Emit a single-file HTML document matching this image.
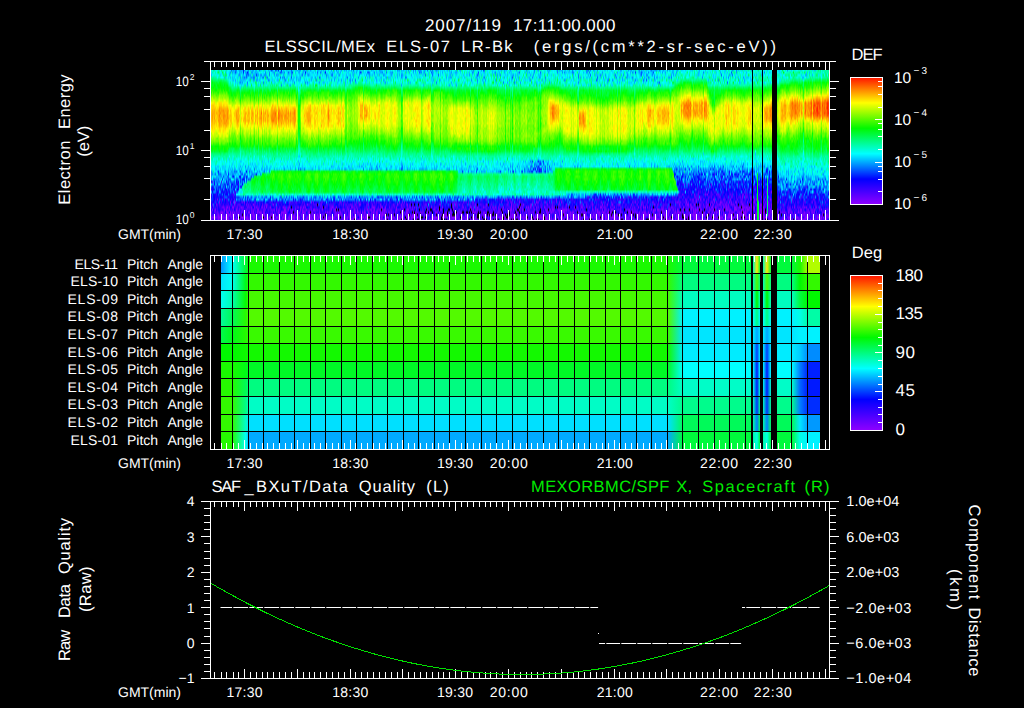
<!DOCTYPE html>
<html><head><meta charset="utf-8"><title>ELS plot</title>
<style>
html,body{margin:0;padding:0;background:#000}
#p{position:relative;width:1024px;height:708px;background:#000;overflow:hidden}
#s{position:absolute;left:211px;top:70px;width:618px;height:150px;display:flex;overflow:hidden}
#s i{display:block;width:1px;height:150px;flex:none}
svg{position:absolute;left:0;top:0}
text{font-family:"Liberation Sans",sans-serif;fill:#fff;stroke:none}
</style></head><body><div id="p">
<div id="s">
<i style="background:linear-gradient(#0fc,#0df,#0bf,#0f8,#0f5,#0f3,#0f2,#0f1,#2f0,#1f0,#5f0,#9f0,#bf0,#ff0,#fd0,#fd0,#fc0,#fb0,#fb0,#fb0,#fb0,#fc0,#fc0,#fe0,#ff0,#bf0,#cf0,#9f0,#7f0,#4f0,#0f0,#0f0,#0f2,#0f7,#0f9,#0fa,#0fd,#0fd,#0df,#0fe,#08f,#08f,#09f,#0af,#00f,#0df,#04f,#20f,#0cf,#20f,#10f,#03f,#20f,#00f,#40f,#10f,#60f,#40f,#60f,#70f)"></i>
<i style="background:linear-gradient(#0ff,#0fa,#0ff,#0f9,#0f4,#0f0,#0f2,#0f1,#2f0,#6f0,#7f0,#bf0,#cf0,#ef0,#fc0,#fc0,#fa0,#fa0,#f90,#f90,#fa0,#fb0,#fc0,#fc0,#fe0,#ef0,#bf0,#af0,#7f0,#6f0,#1f0,#0f0,#0f2,#0f7,#0fa,#0f9,#0fc,#0fe,#0ff,#0fd,#0bf,#08f,#0ff,#0ff,#50f,#09f,#10f,#10f,#00f,#06f,#04f,#03f,#10f,#60f,#10f,#80f,#20f,#40f,#70f,#40f)"></i>
<i style="background:linear-gradient(#0f8,#0fc,#0fd,#0f8,#0f6,#0f2,#0f2,#0f0,#2f0,#2f0,#6f0,#8f0,#df0,#fe0,#fc0,#fc0,#fb0,#fa0,#fb0,#fc0,#fc0,#fc0,#fd0,#fe0,#fe0,#ef0,#cf0,#9f0,#7f0,#3f0,#0f2,#1f0,#0f4,#0f7,#0f8,#0ff,#0fd,#0fe,#0ff,#0ff,#0f9,#0cf,#0cf,#06f,#08f,#09f,#03f,#10f,#07f,#00f,#00f,#10f,#00f,#07f,#50f,#10f,#10f,#40f,#80f,#30f)"></i>
<i style="background:linear-gradient(#0f8,#0fe,#0fc,#0f9,#0f6,#0f2,#0f0,#1f0,#1f0,#4f0,#7f0,#8f0,#cf0,#fd0,#fd0,#fc0,#fa0,#fa0,#fa0,#f90,#fb0,#fb0,#fd0,#fd0,#fe0,#cf0,#bf0,#af0,#8f0,#4f0,#1f0,#1f0,#0f2,#0f7,#0fa,#0fd,#0fc,#0fe,#0ff,#0fe,#0ef,#0af,#0fc,#06f,#01f,#10f,#0af,#03f,#09f,#10f,#00f,#00f,#30f,#20f,#02f,#50f,#60f,#40f,#50f,#80f)"></i>
<i style="background:linear-gradient(#0ef,#0fa,#0fd,#0f9,#0f6,#0f3,#0f1,#0f1,#0f0,#3f0,#6f0,#9f0,#bf0,#df0,#fe0,#fc0,#fc0,#fc0,#fc0,#fd0,#fb0,#fd0,#fe0,#fe0,#df0,#cf0,#bf0,#9f0,#7f0,#4f0,#0f0,#1f0,#0f3,#0f7,#0fa,#0fd,#0fc,#0fa,#0cf,#0bf,#0df,#06f,#0ef,#07f,#0af,#0af,#07f,#09f,#07f,#10f,#20f,#30f,#04f,#00f,#30f,#80f,#50f,#20f,#80f,#50f)"></i>
<i style="background:linear-gradient(#0fe,#0fe,#0fd,#0fa,#0f7,#0f2,#0f3,#0f2,#0f0,#4f0,#4f0,#8f0,#af0,#df0,#fe0,#fe0,#fc0,#fa0,#fd0,#fc0,#fc0,#fc0,#fd0,#ff0,#df0,#bf0,#cf0,#7f0,#7f0,#3f0,#0f0,#1f0,#0f3,#0f7,#0fa,#0fc,#0f9,#0fb,#0ef,#0bf,#0ef,#0df,#0af,#08f,#06f,#09f,#04f,#01f,#02f,#30f,#10f,#01f,#30f,#70f,#20f,#20f,#40f,#40f,#60f,#30f)"></i>
<i style="background:linear-gradient(#0fd,#0f8,#0ef,#0fe,#0f7,#0f3,#0f0,#0f2,#2f0,#2f0,#5f0,#7f0,#af0,#ff0,#ff0,#fd0,#fc0,#fb0,#fb0,#fc0,#fd0,#fe0,#fe0,#fe0,#ef0,#cf0,#bf0,#6f0,#7f0,#3f0,#0f0,#0f2,#0f3,#0f7,#0fa,#0fe,#0fc,#0ff,#0cf,#0ef,#09f,#0fd,#0af,#0af,#07f,#03f,#06f,#05f,#00f,#00f,#01f,#70f,#00f,#40f,#40f,#40f,#60f,#60f,#60f,#50f)"></i>
<i style="background:linear-gradient(#0fa,#0f4,#0fe,#0fa,#0f5,#0f4,#0f0,#0f0,#2f0,#1f0,#5f0,#9f0,#cf0,#fe0,#fe0,#fd0,#fa0,#fb0,#fa0,#fa0,#f90,#fc0,#fc0,#fe0,#df0,#ef0,#9f0,#8f0,#6f0,#2f0,#0f0,#0f0,#0f3,#0f7,#0fa,#0f8,#0fd,#0fe,#0cf,#0df,#02f,#05f,#0bf,#06f,#07f,#0bf,#03f,#02f,#20f,#05f,#20f,#10f,#04f,#20f,#10f,#10f,#40f,#80f,#80f,#80f)"></i>
<i style="background:linear-gradient(#0cf,#0f9,#0fa,#0fa,#0f6,#0f1,#0f1,#0f0,#2f0,#5f0,#9f0,#bf0,#ef0,#fd0,#fc0,#f90,#f80,#f90,#f70,#f90,#f90,#f90,#fa0,#fc0,#fd0,#ff0,#df0,#af0,#9f0,#7f0,#2f0,#1f0,#0f1,#0f7,#0fb,#0f9,#0fd,#0ff,#0fc,#0fe,#0cf,#07f,#0af,#0cf,#07f,#0df,#02f,#07f,#0bf,#02f,#02f,#05f,#80f,#50f,#30f,#10f,#20f,#50f,#80f,#50f)"></i>
<i style="background:linear-gradient(#0fd,#0fd,#0cf,#0fd,#0f5,#0f1,#0f0,#1f0,#3f0,#4f0,#8f0,#9f0,#cf0,#fd0,#fc0,#fa0,#fa0,#f80,#fb0,#f90,#fa0,#fa0,#fb0,#fd0,#fd0,#ef0,#ef0,#9f0,#8f0,#6f0,#2f0,#1f0,#0f3,#0f5,#0f9,#0fb,#0ff,#0ff,#0fe,#0bf,#0cf,#06f,#09f,#0bf,#0df,#05f,#01f,#03f,#08f,#02f,#00f,#40f,#01f,#40f,#30f,#30f,#60f,#70f,#80f,#80f)"></i>
<i style="background:linear-gradient(#0f6,#0df,#0ef,#0ff,#0f5,#0f2,#0f1,#0f0,#1f0,#4f0,#7f0,#9f0,#cf0,#fd0,#fc0,#fa0,#f90,#fa0,#fa0,#fb0,#f90,#fb0,#fb0,#fe0,#ff0,#ef0,#cf0,#9f0,#7f0,#3f0,#1f0,#0f1,#0f3,#0f7,#0fa,#0fc,#0ef,#0fe,#0ef,#0ff,#0ef,#0af,#08f,#0fe,#40f,#07f,#09f,#04f,#10f,#02f,#10f,#30f,#40f,#20f,#40f,#40f,#80f,#60f,#80f,#50f)"></i>
<i style="background:linear-gradient(#0fd,#0f4,#0fd,#0ff,#0f7,#0f3,#0f1,#0f1,#1f0,#3f0,#8f0,#8f0,#bf0,#ef0,#fe0,#fb0,#f90,#fa0,#fa0,#fb0,#fb0,#fb0,#fd0,#fe0,#fe0,#df0,#bf0,#af0,#7f0,#5f0,#0f1,#0f1,#0f3,#0f8,#0f9,#0ff,#0fd,#0fb,#0cf,#0cf,#0fe,#0cf,#0df,#01f,#0ef,#07f,#07f,#01f,#10f,#07f,#10f,#06f,#10f,#20f,#60f,#20f,#80f,#70f,#70f,#50f)"></i>
<i style="background:linear-gradient(#0fc,#0f9,#0f6,#0ef,#0f6,#0f3,#0f3,#0f0,#3f0,#5f0,#7f0,#af0,#cf0,#fe0,#fc0,#fb0,#f80,#f90,#f80,#f80,#fa0,#fa0,#fb0,#fd0,#fd0,#fe0,#df0,#bf0,#7f0,#6f0,#1f0,#2f0,#0f3,#0f6,#0f9,#0f9,#0ef,#0fd,#0cf,#0df,#0ff,#0cf,#04f,#0ff,#09f,#06f,#03f,#08f,#01f,#00f,#30f,#10f,#01f,#40f,#70f,#40f,#50f,#50f,#70f,#50f)"></i>
<i style="background:linear-gradient(#0fc,#0ff,#0f8,#0f7,#0f7,#0f3,#0f0,#0f1,#0f0,#5f0,#8f0,#9f0,#ef0,#fe0,#fd0,#fb0,#fa0,#f90,#f80,#f90,#f90,#f90,#fc0,#fd0,#fe0,#ef0,#df0,#af0,#8f0,#6f0,#1f0,#0f0,#0f1,#0f6,#0fa,#0fa,#0fc,#0fd,#0df,#0cf,#0bf,#0af,#0af,#0af,#09f,#03f,#06f,#04f,#10f,#05f,#05f,#50f,#20f,#10f,#50f,#80f,#60f,#50f,#60f,#50f)"></i>
<i style="background:linear-gradient(#0df,#0f7,#0f5,#0bf,#0f8,#0f3,#0f2,#1f0,#2f0,#3f0,#7f0,#8f0,#df0,#fe0,#fe0,#fb0,#fa0,#fb0,#f90,#fa0,#fa0,#f90,#fb0,#fc0,#fe0,#ef0,#cf0,#8f0,#8f0,#4f0,#1f0,#0f1,#0f1,#0f7,#0f9,#0fb,#0ff,#0ef,#0cf,#0df,#06f,#09f,#0bf,#09f,#0df,#04f,#01f,#10f,#03f,#10f,#06f,#00f,#00f,#20f,#30f,#40f,#00f,#50f,#80f,#70f)"></i>
<i style="background:linear-gradient(#0f9,#0cf,#0f6,#0fb,#0f8,#0f4,#0f1,#0f1,#1f0,#6f0,#7f0,#9f0,#bf0,#fe0,#fd0,#fb0,#fa0,#fa0,#fa0,#fa0,#f80,#fa0,#fa0,#fe0,#ff0,#ef0,#ef0,#9f0,#7f0,#4f0,#1f0,#1f0,#0f2,#0f8,#0f8,#0f9,#0fa,#0ef,#0fd,#0ef,#0df,#08f,#0bf,#07f,#10f,#08f,#0fe,#10f,#10f,#10f,#06f,#30f,#20f,#30f,#60f,#80f,#70f,#80f,#70f,#50f)"></i>
<i style="background:linear-gradient(#0fd,#0ff,#0fe,#0fe,#0fa,#0f6,#0f1,#0f0,#0f0,#3f0,#6f0,#9f0,#cf0,#ef0,#fd0,#fa0,#f90,#f80,#f80,#f80,#fa0,#fa0,#fc0,#fe0,#ff0,#cf0,#ef0,#9f0,#9f0,#2f0,#1f0,#2f0,#0f3,#0f7,#0f9,#0fd,#0ef,#0ff,#0ef,#0fe,#0df,#0ff,#06f,#0af,#07f,#01f,#05f,#06f,#20f,#00f,#03f,#30f,#30f,#30f,#80f,#30f,#80f,#50f,#80f,#80f)"></i>
<i style="background:linear-gradient(#0ff,#0ef,#0fe,#0cf,#0fc,#0f9,#0f6,#0f1,#1f0,#0f0,#4f0,#8f0,#af0,#cf0,#ef0,#fd0,#fa0,#fb0,#fb0,#fa0,#fb0,#fb0,#fd0,#ef0,#ef0,#cf0,#af0,#7f0,#7f0,#4f0,#2f0,#0f2,#0f6,#0f9,#0fa,#0df,#0ff,#0ff,#0fe,#0bf,#08f,#02f,#06f,#04f,#03f,#03f,#0af,#01f,#03f,#07f,#10f,#07f,#20f,#40f,#40f,#40f,#60f,#80f,#70f,#80f)"></i>
<i style="background:linear-gradient(#0fe,#0cf,#0af,#0fd,#0fe,#0fd,#0f9,#0f3,#0f3,#0f1,#2f0,#3f0,#7f0,#9f0,#ef0,#df0,#fe0,#fe0,#fc0,#fc0,#fe0,#fe0,#ff0,#ef0,#af0,#9f0,#6f0,#5f0,#4f0,#0f0,#1f0,#0f5,#0f7,#0f9,#0ff,#0f9,#0df,#0ef,#0bf,#0df,#0df,#0bf,#0ef,#04f,#09f,#07f,#03f,#04f,#10f,#02f,#20f,#03f,#01f,#10f,#70f,#70f,#01f,#80f,#40f,#50f)"></i>
<i style="background:linear-gradient(#0ff,#08f,#0fc,#0bf,#0ef,#0f9,#0f9,#0f4,#0f1,#1f0,#2f0,#4f0,#8f0,#af0,#ff0,#fe0,#fb0,#fc0,#fb0,#fc0,#fb0,#fd0,#fc0,#df0,#cf0,#cf0,#9f0,#5f0,#6f0,#2f0,#1f0,#0f4,#0f5,#0f9,#0fa,#0fd,#0fd,#0ff,#0ff,#0bf,#0cf,#0af,#0ef,#06f,#05f,#0bf,#09f,#08f,#07f,#02f,#10f,#10f,#80f,#50f,#10f,#30f,#80f,#80f,#60f,#30f)"></i>
<i style="background:linear-gradient(#04f,#0fa,#0ff,#0fd,#0fd,#0fe,#0fa,#0f7,#0f3,#0f0,#0f0,#4f0,#7f0,#af0,#df0,#fe0,#fe0,#fd0,#fc0,#fc0,#fc0,#fc0,#fe0,#df0,#bf0,#8f0,#6f0,#5f0,#5f0,#3f0,#0f1,#0f5,#0f5,#0f9,#0fa,#0fb,#0fe,#0fc,#0cf,#0df,#09f,#0bf,#0bf,#0fe,#06f,#02f,#10f,#05f,#04f,#20f,#01f,#40f,#10f,#04f,#20f,#40f,#40f,#50f,#70f,#50f)"></i>
<i style="background:linear-gradient(#0cf,#09f,#0df,#0bf,#0cf,#0fb,#0f8,#0f9,#0f5,#0f2,#0f1,#3f0,#4f0,#9f0,#af0,#ff0,#ff0,#ff0,#ff0,#ff0,#ff0,#df0,#cf0,#af0,#af0,#7f0,#6f0,#4f0,#2f0,#0f0,#0f1,#0f5,#0f8,#0fa,#0fc,#0ef,#0fe,#0cf,#0ef,#0af,#0af,#08f,#03f,#0ff,#08f,#00f,#07f,#05f,#02f,#30f,#10f,#10f,#00f,#30f,#80f,#30f,#70f,#80f,#50f,#60f)"></i>
<i style="background:linear-gradient(#08f,#0cf,#0ef,#0df,#0bf,#0fd,#0fa,#0f8,#0f5,#0f1,#2f0,#2f0,#5f0,#8f0,#cf0,#ef0,#ff0,#fe0,#ff0,#fe0,#fe0,#ef0,#ef0,#cf0,#bf0,#8f0,#5f0,#4f0,#4f0,#2f0,#0f0,#0f6,#0f6,#0f9,#0fd,#0fb,#0df,#0ef,#0fe,#0fd,#0bf,#09f,#00f,#0fc,#06f,#04f,#03f,#02f,#09f,#40f,#40f,#10f,#80f,#10f,#80f,#60f,#50f,#80f,#70f,#30f)"></i>
<i style="background:linear-gradient(#0bf,#0bf,#0df,#0cf,#0fd,#0ff,#0ff,#0f8,#0f4,#0f1,#1f0,#5f0,#6f0,#9f0,#cf0,#df0,#fe0,#fc0,#fc0,#fe0,#fd0,#fe0,#ef0,#cf0,#af0,#6f0,#6f0,#5f0,#3f0,#1f0,#0f0,#0f4,#0f5,#0f9,#0fa,#0f9,#0fe,#0fd,#0cf,#0af,#06f,#0bf,#07f,#08f,#04f,#04f,#03f,#01f,#40f,#05f,#01f,#60f,#08f,#80f,#30f,#00f,#70f,#60f,#50f,#80f)"></i>
<i style="background:linear-gradient(#08f,#05f,#0df,#0ff,#0af,#0cf,#0f9,#0f7,#0f4,#0f1,#1f0,#3f0,#af0,#9f0,#ff0,#ff0,#fc0,#fc0,#fc0,#fd0,#fd0,#fe0,#ef0,#ef0,#af0,#9f0,#6f0,#4f0,#3f0,#0f0,#1f0,#0f2,#0f5,#0f8,#0fb,#0fb,#0ef,#0fe,#0fe,#0bf,#08f,#0af,#0ff,#0bf,#0bf,#07f,#01f,#0df,#30f,#30f,#20f,#01f,#80f,#40f,#30f,#30f,#40f,#60f,#40f,#80f)"></i>
<i style="background:linear-gradient(#08f,#0af,#0ef,#0fd,#0ef,#0fd,#0fe,#0f8,#0f3,#2f0,#2f0,#6f0,#9f0,#cf0,#ff0,#fe0,#fb0,#f90,#f90,#f90,#fb0,#fc0,#fd0,#ff0,#df0,#bf0,#af0,#6f0,#5f0,#3f0,#0f0,#0f2,#0f5,#0f8,#0f8,#0fe,#0fb,#0fc,#0fb,#0ff,#06f,#0df,#0bf,#04f,#00f,#03f,#08f,#05f,#05f,#0ff,#04f,#0bf,#20f,#20f,#40f,#80f,#60f,#30f,#80f,#80f)"></i>
<i style="background:linear-gradient(#0ff,#0df,#0fd,#0cf,#0fa,#0cf,#0f8,#0f6,#0f1,#1f0,#4f0,#6f0,#9f0,#cf0,#fe0,#fd0,#fa0,#fb0,#fa0,#fa0,#f90,#fa0,#fc0,#fd0,#ef0,#ef0,#8f0,#9f0,#5f0,#4f0,#1f0,#0f3,#0f5,#0f8,#0fa,#0fd,#0ff,#0fe,#0ff,#0ef,#0bf,#0cf,#0df,#04f,#03f,#01f,#06f,#00f,#05f,#0ff,#03f,#05f,#10f,#40f,#60f,#50f,#50f,#80f,#20f,#80f)"></i>
<i style="background:linear-gradient(#0cf,#0ff,#0af,#0df,#0ef,#0fb,#0fc,#0f4,#0f2,#2f0,#3f0,#4f0,#8f0,#bf0,#ef0,#fb0,#fa0,#fa0,#fb0,#fa0,#f90,#fc0,#fc0,#ff0,#df0,#bf0,#8f0,#7f0,#5f0,#4f0,#2f0,#0f3,#0f6,#0f8,#0fb,#0ff,#0fe,#0ef,#0df,#0cf,#0ff,#0bf,#0cf,#09f,#00f,#30f,#10f,#20f,#0df,#0fe,#03f,#06f,#01f,#50f,#20f,#30f,#60f,#80f,#80f,#80f)"></i>
<i style="background:linear-gradient(#0af,#0af,#08f,#0fb,#0fb,#0af,#0fd,#0f9,#0f3,#0f1,#2f0,#4f0,#5f0,#9f0,#ef0,#fd0,#fd0,#fe0,#fb0,#fc0,#fd0,#fe0,#ef0,#df0,#cf0,#8f0,#7f0,#5f0,#5f0,#2f0,#1f0,#0f6,#0f6,#0f9,#0fa,#0fd,#0fc,#0df,#0df,#0af,#0af,#0ff,#00f,#0bf,#0cf,#0af,#09f,#0fc,#0fd,#0ff,#05f,#07f,#20f,#50f,#40f,#70f,#50f,#50f,#000,#80f)"></i>
<i style="background:linear-gradient(#09f,#0bf,#0bf,#09f,#0bf,#08f,#0fe,#0cf,#0f8,#0f5,#0f4,#0f2,#1f0,#4f0,#8f0,#af0,#bf0,#bf0,#cf0,#cf0,#bf0,#bf0,#8f0,#6f0,#6f0,#5f0,#1f0,#0f0,#0f3,#0f2,#0f5,#0f7,#0fb,#0fd,#0fe,#0fd,#0cf,#0fd,#0af,#0fe,#04f,#0af,#00f,#04f,#03f,#09f,#20f,#0fe,#0df,#0fb,#08f,#03f,#10f,#40f,#50f,#30f,#30f,#60f,#60f,#80f)"></i>
<i style="background:linear-gradient(#0bf,#0af,#0fe,#0fb,#0bf,#0cf,#0cf,#0f8,#0f4,#0f1,#2f0,#3f0,#7f0,#9f0,#cf0,#ef0,#ff0,#fd0,#fe0,#fc0,#fd0,#ff0,#ef0,#bf0,#bf0,#9f0,#6f0,#3f0,#1f0,#1f0,#0f0,#0f5,#0f8,#0f8,#0f9,#0fb,#0df,#0ff,#0ef,#0af,#0bf,#06f,#0cf,#07f,#08f,#09f,#10f,#0df,#0df,#0fc,#08f,#06f,#40f,#00f,#80f,#40f,#70f,#30f,#80f,#20f)"></i>
<i style="background:linear-gradient(#0af,#0df,#0cf,#0af,#0cf,#09f,#0fe,#0f9,#0f4,#0f0,#0f1,#2f0,#5f0,#9f0,#df0,#df0,#ff0,#ef0,#ef0,#fe0,#ff0,#ef0,#df0,#bf0,#8f0,#6f0,#5f0,#4f0,#2f0,#2f0,#0f2,#0f5,#0f7,#0f7,#0fb,#0fe,#0ff,#0ff,#0cf,#0fd,#0bf,#05f,#0fe,#01f,#05f,#00f,#0f9,#0f8,#0ef,#0fc,#0af,#03f,#60f,#01f,#60f,#60f,#30f,#000,#80f,#60f)"></i>
<i style="background:linear-gradient(#02f,#02f,#0bf,#0af,#0bf,#0fe,#0df,#0f6,#0f3,#0f1,#2f0,#3f0,#7f0,#9f0,#bf0,#ff0,#fd0,#fd0,#fe0,#fc0,#fb0,#ef0,#ff0,#cf0,#af0,#9f0,#6f0,#5f0,#4f0,#2f0,#0f1,#0f3,#0f8,#0f9,#0fc,#0fc,#0ff,#0cf,#0fe,#0fd,#0ef,#0df,#06f,#00f,#0bf,#0bf,#0fa,#0f9,#0f8,#0f7,#03f,#0bf,#30f,#10f,#60f,#40f,#40f,#80f,#80f,#40f)"></i>
<i style="background:linear-gradient(#08f,#0ef,#0ff,#06f,#0cf,#0df,#0f8,#0f7,#0f3,#0f0,#5f0,#4f0,#7f0,#bf0,#cf0,#fd0,#fc0,#fc0,#fb0,#fa0,#fb0,#fc0,#fe0,#ef0,#cf0,#cf0,#9f0,#5f0,#4f0,#3f0,#1f0,#0f4,#0f6,#0f9,#0fa,#0fc,#0fe,#0fe,#0fe,#0ff,#0ff,#06f,#04f,#02f,#03f,#0f8,#0f6,#0f6,#0f9,#0f8,#0df,#09f,#80f,#40f,#10f,#40f,#70f,#80f,#80f,#70f)"></i>
<i style="background:linear-gradient(#0bf,#09f,#0df,#0af,#0cf,#0ef,#0f7,#0f6,#0f3,#1f0,#2f0,#5f0,#8f0,#bf0,#df0,#fc0,#fd0,#fa0,#fa0,#fa0,#fa0,#fb0,#fe0,#ef0,#df0,#bf0,#af0,#8f0,#6f0,#2f0,#2f0,#0f3,#0f5,#0f6,#0fa,#0ff,#0fd,#0fe,#08f,#0cf,#0bf,#07f,#09f,#0ff,#0df,#0f6,#0f3,#0f8,#0f7,#0fb,#03f,#03f,#00f,#10f,#20f,#40f,#30f,#40f,#70f,#30f)"></i>
<i style="background:linear-gradient(#0ef,#09f,#05f,#06f,#0fe,#0fc,#0df,#0f8,#0f4,#1f0,#1f0,#5f0,#7f0,#af0,#cf0,#ef0,#fe0,#fb0,#fe0,#fd0,#fc0,#ff0,#ef0,#df0,#bf0,#9f0,#7f0,#6f0,#3f0,#2f0,#1f0,#0f3,#0f7,#0f8,#0fc,#0fe,#0fd,#0ef,#0fd,#0df,#00f,#0fd,#01f,#03f,#05f,#0f9,#0f6,#0f8,#0f7,#0fd,#0af,#0af,#20f,#70f,#20f,#60f,#60f,#20f,#80f,#80f)"></i>
<i style="background:linear-gradient(#0fe,#01f,#08f,#0bf,#0ff,#07f,#0af,#0f7,#0f3,#0f0,#3f0,#5f0,#8f0,#9f0,#df0,#fe0,#fd0,#fd0,#fb0,#fc0,#fb0,#fe0,#fc0,#df0,#cf0,#9f0,#7f0,#4f0,#4f0,#2f0,#0f2,#0f5,#0f6,#0f9,#0fa,#0fb,#0fe,#0ff,#0ef,#0af,#0af,#0af,#05f,#0af,#0f9,#0f4,#0f7,#0f8,#0f7,#0fe,#04f,#20f,#50f,#30f,#60f,#40f,#20f,#60f,#70f,#80f)"></i>
<i style="background:linear-gradient(#08f,#08f,#05f,#0fe,#0df,#0ff,#0fb,#0f7,#0f3,#0f0,#2f0,#6f0,#8f0,#bf0,#ef0,#fc0,#fb0,#fa0,#fb0,#fc0,#fa0,#fb0,#ff0,#ef0,#bf0,#af0,#9f0,#6f0,#5f0,#4f0,#2f0,#0f3,#0f6,#0f9,#0f9,#0f8,#0fb,#0fa,#0af,#0cf,#0fc,#0ff,#0ff,#04f,#0f7,#0f5,#0f8,#0f6,#0f9,#0fd,#04f,#09f,#00f,#60f,#50f,#30f,#80f,#30f,#50f,#80f)"></i>
<i style="background:linear-gradient(#0fb,#0ef,#0bf,#0df,#0bf,#0fd,#0fe,#0f8,#0f1,#0f0,#2f0,#5f0,#8f0,#af0,#ef0,#fe0,#fc0,#fb0,#fc0,#fb0,#fb0,#fe0,#ff0,#ef0,#cf0,#cf0,#8f0,#5f0,#2f0,#2f0,#1f0,#0f4,#0f4,#0f8,#0fc,#0fc,#0ff,#0fc,#0ef,#0cf,#06f,#0af,#0cf,#06f,#0f6,#0f7,#0f6,#0f8,#0f9,#0fd,#0cf,#02f,#30f,#30f,#50f,#40f,#80f,#40f,#60f,#50f)"></i>
<i style="background:linear-gradient(#0bf,#0fb,#0af,#0af,#0f5,#0fb,#0ef,#0f8,#0f3,#0f3,#0f0,#2f0,#4f0,#9f0,#cf0,#bf0,#ff0,#fe0,#fe0,#ff0,#fe0,#df0,#ef0,#bf0,#af0,#7f0,#5f0,#3f0,#1f0,#0f0,#0f1,#0f6,#0f7,#0fb,#0f8,#0fd,#0fc,#0cf,#0fe,#0af,#0bf,#0df,#09f,#05f,#0f5,#0f7,#0f7,#0f9,#0f8,#0fd,#09f,#05f,#00f,#40f,#40f,#30f,#10f,#80f,#000,#80f)"></i>
<i style="background:linear-gradient(#0df,#09f,#0ef,#09f,#0df,#0fd,#0f3,#0f7,#0f4,#2f0,#3f0,#5f0,#8f0,#bf0,#ef0,#fd0,#fb0,#fb0,#fb0,#f90,#fc0,#fc0,#fe0,#ff0,#cf0,#cf0,#8f0,#4f0,#4f0,#2f0,#2f0,#0f4,#0f5,#0f9,#0fa,#0fe,#0ff,#0ef,#0df,#0ef,#09f,#0af,#04f,#0f3,#0f3,#0f3,#0f4,#0f5,#0f7,#0fb,#04f,#07f,#30f,#10f,#70f,#60f,#60f,#50f,#60f,#80f)"></i>
<i style="background:linear-gradient(#0af,#09f,#0fa,#0af,#0fb,#0ef,#0fd,#0f7,#0f2,#1f0,#1f0,#4f0,#7f0,#cf0,#fe0,#fc0,#fb0,#f90,#fa0,#fb0,#fa0,#fc0,#ff0,#ff0,#df0,#cf0,#8f0,#7f0,#5f0,#4f0,#1f0,#0f3,#0f6,#0f7,#0f9,#0fa,#0fd,#0bf,#0ff,#0ff,#0bf,#07f,#0cf,#0f3,#0f1,#0f2,#0f4,#0f5,#0f6,#0fe,#09f,#0cf,#20f,#30f,#20f,#50f,#60f,#70f,#50f,#40f)"></i>
<i style="background:linear-gradient(#09f,#0df,#0af,#07f,#09f,#0fb,#0ef,#0f9,#0f4,#0f0,#2f0,#4f0,#6f0,#9f0,#cf0,#df0,#fd0,#fb0,#fb0,#fc0,#fc0,#fd0,#ef0,#cf0,#bf0,#af0,#6f0,#5f0,#3f0,#2f0,#0f1,#0f6,#0f7,#0f9,#0fb,#0ef,#0ef,#0ff,#0cf,#0ef,#0fd,#09f,#07f,#0f2,#0f1,#0f2,#0f4,#0f3,#0f6,#0fa,#0cf,#0af,#00f,#80f,#00f,#60f,#80f,#70f,#80f,#70f)"></i>
<i style="background:linear-gradient(#0fe,#0cf,#0bf,#07f,#0af,#0fc,#0ff,#0fc,#0f8,#0f3,#0f2,#0f0,#4f0,#7f0,#8f0,#df0,#ff0,#ef0,#ff0,#ef0,#ff0,#bf0,#cf0,#9f0,#7f0,#6f0,#4f0,#1f0,#0f0,#0f1,#0f5,#0f7,#0fa,#0f9,#0ff,#0fd,#0fe,#0df,#0ef,#06f,#0bf,#09f,#0f3,#0f2,#0f0,#0f2,#0f3,#0f5,#0f6,#0fa,#09f,#04f,#40f,#50f,#70f,#50f,#20f,#80f,#80f,#50f)"></i>
<i style="background:linear-gradient(#0bf,#0af,#0bf,#0fa,#0fb,#0f5,#0fa,#0f6,#0f2,#0f0,#3f0,#5f0,#8f0,#9f0,#ff0,#fe0,#fb0,#fc0,#fa0,#fb0,#fa0,#fc0,#ff0,#ff0,#cf0,#bf0,#8f0,#8f0,#5f0,#3f0,#2f0,#0f4,#0f6,#0fa,#0f9,#0fb,#0fe,#0df,#0bf,#0fb,#0ff,#07f,#0f2,#0f0,#0f2,#0f3,#0f5,#0f5,#0f6,#0f9,#07f,#02f,#50f,#30f,#40f,#40f,#50f,#30f,#40f,#50f)"></i>
<i style="background:linear-gradient(#0bf,#0bf,#02f,#0df,#09f,#0f6,#0f6,#0f7,#0f4,#1f0,#2f0,#3f0,#5f0,#bf0,#ef0,#fd0,#fd0,#fe0,#fb0,#fc0,#fd0,#fe0,#ff0,#df0,#af0,#8f0,#8f0,#6f0,#3f0,#3f0,#0f1,#0f3,#0f7,#0f8,#0fb,#0fc,#0fc,#0fd,#0cf,#0bf,#0ef,#01f,#0f2,#0f2,#0f4,#0f5,#0f3,#0f6,#0f7,#0fd,#07f,#0fb,#01f,#20f,#70f,#20f,#40f,#10f,#80f,#10f)"></i>
<i style="background:linear-gradient(#0fe,#0bf,#0af,#0af,#0af,#0fe,#0fa,#0f7,#0f2,#1f0,#3f0,#6f0,#8f0,#bf0,#fe0,#fc0,#fb0,#f90,#fa0,#fb0,#fb0,#fa0,#fd0,#fe0,#df0,#bf0,#9f0,#7f0,#6f0,#4f0,#0f0,#0f1,#0f6,#0f6,#0fa,#0fd,#0ef,#0fc,#0df,#0ff,#09f,#0cf,#0f5,#0f1,#0f2,#0f4,#0f5,#0f6,#0f7,#0f9,#0df,#0cf,#03f,#40f,#50f,#70f,#80f,#50f,#30f,#70f)"></i>
<i style="background:linear-gradient(#0fc,#0df,#09f,#0ff,#0df,#0fa,#0cf,#0f7,#0f6,#0f3,#0f4,#2f0,#3f0,#6f0,#af0,#df0,#fe0,#fe0,#ff0,#fd0,#fe0,#ff0,#df0,#9f0,#7f0,#7f0,#5f0,#2f0,#1f0,#0f2,#0f4,#0f7,#0f8,#0f8,#0fc,#0ff,#0ef,#0df,#0ef,#0df,#0df,#0df,#0f3,#0f2,#0f5,#0f5,#0f5,#0f3,#0f9,#0fc,#07f,#0ff,#10f,#01f,#40f,#80f,#60f,#30f,#50f,#40f)"></i>
<i style="background:linear-gradient(#06f,#0ff,#0ef,#0fb,#0bf,#0fd,#0fd,#0f6,#0f3,#0f1,#4f0,#5f0,#8f0,#bf0,#fe0,#fd0,#fb0,#fb0,#fb0,#fa0,#fb0,#fc0,#fd0,#ff0,#df0,#cf0,#bf0,#7f0,#5f0,#3f0,#2f0,#0f3,#0f5,#0f7,#0f9,#0f9,#0fd,#0ef,#0ff,#0ef,#09f,#0fe,#0f3,#0f4,#0f3,#0f5,#0f4,#0f6,#0f7,#0df,#0bf,#08f,#40f,#40f,#40f,#20f,#80f,#30f,#60f,#40f)"></i>
<i style="background:linear-gradient(#0bf,#0fc,#09f,#0bf,#0df,#0cf,#0f5,#0f7,#0f1,#1f0,#2f0,#6f0,#7f0,#bf0,#ff0,#fd0,#fc0,#fb0,#fa0,#f90,#fb0,#fb0,#fd0,#ef0,#ef0,#df0,#bf0,#6f0,#4f0,#3f0,#1f0,#0f2,#0f6,#0f7,#0f9,#0fa,#0fe,#0ff,#0fe,#0ff,#0df,#08f,#0f4,#0f1,#0f3,#0f3,#0f5,#0f4,#0f6,#0fc,#0cf,#08f,#20f,#20f,#00f,#40f,#80f,#60f,#60f,#80f)"></i>
<i style="background:linear-gradient(#0cf,#0fe,#08f,#0df,#0ff,#0fa,#0df,#0f7,#0f1,#2f0,#5f0,#6f0,#af0,#df0,#fe0,#fc0,#f90,#f60,#f90,#f80,#f90,#fa0,#fc0,#fd0,#ff0,#df0,#af0,#8f0,#7f0,#5f0,#2f0,#0f2,#0f4,#0f7,#0f9,#0fa,#0fa,#0fc,#0ef,#0af,#0ef,#0cf,#0f1,#0f0,#0f0,#1f0,#0f3,#0f3,#0f4,#0f9,#08f,#0af,#10f,#00f,#60f,#40f,#70f,#80f,#70f,#30f)"></i>
<i style="background:linear-gradient(#0fc,#0ef,#0ef,#08f,#0fe,#0fa,#0fd,#0f9,#0f7,#0f4,#0f1,#2f0,#5f0,#9f0,#bf0,#ef0,#ff0,#fe0,#fd0,#fd0,#fd0,#ef0,#ef0,#bf0,#9f0,#9f0,#5f0,#3f0,#2f0,#0f0,#0f3,#0f6,#0f8,#0f9,#0fe,#0fb,#0cf,#0df,#0bf,#0bf,#0cf,#0f1,#1f0,#1f0,#0f0,#0f1,#0f2,#0f3,#0f1,#0fc,#06f,#0bf,#30f,#60f,#70f,#30f,#30f,#50f,#60f,#70f)"></i>
<i style="background:linear-gradient(#0f9,#0df,#0cf,#07f,#0ff,#07f,#0f7,#0f7,#0f4,#1f0,#3f0,#5f0,#9f0,#bf0,#ff0,#fd0,#fb0,#fa0,#fa0,#f90,#fa0,#fc0,#fd0,#ff0,#df0,#cf0,#8f0,#6f0,#5f0,#4f0,#2f0,#0f3,#0f5,#0f8,#0fa,#0fc,#0fd,#0fb,#0fb,#0ef,#0af,#0f0,#1f0,#1f0,#1f0,#0f0,#0f2,#0f3,#0f6,#0f8,#0cf,#06f,#00f,#20f,#30f,#60f,#70f,#70f,#000,#80f)"></i>
<i style="background:linear-gradient(#0bf,#0ff,#08f,#0fc,#0ef,#0f9,#0fb,#0f8,#0f2,#0f2,#2f0,#1f0,#8f0,#9f0,#df0,#df0,#fe0,#fb0,#fb0,#fc0,#fc0,#ff0,#df0,#cf0,#9f0,#9f0,#7f0,#4f0,#3f0,#3f0,#2f0,#0f2,#0f8,#0f8,#0ff,#0fc,#0df,#0ef,#0df,#0af,#07f,#0f3,#0f0,#0f1,#0f2,#0f2,#0f2,#0f4,#0f5,#0fd,#09f,#02f,#01f,#40f,#70f,#60f,#70f,#80f,#80f,#50f)"></i>
<i style="background:linear-gradient(#0df,#08f,#09f,#0f4,#0fb,#0df,#0fc,#0f6,#0f4,#0f0,#4f0,#5f0,#6f0,#cf0,#df0,#fe0,#fb0,#f90,#fc0,#fa0,#fa0,#fd0,#fe0,#df0,#cf0,#af0,#8f0,#7f0,#5f0,#1f0,#1f0,#0f2,#0f5,#0f9,#0fa,#0fd,#0ff,#0fb,#0ff,#0cf,#0ef,#0f3,#0f2,#0f0,#0f1,#0f3,#0f5,#0f3,#0f5,#0f9,#06f,#0df,#06f,#50f,#20f,#60f,#10f,#40f,#40f,#70f)"></i>
<i style="background:linear-gradient(#0ef,#0fb,#0bf,#09f,#0fc,#0f8,#0ef,#0f7,#0f4,#0f3,#1f0,#3f0,#5f0,#af0,#df0,#cf0,#fc0,#fd0,#fc0,#fd0,#fd0,#ef0,#ef0,#bf0,#bf0,#8f0,#7f0,#4f0,#4f0,#3f0,#0f1,#0f4,#0f7,#0fb,#0fb,#0fe,#0fe,#0ef,#0bf,#0bf,#0bf,#0f7,#0f2,#0f3,#0f4,#0f4,#0f6,#0f7,#0f6,#0fa,#04f,#0df,#01f,#70f,#80f,#00f,#30f,#60f,#80f,#50f)"></i>
<i style="background:linear-gradient(#0fe,#0df,#0fe,#07f,#0df,#0fd,#0fb,#0f6,#0f2,#1f0,#2f0,#6f0,#7f0,#af0,#ef0,#fe0,#fb0,#fa0,#fa0,#fa0,#fa0,#fb0,#fd0,#fe0,#df0,#cf0,#af0,#7f0,#4f0,#5f0,#1f0,#0f2,#0f5,#0f8,#0f8,#0fc,#0fe,#0ff,#0cf,#0bf,#0ff,#0f4,#0f0,#0f3,#0f3,#0f5,#0f7,#0f5,#0f6,#0fc,#0bf,#09f,#00f,#50f,#30f,#30f,#20f,#80f,#80f,#70f)"></i>
<i style="background:linear-gradient(#0af,#0fd,#0fc,#0fc,#07f,#0fd,#0fa,#0f8,#0f2,#0f0,#3f0,#6f0,#9f0,#af0,#ef0,#fe0,#fd0,#fc0,#f90,#fc0,#fb0,#fd0,#fd0,#df0,#bf0,#cf0,#8f0,#5f0,#3f0,#3f0,#1f0,#0f4,#0f5,#0f8,#0fa,#0f9,#0cf,#0fe,#0ff,#0ef,#0fc,#0f4,#0f1,#0f0,#0f2,#0f4,#0f5,#0f5,#0f6,#0ef,#0df,#04f,#10f,#20f,#30f,#50f,#40f,#20f,#40f,#80f)"></i>
<i style="background:linear-gradient(#0ef,#08f,#07f,#0fe,#09f,#0f9,#0fb,#0f9,#0f5,#1f0,#0f1,#4f0,#7f0,#9f0,#cf0,#ff0,#ff0,#fd0,#fd0,#fd0,#fd0,#fe0,#df0,#cf0,#9f0,#8f0,#7f0,#4f0,#3f0,#2f0,#0f1,#0f6,#0f8,#0f9,#0fa,#0fe,#0fe,#0fe,#0ef,#0af,#08f,#0f3,#0f0,#0f2,#0f3,#0f4,#0f4,#0f4,#0f8,#0fa,#0cf,#02f,#30f,#10f,#40f,#30f,#20f,#30f,#80f,#30f)"></i>
<i style="background:linear-gradient(#09f,#0ff,#0fe,#0ef,#0fd,#0ef,#0f8,#0f7,#0f6,#0f0,#1f0,#4f0,#6f0,#af0,#df0,#ff0,#fd0,#fc0,#fb0,#fc0,#fd0,#fd0,#ef0,#cf0,#bf0,#af0,#8f0,#5f0,#5f0,#3f0,#0f0,#0f4,#0f4,#0f9,#0fb,#0fd,#0f9,#0fd,#0cf,#0cf,#0fb,#0f1,#2f0,#0f1,#0f2,#0f1,#0f1,#0f4,#0f4,#0fb,#02f,#03f,#40f,#20f,#80f,#40f,#40f,#60f,#80f,#80f)"></i>
<i style="background:linear-gradient(#02f,#0ef,#0df,#0fb,#0df,#0f5,#0fa,#0f6,#0f1,#2f0,#3f0,#6f0,#9f0,#df0,#ff0,#fb0,#fa0,#fa0,#f90,#f80,#f90,#fc0,#fd0,#fd0,#df0,#df0,#7f0,#7f0,#6f0,#4f0,#2f0,#0f3,#0f5,#0f7,#0fa,#0fb,#0fa,#0fe,#0df,#0fe,#0f0,#3f0,#2f0,#0f0,#0f0,#0f0,#0f1,#0f3,#0f3,#0ff,#0bf,#0fd,#30f,#03f,#20f,#60f,#40f,#80f,#000,#60f)"></i>
<i style="background:linear-gradient(#07f,#0cf,#0ff,#0df,#0cf,#0df,#0f6,#0f6,#0f2,#0f0,#4f0,#9f0,#af0,#df0,#fb0,#fb0,#fa0,#f90,#f80,#f80,#f70,#fa0,#fb0,#fd0,#ef0,#ef0,#af0,#8f0,#7f0,#5f0,#4f0,#0f1,#0f5,#0f9,#0f9,#0f8,#0fb,#0fb,#0ff,#0ef,#2f0,#1f0,#3f0,#3f0,#1f0,#0f0,#0f0,#0f1,#0f2,#0fb,#06f,#07f,#40f,#50f,#00f,#50f,#60f,#80f,#70f,#80f)"></i>
<i style="background:linear-gradient(#0df,#0af,#0fd,#0ff,#0df,#0ef,#0fa,#0f6,#0f2,#1f0,#2f0,#5f0,#af0,#cf0,#fd0,#fd0,#fa0,#f80,#f90,#f80,#f70,#fb0,#fe0,#fe0,#ff0,#cf0,#af0,#8f0,#5f0,#5f0,#2f0,#0f2,#0f3,#0f6,#0f8,#0fd,#0fc,#0fe,#0fd,#0fc,#0f0,#4f0,#4f0,#1f0,#0f1,#0f2,#0f0,#0f2,#0f4,#0fc,#0af,#06f,#00f,#80f,#10f,#60f,#20f,#50f,#70f,#50f)"></i>
<i style="background:linear-gradient(#0ff,#09f,#09f,#0fe,#0fa,#0cf,#0f7,#0f6,#0f0,#1f0,#5f0,#6f0,#bf0,#ff0,#fe0,#fb0,#f90,#f80,#f80,#f80,#f90,#fb0,#fd0,#fe0,#df0,#df0,#af0,#7f0,#5f0,#5f0,#1f0,#0f1,#0f6,#0f6,#0f9,#0f5,#0fc,#0fe,#0ef,#0af,#0f0,#2f0,#2f0,#2f0,#0f0,#0f1,#0f2,#0f3,#0f5,#0fe,#0fd,#07f,#30f,#20f,#30f,#70f,#50f,#60f,#50f,#80f)"></i>
<i style="background:linear-gradient(#04f,#0fb,#0fe,#0cf,#0ff,#0fb,#0fc,#0f6,#0f2,#3f0,#4f0,#6f0,#9f0,#ef0,#fd0,#fb0,#fa0,#f60,#f70,#f90,#f90,#fa0,#fc0,#fe0,#ef0,#cf0,#af0,#9f0,#7f0,#4f0,#1f0,#0f0,#0f4,#0f7,#0f8,#0fb,#0fe,#0ef,#0fc,#0fe,#0f2,#0f0,#0f0,#0f0,#0f1,#0f3,#0f3,#0f3,#0f4,#0ff,#0df,#07f,#20f,#40f,#02f,#10f,#30f,#80f,#40f,#70f)"></i>
<i style="background:linear-gradient(#05f,#0fd,#08f,#0ff,#0df,#0fe,#0f5,#0f7,#0f1,#2f0,#3f0,#7f0,#af0,#df0,#fe0,#fd0,#fa0,#fa0,#fa0,#f90,#f90,#f90,#fd0,#fe0,#ef0,#df0,#af0,#7f0,#7f0,#3f0,#3f0,#0f4,#0f6,#0f9,#0f9,#0fc,#0ff,#0fb,#0fe,#0cf,#0f2,#2f0,#0f0,#0f1,#0f2,#0f2,#0f4,#0f4,#0f5,#0fa,#0ef,#00f,#20f,#07f,#70f,#80f,#40f,#20f,#80f,#40f)"></i>
<i style="background:linear-gradient(#0bf,#0cf,#0af,#0cf,#0bf,#0fc,#0f8,#0f9,#0f7,#0f3,#0f1,#2f0,#5f0,#8f0,#cf0,#ef0,#fd0,#ff0,#fd0,#fc0,#fd0,#ff0,#cf0,#bf0,#bf0,#9f0,#5f0,#3f0,#1f0,#0f1,#0f4,#0f6,#0f7,#0fb,#0fa,#0fd,#0fe,#0ef,#0fd,#0cf,#0f0,#1f0,#1f0,#1f0,#0f2,#0f2,#0f3,#0f2,#0f6,#0f8,#0df,#0af,#40f,#10f,#30f,#30f,#50f,#30f,#80f,#40f)"></i>
<i style="background:linear-gradient(#00f,#0df,#0af,#0fe,#0bf,#0f9,#0fa,#0f5,#2f0,#3f0,#4f0,#8f0,#cf0,#df0,#fd0,#fa0,#f90,#f60,#f70,#f60,#f80,#fa0,#fb0,#ff0,#ef0,#cf0,#cf0,#9f0,#6f0,#6f0,#1f0,#0f1,#0f5,#0f6,#0f9,#0fc,#0fe,#0fd,#0ff,#0ef,#0f1,#2f0,#3f0,#1f0,#1f0,#0f1,#0f0,#0f2,#0f3,#0fa,#0ef,#0ef,#30f,#30f,#10f,#60f,#80f,#70f,#70f,#80f)"></i>
<i style="background:linear-gradient(#0ff,#0af,#0fb,#0ef,#0f5,#0fa,#0fe,#0f7,#0f2,#2f0,#3f0,#5f0,#cf0,#ef0,#ff0,#fc0,#f80,#f80,#f70,#f80,#fa0,#fb0,#fc0,#fd0,#ff0,#df0,#bf0,#8f0,#5f0,#4f0,#1f0,#0f1,#0f5,#0f7,#0f9,#0fc,#0ff,#0ff,#0ff,#0cf,#1f0,#3f0,#2f0,#1f0,#2f0,#0f0,#0f1,#0f1,#0f3,#0fe,#0af,#06f,#20f,#10f,#50f,#60f,#50f,#30f,#80f,#30f)"></i>
<i style="background:linear-gradient(#0fe,#05f,#0fb,#06f,#0ef,#0fa,#0fb,#0f7,#0f2,#1f0,#4f0,#5f0,#9f0,#df0,#ef0,#fe0,#fb0,#f90,#f90,#fa0,#fa0,#fc0,#fd0,#ff0,#ef0,#cf0,#9f0,#7f0,#6f0,#3f0,#1f0,#0f4,#0f3,#0fa,#0f9,#0fd,#0df,#0fe,#0df,#0ff,#1f0,#2f0,#2f0,#2f0,#1f0,#0f1,#0f1,#0f2,#0f3,#0fa,#05f,#0af,#30f,#10f,#30f,#30f,#10f,#50f,#40f,#80f)"></i>
<i style="background:linear-gradient(#01f,#06f,#0fe,#0ef,#0ff,#0f9,#08f,#0f6,#0f2,#2f0,#4f0,#7f0,#af0,#cf0,#ff0,#fb0,#fb0,#fa0,#f80,#f90,#fa0,#f90,#fc0,#fe0,#cf0,#cf0,#9f0,#7f0,#5f0,#4f0,#2f0,#0f4,#0f6,#0f7,#0fa,#0f7,#0fe,#0fb,#0ff,#0cf,#1f0,#2f0,#4f0,#3f0,#3f0,#2f0,#1f0,#0f0,#0f3,#0f7,#06f,#06f,#20f,#30f,#10f,#10f,#80f,#80f,#30f,#50f)"></i>
<i style="background:linear-gradient(#0ff,#0af,#0ff,#08f,#0df,#0fe,#0fd,#0f8,#0f3,#2f0,#4f0,#5f0,#6f0,#bf0,#ef0,#fd0,#fa0,#fa0,#f90,#f90,#fa0,#fc0,#fe0,#ef0,#cf0,#af0,#af0,#5f0,#5f0,#3f0,#0f0,#0f2,#0f5,#0f8,#0f9,#0fe,#0fd,#0fb,#0ff,#0ef,#1f0,#3f0,#3f0,#3f0,#1f0,#0f1,#0f0,#0f3,#0f2,#0ff,#0f8,#03f,#10f,#10f,#40f,#20f,#80f,#30f,#70f,#70f)"></i>
<i style="background:linear-gradient(#0bf,#0bf,#0af,#0af,#0fc,#0df,#0fb,#0f7,#0f2,#0f0,#2f0,#4f0,#8f0,#bf0,#cf0,#fd0,#fc0,#fa0,#fb0,#fd0,#fb0,#fb0,#fe0,#bf0,#cf0,#9f0,#9f0,#5f0,#5f0,#2f0,#0f0,#0f4,#0f4,#0f8,#0fb,#0fa,#0ef,#0fd,#0cf,#0cf,#0f1,#1f0,#1f0,#2f0,#0f0,#0f3,#0f2,#0f3,#0f2,#0fc,#0af,#07f,#04f,#10f,#80f,#30f,#80f,#80f,#80f,#30f)"></i>
<i style="background:linear-gradient(#0fd,#08f,#0fb,#07f,#0af,#0cf,#0fe,#0f7,#0f2,#0f0,#3f0,#6f0,#7f0,#cf0,#ff0,#fd0,#fb0,#fb0,#f90,#f90,#fb0,#fd0,#fd0,#ff0,#df0,#bf0,#9f0,#5f0,#6f0,#4f0,#2f0,#0f4,#0f5,#0f8,#0fa,#0fa,#0fb,#0ff,#0df,#08f,#0f1,#1f0,#0f0,#1f0,#0f0,#0f1,#0f4,#0f3,#0f4,#0f8,#08f,#0af,#03f,#30f,#60f,#80f,#80f,#60f,#80f,#80f)"></i>
<i style="background:linear-gradient(#0df,#0ff,#0fc,#0fe,#07f,#0fb,#0fb,#0f8,#0f3,#3f0,#3f0,#5f0,#8f0,#bf0,#fe0,#fc0,#fb0,#fa0,#f80,#f90,#fa0,#fc0,#fe0,#ff0,#df0,#bf0,#af0,#8f0,#5f0,#4f0,#2f0,#0f2,#0f5,#0f8,#0fb,#0fc,#0fe,#0fc,#0ff,#0df,#0f2,#0f0,#1f0,#0f0,#1f0,#0f1,#0f4,#0f3,#0f6,#0fa,#0ef,#02f,#0af,#00f,#60f,#80f,#80f,#80f,#50f,#80f)"></i>
<i style="background:linear-gradient(#0bf,#0ef,#0fe,#0cf,#0cf,#0ef,#0f8,#0f8,#0f2,#1f0,#3f0,#6f0,#af0,#df0,#fe0,#fb0,#f90,#f90,#f90,#f90,#fa0,#fb0,#fc0,#fe0,#ff0,#bf0,#9f0,#6f0,#4f0,#3f0,#1f0,#0f5,#0f7,#0f7,#0fa,#0fa,#0fd,#0fe,#0ef,#0df,#0f1,#2f0,#2f0,#0f0,#0f1,#0f2,#0f1,#0f2,#0f5,#0fc,#04f,#0bf,#30f,#10f,#04f,#40f,#60f,#70f,#50f,#80f)"></i>
<i style="background:linear-gradient(#0cf,#0cf,#0cf,#0cf,#0ff,#0cf,#0f5,#0f8,#0f3,#0f0,#3f0,#5f0,#7f0,#cf0,#ef0,#fc0,#fc0,#fa0,#fb0,#f90,#fc0,#fc0,#ff0,#ff0,#df0,#9f0,#8f0,#8f0,#4f0,#3f0,#2f0,#0f2,#0f6,#0f8,#0fa,#0fa,#0df,#0ef,#0bf,#0ef,#2f0,#1f0,#2f0,#3f0,#2f0,#0f1,#0f3,#0f2,#0f4,#0f9,#0bf,#08f,#00f,#00f,#40f,#50f,#40f,#20f,#30f,#60f)"></i>
<i style="background:linear-gradient(#0fe,#06f,#0cf,#0fc,#0f7,#0df,#0fb,#0f6,#0f2,#4f0,#2f0,#5f0,#bf0,#bf0,#fd0,#fd0,#fa0,#f80,#f90,#fa0,#f90,#fb0,#fc0,#ff0,#df0,#cf0,#af0,#7f0,#5f0,#4f0,#2f0,#0f4,#0f4,#0f9,#0f8,#0fa,#0ff,#0fe,#0ff,#0cf,#0f0,#3f0,#3f0,#2f0,#1f0,#1f0,#2f0,#0f1,#0f3,#0fc,#0cf,#06f,#02f,#10f,#60f,#80f,#10f,#30f,#70f,#60f)"></i>
<i style="background:linear-gradient(#0df,#0bf,#0cf,#0fe,#0df,#0ff,#0cf,#0f8,#0f4,#0f1,#0f0,#3f0,#6f0,#bf0,#df0,#fe0,#fe0,#fc0,#fb0,#fc0,#fc0,#fd0,#fe0,#ef0,#af0,#af0,#7f0,#5f0,#3f0,#0f0,#1f0,#0f3,#0f8,#0f9,#0fc,#0ef,#0fc,#0ef,#0ef,#0ef,#1f0,#4f0,#5f0,#2f0,#3f0,#1f0,#0f0,#0f1,#0f0,#0fa,#06f,#07f,#60f,#50f,#80f,#10f,#00f,#60f,#70f,#80f)"></i>
<i style="background:linear-gradient(#0cf,#0cf,#0fc,#0df,#0bf,#0fd,#0af,#0f5,#0f2,#2f0,#3f0,#7f0,#af0,#cf0,#fe0,#fd0,#fb0,#f80,#f90,#fa0,#f90,#fb0,#fd0,#fe0,#ff0,#bf0,#af0,#6f0,#5f0,#2f0,#2f0,#0f4,#0f6,#0f6,#0f9,#0f9,#0ff,#0ff,#0cf,#0af,#2f0,#2f0,#4f0,#2f0,#1f0,#1f0,#0f0,#0f1,#0f2,#0fb,#0cf,#0af,#50f,#20f,#01f,#60f,#40f,#50f,#30f,#50f)"></i>
<i style="background:linear-gradient(#06f,#07f,#09f,#05f,#0df,#0ff,#0fc,#0f7,#0f3,#0f1,#1f0,#4f0,#7f0,#9f0,#ef0,#fd0,#fc0,#fb0,#fb0,#fb0,#fb0,#fe0,#ff0,#ef0,#df0,#bf0,#8f0,#5f0,#4f0,#3f0,#1f0,#0f3,#0f5,#0f8,#0fa,#0fa,#0fd,#0ef,#0ff,#0df,#0f0,#2f0,#2f0,#1f0,#0f0,#1f0,#0f3,#0f1,#0f2,#0fd,#05f,#0af,#30f,#30f,#000,#40f,#80f,#50f,#50f,#80f)"></i>
<i style="background:linear-gradient(#0ef,#04f,#0df,#0fe,#0bf,#0cf,#0f8,#0f7,#0f0,#0f0,#3f0,#5f0,#9f0,#bf0,#ef0,#fc0,#fc0,#fa0,#fb0,#fa0,#fb0,#fc0,#fe0,#ff0,#cf0,#bf0,#8f0,#8f0,#4f0,#2f0,#2f0,#0f5,#0f4,#0f8,#0fb,#0fb,#0fb,#0ef,#0df,#0df,#0f2,#0f0,#2f0,#1f0,#0f2,#0f1,#0f1,#0f5,#0f2,#0ff,#0af,#0af,#40f,#20f,#30f,#80f,#40f,#70f,#70f,#60f)"></i>
<i style="background:linear-gradient(#0cf,#0fb,#0fb,#0cf,#0bf,#0fc,#0f7,#0f6,#0f2,#2f0,#3f0,#5f0,#8f0,#cf0,#ff0,#fb0,#fb0,#f90,#fa0,#f90,#fa0,#fb0,#fd0,#fe0,#ff0,#bf0,#af0,#6f0,#5f0,#4f0,#2f0,#0f2,#0f6,#0fa,#0fa,#0fd,#0fe,#0fc,#0df,#0ff,#0f1,#1f0,#1f0,#1f0,#1f0,#0f3,#0f2,#0f3,#0f4,#0fc,#06f,#00f,#30f,#20f,#20f,#30f,#000,#50f,#80f,#60f)"></i>
<i style="background:linear-gradient(#0fa,#0ff,#0fd,#0cf,#0ff,#08f,#0fa,#0f6,#0f0,#2f0,#5f0,#7f0,#af0,#df0,#fe0,#fb0,#f80,#f70,#f80,#f90,#f90,#f90,#fa0,#fd0,#ff0,#ef0,#9f0,#af0,#7f0,#5f0,#3f0,#0f3,#0f4,#0f8,#0f9,#0fb,#0fc,#0fa,#0fc,#0ef,#0f1,#2f0,#2f0,#1f0,#0f1,#0f0,#0f2,#0f3,#0f1,#0fa,#0ef,#08f,#20f,#30f,#02f,#30f,#40f,#80f,#80f,#80f)"></i>
<i style="background:linear-gradient(#0cf,#0bf,#0fb,#0fe,#0ff,#0ff,#0fe,#0f5,#0f2,#2f0,#3f0,#6f0,#7f0,#bf0,#ef0,#fc0,#fa0,#fa0,#fa0,#f90,#f90,#fc0,#fd0,#fe0,#ef0,#bf0,#9f0,#8f0,#6f0,#4f0,#1f0,#0f0,#0f5,#0f8,#0fa,#0ef,#0fe,#0ff,#0cf,#09f,#0f0,#1f0,#0f0,#2f0,#1f0,#0f1,#0f3,#0f2,#0f5,#0fd,#0df,#01f,#40f,#20f,#50f,#80f,#40f,#50f,#50f,#40f)"></i>
<i style="background:linear-gradient(#0bf,#0fd,#0df,#0af,#0af,#0fc,#0ef,#0fa,#0f6,#0f4,#0f0,#0f0,#5f0,#7f0,#9f0,#df0,#fe0,#fe0,#ef0,#fe0,#ef0,#ff0,#cf0,#cf0,#8f0,#7f0,#6f0,#2f0,#0f1,#0f1,#0f2,#0f5,#0f8,#0fa,#0fa,#0fb,#0ff,#0df,#0ff,#0fb,#0f1,#2f0,#1f0,#1f0,#1f0,#0f0,#0f1,#0f2,#0f4,#0fa,#0ff,#0af,#50f,#30f,#30f,#30f,#60f,#20f,#60f,#30f)"></i>
<i style="background:linear-gradient(#09f,#0fe,#0ef,#0cf,#0fc,#0fd,#0fc,#0f8,#0f4,#1f0,#3f0,#4f0,#6f0,#7f0,#9f0,#bf0,#9f0,#af0,#af0,#bf0,#8f0,#af0,#bf0,#af0,#8f0,#6f0,#7f0,#7f0,#4f0,#3f0,#0f1,#0f4,#0f6,#0f9,#0fa,#0ff,#0fb,#0df,#0ef,#0ff,#1f0,#3f0,#2f0,#1f0,#2f0,#0f0,#0f1,#0f1,#0f4,#0fa,#05f,#0af,#20f,#20f,#50f,#30f,#02f,#50f,#60f,#80f)"></i>
<i style="background:linear-gradient(#0cf,#0bf,#0ff,#0df,#0af,#0fe,#0ef,#0ef,#0ef,#0f9,#0f7,#0f5,#0f5,#0f4,#0f1,#0f1,#1f0,#0f1,#1f0,#1f0,#1f0,#0f1,#0f1,#0f1,#0f2,#0f3,#0f4,#0f5,#0f6,#0f6,#0fa,#0fa,#0fc,#0fe,#0df,#0fe,#0bf,#0fc,#0cf,#07f,#0f0,#0f0,#3f0,#0f1,#0f1,#0f1,#0f1,#0f4,#0f4,#0fb,#0af,#05f,#20f,#10f,#60f,#20f,#50f,#80f,#80f,#70f)"></i>
<i style="background:linear-gradient(#09f,#0af,#0cf,#0cf,#0bf,#0df,#0fe,#0f8,#0fb,#0f8,#0f6,#0f6,#0f3,#0f4,#0f0,#1f0,#1f0,#1f0,#1f0,#1f0,#1f0,#2f0,#2f0,#0f0,#2f0,#0f2,#0f2,#0f3,#0f4,#0f7,#0f8,#0fb,#0fc,#0fb,#0cf,#0ff,#0fe,#09f,#0cf,#0cf,#0f0,#2f0,#1f0,#2f0,#1f0,#0f1,#0f0,#0f2,#0f2,#0fd,#08f,#05f,#40f,#00f,#20f,#10f,#80f,#40f,#80f,#80f)"></i>
<i style="background:linear-gradient(#08f,#0ef,#0df,#09f,#0bf,#0fe,#0fd,#0fb,#0f6,#0f6,#0f1,#0f0,#0f0,#2f0,#4f0,#6f0,#7f0,#7f0,#8f0,#7f0,#6f0,#5f0,#5f0,#4f0,#4f0,#4f0,#2f0,#2f0,#0f1,#0f2,#0f3,#0f7,#0f9,#0fd,#0fd,#0fb,#0fb,#0ff,#0ff,#06f,#0f0,#2f0,#2f0,#2f0,#0f0,#0f2,#0f2,#0f0,#0f3,#0fc,#07f,#10f,#20f,#10f,#70f,#80f,#50f,#30f,#30f,#30f)"></i>
<i style="background:linear-gradient(#0fd,#0fd,#0af,#0fc,#0ff,#0ff,#0f4,#0f8,#0f2,#1f0,#0f0,#4f0,#6f0,#9f0,#cf0,#ef0,#df0,#ff0,#ff0,#ef0,#ff0,#df0,#df0,#df0,#bf0,#af0,#7f0,#4f0,#2f0,#3f0,#1f0,#0f6,#0f5,#0f9,#0f6,#0ff,#0fe,#0ff,#0ef,#0bf,#0f1,#0f1,#1f0,#0f0,#0f1,#0f2,#0f3,#0f4,#0f4,#0fc,#09f,#03f,#01f,#30f,#60f,#30f,#20f,#70f,#30f,#60f)"></i>
<i style="background:linear-gradient(#0fc,#0bf,#06f,#0fe,#0ff,#0df,#0fc,#0f8,#0f3,#0f1,#0f1,#1f0,#6f0,#9f0,#cf0,#cf0,#df0,#ef0,#ef0,#ef0,#ef0,#df0,#df0,#bf0,#bf0,#af0,#6f0,#4f0,#2f0,#1f0,#0f0,#0f5,#0f7,#0f8,#0f9,#0fe,#0ef,#0df,#0cf,#0bf,#0f3,#0f1,#0f0,#0f0,#0f2,#0f3,#0f4,#0f5,#0f7,#0f8,#07f,#02f,#50f,#30f,#30f,#70f,#80f,#60f,#80f,#30f)"></i>
<i style="background:linear-gradient(#09f,#0af,#0fd,#0fb,#0ff,#0fe,#0fb,#0f7,#0f5,#0f1,#0f1,#1f0,#6f0,#8f0,#bf0,#bf0,#ef0,#df0,#fe0,#df0,#ef0,#df0,#df0,#af0,#cf0,#7f0,#7f0,#5f0,#3f0,#0f0,#0f1,#0f3,#0f8,#0f9,#0fb,#0fd,#0ff,#0fe,#0ef,#0cf,#0f4,#0f1,#0f1,#0f2,#0f2,#0f3,#0f6,#0f5,#0f5,#0fd,#03f,#08f,#30f,#20f,#80f,#50f,#80f,#50f,#80f,#80f)"></i>
<i style="background:linear-gradient(#08f,#0ef,#0bf,#0df,#0bf,#0fb,#0f8,#0f8,#0f3,#1f0,#3f0,#4f0,#8f0,#bf0,#ef0,#fe0,#fd0,#fd0,#fb0,#fd0,#fd0,#fc0,#ef0,#df0,#bf0,#9f0,#8f0,#7f0,#3f0,#2f0,#0f0,#0f4,#0f7,#0f9,#0fb,#0ef,#0fe,#0fc,#0ef,#07f,#0f2,#0f0,#1f0,#0f0,#1f0,#0f1,#0f2,#0f4,#0f6,#0fa,#08f,#06f,#40f,#60f,#50f,#40f,#70f,#60f,#60f,#40f)"></i>
<i style="background:linear-gradient(#0fe,#01f,#0af,#0ef,#0fe,#08f,#0f8,#0f7,#0f4,#0f0,#2f0,#6f0,#9f0,#df0,#ef0,#fd0,#fd0,#fc0,#fd0,#fd0,#fb0,#fe0,#ff0,#ef0,#df0,#bf0,#7f0,#7f0,#4f0,#1f0,#0f1,#0f3,#0f6,#0f8,#0fb,#0fe,#0fc,#0ff,#0ef,#0cf,#0f1,#1f0,#2f0,#2f0,#1f0,#0f2,#0f2,#0f5,#0f6,#0fc,#0af,#09f,#00f,#20f,#70f,#50f,#60f,#50f,#30f,#70f)"></i>
<i style="background:linear-gradient(#09f,#0cf,#0fe,#0fd,#0cf,#0df,#0fe,#0f8,#0f3,#2f0,#2f0,#4f0,#9f0,#bf0,#ef0,#fe0,#fc0,#fb0,#fb0,#fc0,#fc0,#fd0,#fd0,#ef0,#cf0,#bf0,#7f0,#6f0,#5f0,#3f0,#2f0,#0f5,#0f4,#0f6,#0fb,#0fb,#0ef,#0fe,#0ff,#0ef,#0f0,#2f0,#4f0,#2f0,#1f0,#0f1,#0f2,#0f2,#0f3,#0fe,#07f,#07f,#01f,#30f,#00f,#80f,#01f,#40f,#60f,#70f)"></i>
<i style="background:linear-gradient(#0f7,#0bf,#0af,#0ff,#0ff,#08f,#0df,#0f6,#0f2,#2f0,#1f0,#5f0,#9f0,#bf0,#ff0,#fc0,#fd0,#fa0,#fa0,#fa0,#fb0,#fc0,#fd0,#ff0,#df0,#af0,#7f0,#6f0,#6f0,#2f0,#0f1,#0f5,#0f6,#0f8,#0fa,#0f7,#0df,#0fd,#0fd,#0ef,#2f0,#5f0,#3f0,#3f0,#1f0,#1f0,#0f0,#0f2,#0f1,#0fc,#09f,#07f,#10f,#80f,#00f,#40f,#30f,#30f,#80f,#80f)"></i>
<i style="background:linear-gradient(#0cf,#0df,#08f,#0ef,#0fc,#0df,#0ef,#0f7,#0f1,#3f0,#4f0,#7f0,#af0,#ef0,#fd0,#fc0,#fb0,#fa0,#fa0,#fa0,#f90,#fb0,#fd0,#ff0,#ef0,#df0,#bf0,#9f0,#4f0,#5f0,#4f0,#0f2,#0f5,#0f9,#0fa,#0fd,#0fa,#0ef,#0fe,#0df,#1f0,#4f0,#5f0,#3f0,#2f0,#2f0,#1f0,#0f0,#0f0,#0fa,#0ef,#0ef,#10f,#40f,#02f,#40f,#70f,#60f,#70f,#50f)"></i>
<i style="background:linear-gradient(#0fd,#0cf,#0bf,#0ef,#0f9,#0cf,#0f9,#0f6,#0f2,#3f0,#3f0,#7f0,#af0,#ff0,#fd0,#fb0,#fb0,#fa0,#fa0,#fa0,#fa0,#fc0,#fc0,#ff0,#ff0,#df0,#bf0,#7f0,#6f0,#5f0,#1f0,#0f2,#0f7,#0f7,#0f7,#0f9,#0fa,#0df,#0fd,#0df,#1f0,#3f0,#4f0,#3f0,#2f0,#1f0,#1f0,#0f0,#0f1,#0fb,#0bf,#08f,#20f,#40f,#20f,#50f,#80f,#70f,#80f,#20f)"></i>
<i style="background:linear-gradient(#08f,#0ef,#0df,#0df,#0df,#0ff,#0f8,#0f6,#0f1,#2f0,#3f0,#9f0,#bf0,#ff0,#fb0,#fb0,#fa0,#fc0,#fb0,#fa0,#fa0,#fb0,#fd0,#fd0,#ff0,#ef0,#bf0,#9f0,#5f0,#4f0,#3f0,#0f1,#0f5,#0f7,#0f8,#0fc,#0fc,#0fe,#0df,#0df,#0f0,#3f0,#2f0,#3f0,#0f0,#0f0,#0f1,#0f2,#0f4,#0fd,#0bf,#06f,#06f,#20f,#50f,#40f,#000,#80f,#70f,#70f)"></i>
<i style="background:linear-gradient(#0cf,#0df,#0ef,#0bf,#0af,#0ff,#0fa,#0f8,#0f2,#1f0,#4f0,#6f0,#8f0,#cf0,#ef0,#fe0,#fd0,#fe0,#fc0,#fd0,#fe0,#ef0,#fd0,#ff0,#df0,#af0,#8f0,#4f0,#6f0,#3f0,#2f0,#0f3,#0f5,#0f8,#0fa,#0fb,#0fd,#0ff,#0ef,#0cf,#0f1,#1f0,#0f0,#2f0,#1f0,#0f2,#0f3,#0f4,#0f6,#0fe,#06f,#05f,#80f,#30f,#50f,#60f,#50f,#50f,#70f,#70f)"></i>
<i style="background:linear-gradient(#0fe,#0cf,#0ef,#0bf,#0ef,#0fb,#0f9,#0f7,#0f3,#1f0,#2f0,#3f0,#7f0,#9f0,#ef0,#df0,#ef0,#fe0,#fd0,#fe0,#ff0,#ff0,#df0,#ef0,#cf0,#9f0,#9f0,#5f0,#3f0,#3f0,#1f0,#0f3,#0f5,#0f8,#0fa,#0fa,#0ff,#0ff,#0fd,#0af,#0f2,#1f0,#0f0,#0f0,#0f0,#0f4,#0f3,#0f4,#0f6,#0fc,#0ef,#09f,#20f,#20f,#20f,#20f,#70f,#70f,#40f,#80f)"></i>
<i style="background:linear-gradient(#0ef,#0cf,#0fd,#0ff,#0fb,#0f9,#0f6,#0f6,#0f2,#1f0,#4f0,#6f0,#9f0,#af0,#ff0,#fe0,#fd0,#fe0,#ff0,#fe0,#ff0,#ff0,#ff0,#ff0,#ef0,#bf0,#7f0,#8f0,#5f0,#3f0,#1f0,#0f3,#0f4,#0f6,#0f9,#0fc,#0fd,#0ff,#0df,#0df,#0f2,#2f0,#0f1,#0f1,#0f1,#0f2,#0f1,#0f5,#0f5,#0ff,#08f,#05f,#60f,#40f,#10f,#80f,#30f,#60f,#80f,#20f)"></i>
<i style="background:linear-gradient(#0bf,#0ff,#0df,#0df,#0ef,#0df,#0fe,#0f7,#0f1,#4f0,#4f0,#7f0,#9f0,#df0,#fd0,#fd0,#fc0,#fd0,#fd0,#fc0,#fc0,#fc0,#fd0,#fd0,#ef0,#cf0,#bf0,#6f0,#6f0,#6f0,#2f0,#0f3,#0f5,#0f6,#0f9,#0fb,#0fd,#0fd,#0ff,#0fe,#0f0,#2f0,#2f0,#2f0,#0f0,#0f0,#0f0,#0f2,#0f3,#0fa,#05f,#0bf,#00f,#40f,#30f,#80f,#40f,#50f,#80f,#60f)"></i>
<i style="background:linear-gradient(#0f8,#0bf,#0ff,#09f,#0f6,#0ff,#0f1,#0f5,#0f2,#3f0,#4f0,#6f0,#9f0,#df0,#ff0,#fc0,#fe0,#fc0,#fd0,#fe0,#fc0,#fc0,#fd0,#ef0,#df0,#cf0,#af0,#9f0,#4f0,#4f0,#2f0,#0f2,#0f3,#0f6,#0fa,#0fc,#0fd,#0ff,#0bf,#0cf,#0f0,#4f0,#4f0,#4f0,#2f0,#0f0,#1f0,#0f0,#0f2,#0fb,#04f,#06f,#20f,#40f,#20f,#50f,#50f,#80f,#80f,#80f)"></i>
<i style="background:linear-gradient(#0ff,#0fe,#0df,#0ef,#07f,#0fc,#0f1,#0f7,#0f3,#3f0,#2f0,#6f0,#7f0,#bf0,#ff0,#ef0,#fd0,#fb0,#ff0,#fd0,#fe0,#ff0,#fe0,#ff0,#df0,#bf0,#8f0,#6f0,#6f0,#2f0,#0f1,#0f3,#0f5,#0f7,#0f7,#0fc,#0fe,#0fc,#0fe,#0ff,#2f0,#4f0,#4f0,#3f0,#2f0,#1f0,#0f0,#0f2,#0f2,#0f8,#08f,#09f,#20f,#50f,#40f,#50f,#30f,#40f,#60f,#70f)"></i>
<i style="background:linear-gradient(#0cf,#06f,#0bf,#0fa,#0fa,#0ef,#0f8,#0f6,#0f4,#1f0,#4f0,#6f0,#9f0,#bf0,#ff0,#fc0,#fd0,#fd0,#fc0,#fd0,#fd0,#fd0,#fe0,#fe0,#fe0,#cf0,#9f0,#6f0,#6f0,#3f0,#0f0,#0f2,#0f4,#0f8,#0f9,#0fa,#0fd,#0fd,#0fe,#0fd,#1f0,#5f0,#5f0,#4f0,#3f0,#3f0,#0f0,#0f1,#0f1,#0fe,#0bf,#0af,#20f,#000,#10f,#60f,#30f,#80f,#50f,#80f)"></i>
<i style="background:linear-gradient(#0af,#0df,#0ef,#0fc,#0fc,#0df,#0fd,#0fa,#0f5,#0f0,#0f0,#2f0,#9f0,#9f0,#df0,#ef0,#fe0,#df0,#ef0,#ef0,#fe0,#ff0,#ef0,#af0,#af0,#9f0,#5f0,#3f0,#1f0,#1f0,#0f3,#0f6,#0f8,#0fa,#0f9,#0fb,#0ef,#0fe,#0cf,#0bf,#1f0,#2f0,#3f0,#1f0,#2f0,#0f0,#0f2,#0f1,#0f3,#0f8,#0cf,#08f,#02f,#70f,#10f,#30f,#30f,#50f,#80f,#80f)"></i>
<i style="background:linear-gradient(#0cf,#0ef,#0ef,#06f,#0fb,#09f,#0fa,#0f7,#0f2,#1f0,#4f0,#5f0,#7f0,#cf0,#fe0,#fe0,#fd0,#ff0,#fe0,#fe0,#fe0,#ff0,#ff0,#fe0,#af0,#af0,#8f0,#6f0,#3f0,#3f0,#1f0,#0f2,#0f4,#0f9,#0fa,#0fc,#0fe,#0fd,#0df,#0bf,#0f0,#2f0,#1f0,#1f0,#0f0,#0f1,#0f1,#0f3,#0f4,#0fb,#06f,#08f,#04f,#04f,#20f,#50f,#70f,#80f,#80f,#00f)"></i>
<i style="background:linear-gradient(#0fd,#07f,#0fa,#0af,#0bf,#0fc,#0df,#0f6,#0f4,#0f0,#3f0,#6f0,#9f0,#af0,#ff0,#ef0,#ef0,#ef0,#ef0,#fe0,#ff0,#df0,#df0,#ef0,#bf0,#9f0,#7f0,#6f0,#5f0,#0f0,#0f0,#0f3,#0f5,#0f7,#0f9,#0fd,#0ff,#0ff,#0fe,#0ef,#0f4,#1f0,#1f0,#0f2,#0f1,#0f2,#0f3,#0f5,#0f6,#0fc,#07f,#0af,#30f,#50f,#50f,#20f,#40f,#70f,#60f,#80f)"></i>
<i style="background:linear-gradient(#0af,#0bf,#0fe,#0fd,#0fa,#0fc,#0fa,#0f7,#0f0,#2f0,#4f0,#7f0,#af0,#ff0,#fd0,#fd0,#fb0,#fb0,#fd0,#fd0,#fc0,#fd0,#fa0,#fe0,#df0,#df0,#bf0,#8f0,#5f0,#5f0,#1f0,#0f2,#0f4,#0f8,#0fa,#0fc,#0fb,#0fa,#0df,#0ff,#0f0,#1f0,#1f0,#1f0,#0f0,#0f2,#0f3,#0f3,#0f3,#0fd,#0df,#04f,#50f,#60f,#40f,#40f,#20f,#40f,#30f,#80f)"></i>
<i style="background:linear-gradient(#0df,#0fc,#0bf,#0ef,#0fb,#0df,#0fe,#0f7,#0f1,#3f0,#4f0,#5f0,#8f0,#df0,#ff0,#fd0,#fd0,#fd0,#fd0,#fe0,#fc0,#fd0,#fe0,#ef0,#df0,#af0,#af0,#7f0,#5f0,#5f0,#2f0,#0f5,#0f5,#0f7,#0f8,#0fd,#0fb,#0fb,#0fe,#0fe,#0f1,#0f0,#1f0,#0f0,#0f2,#0f2,#0f2,#0f4,#0f5,#0f9,#07f,#05f,#50f,#00f,#60f,#80f,#30f,#70f,#80f,#40f)"></i>
<i style="background:linear-gradient(#0af,#0df,#0fe,#0ef,#0fa,#0bf,#0fb,#0f7,#0f0,#3f0,#4f0,#8f0,#9f0,#cf0,#fb0,#fc0,#fc0,#fc0,#fe0,#fc0,#fc0,#fd0,#fd0,#fd0,#ef0,#bf0,#cf0,#8f0,#7f0,#4f0,#2f0,#0f0,#0f6,#0f7,#0f9,#0fa,#0fd,#0cf,#0fd,#0df,#0f0,#3f0,#3f0,#2f0,#1f0,#2f0,#0f1,#0f2,#0f2,#0ff,#0fa,#0bf,#10f,#00f,#000,#20f,#40f,#50f,#000,#80f)"></i>
<i style="background:linear-gradient(#0fc,#0af,#0df,#0ef,#0ef,#0cf,#0fc,#0f8,#0f2,#2f0,#3f0,#6f0,#af0,#ef0,#fe0,#fd0,#fc0,#fc0,#fc0,#fd0,#fe0,#fd0,#fd0,#ff0,#df0,#bf0,#8f0,#7f0,#6f0,#3f0,#1f0,#0f3,#0f4,#0f6,#0fa,#0f9,#0f9,#0fd,#0ff,#0fe,#0f0,#2f0,#4f0,#0f0,#2f0,#1f0,#0f0,#0f2,#0f2,#0f9,#08f,#0ef,#40f,#00f,#30f,#20f,#20f,#60f,#70f,#70f)"></i>
<i style="background:linear-gradient(#0cf,#01f,#0fb,#0ef,#0ef,#0fc,#0f3,#0f6,#0f2,#2f0,#3f0,#3f0,#9f0,#cf0,#fd0,#ff0,#fd0,#fd0,#fe0,#fd0,#fe0,#fe0,#ff0,#df0,#cf0,#af0,#9f0,#8f0,#4f0,#4f0,#0f0,#0f3,#0f6,#0f8,#0fb,#0f9,#0fd,#0fd,#0fd,#0cf,#2f0,#2f0,#3f0,#4f0,#2f0,#0f0,#0f0,#0f0,#0f1,#0fc,#0df,#0af,#00f,#01f,#60f,#30f,#70f,#000,#20f,#80f)"></i>
<i style="background:linear-gradient(#0fe,#0ef,#07f,#0af,#0fb,#0ef,#0ff,#0f8,#0f2,#2f0,#3f0,#4f0,#8f0,#af0,#ef0,#ff0,#ff0,#ff0,#fd0,#fe0,#ef0,#fe0,#fe0,#df0,#bf0,#bf0,#7f0,#6f0,#4f0,#3f0,#1f0,#0f4,#0f6,#0f8,#0fa,#0fe,#0fd,#0ef,#0fe,#0df,#0f0,#3f0,#3f0,#2f0,#2f0,#1f0,#0f0,#0f1,#0f2,#0fc,#0fd,#02f,#0af,#50f,#30f,#20f,#40f,#10f,#40f,#80f)"></i>
<i style="background:linear-gradient(#0ff,#0df,#0bf,#0fc,#0fe,#0cf,#0fa,#0f5,#0f1,#3f0,#5f0,#4f0,#bf0,#cf0,#fe0,#fd0,#fc0,#fb0,#fb0,#fc0,#fc0,#fc0,#fd0,#ff0,#ff0,#af0,#9f0,#6f0,#5f0,#3f0,#1f0,#0f3,#0f4,#0f7,#0f9,#0fd,#0ff,#0fd,#0ef,#0ef,#1f0,#2f0,#4f0,#3f0,#1f0,#0f0,#0f1,#0f1,#0f2,#0fe,#07f,#03f,#02f,#50f,#30f,#30f,#80f,#20f,#30f,#60f)"></i>
<i style="background:linear-gradient(#0bf,#0fe,#0cf,#0bf,#0ef,#0fe,#0fc,#0f7,#1f0,#4f0,#5f0,#7f0,#af0,#fd0,#fb0,#fa0,#f80,#f70,#f70,#f70,#fa0,#fa0,#fb0,#fe0,#ff0,#df0,#9f0,#8f0,#6f0,#5f0,#2f0,#0f1,#0f4,#0f5,#0f9,#0fb,#0fc,#0fa,#0ff,#0ef,#1f0,#4f0,#4f0,#2f0,#0f0,#0f1,#0f1,#0f2,#0f2,#0fc,#0df,#06f,#03f,#02f,#00f,#20f,#50f,#40f,#80f,#80f)"></i>
<i style="background:linear-gradient(#0ff,#0fa,#0ef,#0df,#0cf,#0fb,#0f5,#0f7,#0f3,#2f0,#1f0,#8f0,#7f0,#cf0,#ef0,#fe0,#fb0,#fd0,#fb0,#fb0,#fb0,#fe0,#fe0,#ff0,#cf0,#bf0,#6f0,#6f0,#2f0,#1f0,#0f0,#0f3,#0f6,#0f8,#0f9,#0fb,#0ff,#0ff,#0ff,#0af,#0f2,#1f0,#1f0,#0f2,#0f2,#0f3,#0f4,#0f4,#0f4,#0fd,#0ff,#09f,#00f,#40f,#30f,#40f,#70f,#50f,#80f,#80f)"></i>
<i style="background:linear-gradient(#0fe,#0cf,#0df,#0fb,#0fe,#0f9,#0f7,#0f7,#0f3,#1f0,#3f0,#7f0,#8f0,#bf0,#ef0,#fe0,#fe0,#fd0,#fd0,#fd0,#fd0,#fe0,#fe0,#df0,#cf0,#9f0,#6f0,#7f0,#4f0,#4f0,#0f0,#0f3,#0f7,#0f8,#0fb,#0f9,#0fd,#0fe,#0fd,#0df,#0f3,#0f0,#0f0,#0f1,#0f1,#0f2,#0f4,#0f4,#0f5,#0f8,#07f,#07f,#30f,#40f,#50f,#60f,#70f,#40f,#80f,#80f)"></i>
<i style="background:linear-gradient(#08f,#0df,#07f,#0fc,#09f,#0f9,#0df,#0f8,#0f4,#0f0,#4f0,#6f0,#af0,#bf0,#fe0,#fd0,#fc0,#fd0,#fe0,#fe0,#fd0,#ef0,#fd0,#ef0,#bf0,#af0,#9f0,#6f0,#3f0,#3f0,#1f0,#0f3,#0f5,#0f8,#0fa,#0fc,#0ff,#0fd,#0af,#0ef,#0f2,#2f0,#0f0,#1f0,#0f0,#0f2,#0f3,#0f3,#0f4,#0f9,#0bf,#03f,#10f,#40f,#60f,#80f,#30f,#30f,#60f,#40f)"></i>
<i style="background:linear-gradient(#0ff,#0af,#06f,#0df,#0fd,#0fe,#0ff,#0f9,#0f3,#0f0,#2f0,#4f0,#8f0,#bf0,#ff0,#df0,#ff0,#df0,#ff0,#ef0,#ff0,#ff0,#fd0,#ef0,#cf0,#af0,#6f0,#5f0,#4f0,#0f0,#0f2,#0f4,#0f7,#0fa,#0fa,#0fe,#0fa,#0fa,#0cf,#0df,#0f0,#0f0,#1f0,#3f0,#0f0,#0f1,#0f1,#0f4,#0f3,#0ff,#09f,#0ff,#20f,#40f,#80f,#10f,#10f,#60f,#60f,#80f)"></i>
<i style="background:linear-gradient(#0f4,#0cf,#0ef,#0df,#0ff,#0fd,#0fb,#0f8,#0f2,#0f2,#1f0,#4f0,#9f0,#bf0,#ef0,#fe0,#fd0,#fd0,#fe0,#fe0,#fe0,#fe0,#cf0,#df0,#af0,#af0,#8f0,#5f0,#2f0,#1f0,#0f1,#0f5,#0f7,#0f8,#0fc,#0f9,#0fe,#0ef,#0cf,#0df,#0f0,#3f0,#2f0,#2f0,#2f0,#0f0,#0f3,#0f3,#0f2,#0ff,#04f,#02f,#30f,#40f,#60f,#50f,#40f,#00f,#80f,#60f)"></i>
<i style="background:linear-gradient(#0bf,#0cf,#0fc,#0bf,#09f,#0fd,#0fe,#0f8,#0f2,#0f0,#3f0,#4f0,#9f0,#bf0,#ef0,#ef0,#fd0,#fd0,#fe0,#fe0,#ff0,#ef0,#ff0,#df0,#af0,#9f0,#7f0,#5f0,#3f0,#1f0,#0f0,#0f4,#0f6,#0f7,#0fa,#0fa,#0df,#0df,#0df,#0fe,#0f0,#2f0,#2f0,#2f0,#0f0,#0f0,#0f0,#0f2,#0f3,#0f9,#03f,#01f,#20f,#02f,#20f,#70f,#50f,#60f,#70f,#60f)"></i>
<i style="background:linear-gradient(#0ff,#0ff,#0fc,#0bf,#0fe,#0fc,#0fa,#0f9,#0f1,#0f0,#2f0,#4f0,#7f0,#9f0,#cf0,#df0,#ff0,#fd0,#ff0,#ff0,#ff0,#ef0,#df0,#bf0,#af0,#7f0,#7f0,#3f0,#2f0,#0f0,#0f1,#0f5,#0f7,#0fa,#0fc,#0fc,#0fd,#0ef,#0fd,#0cf,#0f0,#3f0,#2f0,#2f0,#2f0,#0f0,#0f3,#0f1,#0f3,#0fa,#09f,#09f,#30f,#10f,#30f,#80f,#70f,#70f,#50f,#40f)"></i>
<i style="background:linear-gradient(#07f,#0ef,#0cf,#0df,#0fb,#0fc,#0fb,#0f7,#0f2,#0f0,#3f0,#6f0,#7f0,#af0,#ef0,#ef0,#fd0,#ff0,#fc0,#fd0,#ff0,#fe0,#fe0,#ef0,#bf0,#bf0,#6f0,#4f0,#3f0,#3f0,#0f0,#0f2,#0f6,#0f7,#0fa,#0fd,#0f7,#0df,#0fe,#0ef,#0f0,#2f0,#2f0,#4f0,#0f0,#0f1,#0f0,#0f3,#0f3,#0fc,#0fc,#08f,#01f,#00f,#80f,#000,#60f,#80f,#40f,#80f)"></i>
<i style="background:linear-gradient(#0ef,#0af,#0ff,#0fb,#0fe,#0cf,#0ef,#0f9,#0f3,#0f0,#2f0,#5f0,#8f0,#af0,#ff0,#fd0,#fe0,#fd0,#fd0,#fc0,#fe0,#fc0,#ff0,#df0,#bf0,#af0,#8f0,#6f0,#2f0,#3f0,#0f1,#0f3,#0f5,#0fa,#0fc,#0fe,#0fc,#0fe,#0ef,#0bf,#0f1,#1f0,#2f0,#0f0,#0f1,#0f2,#0f1,#0f5,#0f4,#0fe,#0cf,#09f,#20f,#00f,#10f,#50f,#40f,#70f,#60f,#30f)"></i>
<i style="background:linear-gradient(#0bf,#0bf,#0bf,#0df,#0af,#0ef,#0fc,#0f6,#0f2,#3f0,#5f0,#8f0,#bf0,#df0,#fe0,#fc0,#fb0,#fa0,#fc0,#fb0,#fb0,#fb0,#fd0,#ef0,#cf0,#bf0,#8f0,#7f0,#4f0,#3f0,#1f0,#0f3,#0f4,#0f7,#0f9,#0fc,#0fb,#0fc,#0bf,#0cf,#0f0,#2f0,#0f0,#1f0,#1f0,#0f1,#0f4,#0f3,#0f4,#0fe,#03f,#0ef,#00f,#30f,#10f,#000,#80f,#80f,#60f,#30f)"></i>
<i style="background:linear-gradient(#0fe,#0fc,#08f,#0fe,#0df,#0ff,#0f9,#0f5,#0f2,#1f0,#4f0,#6f0,#af0,#df0,#ef0,#fc0,#fe0,#fc0,#fd0,#fc0,#fb0,#fe0,#ff0,#ef0,#bf0,#af0,#8f0,#6f0,#4f0,#3f0,#0f0,#0f2,#0f6,#0f8,#0fb,#0ff,#0fc,#0ef,#0ef,#0af,#0f2,#0f0,#2f0,#0f0,#0f0,#0f2,#0f1,#0f3,#0f6,#0fd,#08f,#06f,#50f,#40f,#20f,#60f,#50f,#80f,#60f,#50f)"></i>
<i style="background:linear-gradient(#0df,#0af,#0fc,#0fe,#0fc,#0fb,#0fb,#0f6,#0f0,#2f0,#3f0,#5f0,#af0,#df0,#fd0,#fe0,#fd0,#fa0,#fd0,#fc0,#fd0,#fc0,#fd0,#fe0,#df0,#bf0,#9f0,#6f0,#7f0,#2f0,#0f1,#0f2,#0f6,#0f7,#0fb,#0fc,#0fb,#0fc,#0fe,#0fe,#0f0,#2f0,#1f0,#1f0,#0f1,#0f0,#0f1,#0f3,#0f6,#0fd,#06f,#09f,#60f,#20f,#00f,#40f,#80f,#50f,#000,#60f)"></i>
<i style="background:linear-gradient(#08f,#0ff,#0ff,#0ff,#09f,#0df,#0fc,#0f8,#0f6,#0f0,#1f0,#3f0,#6f0,#9f0,#bf0,#cf0,#df0,#df0,#ff0,#cf0,#cf0,#ef0,#df0,#bf0,#9f0,#7f0,#5f0,#2f0,#1f0,#0f1,#0f1,#0f5,#0f7,#0fb,#0fb,#0fd,#0ef,#0ef,#0ef,#0bf,#1f0,#3f0,#2f0,#2f0,#1f0,#0f0,#0f3,#0f3,#0f4,#0fb,#0bf,#03f,#40f,#40f,#10f,#20f,#40f,#80f,#50f,#40f)"></i>
<i style="background:linear-gradient(#0fc,#0fb,#0df,#0df,#0ef,#0ef,#0f9,#0f7,#0f2,#2f0,#4f0,#8f0,#af0,#ff0,#ff0,#fc0,#fd0,#fd0,#fc0,#fe0,#fd0,#ff0,#fe0,#ef0,#ef0,#af0,#8f0,#6f0,#6f0,#4f0,#2f0,#0f2,#0f3,#0f5,#0fa,#0fa,#0fd,#0bf,#0fa,#0bf,#1f0,#3f0,#3f0,#3f0,#2f0,#1f0,#1f0,#0f0,#0f2,#0fc,#0af,#0ef,#01f,#20f,#20f,#50f,#40f,#50f,#40f,#60f)"></i>
<i style="background:linear-gradient(#0df,#0fe,#0df,#0fc,#0fa,#0f9,#0fb,#0f6,#0f1,#4f0,#5f0,#8f0,#cf0,#ff0,#fd0,#fd0,#fc0,#fd0,#fd0,#fc0,#fe0,#fd0,#fb0,#ff0,#df0,#df0,#9f0,#6f0,#6f0,#4f0,#1f0,#0f1,#0f4,#0f7,#0f9,#0f9,#0ff,#0fa,#0ef,#0ff,#3f0,#4f0,#5f0,#4f0,#3f0,#2f0,#0f0,#0f2,#0f0,#0fe,#0df,#07f,#40f,#60f,#40f,#70f,#20f,#00f,#50f,#80f)"></i>
<i style="background:linear-gradient(#09f,#0ef,#0fd,#0ff,#0ef,#0f8,#0f6,#0f6,#0f2,#2f0,#4f0,#6f0,#6f0,#af0,#df0,#bf0,#ff0,#cf0,#df0,#ef0,#df0,#df0,#ef0,#cf0,#7f0,#9f0,#7f0,#5f0,#5f0,#3f0,#0f0,#0f1,#0f4,#0f7,#0fa,#0fd,#0fe,#0fc,#0ef,#0af,#1f0,#5f0,#4f0,#4f0,#1f0,#2f0,#1f0,#0f2,#0f3,#0f6,#06f,#0af,#40f,#02f,#10f,#60f,#60f,#70f,#80f,#80f)"></i>
<i style="background:linear-gradient(#0cf,#0fd,#0ef,#0df,#0bf,#0bf,#0cf,#0fb,#0f6,#0f3,#0f2,#0f1,#3f0,#3f0,#5f0,#6f0,#8f0,#7f0,#7f0,#7f0,#7f0,#8f0,#6f0,#5f0,#4f0,#4f0,#2f0,#0f0,#0f3,#0f3,#0f6,#0f8,#0f8,#0f8,#0fd,#0fe,#0ef,#0ff,#0ef,#09f,#1f0,#3f0,#3f0,#3f0,#2f0,#0f0,#0f0,#0f1,#0f3,#0fb,#0ff,#04f,#20f,#40f,#30f,#20f,#40f,#80f,#70f,#70f)"></i>
<i style="background:linear-gradient(#09f,#0df,#0bf,#0bf,#0fd,#0ef,#0fb,#0f9,#0f6,#0f1,#0f0,#1f0,#3f0,#4f0,#5f0,#6f0,#6f0,#7f0,#6f0,#6f0,#7f0,#6f0,#5f0,#4f0,#5f0,#4f0,#2f0,#2f0,#0f2,#0f1,#0f3,#0f6,#0f7,#0fb,#0fc,#0fd,#0fc,#0df,#0ff,#0bf,#0f2,#1f0,#2f0,#1f0,#0f0,#0f1,#0f3,#0f3,#0f3,#0fd,#08f,#07f,#10f,#50f,#30f,#40f,#50f,#40f,#50f,#60f)"></i>
<i style="background:linear-gradient(#0ff,#0df,#0ff,#06f,#0f9,#0f9,#0fd,#0f7,#0f0,#2f0,#4f0,#6f0,#8f0,#8f0,#cf0,#cf0,#bf0,#af0,#ef0,#cf0,#bf0,#bf0,#9f0,#af0,#9f0,#6f0,#7f0,#5f0,#4f0,#2f0,#0f0,#0f5,#0f4,#0f8,#0f9,#0f9,#0fd,#0ef,#0ff,#0df,#0f1,#2f0,#0f0,#0f0,#0f2,#0f1,#0f3,#0f4,#0f5,#0fa,#08f,#07f,#40f,#20f,#60f,#50f,#20f,#30f,#80f,#80f)"></i>
<i style="background:linear-gradient(#0cf,#0cf,#0df,#0fe,#0fe,#0ef,#0fa,#0f7,#0f2,#1f0,#2f0,#4f0,#4f0,#8f0,#8f0,#af0,#8f0,#8f0,#9f0,#8f0,#8f0,#9f0,#9f0,#7f0,#7f0,#5f0,#4f0,#4f0,#2f0,#0f1,#0f2,#0f4,#0f6,#0f8,#0f8,#0fe,#0fe,#0fd,#0af,#0ef,#0f3,#0f0,#0f1,#0f1,#0f3,#0f3,#0f3,#0f6,#0f5,#0fb,#09f,#05f,#00f,#40f,#40f,#70f,#60f,#60f,#50f,#10f)"></i>
<i style="background:linear-gradient(#0bf,#0fd,#0cf,#0fd,#0af,#0fa,#0f8,#0f7,#0f1,#0f0,#2f0,#4f0,#3f0,#7f0,#8f0,#7f0,#9f0,#af0,#af0,#7f0,#7f0,#9f0,#7f0,#7f0,#5f0,#6f0,#5f0,#4f0,#1f0,#0f1,#0f3,#0f5,#0f7,#0f9,#0fd,#0fb,#0fb,#0ff,#0cf,#0bf,#0f3,#0f0,#0f0,#0f1,#0f1,#0f2,#0f5,#0f3,#0f6,#0ff,#06f,#07f,#00f,#40f,#40f,#30f,#60f,#80f,#80f,#70f)"></i>
<i style="background:linear-gradient(#0ef,#0ef,#0af,#0bf,#08f,#0af,#0f9,#0f9,#0f1,#0f1,#1f0,#4f0,#4f0,#5f0,#6f0,#8f0,#6f0,#8f0,#8f0,#6f0,#7f0,#5f0,#6f0,#5f0,#5f0,#3f0,#3f0,#2f0,#0f0,#0f1,#0f4,#0f4,#0f8,#0fa,#0fa,#0fb,#0fe,#0ef,#0ef,#0bf,#0f3,#0f0,#1f0,#0f0,#0f1,#0f2,#0f2,#0f4,#0f4,#0fb,#08f,#07f,#10f,#60f,#00f,#80f,#80f,#70f,#60f,#10f)"></i>
<i style="background:linear-gradient(#07f,#0fc,#0fe,#0df,#0ef,#0ff,#0f8,#0f7,#0f3,#1f0,#2f0,#3f0,#4f0,#6f0,#5f0,#7f0,#7f0,#8f0,#7f0,#9f0,#8f0,#6f0,#5f0,#6f0,#3f0,#4f0,#4f0,#1f0,#1f0,#0f0,#0f4,#0f7,#0f7,#0fb,#0fc,#0fd,#0fa,#0df,#0cf,#0cf,#0f1,#1f0,#2f0,#0f0,#0f1,#0f1,#0f2,#0f3,#0f2,#0fc,#02f,#08f,#00f,#50f,#70f,#40f,#40f,#50f,#40f,#80f)"></i>
<i style="background:linear-gradient(#0fe,#0bf,#0cf,#0ff,#08f,#0fb,#0f9,#0f5,#0f2,#1f0,#3f0,#3f0,#7f0,#8f0,#9f0,#8f0,#af0,#9f0,#9f0,#8f0,#8f0,#8f0,#6f0,#7f0,#7f0,#6f0,#4f0,#3f0,#3f0,#0f1,#0f2,#0f5,#0f5,#0fa,#0fb,#0f9,#0ff,#0df,#0fb,#0bf,#1f0,#1f0,#0f0,#2f0,#0f0,#0f0,#0f1,#0f2,#0f2,#0fe,#0cf,#07f,#30f,#50f,#70f,#20f,#50f,#60f,#50f,#80f)"></i>
<i style="background:linear-gradient(#05f,#0cf,#0af,#0bf,#0fe,#0f7,#0f8,#0f4,#0f1,#0f0,#3f0,#5f0,#7f0,#8f0,#8f0,#af0,#af0,#bf0,#9f0,#af0,#af0,#9f0,#8f0,#8f0,#7f0,#6f0,#6f0,#4f0,#0f0,#1f0,#0f2,#0f4,#0f5,#0f9,#0fb,#0fe,#0df,#0ff,#0fe,#0cf,#2f0,#3f0,#2f0,#3f0,#1f0,#0f0,#0f0,#0f3,#0f3,#0fa,#07f,#08f,#10f,#02f,#50f,#40f,#50f,#00f,#70f,#80f)"></i>
<i style="background:linear-gradient(#0fc,#0bf,#0fa,#0fd,#0fb,#0fa,#0f9,#0f4,#0f1,#1f0,#3f0,#4f0,#5f0,#6f0,#8f0,#7f0,#8f0,#8f0,#8f0,#8f0,#8f0,#7f0,#8f0,#6f0,#6f0,#3f0,#4f0,#4f0,#0f0,#0f1,#0f2,#0f6,#0f7,#0f9,#0fa,#0fb,#0ef,#0ef,#0df,#0fe,#2f0,#2f0,#2f0,#1f0,#1f0,#0f2,#0f1,#0f4,#0f5,#0fd,#0af,#07f,#40f,#40f,#50f,#80f,#70f,#80f,#80f,#000)"></i>
<i style="background:linear-gradient(#0ef,#0ef,#0fc,#0fd,#06f,#0bf,#0f7,#0f2,#1f0,#4f0,#4f0,#5f0,#8f0,#9f0,#af0,#9f0,#bf0,#9f0,#af0,#af0,#9f0,#9f0,#8f0,#7f0,#5f0,#4f0,#5f0,#3f0,#2f0,#0f1,#0f2,#0f4,#0f7,#0f8,#0f9,#0fd,#0fe,#0ff,#0ef,#0df,#0f1,#1f0,#2f0,#1f0,#0f1,#0f2,#0f1,#0f4,#0f4,#0fb,#0af,#01f,#02f,#60f,#30f,#50f,#60f,#80f,#80f,#50f)"></i>
<i style="background:linear-gradient(#0cf,#0af,#0fe,#0fc,#0fe,#0cf,#0f7,#0f3,#1f0,#2f0,#5f0,#5f0,#6f0,#9f0,#9f0,#af0,#af0,#af0,#9f0,#af0,#9f0,#8f0,#7f0,#8f0,#7f0,#5f0,#4f0,#4f0,#0f0,#1f0,#0f3,#0f3,#0f5,#0f9,#0fa,#0fc,#0fb,#0fe,#0ef,#0df,#0f3,#0f0,#2f0,#0f1,#0f3,#0f3,#0f4,#0f4,#0f6,#0fa,#06f,#08f,#60f,#40f,#60f,#20f,#40f,#20f,#60f,#10f)"></i>
<i style="background:linear-gradient(#0af,#0fe,#0ef,#0fc,#0fc,#0ff,#0f7,#0f3,#1f0,#3f0,#5f0,#6f0,#8f0,#af0,#9f0,#af0,#af0,#af0,#af0,#9f0,#9f0,#8f0,#7f0,#6f0,#5f0,#6f0,#5f0,#3f0,#1f0,#0f1,#0f1,#0f2,#0f7,#0f9,#0f9,#0fb,#0fd,#0fc,#0cf,#0fe,#0f4,#0f0,#0f0,#0f1,#0f0,#0f1,#0f4,#0f5,#0f7,#0fd,#0ef,#05f,#03f,#20f,#40f,#80f,#80f,#50f,#30f,#80f)"></i>
<i style="background:linear-gradient(#0ff,#0ff,#0ff,#08f,#0ff,#0f8,#0f6,#1f0,#2f0,#3f0,#7f0,#bf0,#bf0,#ef0,#ef0,#cf0,#df0,#cf0,#cf0,#df0,#ff0,#ef0,#bf0,#af0,#9f0,#8f0,#5f0,#4f0,#1f0,#0f0,#0f2,#0f4,#0f5,#0f8,#0fa,#0f7,#0ff,#0fb,#0df,#0ef,#0f1,#1f0,#1f0,#0f0,#0f2,#0f2,#0f4,#0f4,#0f5,#0fd,#0cf,#07f,#50f,#30f,#30f,#20f,#60f,#50f,#00f,#80f)"></i>
<i style="background:linear-gradient(#0cf,#09f,#09f,#0fd,#0fc,#0f8,#0f6,#1f0,#0f1,#2f0,#6f0,#af0,#af0,#df0,#ef0,#ff0,#df0,#ef0,#df0,#df0,#df0,#cf0,#bf0,#af0,#7f0,#5f0,#4f0,#0f0,#0f1,#0f1,#0f3,#0f5,#0f7,#0f9,#0fa,#0ff,#0fe,#0cf,#0af,#0ff,#0f1,#1f0,#3f0,#2f0,#0f1,#0f2,#0f2,#0f4,#0f5,#0f8,#00f,#0df,#40f,#80f,#30f,#20f,#40f,#80f,#60f,#80f)"></i>
<i style="background:linear-gradient(#0df,#03f,#0ff,#0ef,#0fa,#0f8,#0f6,#1f0,#3f0,#5f0,#7f0,#df0,#ef0,#fd0,#fb0,#fb0,#fb0,#fb0,#f90,#fc0,#fd0,#ef0,#df0,#cf0,#8f0,#8f0,#6f0,#4f0,#2f0,#0f0,#0f1,#0f2,#0f4,#0f8,#0fb,#0f8,#0fe,#0fd,#0ef,#0df,#1f0,#5f0,#5f0,#2f0,#2f0,#0f0,#0f0,#0f0,#0f3,#0fc,#08f,#00f,#40f,#70f,#00f,#40f,#70f,#50f,#70f,#70f)"></i>
<i style="background:linear-gradient(#0fd,#07f,#0fe,#0fa,#0f9,#0f9,#0f6,#2f0,#3f0,#3f0,#9f0,#bf0,#ef0,#fe0,#fb0,#fb0,#fb0,#fb0,#fa0,#fb0,#fe0,#fe0,#ef0,#bf0,#bf0,#8f0,#6f0,#3f0,#1f0,#0f1,#0f2,#0f4,#0f5,#0f9,#0f9,#0fe,#0fe,#0fc,#0af,#0ff,#1f0,#4f0,#4f0,#1f0,#3f0,#1f0,#0f1,#0f2,#0f4,#0f9,#08f,#06f,#10f,#10f,#00f,#10f,#00f,#50f,#50f,#60f)"></i>
<i style="background:linear-gradient(#0cf,#0fb,#0ef,#0fa,#0f2,#0fb,#0f6,#1f0,#2f0,#6f0,#af0,#bf0,#ff0,#fc0,#fa0,#fb0,#fa0,#fb0,#fc0,#fa0,#fd0,#ef0,#df0,#df0,#9f0,#8f0,#5f0,#3f0,#2f0,#0f0,#0f1,#0f2,#0f5,#0f7,#0fa,#0ff,#0fa,#0ef,#0bf,#0ff,#0f0,#3f0,#2f0,#2f0,#3f0,#1f0,#0f0,#0f1,#0f0,#0f8,#06f,#0bf,#10f,#00f,#10f,#30f,#80f,#50f,#70f,#50f)"></i>
<i style="background:linear-gradient(#0bf,#0cf,#0ff,#0fd,#0fe,#0ff,#0f9,#0f6,#0f4,#0f2,#2f0,#5f0,#8f0,#bf0,#cf0,#df0,#ff0,#ff0,#ef0,#df0,#bf0,#9f0,#7f0,#8f0,#3f0,#1f0,#1f0,#0f4,#0f2,#0f6,#0f7,#0f8,#0f7,#0fa,#0fb,#0fd,#0ff,#0bf,#0df,#06f,#0f2,#3f0,#2f0,#2f0,#0f0,#1f0,#0f2,#0f2,#0f2,#0fb,#0af,#05f,#40f,#01f,#10f,#01f,#40f,#50f,#80f,#10f)"></i>
<i style="background:linear-gradient(#0ff,#0ef,#0cf,#0ff,#0ef,#0ff,#0f5,#0f2,#1f0,#4f0,#6f0,#af0,#cf0,#fe0,#fc0,#f90,#fa0,#fb0,#fa0,#fa0,#fd0,#ff0,#df0,#df0,#7f0,#5f0,#7f0,#2f0,#1f0,#0f0,#0f2,#0f3,#0f7,#0f8,#0fa,#0fc,#0fd,#0ef,#0ef,#0ff,#0f2,#2f0,#2f0,#1f0,#0f1,#0f1,#0f1,#0f6,#0f6,#0fb,#07f,#06f,#20f,#10f,#30f,#60f,#80f,#60f,#50f,#80f)"></i>
<i style="background:linear-gradient(#0fd,#0cf,#0ff,#0f5,#0df,#0f9,#0f7,#0f3,#2f0,#3f0,#7f0,#7f0,#cf0,#df0,#fc0,#fa0,#fa0,#fc0,#f90,#fc0,#fd0,#ff0,#ef0,#bf0,#af0,#6f0,#4f0,#2f0,#1f0,#0f0,#0f2,#0f2,#0f5,#0f9,#0fb,#0fa,#0fd,#0df,#0bf,#0fe,#0f3,#1f0,#2f0,#0f1,#0f1,#0f2,#0f4,#0f4,#0f7,#0fb,#09f,#02f,#20f,#00f,#30f,#40f,#60f,#50f,#80f,#50f)"></i>
<i style="background:linear-gradient(#0df,#0ff,#09f,#0ff,#0cf,#0df,#0f8,#0f1,#1f0,#2f0,#6f0,#af0,#df0,#ff0,#fc0,#fc0,#f90,#f90,#f80,#fc0,#fd0,#fe0,#df0,#cf0,#9f0,#7f0,#5f0,#4f0,#2f0,#2f0,#0f0,#0f4,#0f5,#0f8,#0f9,#0fc,#0fd,#0ef,#0fc,#0cf,#0f1,#0f0,#0f0,#0f0,#0f3,#0f3,#0f3,#0f4,#0f5,#0ef,#08f,#0fe,#20f,#50f,#50f,#40f,#10f,#80f,#80f,#80f)"></i>
<i style="background:linear-gradient(#0ef,#06f,#0ef,#0bf,#0fb,#0fc,#0f7,#0f3,#0f1,#2f0,#7f0,#7f0,#bf0,#ef0,#ff0,#fc0,#fb0,#fb0,#fc0,#ff0,#ef0,#ff0,#bf0,#af0,#8f0,#5f0,#3f0,#2f0,#0f0,#0f0,#0f2,#0f3,#0f6,#0f8,#0fc,#0fb,#0ef,#0bf,#0fe,#0cf,#0f3,#0f2,#0f0,#0f2,#0f0,#0f2,#0f3,#0f3,#0f6,#0fa,#08f,#04f,#40f,#50f,#40f,#80f,#03f,#50f,#80f,#80f)"></i>
<i style="background:linear-gradient(#0df,#05f,#0cf,#0fc,#0fd,#0fc,#0f8,#0f4,#0f0,#3f0,#4f0,#9f0,#cf0,#ef0,#ff0,#fe0,#ff0,#fd0,#fd0,#fd0,#fe0,#ef0,#df0,#bf0,#8f0,#7f0,#4f0,#3f0,#1f0,#0f2,#0f2,#0f4,#0f6,#0f9,#0fc,#0ef,#0f9,#0df,#0ff,#0ff,#0f1,#2f0,#0f0,#0f0,#0f0,#0f0,#0f4,#0f2,#0f4,#0fd,#0bf,#0bf,#05f,#70f,#04f,#50f,#80f,#80f,#000,#40f)"></i>
<i style="background:linear-gradient(#0fe,#07f,#09f,#0af,#0fc,#0f8,#0f8,#0f3,#1f0,#3f0,#4f0,#9f0,#cf0,#ff0,#fd0,#fc0,#fc0,#fd0,#fc0,#fc0,#fe0,#ff0,#bf0,#cf0,#9f0,#8f0,#5f0,#2f0,#2f0,#0f1,#0f1,#0f3,#0f6,#0f9,#0fb,#0fd,#0ff,#0ef,#0fc,#09f,#0f1,#3f0,#2f0,#4f0,#0f1,#0f1,#0f0,#0f5,#0f2,#0f9,#0bf,#0fc,#10f,#10f,#40f,#50f,#40f,#80f,#000,#70f)"></i>
<i style="background:linear-gradient(#0fc,#0df,#0cf,#0f9,#0fe,#0ef,#0fa,#0f4,#0f0,#0f0,#3f0,#5f0,#8f0,#cf0,#ef0,#ff0,#ef0,#fe0,#ff0,#df0,#ef0,#cf0,#af0,#9f0,#8f0,#5f0,#2f0,#2f0,#0f0,#0f2,#0f3,#0f4,#0f7,#0fb,#0fb,#0ff,#0ff,#0af,#0cf,#0cf,#0f2,#2f0,#2f0,#3f0,#0f0,#0f2,#0f0,#0f3,#0f3,#0f7,#0cf,#00f,#20f,#10f,#00f,#70f,#10f,#50f,#30f,#70f)"></i>
<i style="background:linear-gradient(#09f,#0ff,#0df,#0fc,#0f9,#0fc,#0fb,#0f6,#0f2,#0f0,#2f0,#6f0,#8f0,#af0,#cf0,#ef0,#df0,#df0,#cf0,#ef0,#bf0,#bf0,#af0,#8f0,#6f0,#4f0,#2f0,#2f0,#1f0,#0f0,#0f3,#0f5,#0f8,#0f9,#0f8,#0ef,#0ef,#0fe,#0bf,#08f,#0f2,#1f0,#2f0,#1f0,#0f0,#0f1,#0f1,#0f3,#0f3,#0fa,#07f,#0bf,#40f,#30f,#40f,#70f,#60f,#70f,#80f,#70f)"></i>
<i style="background:linear-gradient(#0cf,#0ef,#0bf,#0fb,#0fa,#0df,#0fb,#0f6,#0f1,#1f0,#4f0,#6f0,#8f0,#cf0,#df0,#ff0,#fe0,#ef0,#ff0,#ff0,#ff0,#cf0,#cf0,#9f0,#8f0,#7f0,#2f0,#2f0,#0f1,#0f1,#0f1,#0f4,#0f8,#0f8,#0fe,#0fd,#0fd,#0ef,#0df,#0bf,#0f2,#1f0,#2f0,#1f0,#0f0,#0f1,#0f2,#0f3,#0f6,#0ef,#05f,#05f,#20f,#60f,#70f,#30f,#50f,#30f,#70f,#70f)"></i>
<i style="background:linear-gradient(#0cf,#0cf,#0fd,#0fc,#0fb,#0fa,#0fb,#0f6,#0f2,#0f1,#3f0,#7f0,#9f0,#bf0,#df0,#ff0,#fe0,#ff0,#ff0,#ff0,#bf0,#ef0,#bf0,#9f0,#8f0,#4f0,#4f0,#1f0,#0f0,#0f1,#0f4,#0f6,#0f5,#0f7,#0fb,#0f8,#0fc,#0fe,#0ff,#0df,#0f2,#1f0,#1f0,#0f0,#0f0,#0f3,#0f3,#0f5,#0f5,#0fb,#09f,#0cf,#30f,#20f,#80f,#50f,#80f,#70f,#50f,#20f)"></i>
<i style="background:linear-gradient(#0ff,#08f,#0bf,#0fe,#0df,#0ff,#0f9,#0f6,#0f1,#1f0,#4f0,#7f0,#af0,#af0,#ff0,#ff0,#fe0,#fd0,#fd0,#fe0,#ef0,#ef0,#bf0,#8f0,#7f0,#6f0,#3f0,#2f0,#1f0,#0f1,#0f1,#0f6,#0f5,#0f9,#0fc,#0fd,#0fe,#0df,#0fe,#0ef,#0f2,#0f0,#0f1,#0f0,#0f2,#0f1,#0f4,#0f6,#0f6,#0fc,#0df,#03f,#50f,#30f,#70f,#80f,#60f,#60f,#40f,#30f)"></i>
<i style="background:linear-gradient(#0fb,#0fe,#0fd,#0af,#0ff,#0fe,#0f9,#0f5,#2f0,#0f0,#4f0,#7f0,#cf0,#df0,#ff0,#fe0,#ff0,#fd0,#fc0,#fc0,#fe0,#ff0,#cf0,#cf0,#9f0,#8f0,#5f0,#5f0,#0f0,#0f0,#0f2,#0f4,#0f6,#0f8,#0fa,#0fa,#0fb,#0fe,#0fd,#0af,#0f2,#2f0,#0f1,#0f3,#0f2,#0f2,#0f4,#0f5,#0f4,#0fc,#0df,#01f,#10f,#30f,#40f,#20f,#40f,#30f,#80f,#40f)"></i>
<i style="background:linear-gradient(#0cf,#0bf,#0fe,#0bf,#0af,#0cf,#0f3,#0f6,#0f5,#0f2,#3f0,#4f0,#7f0,#af0,#cf0,#ff0,#ef0,#ff0,#ff0,#ef0,#ef0,#cf0,#af0,#8f0,#7f0,#4f0,#2f0,#0f0,#0f0,#0f3,#0f6,#0f7,#0f8,#0fa,#0fc,#0fe,#0ff,#0ff,#08f,#0bf,#0f2,#0f1,#0f1,#0f0,#0f1,#0f3,#0f4,#0f3,#0f5,#0fe,#09f,#08f,#50f,#30f,#10f,#40f,#80f,#80f,#70f,#30f)"></i>
<i style="background:linear-gradient(#0ef,#0df,#0bf,#0fe,#0df,#0ef,#0f9,#0f6,#0f1,#2f0,#3f0,#6f0,#8f0,#cf0,#cf0,#ef0,#ff0,#ef0,#fe0,#ef0,#cf0,#df0,#bf0,#9f0,#7f0,#7f0,#4f0,#1f0,#0f0,#0f0,#0f2,#0f6,#0f8,#0fa,#0fa,#0fa,#0ff,#0bf,#0bf,#07f,#0f1,#1f0,#0f2,#0f0,#0f1,#0f1,#0f4,#0f3,#0f4,#0f7,#03f,#08f,#20f,#00f,#20f,#60f,#70f,#70f,#40f,#70f)"></i>
<i style="background:linear-gradient(#0fc,#0df,#0fa,#0ef,#0fd,#0ff,#0f8,#0f5,#0f0,#3f0,#5f0,#8f0,#af0,#ff0,#fe0,#ff0,#fe0,#fc0,#fd0,#fd0,#fe0,#fe0,#df0,#cf0,#bf0,#8f0,#6f0,#4f0,#2f0,#1f0,#0f1,#0f4,#0f4,#0fb,#0f9,#0fe,#0fe,#0ef,#0fe,#0df,#0f0,#3f0,#2f0,#2f0,#1f0,#0f0,#0f1,#0f2,#0f4,#0fc,#02f,#08f,#40f,#20f,#50f,#50f,#20f,#30f,#70f,#30f)"></i>
<i style="background:linear-gradient(#09f,#0cf,#0af,#0fd,#0cf,#0ff,#0f9,#0f4,#1f0,#3f0,#7f0,#9f0,#bf0,#ff0,#fc0,#fd0,#fc0,#fe0,#fd0,#fe0,#ff0,#fe0,#ff0,#cf0,#bf0,#af0,#6f0,#6f0,#4f0,#2f0,#1f0,#0f2,#0f6,#0f7,#0f9,#0f9,#0f5,#0df,#09f,#0fe,#2f0,#3f0,#2f0,#1f0,#2f0,#1f0,#0f0,#0f2,#0f3,#0fa,#06f,#09f,#40f,#20f,#10f,#60f,#30f,#10f,#80f,#50f)"></i>
<i style="background:linear-gradient(#0af,#0af,#0fe,#0cf,#0df,#0f9,#0f9,#0f7,#0f2,#1f0,#4f0,#6f0,#bf0,#cf0,#df0,#ef0,#df0,#df0,#df0,#df0,#cf0,#df0,#cf0,#bf0,#8f0,#8f0,#4f0,#4f0,#2f0,#0f1,#0f3,#0f3,#0f7,#0f9,#0fa,#0fc,#0ef,#0cf,#0ef,#0bf,#0f0,#3f0,#0f0,#1f0,#1f0,#0f0,#0f3,#0f3,#0f3,#0fd,#05f,#0ef,#20f,#70f,#50f,#70f,#80f,#70f,#40f,#80f)"></i>
<i style="background:linear-gradient(#0bf,#0af,#0ef,#0bf,#0f7,#0cf,#0fa,#0f5,#0f1,#0f0,#2f0,#4f0,#8f0,#af0,#cf0,#cf0,#cf0,#ef0,#af0,#cf0,#bf0,#bf0,#cf0,#9f0,#7f0,#6f0,#3f0,#2f0,#0f0,#0f1,#0f4,#0f6,#0f6,#0fa,#0fb,#0ff,#0ef,#0ff,#0ef,#0bf,#0f3,#1f0,#1f0,#0f0,#0f0,#0f2,#0f3,#0f4,#0f2,#0fb,#03f,#0ef,#20f,#30f,#70f,#000,#50f,#80f,#80f,#80f)"></i>
<i style="background:linear-gradient(#0df,#08f,#0fd,#0fe,#0ff,#0fd,#0fb,#0f4,#0f2,#1f0,#3f0,#5f0,#9f0,#cf0,#df0,#cf0,#cf0,#cf0,#df0,#df0,#df0,#bf0,#cf0,#af0,#8f0,#6f0,#3f0,#3f0,#1f0,#0f0,#0f2,#0f4,#0f7,#0f8,#0fa,#0ff,#0f8,#0ef,#0ff,#0ef,#0f2,#0f0,#0f0,#0f1,#0f3,#0f1,#0f2,#0f3,#0f6,#0fa,#05f,#04f,#00f,#00f,#80f,#60f,#80f,#80f,#60f,#50f)"></i>
<i style="background:linear-gradient(#0ef,#0ef,#08f,#0fd,#0af,#0fa,#0fb,#0f5,#0f0,#2f0,#5f0,#6f0,#bf0,#bf0,#cf0,#cf0,#ef0,#cf0,#ef0,#cf0,#df0,#df0,#bf0,#cf0,#af0,#7f0,#3f0,#3f0,#1f0,#0f0,#0f1,#0f4,#0f6,#0f7,#0f8,#0fa,#0fe,#0ef,#0ef,#0ff,#0f3,#1f0,#0f2,#0f0,#0f2,#0f4,#0f3,#0f4,#0f5,#0fb,#07f,#07f,#10f,#30f,#00f,#60f,#60f,#70f,#10f,#80f)"></i>
<i style="background:linear-gradient(#0bf,#0df,#0af,#0ff,#0bf,#0cf,#0fb,#0f7,#1f0,#1f0,#4f0,#5f0,#9f0,#df0,#df0,#cf0,#df0,#bf0,#df0,#df0,#df0,#df0,#cf0,#af0,#af0,#6f0,#5f0,#3f0,#0f0,#0f0,#0f5,#0f3,#0f7,#0f9,#0fc,#0fc,#0fd,#0df,#0ef,#0ff,#0f4,#0f0,#0f0,#0f2,#0f2,#0f2,#0f3,#0f6,#0f6,#0f8,#0bf,#0cf,#50f,#01f,#30f,#80f,#70f,#80f,#40f,#60f)"></i>
<i style="background:linear-gradient(#0f9,#0fc,#0cf,#0cf,#0fe,#09f,#0f8,#0f5,#0f0,#1f0,#5f0,#8f0,#bf0,#ef0,#fe0,#fe0,#ef0,#ef0,#fe0,#ff0,#ef0,#ff0,#df0,#df0,#af0,#9f0,#5f0,#5f0,#1f0,#2f0,#0f2,#0f4,#0f5,#0f7,#0f9,#0fe,#0ef,#0fd,#0df,#0ef,#0f2,#0f0,#2f0,#1f0,#1f0,#0f1,#0f2,#0f4,#0f5,#0fa,#05f,#05f,#10f,#20f,#80f,#70f,#50f,#40f,#60f,#50f)"></i>
<i style="background:linear-gradient(#0bf,#07f,#0ff,#09f,#0fa,#0fb,#0f9,#0f6,#0f0,#3f0,#7f0,#af0,#cf0,#ff0,#fe0,#fe0,#ff0,#ef0,#ef0,#ff0,#ff0,#ff0,#fe0,#bf0,#bf0,#8f0,#7f0,#5f0,#3f0,#2f0,#1f0,#0f3,#0f5,#0f7,#0f7,#0fe,#0df,#0fb,#0fb,#07f,#0f2,#2f0,#3f0,#2f0,#1f0,#1f0,#0f1,#0f1,#0f3,#0fb,#0af,#03f,#30f,#50f,#10f,#30f,#70f,#000,#60f,#80f)"></i>
<i style="background:linear-gradient(#0ef,#0fb,#0ff,#0f7,#0fd,#0cf,#0fa,#0f6,#3f0,#3f0,#5f0,#af0,#bf0,#fe0,#fe0,#ff0,#ff0,#fe0,#fe0,#fd0,#ff0,#fe0,#fe0,#ff0,#bf0,#af0,#8f0,#6f0,#5f0,#2f0,#1f0,#0f2,#0f4,#0f6,#0fa,#0fd,#0ef,#0fd,#0ef,#0cf,#1f0,#5f0,#4f0,#3f0,#2f0,#1f0,#0f0,#0f1,#0f3,#0f9,#06f,#04f,#01f,#10f,#10f,#40f,#10f,#10f,#80f,#000)"></i>
<i style="background:linear-gradient(#0fc,#0ef,#0ff,#0bf,#0fa,#0ff,#0f9,#0f4,#3f0,#4f0,#4f0,#9f0,#bf0,#ef0,#ef0,#ff0,#ef0,#fe0,#ff0,#ff0,#ff0,#ff0,#ef0,#df0,#cf0,#8f0,#6f0,#4f0,#2f0,#2f0,#0f1,#0f2,#0f4,#0f8,#0fb,#0fe,#0fe,#0fc,#0ef,#0ff,#1f0,#4f0,#4f0,#3f0,#3f0,#1f0,#3f0,#0f0,#0f2,#0ef,#04f,#0df,#00f,#20f,#10f,#40f,#70f,#000,#70f,#50f)"></i>
<i style="background:linear-gradient(#0fd,#0df,#0ef,#0cf,#0fc,#0fd,#0f9,#0f5,#1f0,#4f0,#5f0,#8f0,#ef0,#ef0,#ef0,#fe0,#df0,#ff0,#ef0,#cf0,#ef0,#ef0,#df0,#df0,#bf0,#af0,#7f0,#3f0,#4f0,#1f0,#0f0,#0f3,#0f5,#0f8,#0f9,#0fb,#0fe,#0df,#0ff,#0cf,#0f1,#2f0,#2f0,#3f0,#3f0,#1f0,#0f0,#0f3,#0f2,#0f8,#08f,#08f,#50f,#30f,#60f,#30f,#70f,#40f,#30f,#30f)"></i>
<i style="background:linear-gradient(#0df,#0af,#0cf,#0cf,#0cf,#0fc,#0fb,#0f6,#0f2,#2f0,#2f0,#8f0,#af0,#cf0,#ef0,#df0,#cf0,#df0,#cf0,#ef0,#cf0,#df0,#df0,#bf0,#9f0,#8f0,#5f0,#3f0,#1f0,#2f0,#0f3,#0f4,#0f6,#0f9,#0f8,#0f7,#0fd,#0ef,#0cf,#0cf,#0f0,#0f1,#2f0,#1f0,#2f0,#0f1,#0f1,#0f1,#0f3,#0fe,#08f,#01f,#30f,#01f,#20f,#50f,#40f,#60f,#60f,#60f)"></i>
<i style="background:linear-gradient(#0ff,#0af,#09f,#0fc,#0fa,#0fe,#0f8,#0f4,#0f1,#2f0,#4f0,#7f0,#8f0,#cf0,#cf0,#df0,#cf0,#df0,#cf0,#cf0,#df0,#cf0,#bf0,#bf0,#af0,#8f0,#5f0,#3f0,#2f0,#0f1,#0f1,#0f3,#0f5,#0f9,#0fc,#0fb,#0fd,#0fd,#0af,#0df,#0f2,#2f0,#1f0,#0f0,#0f1,#0f1,#0f2,#0f3,#0f4,#0fb,#04f,#03f,#10f,#20f,#40f,#50f,#70f,#50f,#000,#80f)"></i>
<i style="background:linear-gradient(#0fd,#08f,#0df,#0df,#0ff,#0ff,#0fa,#0f5,#2f0,#2f0,#6f0,#9f0,#bf0,#bf0,#ef0,#df0,#fe0,#df0,#ef0,#ef0,#ef0,#df0,#cf0,#af0,#cf0,#9f0,#8f0,#5f0,#4f0,#2f0,#0f1,#0f2,#0f5,#0f7,#0f9,#0fd,#0ff,#0ff,#0ef,#0fe,#0f2,#2f0,#1f0,#1f0,#0f1,#0f1,#0f2,#0f4,#0f5,#0fe,#0bf,#04f,#00f,#30f,#40f,#30f,#30f,#50f,#70f,#70f)"></i>
<i style="background:linear-gradient(#0ff,#0fc,#0fd,#0fc,#0f6,#0f8,#0f8,#0f5,#4f0,#3f0,#6f0,#9f0,#af0,#cf0,#ff0,#ef0,#ff0,#ff0,#ef0,#ff0,#fe0,#ff0,#df0,#bf0,#af0,#8f0,#8f0,#5f0,#4f0,#3f0,#0f0,#0f0,#0f6,#0f8,#0f8,#0fa,#0ff,#0fe,#0ff,#0fe,#0f3,#1f0,#2f0,#0f0,#1f0,#0f0,#0f3,#0f2,#0f3,#0fa,#08f,#09f,#10f,#60f,#30f,#20f,#50f,#50f,#80f,#40f)"></i>
<i style="background:linear-gradient(#0fc,#0ef,#0fa,#0fc,#0ff,#0fb,#0f7,#0f3,#3f0,#5f0,#7f0,#9f0,#cf0,#fe0,#ff0,#fd0,#fe0,#fd0,#fe0,#fe0,#fe0,#ff0,#df0,#cf0,#bf0,#af0,#af0,#5f0,#3f0,#3f0,#2f0,#0f0,#0f3,#0f8,#0f9,#0fb,#0ff,#0fa,#0fe,#0ef,#0f0,#3f0,#2f0,#4f0,#1f0,#0f0,#0f2,#0f1,#0f2,#0fb,#08f,#08f,#01f,#40f,#50f,#10f,#10f,#000,#60f,#60f)"></i>
<i style="background:linear-gradient(#0cf,#0fc,#0ef,#0cf,#0fd,#0f4,#0f9,#0f4,#2f0,#5f0,#6f0,#af0,#bf0,#ef0,#ef0,#fe0,#fe0,#fd0,#ff0,#fe0,#fe0,#ff0,#ef0,#cf0,#cf0,#9f0,#9f0,#6f0,#7f0,#4f0,#1f0,#0f2,#0f5,#0f5,#0f9,#0fb,#0fd,#0ff,#0cf,#0cf,#1f0,#2f0,#3f0,#2f0,#2f0,#0f0,#0f1,#0f1,#0f2,#0fd,#07f,#09f,#03f,#20f,#20f,#40f,#70f,#50f,#30f,#80f)"></i>
<i style="background:linear-gradient(#0ff,#0fd,#0fb,#0fe,#0ff,#0ef,#0f9,#0f5,#3f0,#5f0,#6f0,#6f0,#8f0,#df0,#df0,#ef0,#ef0,#df0,#ef0,#ef0,#cf0,#cf0,#cf0,#af0,#8f0,#8f0,#9f0,#5f0,#3f0,#2f0,#1f0,#0f1,#0f4,#0f8,#0fa,#0fa,#0fd,#0ff,#0df,#0bf,#1f0,#4f0,#3f0,#2f0,#2f0,#2f0,#0f0,#0f1,#0f2,#0fa,#00f,#05f,#20f,#01f,#70f,#80f,#40f,#20f,#30f,#40f)"></i>
<i style="background:linear-gradient(#08f,#0cf,#0af,#0bf,#0ff,#0fd,#0f9,#0f6,#0f0,#2f0,#3f0,#6f0,#8f0,#af0,#af0,#df0,#bf0,#cf0,#ef0,#bf0,#cf0,#bf0,#cf0,#9f0,#8f0,#8f0,#6f0,#4f0,#5f0,#2f0,#0f1,#0f3,#0f5,#0f9,#0fb,#0ef,#0fd,#0ff,#0df,#0ff,#1f0,#2f0,#3f0,#1f0,#3f0,#2f0,#0f0,#0f0,#0f2,#0fb,#06f,#00f,#05f,#80f,#01f,#40f,#40f,#20f,#60f,#80f)"></i>
<i style="background:linear-gradient(#0af,#0df,#0fd,#0ef,#0fc,#0fd,#0fa,#0f6,#0f1,#1f0,#4f0,#5f0,#7f0,#7f0,#8f0,#9f0,#9f0,#9f0,#af0,#bf0,#af0,#9f0,#9f0,#6f0,#8f0,#5f0,#4f0,#2f0,#3f0,#1f0,#0f2,#0f5,#0f7,#0f8,#0fa,#0fe,#0fd,#0df,#0ff,#0ff,#0f0,#1f0,#4f0,#2f0,#1f0,#0f0,#0f1,#0f2,#0f3,#0fd,#09f,#0ff,#01f,#40f,#00f,#50f,#10f,#80f,#60f,#70f)"></i>
<i style="background:linear-gradient(#09f,#0cf,#0af,#0fd,#0ff,#0fc,#0f8,#0f7,#0f2,#0f0,#3f0,#4f0,#5f0,#7f0,#9f0,#9f0,#af0,#9f0,#9f0,#9f0,#af0,#9f0,#9f0,#7f0,#5f0,#4f0,#4f0,#3f0,#3f0,#0f2,#0f4,#0f3,#0f6,#0f9,#0fb,#0f6,#0fb,#0fc,#0df,#0af,#0f2,#1f0,#0f0,#1f0,#0f1,#0f0,#0f3,#0f2,#0f3,#0fe,#0af,#09f,#80f,#20f,#10f,#40f,#20f,#30f,#80f,#70f)"></i>
<i style="background:linear-gradient(#0fc,#0fd,#0ff,#0ef,#0fa,#0fd,#0fa,#0f7,#0f1,#0f0,#3f0,#4f0,#5f0,#8f0,#af0,#af0,#bf0,#bf0,#9f0,#af0,#8f0,#8f0,#8f0,#7f0,#4f0,#5f0,#4f0,#2f0,#1f0,#0f2,#0f2,#0f4,#0f7,#0f9,#0f9,#0fe,#0fe,#0df,#0ff,#0bf,#0f0,#0f0,#0f1,#0f0,#0f2,#0f3,#0f3,#0f3,#0f5,#0fa,#04f,#10f,#01f,#30f,#20f,#70f,#000,#80f,#60f,#80f)"></i>
<i style="background:linear-gradient(#0af,#0cf,#08f,#09f,#0ff,#0ef,#09f,#0fa,#0f7,#0f6,#0f4,#0f1,#0f2,#1f0,#1f0,#3f0,#3f0,#4f0,#3f0,#5f0,#2f0,#4f0,#3f0,#0f0,#0f1,#0f1,#0f2,#0f3,#0f4,#0f7,#0fa,#0fb,#0fc,#0fd,#0fe,#0ff,#0cf,#0af,#0af,#04f,#0f1,#0f0,#1f0,#0f1,#0f2,#0f3,#0f3,#0f5,#0f6,#0fb,#0ff,#10f,#01f,#70f,#60f,#20f,#70f,#40f,#80f,#000)"></i>
<i style="background:linear-gradient(#0df,#0cf,#09f,#0bf,#0fa,#0f8,#0fd,#0f9,#0f6,#0f5,#0f4,#0f1,#0f1,#5f0,#4f0,#4f0,#4f0,#5f0,#7f0,#6f0,#4f0,#4f0,#3f0,#1f0,#1f0,#1f0,#0f1,#0f1,#0f4,#0f6,#0f7,#0f8,#0fa,#0fb,#0fa,#0fd,#0fd,#0bf,#07f,#06f,#0f3,#1f0,#0f1,#0f1,#0f3,#0f4,#0f5,#0f6,#0f7,#0fe,#09f,#05f,#70f,#30f,#50f,#60f,#80f,#40f,#70f,#60f)"></i>
<i style="background:linear-gradient(#0af,#0fe,#0cf,#0ef,#0fe,#0fe,#0fb,#0f5,#0f0,#3f0,#5f0,#7f0,#bf0,#ef0,#ef0,#df0,#df0,#ef0,#df0,#df0,#ef0,#bf0,#cf0,#bf0,#af0,#8f0,#7f0,#5f0,#3f0,#1f0,#0f1,#0f3,#0f7,#0f8,#0fa,#0fe,#0fe,#0fc,#0ef,#0df,#0f1,#0f0,#1f0,#1f0,#0f1,#0f2,#0f2,#0f3,#0f3,#0fa,#0df,#08f,#01f,#50f,#30f,#60f,#50f,#70f,#80f,#50f)"></i>
<i style="background:linear-gradient(#0df,#0df,#0fb,#0fe,#0f9,#0fc,#0fb,#0f5,#0f0,#0f0,#4f0,#6f0,#9f0,#bf0,#bf0,#cf0,#cf0,#df0,#cf0,#df0,#df0,#cf0,#bf0,#9f0,#8f0,#8f0,#5f0,#3f0,#1f0,#1f0,#0f3,#0f4,#0f6,#0f9,#0fa,#0fd,#0ff,#0ef,#0cf,#0cf,#0f4,#1f0,#2f0,#0f1,#0f2,#0f1,#0f2,#0f4,#0f5,#0fa,#07f,#06f,#70f,#30f,#40f,#000,#50f,#20f,#00f,#80f)"></i>
<i style="background:linear-gradient(#0df,#0f8,#0cf,#07f,#0f9,#0fc,#0fa,#0f6,#1f0,#4f0,#6f0,#7f0,#af0,#ff0,#ef0,#df0,#ff0,#ff0,#cf0,#ff0,#df0,#cf0,#cf0,#cf0,#bf0,#8f0,#7f0,#4f0,#3f0,#0f0,#0f3,#0f3,#0f5,#0f8,#0f9,#0f8,#0fd,#0fd,#0ff,#0fe,#0f1,#3f0,#3f0,#2f0,#0f0,#0f0,#0f1,#0f2,#0f3,#0fa,#06f,#08f,#00f,#10f,#10f,#00f,#30f,#70f,#000,#70f)"></i>
<i style="background:linear-gradient(#0bf,#0bf,#0fd,#08f,#0fe,#0ff,#0fa,#0f5,#2f0,#2f0,#3f0,#6f0,#bf0,#ef0,#ff0,#ef0,#ff0,#ff0,#df0,#ff0,#df0,#ff0,#cf0,#cf0,#af0,#9f0,#5f0,#5f0,#4f0,#1f0,#0f0,#0f2,#0f6,#0fa,#0fa,#0fc,#0fd,#0fd,#0df,#0df,#1f0,#3f0,#3f0,#2f0,#2f0,#1f0,#0f0,#0f1,#0f3,#0fa,#0ef,#07f,#40f,#60f,#20f,#70f,#80f,#60f,#80f,#000)"></i>
<i style="background:linear-gradient(#0fd,#0fc,#0ff,#0fd,#0f4,#0fa,#0f9,#0f4,#0f1,#2f0,#4f0,#7f0,#bf0,#bf0,#ef0,#ef0,#df0,#df0,#df0,#df0,#cf0,#cf0,#df0,#df0,#af0,#7f0,#6f0,#3f0,#2f0,#0f0,#0f0,#0f3,#0f6,#0f8,#0fa,#0fd,#0fc,#0ef,#0df,#09f,#0f1,#1f0,#3f0,#3f0,#1f0,#0f0,#0f2,#0f1,#0f3,#0fe,#07f,#0cf,#00f,#80f,#60f,#80f,#80f,#80f,#70f,#50f)"></i>
<i style="background:linear-gradient(#08f,#0fa,#0fe,#0ff,#0f7,#0bf,#0f9,#0f5,#0f0,#2f0,#6f0,#af0,#cf0,#fe0,#fd0,#ff0,#ff0,#ef0,#ef0,#ff0,#ff0,#ff0,#ff0,#ef0,#cf0,#9f0,#7f0,#6f0,#3f0,#2f0,#1f0,#0f4,#0f4,#0f6,#0f9,#0fe,#0ff,#0ff,#0fc,#0cf,#0f0,#3f0,#2f0,#1f0,#1f0,#0f1,#0f2,#0f2,#0f2,#0ff,#0df,#04f,#10f,#01f,#30f,#80f,#40f,#70f,#30f,#80f)"></i>
<i style="background:linear-gradient(#0fe,#0af,#0fe,#0ff,#0fc,#0f9,#0fb,#0f8,#0f0,#2f0,#2f0,#7f0,#9f0,#df0,#cf0,#cf0,#ef0,#ef0,#ef0,#ef0,#df0,#cf0,#cf0,#bf0,#8f0,#8f0,#7f0,#4f0,#3f0,#0f0,#0f2,#0f4,#0f5,#0f8,#0f9,#0f9,#0fe,#0fd,#0ff,#0bf,#0f0,#1f0,#2f0,#2f0,#0f1,#0f1,#0f2,#0f4,#0f5,#0fc,#06f,#0cf,#00f,#50f,#60f,#20f,#50f,#000,#80f,#60f)"></i>
<i style="background:linear-gradient(#0f6,#0fd,#0fd,#0fe,#0fe,#0bf,#0f9,#0f5,#0f0,#0f0,#4f0,#8f0,#bf0,#df0,#df0,#cf0,#df0,#df0,#ef0,#df0,#df0,#ef0,#df0,#bf0,#9f0,#8f0,#6f0,#4f0,#3f0,#1f0,#0f1,#0f3,#0f6,#0f8,#0fc,#0f9,#0ff,#0cf,#0bf,#0cf,#0f3,#0f1,#1f0,#0f0,#0f0,#0f4,#0f3,#0f2,#0f4,#0f9,#0df,#07f,#40f,#40f,#60f,#40f,#01f,#80f,#40f,#50f)"></i>
<i style="background:linear-gradient(#0bf,#0ff,#0af,#0ef,#0fe,#0fe,#0fa,#0f6,#0f0,#2f0,#4f0,#6f0,#8f0,#bf0,#df0,#cf0,#cf0,#df0,#cf0,#bf0,#ef0,#ef0,#cf0,#bf0,#af0,#6f0,#5f0,#2f0,#2f0,#0f0,#0f1,#0f4,#0f6,#0f8,#0fb,#0fc,#0fb,#0ef,#0fd,#0ef,#0f2,#0f1,#0f2,#0f0,#0f2,#0f3,#0f2,#0f4,#0f7,#0fb,#0df,#06f,#20f,#000,#20f,#50f,#20f,#30f,#80f,#70f)"></i>
<i style="background:linear-gradient(#0ef,#0fd,#0ff,#0df,#0ff,#0fd,#0fb,#0f5,#0f1,#1f0,#3f0,#6f0,#9f0,#df0,#cf0,#df0,#df0,#ef0,#ef0,#df0,#ff0,#cf0,#df0,#af0,#af0,#8f0,#5f0,#4f0,#3f0,#0f1,#0f1,#0f2,#0f4,#0f9,#0fb,#0fa,#0fd,#0bf,#0ff,#0bf,#0f2,#0f0,#0f1,#0f0,#0f1,#0f3,#0f1,#0f4,#0f5,#0fd,#04f,#09f,#40f,#30f,#60f,#60f,#000,#80f,#70f,#20f)"></i>
<i style="background:linear-gradient(#08f,#0af,#0fe,#0fe,#0fc,#0ff,#0fa,#0f5,#1f0,#3f0,#5f0,#8f0,#cf0,#df0,#ff0,#ef0,#fe0,#df0,#cf0,#ef0,#ef0,#ff0,#ef0,#df0,#bf0,#9f0,#7f0,#5f0,#2f0,#1f0,#0f1,#0f3,#0f6,#0f8,#0f9,#0fc,#0ef,#0ef,#0ef,#0ef,#0f1,#2f0,#2f0,#2f0,#1f0,#0f1,#0f2,#0f3,#0f4,#0ef,#0bf,#09f,#10f,#40f,#20f,#40f,#80f,#80f,#80f,#000)"></i>
<i style="background:linear-gradient(#0ef,#0ff,#0df,#0fc,#0cf,#0ff,#0fa,#0f5,#0f0,#3f0,#6f0,#9f0,#df0,#fe0,#ff0,#ff0,#fe0,#df0,#ef0,#fd0,#ff0,#ff0,#ff0,#cf0,#bf0,#af0,#7f0,#5f0,#2f0,#3f0,#0f1,#0f3,#0f6,#0f9,#0fa,#0fc,#0ff,#0fd,#0fe,#0af,#1f0,#4f0,#4f0,#3f0,#0f1,#0f0,#1f0,#0f1,#0f2,#0fb,#04f,#0fe,#20f,#000,#70f,#30f,#000,#000,#80f,#70f)"></i>
<i style="background:linear-gradient(#08f,#0bf,#0fd,#0fd,#0fd,#0f8,#0f9,#0f4,#2f0,#4f0,#5f0,#9f0,#cf0,#ef0,#ff0,#fd0,#fd0,#ef0,#ef0,#ff0,#fd0,#ef0,#df0,#bf0,#cf0,#af0,#7f0,#7f0,#3f0,#2f0,#1f0,#0f1,#0f6,#0f8,#0f8,#0fd,#0fa,#0fe,#0df,#0ff,#1f0,#5f0,#3f0,#5f0,#2f0,#1f0,#0f1,#0f0,#0f0,#0fd,#0ef,#04f,#10f,#01f,#30f,#00f,#70f,#70f,#40f,#50f)"></i>
<i style="background:linear-gradient(#0fd,#0ef,#0cf,#0fe,#0ff,#0f3,#0fa,#0f4,#4f0,#5f0,#6f0,#af0,#df0,#ff0,#fe0,#fe0,#ff0,#fe0,#fe0,#fe0,#fc0,#fe0,#fc0,#ef0,#ef0,#bf0,#9f0,#6f0,#4f0,#3f0,#1f0,#0f4,#0f4,#0f6,#0fa,#0f9,#0fa,#0fd,#0fd,#0cf,#1f0,#5f0,#5f0,#3f0,#3f0,#3f0,#0f0,#1f0,#0f1,#0fc,#02f,#08f,#30f,#03f,#60f,#70f,#50f,#80f,#80f,#70f)"></i>
<i style="background:linear-gradient(#0df,#0fa,#0fc,#0cf,#0f6,#0f8,#0f8,#0f4,#2f0,#5f0,#7f0,#bf0,#cf0,#fe0,#ff0,#fd0,#fd0,#fe0,#fd0,#fe0,#fe0,#ff0,#fe0,#cf0,#df0,#af0,#9f0,#6f0,#3f0,#3f0,#2f0,#0f1,#0f3,#0f9,#0fa,#0fc,#0fd,#0ff,#0ff,#0ff,#2f0,#2f0,#2f0,#2f0,#1f0,#0f0,#0f1,#0f0,#0f2,#0f8,#0bf,#05f,#50f,#03f,#03f,#02f,#50f,#000,#80f,#000)"></i>
<i style="background:linear-gradient(#08f,#0ef,#0df,#0fd,#0fa,#0fc,#0f8,#0f6,#1f0,#4f0,#5f0,#8f0,#cf0,#ef0,#fe0,#fe0,#ff0,#fe0,#fd0,#ff0,#fe0,#fe0,#ff0,#ef0,#df0,#af0,#9f0,#7f0,#4f0,#2f0,#0f0,#0f3,#0f3,#0f9,#0f8,#0fb,#0fc,#0ff,#0ef,#0ef,#0f1,#3f0,#2f0,#3f0,#0f0,#0f2,#0f1,#0f2,#0f4,#0fe,#0df,#0cf,#10f,#000,#40f,#10f,#40f,#30f,#20f,#000)"></i>
<i style="background:linear-gradient(#0af,#06f,#0ef,#0cf,#0f7,#0ff,#0fc,#0f6,#2f0,#3f0,#6f0,#8f0,#cf0,#fe0,#ef0,#ff0,#fe0,#ff0,#fe0,#fe0,#fe0,#fe0,#ef0,#ef0,#ef0,#9f0,#8f0,#4f0,#4f0,#1f0,#1f0,#0f2,#0f6,#0f9,#0fa,#0fa,#0fc,#0fd,#0ff,#0af,#0f0,#1f0,#1f0,#1f0,#0f1,#0f2,#0f3,#0f2,#0f3,#0fc,#04f,#0cf,#10f,#50f,#50f,#000,#20f,#70f,#70f,#80f)"></i>
<i style="background:linear-gradient(#08f,#09f,#0fc,#0df,#0f4,#0ef,#0fb,#0f6,#1f0,#1f0,#6f0,#8f0,#cf0,#df0,#fe0,#ef0,#ff0,#ff0,#ef0,#ef0,#ff0,#fe0,#cf0,#cf0,#af0,#9f0,#6f0,#5f0,#2f0,#2f0,#0f1,#0f4,#0f6,#0f9,#0fb,#0f9,#0fe,#0ff,#0ef,#0af,#0f3,#1f0,#0f0,#0f0,#0f1,#0f2,#0f4,#0f5,#0f4,#0fa,#0bf,#07f,#02f,#03f,#01f,#40f,#70f,#000,#80f,#70f)"></i>
<i style="background:linear-gradient(#0bf,#08f,#0fd,#0ef,#0fe,#0fb,#0fd,#0f8,#0f5,#0f2,#0f1,#1f0,#5f0,#8f0,#9f0,#af0,#9f0,#8f0,#9f0,#9f0,#af0,#8f0,#8f0,#5f0,#4f0,#4f0,#3f0,#1f0,#0f2,#0f5,#0f5,#0f7,#0fa,#0fa,#0fe,#0cf,#0fe,#0bf,#0ef,#0af,#0f1,#3f0,#1f0,#0f1,#0f2,#0f2,#0f3,#0f4,#0f4,#0fc,#08f,#06f,#01f,#30f,#20f,#02f,#60f,#50f,#000,#20f)"></i>
<i style="background:linear-gradient(#0fe,#0fd,#0cf,#0ff,#0f7,#0fa,#0fe,#0f8,#0f2,#0f0,#2f0,#5f0,#9f0,#9f0,#af0,#cf0,#af0,#bf0,#af0,#af0,#af0,#bf0,#af0,#9f0,#8f0,#6f0,#4f0,#3f0,#0f0,#0f2,#0f3,#0f6,#0f7,#0fb,#0f6,#0fc,#0ff,#0ef,#0cf,#09f,#0f2,#0f0,#1f0,#0f1,#0f0,#0f1,#0f0,#0f3,#0f5,#0fd,#01f,#07f,#10f,#10f,#50f,#50f,#60f,#50f,#000,#70f)"></i>
<i style="background:linear-gradient(#0cf,#0bf,#0cf,#0fb,#0fc,#0f8,#0bf,#0f6,#0f1,#1f0,#4f0,#5f0,#af0,#cf0,#df0,#ff0,#cf0,#ff0,#df0,#df0,#df0,#df0,#df0,#cf0,#bf0,#7f0,#7f0,#4f0,#1f0,#1f0,#0f2,#0f5,#0f5,#0f8,#0fc,#0fb,#0df,#0df,#0df,#0af,#0f0,#3f0,#2f0,#2f0,#1f0,#0f0,#1f0,#0f1,#0f4,#0f8,#0bf,#07f,#40f,#30f,#30f,#40f,#60f,#30f,#10f,#70f)"></i>
<i style="background:linear-gradient(#0af,#09f,#0fb,#0fb,#0fb,#0f9,#0fa,#0f5,#2f0,#2f0,#5f0,#7f0,#af0,#ef0,#ff0,#fe0,#ff0,#ff0,#ff0,#ff0,#ff0,#ef0,#ef0,#df0,#af0,#8f0,#7f0,#6f0,#4f0,#2f0,#0f1,#0f1,#0f6,#0f7,#0fb,#0fa,#0df,#0fd,#0ef,#0cf,#1f0,#4f0,#4f0,#2f0,#2f0,#0f0,#0f0,#0f0,#0f1,#0f7,#07f,#03f,#20f,#40f,#50f,#20f,#20f,#80f,#70f,#40f)"></i>
<i style="background:linear-gradient(#0bf,#0fb,#05f,#0fc,#0df,#0f8,#0fb,#0f6,#0f1,#3f0,#3f0,#8f0,#bf0,#df0,#ff0,#df0,#fe0,#ef0,#ff0,#ff0,#ef0,#ef0,#ef0,#bf0,#bf0,#9f0,#7f0,#6f0,#3f0,#2f0,#0f0,#0f3,#0f5,#0f7,#0f9,#0ef,#0ff,#0fd,#0fc,#0af,#1f0,#2f0,#3f0,#4f0,#1f0,#0f0,#0f1,#1f0,#0f3,#0fc,#0ef,#0af,#30f,#60f,#03f,#30f,#000,#20f,#000,#60f)"></i>
<i style="background:linear-gradient(#0ff,#0fe,#0fa,#0ff,#0fd,#0ff,#0f9,#0f7,#2f0,#4f0,#4f0,#7f0,#df0,#ff0,#fe0,#ff0,#ef0,#ff0,#fe0,#ef0,#fd0,#ff0,#df0,#cf0,#cf0,#8f0,#6f0,#5f0,#4f0,#1f0,#0f2,#0f0,#0f5,#0f6,#0fa,#0fa,#0fe,#0ff,#0bf,#0af,#0f0,#2f0,#2f0,#2f0,#0f0,#0f0,#0f2,#0f3,#0f3,#0fc,#07f,#0fc,#20f,#60f,#30f,#000,#30f,#50f,#30f,#60f)"></i>
<i style="background:linear-gradient(#05f,#0fe,#0fa,#0fe,#0f7,#0ff,#0f9,#0f7,#0f0,#3f0,#5f0,#bf0,#bf0,#ef0,#fe0,#fd0,#ff0,#fe0,#ff0,#fe0,#fc0,#fe0,#ef0,#ef0,#df0,#bf0,#6f0,#6f0,#5f0,#1f0,#1f0,#0f2,#0f5,#0f7,#0f8,#0fd,#0fc,#0fc,#0fe,#0cf,#0f1,#1f0,#1f0,#1f0,#2f0,#0f0,#0f2,#0f3,#0f2,#0ff,#07f,#07f,#30f,#00f,#60f,#60f,#80f,#70f,#60f,#20f)"></i>
<i style="background:linear-gradient(#0fd,#0cf,#0cf,#0fe,#0fb,#0ef,#0f8,#0f4,#2f0,#3f0,#6f0,#bf0,#ef0,#fd0,#fb0,#fc0,#fd0,#fd0,#fd0,#fe0,#fe0,#fc0,#fd0,#ff0,#cf0,#bf0,#8f0,#7f0,#4f0,#4f0,#1f0,#0f0,#0f4,#0f7,#0fa,#0f9,#0fd,#0fc,#0df,#0ff,#1f0,#1f0,#1f0,#0f0,#0f1,#0f0,#0f2,#0f3,#0f3,#0f9,#08f,#03f,#30f,#0af,#01f,#40f,#000,#50f,#02f,#50f)"></i>
<i style="background:linear-gradient(#0fd,#0f9,#0fa,#0f7,#0fe,#0fc,#0fa,#0f6,#1f0,#2f0,#7f0,#bf0,#cf0,#fe0,#fd0,#fd0,#ff0,#ff0,#fe0,#fc0,#ff0,#fe0,#fe0,#ff0,#fe0,#af0,#9f0,#8f0,#5f0,#4f0,#0f0,#0f2,#0f4,#0f7,#0f9,#0f8,#0fb,#0fe,#0ff,#0df,#0f1,#1f0,#1f0,#2f0,#0f0,#0f1,#0f1,#0f3,#0f5,#0f9,#0af,#08f,#70f,#30f,#40f,#20f,#70f,#60f,#50f,#80f)"></i>
<i style="background:linear-gradient(#06f,#0ff,#0fc,#0fc,#0fc,#0fc,#0f8,#0f4,#1f0,#4f0,#8f0,#9f0,#bf0,#cf0,#ef0,#ff0,#fd0,#ff0,#ff0,#fe0,#fe0,#ff0,#ff0,#cf0,#cf0,#9f0,#9f0,#7f0,#8f0,#3f0,#0f0,#0f0,#0f3,#0f6,#0f9,#0fb,#0fd,#0ff,#0ff,#0fe,#0f2,#4f0,#3f0,#3f0,#2f0,#0f2,#1f0,#0f3,#0f1,#0fa,#04f,#0cf,#06f,#20f,#00f,#000,#70f,#20f,#20f,#80f)"></i>
<i style="background:linear-gradient(#0fc,#06f,#0ff,#0cf,#0cf,#0fe,#0cf,#0f9,#0f6,#0f3,#0f1,#1f0,#2f0,#7f0,#6f0,#9f0,#9f0,#7f0,#6f0,#8f0,#7f0,#6f0,#5f0,#2f0,#4f0,#2f0,#1f0,#0f0,#0f1,#0f4,#0f5,#0f8,#0fa,#0fd,#0fe,#0fc,#0fd,#0cf,#0df,#0cf,#0f0,#3f0,#5f0,#3f0,#2f0,#1f0,#0f0,#0f1,#0f3,#0f8,#08f,#07f,#01f,#03f,#80f,#000,#10f,#50f,#60f,#60f)"></i>
<i style="background:linear-gradient(#07f,#09f,#06f,#0cf,#0df,#0bf,#0f7,#0fa,#0f5,#0f3,#2f0,#2f0,#3f0,#6f0,#7f0,#7f0,#9f0,#9f0,#6f0,#8f0,#9f0,#4f0,#6f0,#5f0,#5f0,#3f0,#3f0,#2f0,#0f1,#0f4,#0f5,#0f5,#0f8,#0fa,#0fe,#0ff,#0fc,#0ef,#0ff,#0bf,#2f0,#3f0,#3f0,#2f0,#3f0,#2f0,#0f0,#0f1,#0f1,#0f9,#08f,#0df,#50f,#20f,#30f,#00f,#000,#10f,#70f,#50f)"></i>
<i style="background:linear-gradient(#0df,#0bf,#0df,#0fa,#0af,#0fd,#0f8,#0f8,#0f2,#0f0,#1f0,#3f0,#4f0,#6f0,#9f0,#9f0,#8f0,#9f0,#8f0,#9f0,#af0,#8f0,#6f0,#8f0,#6f0,#5f0,#4f0,#3f0,#1f0,#0f2,#0f4,#0f6,#0f9,#0f9,#0f9,#0fb,#0ef,#0df,#0ff,#0df,#3f0,#4f0,#4f0,#4f0,#2f0,#3f0,#2f0,#0f0,#0f2,#0fb,#0bf,#06f,#30f,#02f,#20f,#60f,#10f,#10f,#80f,#50f)"></i>
<i style="background:linear-gradient(#0fb,#0ef,#0ff,#0df,#0f9,#0f9,#0fa,#0f7,#0f0,#5f0,#5f0,#5f0,#8f0,#af0,#af0,#bf0,#bf0,#cf0,#bf0,#bf0,#bf0,#bf0,#df0,#bf0,#bf0,#7f0,#8f0,#6f0,#5f0,#3f0,#0f0,#0f3,#0f6,#0f7,#0f9,#0f9,#0fe,#0fc,#0bf,#0af,#2f0,#4f0,#3f0,#3f0,#4f0,#2f0,#1f0,#1f0,#0f3,#0fa,#0cf,#0fc,#04f,#30f,#50f,#70f,#20f,#30f,#70f,#80f)"></i>
<i style="background:linear-gradient(#09f,#0fc,#0ef,#0fc,#0f9,#0fc,#0fb,#0f5,#0f0,#3f0,#4f0,#8f0,#9f0,#9f0,#bf0,#bf0,#bf0,#af0,#bf0,#bf0,#bf0,#af0,#8f0,#8f0,#9f0,#9f0,#8f0,#8f0,#5f0,#3f0,#1f0,#0f3,#0f4,#0f8,#0fb,#0fb,#0fa,#0ff,#0fe,#0bf,#1f0,#2f0,#4f0,#3f0,#2f0,#1f0,#0f0,#1f0,#0f3,#0f8,#03f,#0bf,#60f,#00f,#40f,#40f,#80f,#40f,#80f,#60f)"></i>
<i style="background:linear-gradient(#08f,#0cf,#0ef,#0fd,#0fd,#07f,#0f9,#0f6,#0f0,#4f0,#6f0,#7f0,#9f0,#9f0,#8f0,#bf0,#af0,#9f0,#af0,#bf0,#bf0,#9f0,#8f0,#9f0,#9f0,#8f0,#7f0,#5f0,#4f0,#2f0,#1f0,#0f3,#0f5,#0f6,#0f9,#0fb,#0f7,#0df,#0bf,#0af,#0f1,#2f0,#4f0,#1f0,#0f0,#0f1,#0f1,#0f1,#0f4,#0fd,#0af,#03f,#00f,#10f,#40f,#10f,#80f,#000,#80f,#40f)"></i>
<i style="background:linear-gradient(#0af,#0df,#0ef,#0fa,#0cf,#0fc,#0f9,#0f5,#1f0,#3f0,#5f0,#5f0,#8f0,#9f0,#af0,#9f0,#bf0,#bf0,#9f0,#9f0,#9f0,#af0,#9f0,#8f0,#8f0,#8f0,#8f0,#6f0,#4f0,#2f0,#1f0,#0f3,#0f4,#0f6,#0fb,#0fe,#0fe,#0ef,#0cf,#0fe,#0f0,#1f0,#2f0,#0f0,#0f1,#0f2,#0f2,#0f3,#0f4,#0fa,#03f,#07f,#10f,#20f,#30f,#40f,#70f,#30f,#60f,#80f)"></i>
<i style="background:linear-gradient(#0bf,#0f7,#05f,#0df,#0fe,#0fd,#0fb,#0f5,#1f0,#4f0,#6f0,#6f0,#8f0,#af0,#9f0,#cf0,#cf0,#af0,#bf0,#9f0,#bf0,#9f0,#bf0,#bf0,#9f0,#af0,#8f0,#7f0,#3f0,#3f0,#0f0,#0f2,#0f4,#0f6,#0f9,#0fc,#0fd,#0fd,#0ff,#0fe,#0f0,#3f0,#2f0,#0f0,#0f0,#0f2,#0f2,#0f3,#0f4,#0ff,#06f,#00f,#10f,#20f,#30f,#80f,#10f,#70f,#60f,#000)"></i>
<i style="background:linear-gradient(#0ef,#0ff,#0ff,#0fc,#0f5,#0f9,#0fc,#0f5,#1f0,#4f0,#4f0,#7f0,#9f0,#8f0,#af0,#bf0,#bf0,#cf0,#bf0,#bf0,#9f0,#af0,#8f0,#af0,#9f0,#9f0,#7f0,#7f0,#6f0,#3f0,#1f0,#0f3,#0f5,#0f8,#0fb,#0ef,#0ff,#0ff,#0fd,#0df,#1f0,#2f0,#0f0,#4f0,#0f0,#1f0,#0f0,#0f3,#0f1,#0fb,#0fa,#10f,#20f,#60f,#000,#000,#70f,#20f,#60f,#50f)"></i>
<i style="background:linear-gradient(#0cf,#0cf,#0cf,#0fe,#0bf,#0fe,#0ff,#0f8,#0f4,#0f1,#0f0,#1f0,#2f0,#6f0,#6f0,#6f0,#8f0,#6f0,#8f0,#7f0,#7f0,#6f0,#5f0,#4f0,#6f0,#3f0,#2f0,#1f0,#0f0,#0f2,#0f4,#0f5,#0f7,#0fa,#0f8,#0fc,#0fe,#0af,#0df,#0ef,#2f0,#4f0,#4f0,#3f0,#1f0,#2f0,#0f0,#0f1,#0f2,#0fc,#0ff,#0bf,#40f,#70f,#20f,#70f,#20f,#70f,#40f,#50f)"></i>
<i style="background:linear-gradient(#0df,#0ff,#0fe,#0fb,#0fe,#0fa,#0fb,#0f6,#0f0,#5f0,#6f0,#7f0,#9f0,#9f0,#af0,#cf0,#df0,#cf0,#cf0,#df0,#cf0,#bf0,#8f0,#af0,#bf0,#9f0,#9f0,#7f0,#6f0,#4f0,#1f0,#0f1,#0f5,#0f7,#0f8,#0fb,#0fb,#0cf,#0ff,#0cf,#2f0,#5f0,#4f0,#4f0,#1f0,#3f0,#1f0,#0f0,#0f2,#0fb,#05f,#0af,#07f,#03f,#02f,#70f,#30f,#50f,#000,#000)"></i>
<i style="background:linear-gradient(#0df,#0af,#0ef,#0f9,#0ff,#0fe,#0f8,#0f8,#0f1,#3f0,#4f0,#4f0,#9f0,#7f0,#bf0,#af0,#af0,#bf0,#af0,#cf0,#bf0,#af0,#af0,#af0,#9f0,#7f0,#8f0,#6f0,#6f0,#4f0,#0f0,#0f2,#0f6,#0f8,#0fa,#0ef,#0fb,#0fd,#0fe,#0df,#0f0,#2f0,#4f0,#3f0,#3f0,#0f0,#1f0,#0f0,#0f0,#0fb,#0af,#08f,#10f,#20f,#80f,#10f,#40f,#000,#80f,#000)"></i>
<i style="background:linear-gradient(#0df,#0fe,#0ef,#0ff,#0fb,#0fc,#0fb,#0f9,#0f2,#0f0,#3f0,#3f0,#3f0,#5f0,#6f0,#8f0,#7f0,#9f0,#9f0,#8f0,#7f0,#7f0,#8f0,#7f0,#6f0,#7f0,#6f0,#4f0,#3f0,#1f0,#0f2,#0f3,#0f7,#0f8,#0fc,#0fe,#0fb,#0fe,#0cf,#0ff,#0f0,#1f0,#2f0,#0f0,#1f0,#0f0,#0f2,#0f0,#0f3,#0ef,#0af,#0bf,#03f,#10f,#10f,#000,#000,#70f,#60f,#80f)"></i>
<i style="background:linear-gradient(#0bf,#0fc,#0fe,#0ff,#0cf,#0f9,#0fa,#0f6,#0f2,#1f0,#3f0,#4f0,#6f0,#6f0,#8f0,#af0,#af0,#af0,#af0,#9f0,#9f0,#af0,#8f0,#8f0,#7f0,#7f0,#6f0,#6f0,#3f0,#3f0,#0f0,#0f3,#0f5,#0f7,#0f8,#0fd,#0fe,#0fb,#0bf,#0fe,#0f0,#1f0,#2f0,#4f0,#1f0,#0f1,#0f1,#0f3,#0f3,#0fc,#0ef,#00f,#00f,#02f,#10f,#20f,#30f,#80f,#80f,#000)"></i>
<i style="background:linear-gradient(#0ff,#0cf,#0f9,#0fc,#0fd,#0ff,#0fe,#0f9,#0f4,#0f1,#1f0,#1f0,#6f0,#6f0,#9f0,#7f0,#9f0,#bf0,#af0,#8f0,#8f0,#8f0,#7f0,#6f0,#7f0,#6f0,#6f0,#5f0,#3f0,#2f0,#0f1,#0f3,#0f8,#0f8,#0f6,#0f9,#0fd,#0cf,#0fe,#0ef,#0f1,#1f0,#2f0,#0f0,#0f2,#0f2,#0f3,#0f4,#0f4,#0fe,#06f,#08f,#30f,#03f,#30f,#10f,#60f,#80f,#70f,#00f)"></i>
<i style="background:linear-gradient(#0df,#0fd,#0bf,#0af,#0df,#0fd,#0f9,#0f8,#0f4,#0f1,#0f0,#2f0,#6f0,#5f0,#8f0,#7f0,#9f0,#8f0,#8f0,#9f0,#7f0,#8f0,#7f0,#5f0,#6f0,#6f0,#6f0,#4f0,#3f0,#2f0,#0f1,#0f5,#0f6,#0f8,#0f9,#0fd,#0ef,#0fb,#0fe,#0bf,#0f3,#0f1,#0f2,#0f0,#0f3,#0f2,#0f4,#0f5,#0f6,#0f9,#0bf,#09f,#06f,#10f,#10f,#30f,#70f,#80f,#70f,#000)"></i>
<i style="background:linear-gradient(#0af,#0df,#0f9,#0fe,#0ff,#0fd,#0fe,#0f7,#0f3,#0f0,#2f0,#4f0,#6f0,#7f0,#6f0,#9f0,#9f0,#bf0,#9f0,#bf0,#8f0,#9f0,#9f0,#bf0,#7f0,#8f0,#6f0,#4f0,#3f0,#1f0,#1f0,#0f4,#0f7,#0f8,#0fa,#0fb,#0fe,#0fe,#0df,#0af,#0f3,#1f0,#0f0,#1f0,#0f2,#0f2,#0f5,#0f5,#0f6,#0fa,#05f,#07f,#40f,#02f,#10f,#20f,#000,#000,#80f,#40f)"></i>
<i style="background:linear-gradient(#0f9,#0fe,#0ef,#0cf,#0cf,#0fb,#0df,#0f7,#0f3,#1f0,#4f0,#4f0,#5f0,#7f0,#af0,#af0,#cf0,#cf0,#df0,#cf0,#bf0,#df0,#bf0,#af0,#af0,#8f0,#9f0,#7f0,#6f0,#3f0,#2f0,#0f2,#0f6,#0f9,#0fb,#0fb,#0fb,#0fd,#0ff,#0af,#0f2,#1f0,#1f0,#1f0,#0f0,#0f1,#0f2,#0f3,#0f4,#0fe,#0bf,#05f,#10f,#05f,#30f,#000,#50f,#80f,#10f,#50f)"></i>
<i style="background:linear-gradient(#09f,#0cf,#0cf,#0bf,#0fb,#0fd,#0af,#0f8,#0f4,#0f2,#4f0,#5f0,#7f0,#7f0,#af0,#df0,#cf0,#df0,#df0,#df0,#df0,#df0,#bf0,#af0,#af0,#9f0,#9f0,#7f0,#6f0,#3f0,#2f0,#0f3,#0f6,#0f9,#0fa,#0ff,#0fe,#0df,#0df,#09f,#0f1,#2f0,#2f0,#1f0,#1f0,#0f2,#0f2,#0f2,#0f3,#0ff,#04f,#06f,#20f,#30f,#00f,#000,#05f,#70f,#80f,#30f)"></i>
<i style="background:linear-gradient(#0fc,#0cf,#0af,#0af,#0ff,#0fb,#0f9,#0f8,#0f2,#1f0,#2f0,#5f0,#8f0,#8f0,#af0,#df0,#ef0,#ff0,#ef0,#ef0,#ef0,#ef0,#ff0,#df0,#cf0,#bf0,#8f0,#7f0,#7f0,#4f0,#4f0,#0f3,#0f2,#0f7,#0f9,#0fb,#0fe,#0fe,#0fe,#0ff,#0f0,#5f0,#4f0,#3f0,#2f0,#1f0,#2f0,#0f0,#0f3,#0fb,#06f,#04f,#30f,#50f,#01f,#70f,#80f,#50f,#60f,#70f)"></i>
<i style="background:linear-gradient(#0cf,#09f,#0fb,#0af,#0ff,#0af,#0fd,#0f6,#0f3,#0f1,#3f0,#5f0,#7f0,#9f0,#df0,#ef0,#ff0,#fe0,#df0,#ef0,#ff0,#ef0,#ef0,#fd0,#ef0,#df0,#cf0,#8f0,#6f0,#6f0,#3f0,#0f2,#0f6,#0f7,#0fc,#0f8,#0fc,#0fb,#0df,#0ef,#2f0,#5f0,#4f0,#5f0,#1f0,#1f0,#0f1,#1f0,#0f2,#0fb,#0ef,#05f,#01f,#000,#000,#30f,#70f,#70f,#70f,#60f)"></i>
<i style="background:linear-gradient(#0fe,#0fe,#0af,#0fb,#0f9,#0fe,#0cf,#0f7,#0f2,#0f0,#1f0,#3f0,#6f0,#9f0,#cf0,#ff0,#ff0,#ff0,#ef0,#fe0,#ff0,#ff0,#ff0,#fe0,#ef0,#ef0,#bf0,#8f0,#6f0,#4f0,#0f0,#1f0,#0f3,#0f7,#0fa,#0fa,#0ef,#0fd,#0fb,#0ff,#1f0,#3f0,#5f0,#3f0,#2f0,#1f0,#1f0,#0f2,#0f3,#0f9,#06f,#0cf,#40f,#50f,#20f,#000,#10f,#000,#80f,#50f)"></i>
<i style="background:linear-gradient(#0fe,#0df,#0fc,#0fc,#0fd,#0fa,#0ff,#0f9,#0f3,#0f1,#0f0,#1f0,#3f0,#6f0,#9f0,#bf0,#cf0,#df0,#df0,#df0,#ef0,#ef0,#cf0,#df0,#bf0,#bf0,#9f0,#5f0,#6f0,#3f0,#0f2,#1f0,#0f3,#0f8,#0ff,#0ff,#0fd,#0ff,#0bf,#0cf,#0f1,#1f0,#2f0,#2f0,#0f0,#0f1,#0f2,#0f4,#0f5,#0f4,#0cf,#09f,#40f,#60f,#80f,#60f,#000,#000,#80f,#70f)"></i>
<i style="background:linear-gradient(#0fd,#0df,#0fe,#0fe,#0f5,#0fb,#0fd,#0f8,#0f4,#0f3,#0f3,#2f0,#4f0,#7f0,#cf0,#ef0,#ef0,#cf0,#df0,#df0,#df0,#df0,#ef0,#df0,#ef0,#cf0,#7f0,#8f0,#6f0,#2f0,#0f0,#0f0,#0f3,#0f8,#0fc,#0fe,#0ff,#0fb,#0ef,#0fd,#0f1,#1f0,#0f0,#1f0,#0f1,#0f2,#0f2,#0f3,#0f4,#0fd,#05f,#05f,#50f,#05f,#30f,#50f,#20f,#000,#80f,#40f)"></i>
<i style="background:linear-gradient(#0fb,#0af,#0df,#0fb,#0fc,#0df,#0f9,#0f8,#0f5,#0f3,#0f1,#2f0,#4f0,#5f0,#af0,#cf0,#df0,#cf0,#cf0,#cf0,#cf0,#cf0,#df0,#df0,#bf0,#df0,#9f0,#8f0,#5f0,#1f0,#0f1,#0f1,#0f5,#0f8,#0fb,#0fb,#0fc,#0ef,#0ff,#0ff,#0f2,#1f0,#0f1,#0f0,#0f2,#0f3,#0f3,#0f4,#0f5,#0fa,#05f,#08f,#40f,#80f,#40f,#10f,#40f,#80f,#10f,#50f)"></i>
<i style="background:linear-gradient(#0af,#0af,#0cf,#0ff,#0fe,#0df,#0af,#0fa,#0f5,#0f2,#0f2,#0f0,#2f0,#6f0,#8f0,#bf0,#cf0,#df0,#df0,#cf0,#df0,#df0,#ef0,#ef0,#df0,#bf0,#bf0,#8f0,#5f0,#0f0,#0f1,#0f1,#0f4,#0f7,#0f9,#0f8,#0ef,#0fe,#0bf,#0af,#0f3,#0f1,#0f0,#0f1,#0f1,#0f3,#0f4,#0f5,#0f5,#0fc,#07f,#07f,#50f,#50f,#30f,#40f,#000,#30f,#70f,#80f)"></i>
<i style="background:linear-gradient(#0f5,#0cf,#0fd,#0ef,#0fd,#0fb,#0fd,#0f7,#0f2,#0f1,#2f0,#2f0,#6f0,#8f0,#af0,#df0,#df0,#cf0,#ff0,#df0,#ff0,#ef0,#fe0,#ef0,#ef0,#ff0,#cf0,#8f0,#7f0,#4f0,#1f0,#1f0,#0f2,#0f7,#0fa,#0fe,#0ef,#0fe,#0fd,#0ef,#0f4,#0f3,#0f1,#0f5,#0f4,#0f6,#0f7,#0f7,#0f9,#0fe,#07f,#00f,#20f,#40f,#50f,#01f,#70f,#80f,#60f,#30f)"></i>
<i style="background:linear-gradient(#0fe,#0fd,#0fe,#0cf,#0f3,#0fb,#0f8,#0f6,#0f2,#0f2,#1f0,#2f0,#6f0,#af0,#cf0,#ff0,#ff0,#ef0,#ff0,#ff0,#ff0,#fe0,#ff0,#ff0,#df0,#ef0,#df0,#af0,#9f0,#4f0,#0f0,#2f0,#0f2,#0f7,#0f9,#0fb,#0ff,#0fc,#0df,#0ff,#0df,#0f7,#0f6,#0f6,#0f8,#0f7,#0f8,#0f9,#0fa,#0fa,#03f,#0cf,#30f,#03f,#01f,#40f,#60f,#50f,#50f,#50f)"></i>
<i style="background:linear-gradient(#0bf,#0fe,#0fc,#0fb,#0f9,#0fb,#0f9,#0f6,#0f2,#0f0,#1f0,#2f0,#5f0,#8f0,#bf0,#ef0,#fe0,#ff0,#ef0,#ef0,#ff0,#fe0,#ff0,#ef0,#fe0,#df0,#ff0,#9f0,#7f0,#2f0,#0f0,#2f0,#0f2,#0f7,#0f9,#0f8,#0fe,#0fd,#0fe,#0cf,#0cf,#0f8,#0f7,#0f6,#0f7,#0f5,#0f9,#0f8,#0f8,#0fa,#09f,#0df,#10f,#60f,#01f,#60f,#60f,#30f,#50f,#80f)"></i>
<i style="background:linear-gradient(#09f,#0cf,#0ff,#0fb,#0fe,#0fd,#0f8,#0f7,#0f3,#0f2,#1f0,#3f0,#4f0,#8f0,#af0,#ef0,#df0,#ef0,#ff0,#df0,#df0,#df0,#df0,#ff0,#df0,#df0,#bf0,#9f0,#8f0,#3f0,#0f0,#2f0,#0f4,#0f7,#0fa,#0fb,#0fb,#0fd,#0ff,#0cf,#0cf,#0f7,#0f5,#0f3,#0f6,#0f7,#0f8,#0f8,#0fa,#0fd,#09f,#04f,#30f,#30f,#20f,#30f,#70f,#50f,#000,#30f)"></i>
<i style="background:linear-gradient(#0f7,#0fe,#0df,#0fa,#0fc,#0fd,#0f4,#0f8,#0f2,#0f2,#0f1,#3f0,#5f0,#6f0,#bf0,#ef0,#ef0,#ef0,#ef0,#ef0,#df0,#df0,#df0,#df0,#ef0,#cf0,#af0,#9f0,#6f0,#5f0,#0f1,#0f0,#0f5,#0f6,#0fb,#0fa,#0cf,#0cf,#0cf,#0af,#0cf,#0f7,#0f4,#0f4,#0f9,#0f6,#0f8,#0f9,#0fa,#0fe,#08f,#08f,#20f,#20f,#30f,#50f,#50f,#80f,#01f,#40f)"></i>
<i style="background:linear-gradient(#0fa,#0f9,#0fd,#0df,#0ff,#0f9,#0ff,#0f9,#0f4,#0f1,#1f0,#2f0,#4f0,#7f0,#9f0,#cf0,#df0,#df0,#ef0,#ff0,#df0,#ef0,#ff0,#bf0,#df0,#cf0,#7f0,#8f0,#8f0,#3f0,#0f1,#0f3,#0f2,#0f8,#0fa,#0fe,#0fc,#0ff,#0cf,#0cf,#03f,#0f6,#0f6,#0f6,#0f8,#0f9,#0fb,#0fb,#0fc,#0f9,#0cf,#05f,#10f,#60f,#60f,#30f,#000,#80f,#60f,#80f)"></i>
<i style="background:linear-gradient(#0ff,#0ff,#0bf,#0ff,#0fb,#0ef,#0fd,#0f7,#0f3,#0f1,#2f0,#4f0,#5f0,#9f0,#bf0,#df0,#ff0,#fe0,#df0,#ff0,#ff0,#fe0,#ff0,#fe0,#ef0,#ef0,#bf0,#bf0,#8f0,#4f0,#1f0,#1f0,#0f4,#0f7,#0f9,#0fd,#0f9,#0fd,#0ef,#0df,#0bf,#0f9,#0f6,#0f5,#0f8,#0f9,#0f9,#0fb,#0ef,#0f9,#03f,#07f,#60f,#20f,#70f,#20f,#000,#00f,#60f,#40f)"></i>
<i style="background:linear-gradient(#0fd,#0f8,#0fc,#0bf,#0ff,#0cf,#0f7,#0f7,#0f3,#0f1,#1f0,#2f0,#3f0,#9f0,#af0,#df0,#ff0,#ef0,#ff0,#ef0,#fe0,#fe0,#ff0,#ff0,#ef0,#bf0,#af0,#9f0,#7f0,#4f0,#0f0,#1f0,#0f2,#0f7,#0fb,#0ef,#0ef,#0fe,#0ff,#0bf,#0fc,#0f9,#0f7,#0f7,#0f8,#0fa,#0fa,#0fe,#0fe,#0fc,#0bf,#0fb,#30f,#20f,#01f,#50f,#20f,#20f,#50f,#40f)"></i>
<i style="background:linear-gradient(#0fb,#0fe,#0ff,#0fa,#0ef,#0fa,#0f6,#0f7,#0f5,#0f3,#0f1,#1f0,#3f0,#6f0,#af0,#cf0,#cf0,#cf0,#ef0,#bf0,#bf0,#df0,#cf0,#cf0,#df0,#bf0,#bf0,#8f0,#5f0,#2f0,#0f2,#0f0,#0f4,#0f7,#0fd,#0fa,#0ef,#09f,#0ef,#0df,#0cf,#0f9,#0f6,#0f7,#0f9,#0f8,#0fa,#0f9,#0fd,#0f7,#0bf,#07f,#30f,#10f,#50f,#40f,#30f,#80f,#50f,#80f)"></i>
<i style="background:linear-gradient(#0fe,#0fa,#0cf,#0fb,#0fb,#0ff,#0f9,#0f6,#0f2,#2f0,#3f0,#5f0,#6f0,#bf0,#df0,#ff0,#fd0,#ff0,#fe0,#fd0,#fe0,#fe0,#fe0,#fe0,#fe0,#fe0,#df0,#df0,#9f0,#5f0,#1f0,#2f0,#0f1,#0f6,#0f9,#0f9,#0fd,#0ef,#0fe,#0bf,#0ff,#0f8,#0f7,#0f7,#0f8,#0f7,#0f9,#0fa,#0fb,#0fb,#0df,#09f,#40f,#20f,#20f,#40f,#000,#60f,#60f,#70f)"></i>
<i style="background:linear-gradient(#0ef,#0df,#0cf,#0fc,#0f7,#0fa,#0fc,#0f6,#0f2,#1f0,#2f0,#3f0,#7f0,#bf0,#cf0,#ff0,#fe0,#fe0,#fe0,#ef0,#ef0,#ff0,#ff0,#fd0,#fe0,#ef0,#cf0,#bf0,#9f0,#6f0,#0f0,#3f0,#0f2,#0f5,#0f8,#0f6,#0fa,#0fd,#0fb,#0fd,#0df,#0f7,#0f5,#0f6,#0f6,#0f8,#0f9,#0f9,#0f9,#0fc,#06f,#03f,#00f,#05f,#01f,#00f,#000,#30f,#40f,#80f)"></i>
<i style="background:linear-gradient(#0ff,#0fb,#0ef,#0fe,#0fa,#0ff,#0ff,#0f6,#0f2,#0f0,#1f0,#4f0,#5f0,#af0,#bf0,#df0,#ef0,#df0,#fe0,#ef0,#ef0,#ef0,#fe0,#ff0,#ef0,#ef0,#cf0,#af0,#6f0,#3f0,#0f0,#1f0,#0f2,#0f8,#0fa,#0fe,#0fc,#0fc,#0ef,#0bf,#07f,#0f8,#0f4,#0f5,#0f5,#0f7,#0f7,#0f9,#0fb,#0f9,#0bf,#02f,#50f,#60f,#00f,#30f,#30f,#80f,#50f,#50f)"></i>
<i style="background:linear-gradient(#0fc,#0bf,#09f,#0fe,#0fa,#0ef,#0f8,#0f8,#0f2,#0f0,#0f0,#4f0,#5f0,#8f0,#af0,#cf0,#ef0,#ef0,#fe0,#ff0,#ff0,#ff0,#ff0,#df0,#cf0,#bf0,#af0,#9f0,#af0,#3f0,#2f0,#3f0,#0f2,#0f5,#0f9,#0f8,#0fc,#0fd,#09f,#0df,#0ef,#0f6,#0f3,#0f4,#0f6,#0f7,#0f7,#0f8,#0f7,#0df,#0bf,#07f,#02f,#04f,#30f,#70f,#000,#01f,#40f,#000)"></i>
<i style="background:linear-gradient(#0ef,#0ff,#0fa,#0ef,#0fe,#0f8,#0fb,#0f9,#0f8,#0f4,#0f4,#0f0,#0f0,#2f0,#5f0,#7f0,#af0,#9f0,#9f0,#cf0,#af0,#af0,#8f0,#8f0,#7f0,#8f0,#5f0,#4f0,#3f0,#0f1,#0f5,#0f3,#0f6,#0f9,#0fb,#0fd,#0fe,#0df,#0cf,#0cf,#0df,#0f6,#0f4,#0f5,#0f3,#0f4,#0f8,#0f8,#0f8,#0f9,#07f,#09f,#04f,#50f,#80f,#000,#40f,#20f,#50f,#70f)"></i>
<i style="background:linear-gradient(#0af,#0ef,#0fb,#0f9,#08f,#0fd,#0ff,#0f6,#0f1,#0f0,#1f0,#4f0,#5f0,#7f0,#9f0,#bf0,#ef0,#ef0,#ef0,#df0,#cf0,#df0,#cf0,#cf0,#bf0,#df0,#bf0,#9f0,#af0,#6f0,#0f0,#0f0,#0f2,#0f5,#0fa,#0fa,#0fc,#0fc,#0cf,#0fc,#09f,#0f6,#0f5,#0f4,#0f7,#0fa,#0f8,#0fa,#0fb,#0fc,#09f,#0ff,#30f,#20f,#70f,#60f,#000,#40f,#000,#40f)"></i>
<i style="background:linear-gradient(#0fc,#08f,#0cf,#0ef,#0fd,#0cf,#0fd,#0f8,#0f0,#0f1,#2f0,#3f0,#5f0,#8f0,#8f0,#bf0,#bf0,#cf0,#df0,#df0,#cf0,#cf0,#bf0,#cf0,#bf0,#af0,#af0,#9f0,#7f0,#6f0,#1f0,#2f0,#0f0,#0f8,#0fa,#0fe,#0fd,#0fc,#0ff,#0ff,#0bf,#0fa,#0f5,#0f7,#0f8,#0f8,#0f9,#0f9,#0f9,#0fa,#03f,#07f,#60f,#40f,#30f,#40f,#60f,#30f,#80f,#60f)"></i>
<i style="background:linear-gradient(#08f,#0af,#0ff,#0fa,#0fe,#0fd,#0fe,#0f6,#0f1,#0f0,#2f0,#3f0,#6f0,#6f0,#9f0,#bf0,#bf0,#bf0,#bf0,#bf0,#df0,#cf0,#af0,#8f0,#af0,#9f0,#9f0,#8f0,#6f0,#3f0,#1f0,#2f0,#0f2,#0f6,#0f8,#0fa,#0fd,#0fe,#0bf,#0fe,#0bf,#0f9,#0f8,#0f8,#0f9,#0fa,#0fb,#0fa,#0ff,#0fc,#08f,#03f,#60f,#40f,#50f,#80f,#80f,#000,#10f,#000)"></i>
<i style="background:linear-gradient(#0cf,#0fb,#0f9,#0fd,#0fb,#0fe,#0f9,#0f6,#0f4,#0f2,#0f0,#2f0,#3f0,#5f0,#7f0,#5f0,#9f0,#bf0,#af0,#8f0,#af0,#bf0,#af0,#af0,#9f0,#9f0,#9f0,#8f0,#5f0,#4f0,#0f1,#0f2,#0f2,#0f8,#0f9,#0fa,#0ef,#0ff,#0ef,#0bf,#0cf,#0fa,#0f7,#0fa,#0fa,#0fa,#0fb,#0fc,#0fa,#0fc,#0ff,#0ff,#02f,#40f,#06f,#10f,#80f,#50f,#40f,#80f)"></i>
<i style="background:linear-gradient(#0fb,#0fe,#0fe,#0cf,#0f7,#0fe,#0fc,#0f8,#0f3,#0f2,#1f0,#0f1,#2f0,#4f0,#6f0,#6f0,#7f0,#6f0,#af0,#9f0,#8f0,#9f0,#8f0,#8f0,#7f0,#9f0,#6f0,#6f0,#5f0,#1f0,#0f0,#0f1,#0f3,#0f7,#0fb,#0f9,#0fc,#0ff,#0cf,#0fe,#0ff,#0fa,#0f6,#0f8,#0f9,#0f9,#0fe,#0fd,#0df,#0fa,#0cf,#20f,#30f,#80f,#60f,#50f,#80f,#10f,#80f,#80f)"></i>
<i style="background:linear-gradient(#0ff,#0fb,#0bf,#0af,#0fb,#0fd,#0f7,#0f8,#0f3,#0f2,#0f3,#0f0,#3f0,#4f0,#5f0,#6f0,#9f0,#7f0,#af0,#af0,#8f0,#9f0,#8f0,#7f0,#7f0,#5f0,#7f0,#5f0,#5f0,#2f0,#0f3,#1f0,#0f2,#0f6,#0fb,#0fb,#0fb,#0fd,#0cf,#09f,#04f,#0f8,#0f7,#0f8,#0f8,#0fa,#0f9,#0fb,#0fd,#0fb,#06f,#01f,#20f,#10f,#40f,#60f,#50f,#80f,#60f,#60f)"></i>
<i style="background:linear-gradient(#0df,#0df,#05f,#0bf,#08f,#0af,#0f9,#0fd,#0f7,#0f6,#0f5,#0f4,#0f1,#0f2,#0f1,#2f0,#4f0,#2f0,#2f0,#4f0,#3f0,#5f0,#3f0,#2f0,#2f0,#2f0,#2f0,#3f0,#1f0,#0f2,#0f5,#0f5,#0f7,#0fa,#0fc,#0fd,#0df,#0af,#0df,#04f,#0fe,#0f8,#0f5,#0f5,#0f9,#0f8,#0f7,#0f9,#0f8,#0fb,#06f,#10f,#10f,#000,#70f,#70f,#50f,#000,#000,#80f)"></i>
<i style="background:linear-gradient(#0ff,#04f,#09f,#0fe,#0fd,#0fe,#0fa,#0f7,#0f1,#0f0,#0f0,#2f0,#5f0,#7f0,#8f0,#8f0,#af0,#bf0,#bf0,#af0,#af0,#9f0,#8f0,#9f0,#7f0,#9f0,#af0,#7f0,#9f0,#3f0,#0f0,#0f1,#0f1,#0f8,#0fa,#0fc,#0fe,#0ff,#0ff,#0ef,#0ef,#0f8,#0f4,#0f4,#0f5,#0f8,#0f7,#0f8,#0fb,#0fe,#06f,#06f,#03f,#40f,#50f,#40f,#000,#000,#000,#20f)"></i>
<i style="background:linear-gradient(#0fc,#0fe,#0fa,#0bf,#0fe,#0fb,#0f7,#0f6,#0f2,#0f4,#1f0,#1f0,#4f0,#5f0,#7f0,#8f0,#9f0,#af0,#9f0,#af0,#af0,#cf0,#9f0,#9f0,#8f0,#9f0,#9f0,#7f0,#6f0,#4f0,#0f1,#0f2,#0f2,#0f7,#0fa,#0f8,#0fd,#0fb,#0ff,#0ff,#0bf,#0f6,#0f6,#0f6,#0f7,#0f7,#0f8,#0f9,#0fb,#0fb,#0af,#10f,#01f,#03f,#20f,#60f,#40f,#000,#60f,#80f)"></i>
<i style="background:linear-gradient(#0ef,#0df,#0fd,#0fc,#0fa,#0fa,#0f7,#0f7,#0f5,#0f0,#2f0,#2f0,#6f0,#6f0,#8f0,#af0,#af0,#af0,#af0,#bf0,#af0,#af0,#9f0,#9f0,#bf0,#af0,#7f0,#8f0,#5f0,#3f0,#0f0,#1f0,#0f3,#0f8,#0f9,#0f7,#0df,#0fd,#0ff,#0bf,#0fd,#0f8,#0f5,#0f6,#0f7,#0f6,#0f9,#0fc,#0f8,#0fe,#09f,#04f,#20f,#50f,#10f,#50f,#000,#50f,#20f,#50f)"></i>
<i style="background:linear-gradient(#08f,#0ef,#0bf,#0f9,#0fd,#0fc,#0f9,#0f5,#0f1,#0f0,#3f0,#4f0,#6f0,#8f0,#cf0,#bf0,#bf0,#cf0,#df0,#cf0,#cf0,#bf0,#df0,#bf0,#bf0,#bf0,#bf0,#af0,#8f0,#7f0,#2f0,#2f0,#0f1,#0f6,#0f9,#0f9,#0fe,#0fb,#0bf,#0fe,#09f,#0f8,#0f6,#0f5,#0f7,#0f9,#0fb,#0fa,#0fc,#0f9,#0bf,#50f,#20f,#40f,#30f,#50f,#50f,#50f,#70f,#50f)"></i>
<i style="background:linear-gradient(#0fe,#0ef,#0fb,#0fb,#0af,#0ff,#0fc,#0f5,#0f2,#0f0,#3f0,#3f0,#5f0,#7f0,#9f0,#af0,#df0,#df0,#bf0,#cf0,#df0,#df0,#cf0,#bf0,#af0,#bf0,#bf0,#bf0,#7f0,#7f0,#2f0,#3f0,#1f0,#0f6,#0fa,#0fe,#0ef,#0fa,#0ff,#0fd,#0bf,#0fa,#0f7,#0f7,#0f7,#0fa,#0fc,#0fe,#0fc,#0fa,#04f,#03f,#20f,#30f,#30f,#40f,#30f,#40f,#000,#50f)"></i>
<i style="background:linear-gradient(#03f,#0cf,#0ef,#0af,#0df,#0af,#0f9,#0fa,#0f4,#0f0,#1f0,#3f0,#4f0,#5f0,#8f0,#8f0,#9f0,#af0,#af0,#af0,#9f0,#bf0,#9f0,#af0,#8f0,#7f0,#8f0,#7f0,#6f0,#4f0,#0f0,#2f0,#0f3,#0f7,#0fa,#0fd,#0bf,#0fc,#0fe,#0cf,#0bf,#0fa,#0f7,#0f7,#0f9,#0f9,#0f6,#0fe,#0fa,#0ff,#0bf,#20f,#01f,#30f,#70f,#20f,#70f,#70f,#40f,#000)"></i>
<i style="background:linear-gradient(#07f,#0bf,#0df,#07f,#0fe,#0f7,#0f4,#0f6,#0f4,#0f1,#3f0,#3f0,#6f0,#6f0,#7f0,#9f0,#af0,#bf0,#af0,#bf0,#af0,#af0,#cf0,#9f0,#af0,#9f0,#8f0,#8f0,#7f0,#3f0,#3f0,#0f0,#0f0,#0f7,#0fb,#0fd,#0ff,#0ff,#0fd,#0cf,#0af,#0f8,#0f5,#0f7,#0f6,#0f8,#0f9,#0f9,#0fe,#0fd,#0af,#10f,#01f,#10f,#50f,#10f,#80f,#70f,#60f,#000)"></i>
<i style="background:linear-gradient(#0f9,#0fb,#0df,#0fb,#09f,#0df,#0f9,#0f6,#0f4,#0f2,#0f0,#2f0,#4f0,#5f0,#6f0,#9f0,#af0,#bf0,#bf0,#af0,#bf0,#bf0,#cf0,#9f0,#9f0,#8f0,#af0,#7f0,#6f0,#3f0,#0f1,#0f0,#0f3,#0f5,#0fa,#0f7,#0fc,#0df,#0cf,#0ef,#0bf,#0f8,#0f5,#0f8,#0f8,#0f8,#0f9,#0f9,#0ef,#0fd,#05f,#40f,#10f,#30f,#50f,#30f,#40f,#50f,#50f,#80f)"></i>
<i style="background:linear-gradient(#0fb,#0fe,#0ef,#0f9,#0fe,#0ff,#0fd,#0f7,#0f3,#0f3,#2f0,#3f0,#5f0,#6f0,#6f0,#9f0,#9f0,#af0,#9f0,#af0,#af0,#bf0,#9f0,#8f0,#9f0,#af0,#8f0,#7f0,#6f0,#3f0,#0f0,#0f0,#0f2,#0f7,#0fa,#0fc,#0ff,#0ff,#0bf,#0df,#0f9,#0f7,#0f5,#0f5,#0f7,#0f8,#0f7,#0f8,#0f9,#0fc,#04f,#60f,#20f,#80f,#40f,#60f,#60f,#40f,#40f,#000)"></i>
<i style="background:linear-gradient(#0df,#0df,#0f8,#0ff,#0fe,#0fc,#0fa,#0f8,#0f1,#0f1,#1f0,#3f0,#5f0,#6f0,#8f0,#af0,#cf0,#df0,#ef0,#cf0,#cf0,#ef0,#af0,#bf0,#af0,#af0,#af0,#af0,#8f0,#5f0,#1f0,#2f0,#1f0,#0f7,#0f9,#0f9,#0fd,#0ff,#0fd,#0cf,#0df,#0f7,#0f4,#0f4,#0f6,#0f8,#0f8,#0f9,#0fa,#0f9,#08f,#04f,#02f,#40f,#20f,#30f,#000,#000,#10f,#80f)"></i>
<i style="background:linear-gradient(#0ff,#0ef,#0df,#0fb,#0f8,#0fa,#0f8,#0f6,#0f0,#1f0,#1f0,#4f0,#6f0,#9f0,#9f0,#9f0,#cf0,#bf0,#cf0,#cf0,#cf0,#df0,#cf0,#cf0,#af0,#af0,#af0,#9f0,#8f0,#6f0,#2f0,#1f0,#0f0,#0f4,#0f9,#0f9,#0cf,#0df,#0ff,#0fd,#0df,#0f6,#0f4,#0f7,#0f5,#0f6,#0f7,#0f9,#0f9,#0f9,#0bf,#04f,#07f,#000,#40f,#10f,#000,#80f,#70f,#30f)"></i>
<i style="background:linear-gradient(#0fe,#0fa,#0ff,#0fe,#0fc,#0fc,#0fa,#0f4,#0f0,#1f0,#4f0,#6f0,#8f0,#9f0,#cf0,#bf0,#df0,#df0,#ef0,#ff0,#ef0,#ef0,#ef0,#ef0,#cf0,#cf0,#df0,#cf0,#bf0,#6f0,#3f0,#3f0,#0f0,#0f6,#0f8,#0fa,#0fc,#0fc,#0fe,#0df,#0ef,#0f7,#0f5,#0f4,#0f7,#0f6,#0f7,#0f8,#0f8,#0fa,#0fc,#10f,#01f,#10f,#01f,#40f,#30f,#000,#10f,#20f)"></i>
<i style="background:linear-gradient(#0fa,#0fd,#0f9,#0ff,#0fe,#0ff,#0fb,#0f5,#0f0,#0f0,#3f0,#6f0,#4f0,#9f0,#af0,#bf0,#cf0,#ef0,#cf0,#df0,#cf0,#df0,#bf0,#cf0,#cf0,#bf0,#bf0,#bf0,#8f0,#7f0,#2f0,#1f0,#0f2,#0f5,#0f9,#0fb,#0fc,#0ff,#0ff,#0ff,#0cf,#0f8,#0f6,#0f6,#0f7,#0fa,#0f7,#0f9,#0fc,#0fa,#0af,#10f,#10f,#30f,#60f,#40f,#70f,#60f,#000,#50f)"></i>
<i style="background:linear-gradient(#0df,#0fd,#0f8,#0f9,#0fc,#0fc,#0f9,#0f5,#0f1,#2f0,#4f0,#5f0,#9f0,#8f0,#af0,#cf0,#cf0,#ff0,#fe0,#ff0,#ef0,#ef0,#df0,#df0,#cf0,#cf0,#cf0,#bf0,#af0,#9f0,#4f0,#3f0,#1f0,#0f5,#0f9,#0fa,#0ef,#0fb,#0fc,#0ff,#0df,#0f7,#0f7,#0f6,#0f7,#0f8,#0fa,#0fb,#0f9,#0fb,#0cf,#01f,#30f,#50f,#10f,#50f,#50f,#80f,#70f,#80f)"></i>
<i style="background:linear-gradient(#0cf,#0bf,#0cf,#0ff,#0fd,#0f4,#0fc,#0f7,#0f2,#0f1,#1f0,#3f0,#6f0,#6f0,#af0,#bf0,#cf0,#bf0,#df0,#ef0,#cf0,#df0,#bf0,#bf0,#bf0,#af0,#bf0,#af0,#6f0,#7f0,#1f0,#2f0,#0f1,#0f6,#0f9,#0f7,#0fa,#0fd,#0ef,#0ef,#0bf,#0fa,#0f7,#0f7,#0f8,#0f9,#0fa,#0fa,#0fc,#0fa,#09f,#00f,#20f,#30f,#60f,#30f,#40f,#000,#30f,#60f)"></i>
<i style="background:linear-gradient(#0df,#0ef,#0f6,#0fa,#0f9,#0f2,#0fc,#0f5,#1f0,#0f0,#3f0,#4f0,#7f0,#8f0,#9f0,#bf0,#df0,#ef0,#ef0,#ff0,#df0,#ff0,#ef0,#ef0,#cf0,#cf0,#bf0,#9f0,#9f0,#7f0,#2f0,#3f0,#1f0,#0f5,#0f9,#0fa,#0fd,#0fc,#0df,#0ef,#0cf,#0f6,#0f5,#0f7,#0f7,#0f8,#0f9,#0f8,#0fa,#0ff,#0fd,#10f,#30f,#03f,#60f,#60f,#000,#000,#50f,#000)"></i>
<i style="background:linear-gradient(#0fe,#0bf,#0fa,#0f7,#0ef,#0fd,#0ef,#0f5,#0f1,#0f1,#2f0,#4f0,#6f0,#8f0,#af0,#bf0,#cf0,#df0,#ef0,#cf0,#cf0,#cf0,#cf0,#bf0,#af0,#9f0,#af0,#9f0,#8f0,#4f0,#1f0,#1f0,#0f2,#0f7,#0fa,#0fe,#0ff,#0ff,#0fe,#0bf,#0ef,#0f7,#0f5,#0f7,#0f6,#0f7,#0f6,#0f9,#0fc,#0fd,#08f,#01f,#10f,#20f,#40f,#60f,#40f,#60f,#70f,#80f)"></i>
<i style="background:linear-gradient(#0fe,#08f,#0af,#0fe,#09f,#0fa,#0fa,#0f6,#0f2,#0f0,#4f0,#2f0,#5f0,#8f0,#9f0,#bf0,#bf0,#df0,#bf0,#cf0,#df0,#bf0,#af0,#bf0,#bf0,#8f0,#bf0,#8f0,#8f0,#5f0,#1f0,#2f0,#0f2,#0f7,#0f8,#0fb,#0fd,#0ef,#0fe,#0df,#0ef,#0f7,#0f4,#0f4,#0f5,#0f8,#0f9,#0f9,#0fb,#0fc,#0cf,#05f,#20f,#03f,#70f,#30f,#40f,#000,#30f,#000)"></i>
<i style="background:linear-gradient(#0ef,#0fb,#0f7,#0f7,#0f2,#0bf,#0fd,#0f5,#0f1,#0f1,#2f0,#3f0,#7f0,#8f0,#8f0,#af0,#af0,#bf0,#bf0,#bf0,#af0,#cf0,#bf0,#bf0,#9f0,#bf0,#8f0,#8f0,#7f0,#3f0,#2f0,#0f0,#0f1,#0f6,#0f9,#0f9,#0ff,#0df,#0ef,#0cf,#0af,#0f8,#0f4,#0f5,#0f6,#0f6,#0f6,#0f9,#0f9,#0fe,#0af,#20f,#02f,#30f,#40f,#50f,#30f,#80f,#70f,#00f)"></i>
<i style="background:linear-gradient(#0fd,#0df,#09f,#0bf,#0fb,#0fd,#0f6,#0f8,#0f5,#0f4,#0f1,#0f0,#2f0,#3f0,#6f0,#8f0,#8f0,#af0,#9f0,#9f0,#af0,#8f0,#7f0,#7f0,#6f0,#7f0,#7f0,#4f0,#4f0,#1f0,#0f3,#0f2,#0f4,#0f8,#0fb,#0fa,#0cf,#0df,#0fe,#0df,#0cf,#0f7,#0f4,#0f4,#0f6,#0f5,#0f8,#0f8,#0f8,#0ff,#07f,#40f,#02f,#10f,#01f,#10f,#60f,#70f,#60f,#40f)"></i>
<i style="background:linear-gradient(#0bf,#0df,#0fc,#0fb,#0fd,#0fa,#0fd,#0f6,#0f2,#0f2,#0f0,#1f0,#5f0,#5f0,#8f0,#8f0,#9f0,#af0,#af0,#9f0,#af0,#bf0,#af0,#8f0,#8f0,#9f0,#af0,#8f0,#6f0,#6f0,#0f0,#1f0,#0f5,#0f6,#0fa,#0ff,#0fc,#0ef,#0ef,#0ef,#09f,#0f8,#0f5,#0f7,#0f8,#0f9,#0fb,#0fd,#0f8,#0fe,#02f,#10f,#10f,#10f,#60f,#60f,#70f,#40f,#60f,#000)"></i>
<i style="background:linear-gradient(#0ef,#0bf,#0bf,#0fe,#0f4,#0fe,#0df,#0f8,#0f5,#0f3,#0f0,#3f0,#2f0,#5f0,#7f0,#7f0,#8f0,#af0,#9f0,#bf0,#9f0,#9f0,#bf0,#7f0,#9f0,#8f0,#7f0,#8f0,#7f0,#4f0,#0f3,#0f0,#0f2,#0f7,#0f9,#0fa,#0fe,#0fd,#0fe,#0df,#09f,#0fa,#0f8,#0f8,#0f7,#0fb,#0fd,#0fd,#0ef,#0fe,#06f,#30f,#20f,#60f,#40f,#60f,#60f,#30f,#80f,#01f)"></i>
<i style="background:linear-gradient(#0cf,#0fd,#08f,#0f5,#0cf,#0f6,#0fe,#0f8,#0f4,#0f2,#1f0,#1f0,#5f0,#5f0,#5f0,#8f0,#8f0,#af0,#af0,#af0,#af0,#9f0,#bf0,#9f0,#8f0,#7f0,#8f0,#7f0,#5f0,#4f0,#0f0,#0f3,#0f2,#0f7,#0fb,#0f9,#0ef,#0af,#0ef,#0fe,#03f,#0fc,#0f7,#0fa,#0f8,#0fb,#0fa,#0fe,#0ff,#0ef,#0af,#20f,#10f,#03f,#30f,#40f,#40f,#60f,#80f,#80f)"></i>
<i style="background:linear-gradient(#0af,#0f8,#0fc,#0ff,#0df,#0fa,#0ef,#0f8,#0f4,#0f4,#0f1,#0f0,#3f0,#5f0,#4f0,#7f0,#7f0,#8f0,#8f0,#8f0,#9f0,#8f0,#9f0,#6f0,#8f0,#7f0,#6f0,#6f0,#5f0,#1f0,#0f2,#0f1,#0f4,#0f8,#0fb,#0fc,#0fe,#0ff,#0df,#0ef,#0cf,#0f7,#0f9,#0f9,#0fa,#0f6,#0fe,#0fe,#0fd,#0fd,#04f,#03f,#70f,#03f,#40f,#000,#80f,#30f,#80f,#80f)"></i>
<i style="background:linear-gradient(#0fb,#0fe,#0fe,#0df,#0ff,#0fb,#0f7,#0f7,#0f4,#0f3,#0f1,#0f0,#3f0,#5f0,#6f0,#8f0,#9f0,#8f0,#9f0,#af0,#9f0,#9f0,#8f0,#8f0,#6f0,#9f0,#7f0,#5f0,#5f0,#2f0,#0f1,#0f2,#0f3,#0f8,#0fb,#0fd,#0ef,#0fd,#0bf,#0ff,#0ef,#0f8,#0f5,#0f9,#0f9,#0f8,#0fb,#0fc,#0fd,#0f8,#07f,#70f,#10f,#04f,#40f,#60f,#000,#40f,#000,#80f)"></i>
<i style="background:linear-gradient(#0df,#0fc,#0ef,#0f9,#0fc,#07f,#0ff,#0f7,#0f5,#0f3,#0f2,#1f0,#2f0,#5f0,#5f0,#7f0,#8f0,#af0,#8f0,#8f0,#9f0,#af0,#9f0,#7f0,#8f0,#6f0,#7f0,#7f0,#4f0,#2f0,#0f1,#0f1,#0f4,#0f8,#0fa,#0fc,#0fc,#0af,#0ff,#0ef,#0df,#0f8,#0f6,#0f7,#0f9,#0fb,#0fb,#0ef,#0fd,#0fb,#0bf,#00f,#00f,#10f,#80f,#50f,#40f,#50f,#000,#000)"></i>
<i style="background:linear-gradient(#0af,#0af,#0fe,#0af,#0ff,#0ef,#0f6,#0f8,#0f3,#0f2,#0f0,#3f0,#2f0,#4f0,#5f0,#6f0,#7f0,#8f0,#af0,#9f0,#8f0,#7f0,#8f0,#8f0,#7f0,#9f0,#6f0,#7f0,#6f0,#3f0,#0f0,#0f1,#0f4,#0f7,#0fb,#0fd,#0f9,#0df,#0cf,#0bf,#0fb,#0f7,#0f5,#0f6,#0f7,#0f6,#0f9,#0f9,#0f9,#0fb,#09f,#05f,#01f,#30f,#00f,#40f,#00f,#80f,#70f,#80f)"></i>
<i style="background:linear-gradient(#0cf,#0df,#0cf,#0ff,#0fd,#0fd,#0fc,#0ef,#0f8,#0f7,#0f4,#0f4,#0f2,#0f0,#1f0,#1f0,#2f0,#3f0,#3f0,#3f0,#2f0,#5f0,#2f0,#2f0,#2f0,#2f0,#0f0,#0f0,#0f0,#0f3,#0f5,#0f6,#0f7,#0fb,#0fc,#0fe,#0df,#0df,#0fd,#0af,#0ff,#0f8,#0f6,#0f7,#0f8,#0f9,#0fa,#0fa,#0fd,#0fa,#08f,#30f,#10f,#20f,#30f,#40f,#40f,#000,#80f,#60f)"></i>
<i style="background:linear-gradient(#0af,#0ff,#0ef,#0df,#0ff,#0ff,#0f4,#0f7,#0f4,#0f1,#0f1,#2f0,#0f0,#3f0,#6f0,#7f0,#9f0,#af0,#8f0,#8f0,#8f0,#9f0,#af0,#9f0,#7f0,#8f0,#8f0,#7f0,#5f0,#3f0,#0f0,#0f1,#0f4,#0f8,#0fb,#0fd,#0fa,#0df,#0ff,#0cf,#0fb,#0f7,#0f7,#0f8,#0f5,#0f7,#0f8,#0f9,#0ff,#0fc,#09f,#60f,#10f,#40f,#30f,#10f,#20f,#30f,#000,#80f)"></i>
<i style="background:linear-gradient(#0fe,#0fa,#0bf,#0f9,#0f9,#0af,#0fc,#0f6,#0f3,#0f2,#0f1,#1f0,#4f0,#4f0,#7f0,#5f0,#8f0,#af0,#8f0,#af0,#9f0,#af0,#8f0,#8f0,#7f0,#7f0,#5f0,#7f0,#6f0,#2f0,#0f0,#0f0,#0f3,#0f8,#0f9,#0f2,#0fe,#0ff,#0cf,#0ef,#0fb,#0fa,#0f6,#0f6,#0fa,#0fb,#0fb,#0fc,#0fb,#0fd,#05f,#50f,#40f,#60f,#30f,#80f,#50f,#000,#000,#40f)"></i>
<i style="background:linear-gradient(#0fd,#0ef,#0fd,#0ff,#0fd,#0ef,#0f9,#0f8,#0f5,#0f3,#0f2,#2f0,#1f0,#3f0,#5f0,#7f0,#7f0,#7f0,#7f0,#9f0,#6f0,#8f0,#7f0,#5f0,#5f0,#7f0,#6f0,#4f0,#3f0,#0f0,#0f2,#0f0,#0f4,#0f8,#0f9,#0ff,#0fb,#0ef,#0fe,#07f,#0af,#0f9,#0f9,#0f9,#0fa,#0f9,#0fc,#0df,#0fa,#0fa,#07f,#00f,#50f,#40f,#40f,#30f,#20f,#60f,#000,#000)"></i>
<i style="background:linear-gradient(#0fc,#0bf,#0ff,#0fb,#0af,#0f7,#0bf,#0f7,#0f2,#0f2,#0f0,#3f0,#3f0,#5f0,#8f0,#7f0,#af0,#8f0,#9f0,#bf0,#8f0,#af0,#9f0,#9f0,#8f0,#8f0,#8f0,#7f0,#6f0,#4f0,#1f0,#0f0,#0f2,#0f7,#0fa,#0fe,#0fc,#0fd,#0ff,#0df,#0fe,#0fc,#0f8,#0f8,#0fb,#0f9,#0fb,#0f7,#0ff,#0fc,#06f,#40f,#01f,#02f,#40f,#30f,#000,#000,#80f,#60f)"></i>
<i style="background:linear-gradient(#09f,#0df,#0df,#0ef,#0ff,#0fc,#0ff,#0fa,#0f7,#0f6,#0f5,#0f4,#0f1,#1f0,#2f0,#3f0,#5f0,#5f0,#5f0,#6f0,#5f0,#4f0,#4f0,#3f0,#2f0,#2f0,#3f0,#2f0,#0f0,#0f2,#0f4,#0f4,#0f7,#0fa,#0fd,#0fe,#0fe,#0bf,#09f,#0df,#07f,#0fa,#0f8,#0f9,#0f9,#0fb,#0fa,#0ff,#0fc,#0fd,#09f,#50f,#50f,#00f,#40f,#80f,#70f,#70f,#80f,#60f)"></i>
<i style="background:linear-gradient(#0df,#0cf,#0cf,#0bf,#0bf,#0fb,#0ff,#0f8,#0f6,#0f2,#0f2,#0f0,#3f0,#4f0,#4f0,#5f0,#5f0,#6f0,#8f0,#7f0,#6f0,#6f0,#6f0,#6f0,#7f0,#5f0,#6f0,#6f0,#3f0,#1f0,#0f0,#0f3,#0f3,#0fa,#0fa,#0fc,#0ff,#0fe,#0df,#0fe,#0ff,#0f9,#0fa,#0f9,#0fa,#0fe,#0ef,#0fb,#0fc,#0fd,#0cf,#10f,#60f,#80f,#80f,#80f,#50f,#60f,#60f,#000)"></i>
<i style="background:linear-gradient(#0fb,#0fd,#0bf,#05f,#0df,#0ef,#0fa,#0fc,#0f9,#0f9,#0f8,#0f5,#0f3,#0f3,#0f0,#1f0,#0f2,#1f0,#1f0,#2f0,#0f0,#2f0,#2f0,#0f0,#2f0,#0f0,#0f0,#0f1,#0f0,#0f3,#0f8,#0f7,#0fa,#0fa,#0f9,#0cf,#0ef,#0bf,#09f,#09f,#06f,#0fb,#0f8,#0f8,#0fc,#0f9,#0fd,#0ff,#0fa,#0fa,#10f,#06f,#50f,#30f,#20f,#30f,#50f,#80f,#60f,#80f)"></i>
<i style="background:linear-gradient(#0df,#0fd,#09f,#0f8,#0fe,#0f7,#0fc,#0f7,#0f4,#0f1,#0f1,#1f0,#3f0,#5f0,#6f0,#5f0,#8f0,#7f0,#6f0,#8f0,#9f0,#8f0,#7f0,#5f0,#9f0,#7f0,#7f0,#6f0,#5f0,#3f0,#0f1,#0f1,#0f3,#0f6,#0fc,#0ef,#0ff,#0df,#0ef,#0ff,#02f,#0f7,#0f6,#0f6,#0f8,#0fa,#0f9,#0fd,#0fa,#0fc,#04f,#40f,#10f,#50f,#50f,#80f,#40f,#70f,#80f,#000)"></i>
<i style="background:linear-gradient(#0fa,#0fe,#0ef,#0fd,#0f5,#07f,#0f8,#0f6,#0f2,#0f2,#2f0,#3f0,#3f0,#5f0,#6f0,#9f0,#8f0,#8f0,#af0,#af0,#bf0,#cf0,#9f0,#af0,#8f0,#9f0,#af0,#8f0,#7f0,#4f0,#0f0,#0f0,#0f1,#0f7,#0fb,#0fb,#0fd,#0ff,#0fd,#0fe,#0fd,#0f6,#0f5,#0f5,#0f5,#0f8,#0f7,#0f9,#0fa,#0f9,#09f,#02f,#06f,#40f,#50f,#10f,#30f,#40f,#40f,#60f)"></i>
<i style="background:linear-gradient(#0fb,#0ef,#0bf,#0bf,#0ff,#0cf,#0ff,#0f9,#0f4,#0f3,#0f1,#0f0,#1f0,#3f0,#4f0,#5f0,#4f0,#6f0,#7f0,#6f0,#7f0,#4f0,#7f0,#5f0,#5f0,#5f0,#6f0,#5f0,#3f0,#2f0,#0f2,#0f3,#0f5,#0f8,#0fd,#0ff,#0ff,#0fd,#0fe,#09f,#08f,#0fb,#0f8,#0f7,#0f7,#0f8,#0f8,#0f9,#0fc,#0f7,#0fc,#30f,#20f,#50f,#50f,#60f,#000,#80f,#50f,#80f)"></i>
<i style="background:linear-gradient(#09f,#0fd,#0fb,#0ef,#0af,#0f6,#0df,#0f6,#0f3,#0f4,#0f3,#0f0,#3f0,#4f0,#6f0,#7f0,#6f0,#7f0,#8f0,#8f0,#5f0,#7f0,#6f0,#8f0,#5f0,#5f0,#5f0,#5f0,#5f0,#1f0,#0f2,#0f1,#0f5,#0f9,#0f9,#0fb,#0fe,#0fe,#0df,#0ff,#0cf,#0fa,#0f8,#0f9,#0f9,#0f9,#0fd,#0fc,#0ef,#0fd,#03f,#00f,#20f,#40f,#10f,#40f,#80f,#000,#70f,#000)"></i>
<i style="background:linear-gradient(#0fb,#0cf,#0bf,#0fb,#0fe,#0fa,#0fc,#0f9,#0f5,#0f2,#0f0,#2f0,#1f0,#5f0,#5f0,#6f0,#6f0,#5f0,#7f0,#8f0,#6f0,#5f0,#6f0,#6f0,#6f0,#7f0,#7f0,#5f0,#5f0,#3f0,#1f0,#0f1,#0f3,#0f7,#0fb,#0fd,#0ff,#0ef,#09f,#0ef,#0ef,#0fc,#0f7,#0fa,#0fa,#0fa,#0fa,#0fa,#0ff,#0fb,#07f,#60f,#20f,#04f,#40f,#000,#70f,#80f,#50f,#000)"></i>
<i style="background:linear-gradient(#0fd,#0bf,#0df,#0af,#0cf,#0fc,#0f6,#0f8,#0f5,#0f2,#0f0,#1f0,#1f0,#3f0,#5f0,#5f0,#7f0,#9f0,#6f0,#7f0,#7f0,#af0,#7f0,#6f0,#7f0,#7f0,#9f0,#5f0,#5f0,#3f0,#0f1,#0f1,#0f3,#0f7,#0fb,#0fa,#0fc,#0bf,#0fd,#0cf,#0ef,#0fe,#0f9,#0fa,#0fa,#0ef,#0f9,#0fc,#0ff,#0fc,#0af,#02f,#20f,#40f,#80f,#000,#20f,#60f,#60f,#60f)"></i>
<i style="background:linear-gradient(#0fd,#06f,#0ef,#0f7,#0f8,#0ff,#0fc,#0f9,#0f5,#0f5,#0f1,#0f0,#0f0,#1f0,#3f0,#3f0,#4f0,#5f0,#5f0,#6f0,#6f0,#5f0,#6f0,#4f0,#5f0,#4f0,#4f0,#4f0,#3f0,#2f0,#0f2,#0f3,#0f5,#0f9,#0fe,#0fd,#0ef,#0ef,#0bf,#0cf,#0bf,#0ff,#0fa,#0f9,#0fb,#0fb,#0fb,#0ef,#0df,#0fa,#0af,#40f,#80f,#30f,#000,#80f,#000,#10f,#80f,#50f)"></i>
<i style="background:linear-gradient(#0fa,#0fc,#0fd,#0ef,#0fc,#09f,#0f6,#0f7,#0f3,#0f4,#0f2,#0f0,#1f0,#5f0,#4f0,#3f0,#5f0,#7f0,#6f0,#7f0,#7f0,#5f0,#6f0,#7f0,#6f0,#4f0,#6f0,#5f0,#3f0,#1f0,#0f3,#0f0,#0f3,#0f9,#0fb,#0fc,#0df,#0ef,#0ff,#0fd,#0fe,#0fc,#0f8,#0f9,#0fb,#0fb,#0fb,#0fd,#0ff,#0fc,#02f,#30f,#40f,#000,#80f,#60f,#70f,#80f,#80f,#000)"></i>
<i style="background:linear-gradient(#0fe,#0fe,#0fd,#0ef,#0f8,#0ff,#0fc,#0f6,#0f2,#0f1,#0f1,#2f0,#3f0,#4f0,#6f0,#6f0,#8f0,#9f0,#8f0,#9f0,#9f0,#9f0,#9f0,#7f0,#5f0,#8f0,#6f0,#7f0,#7f0,#2f0,#0f3,#0f2,#0f3,#0f8,#0fa,#0fa,#0fd,#0ff,#0df,#0ef,#06f,#0f9,#0f8,#0f7,#0f8,#0f8,#0fa,#0fa,#0fd,#0fc,#06f,#20f,#20f,#50f,#40f,#30f,#00f,#60f,#70f,#01f)"></i>
<i style="background:linear-gradient(#0ff,#0fd,#0ff,#0f9,#0ff,#0fd,#0fc,#0f8,#0f3,#0f0,#1f0,#4f0,#5f0,#5f0,#7f0,#8f0,#7f0,#8f0,#af0,#8f0,#8f0,#af0,#7f0,#7f0,#7f0,#8f0,#7f0,#8f0,#6f0,#4f0,#1f0,#0f0,#0f2,#0f8,#0fb,#0f9,#0ff,#0df,#0df,#0cf,#03f,#0f7,#0f5,#0f4,#0f5,#0f9,#0f7,#0fa,#0fb,#0f7,#09f,#02f,#30f,#40f,#60f,#80f,#60f,#30f,#60f,#50f)"></i>
<i style="background:linear-gradient(#0fd,#0ff,#0f6,#0fd,#0df,#0ef,#0fc,#0f7,#0f3,#0f1,#2f0,#3f0,#5f0,#6f0,#8f0,#7f0,#af0,#8f0,#af0,#9f0,#af0,#8f0,#8f0,#8f0,#af0,#7f0,#9f0,#8f0,#7f0,#3f0,#2f0,#0f0,#0f2,#0f7,#0f9,#0fc,#0bf,#0ef,#0cf,#0fd,#0ef,#0f8,#0f4,#0f6,#0f7,#0f9,#0f9,#0f9,#0f9,#0ff,#08f,#20f,#10f,#80f,#30f,#40f,#20f,#70f,#70f,#70f)"></i>
<i style="background:linear-gradient(#0df,#0f9,#0ff,#0cf,#0fc,#0f8,#0fc,#0f8,#0f3,#0f2,#0f1,#3f0,#3f0,#6f0,#6f0,#6f0,#6f0,#7f0,#6f0,#8f0,#af0,#7f0,#8f0,#7f0,#6f0,#8f0,#8f0,#6f0,#3f0,#3f0,#0f1,#0f1,#0f3,#0f6,#0f9,#0fb,#0fc,#0ff,#0df,#06f,#07f,#0f9,#0f5,#0f8,#0f8,#0f9,#0f8,#0fb,#0f8,#0fa,#07f,#50f,#01f,#30f,#01f,#000,#40f,#50f,#60f,#70f)"></i>
<i style="background:linear-gradient(#0fd,#0bf,#0fd,#0fa,#0cf,#0f9,#0fd,#0f8,#0f1,#0f1,#1f0,#3f0,#5f0,#7f0,#9f0,#8f0,#8f0,#8f0,#bf0,#af0,#9f0,#9f0,#8f0,#7f0,#8f0,#8f0,#9f0,#7f0,#7f0,#3f0,#0f1,#1f0,#0f2,#0f5,#0fa,#0fc,#0bf,#0df,#0df,#0bf,#0af,#0fa,#0f6,#0f7,#0f8,#0f9,#0f7,#0fc,#0fb,#0ff,#0bf,#03f,#20f,#20f,#20f,#60f,#50f,#30f,#80f,#40f)"></i>
<i style="background:linear-gradient(#08f,#0fa,#0f4,#0fc,#0ef,#0fd,#0fb,#0f7,#0f2,#0f1,#2f0,#6f0,#5f0,#8f0,#9f0,#7f0,#af0,#af0,#9f0,#af0,#bf0,#bf0,#8f0,#8f0,#8f0,#af0,#af0,#8f0,#8f0,#6f0,#1f0,#0f1,#0f2,#0f7,#0fb,#0f9,#0fe,#0df,#0af,#0bf,#0cf,#0fa,#0f5,#0f5,#0f8,#0f9,#0fb,#0fa,#0f9,#0fa,#03f,#03f,#20f,#10f,#80f,#02f,#60f,#30f,#70f,#80f)"></i>
<i style="background:linear-gradient(#0f9,#0bf,#0cf,#0fa,#0df,#0fa,#0ff,#0f7,#0f3,#0f3,#0f1,#1f0,#3f0,#6f0,#5f0,#6f0,#6f0,#7f0,#6f0,#6f0,#7f0,#6f0,#5f0,#4f0,#6f0,#6f0,#7f0,#5f0,#5f0,#3f0,#0f0,#0f1,#0f2,#0f7,#0f8,#0fd,#0fd,#0df,#0af,#0af,#08f,#0fa,#0f7,#0fa,#0fa,#0fe,#0fc,#0f9,#0fe,#0fa,#08f,#20f,#02f,#20f,#40f,#60f,#30f,#30f,#000,#70f)"></i>
<i style="background:linear-gradient(#0cf,#0df,#0fc,#0cf,#0fe,#0fd,#0ff,#0f7,#0f5,#0f2,#0f0,#1f0,#2f0,#5f0,#7f0,#7f0,#4f0,#7f0,#9f0,#8f0,#4f0,#7f0,#6f0,#7f0,#6f0,#7f0,#8f0,#6f0,#6f0,#2f0,#0f1,#0f1,#0f3,#0fa,#0fa,#0fe,#0df,#0cf,#0fd,#07f,#08f,#0fa,#0f9,#0f9,#0fa,#0fe,#0fb,#0fc,#0ff,#0fe,#0fe,#30f,#10f,#20f,#80f,#60f,#60f,#50f,#50f,#80f)"></i>
<i style="background:linear-gradient(#0fe,#0af,#0fd,#0bf,#0bf,#0fc,#0f5,#0f8,#0f3,#0f2,#0f1,#1f0,#4f0,#5f0,#6f0,#7f0,#6f0,#7f0,#8f0,#5f0,#6f0,#8f0,#6f0,#8f0,#6f0,#7f0,#8f0,#5f0,#5f0,#3f0,#1f0,#0f0,#0f3,#0f6,#0fa,#0f9,#0df,#0bf,#0fe,#0cf,#05f,#0f9,#0f8,#0f9,#0fa,#0f9,#0fd,#0fa,#0fe,#0fe,#08f,#20f,#10f,#20f,#30f,#60f,#60f,#70f,#30f,#30f)"></i>
<i style="background:linear-gradient(#0ff,#0ff,#0af,#0fc,#08f,#0ff,#0f8,#0f8,#0f4,#0f1,#1f0,#0f0,#3f0,#6f0,#5f0,#6f0,#7f0,#6f0,#7f0,#5f0,#6f0,#7f0,#6f0,#6f0,#6f0,#5f0,#7f0,#6f0,#6f0,#2f0,#0f2,#0f2,#0f4,#0f7,#0fa,#0df,#08f,#0df,#08f,#06f,#07f,#0f8,#0f7,#0f7,#0f8,#0f8,#0fa,#0fb,#0fe,#0f8,#0bf,#40f,#10f,#60f,#80f,#30f,#50f,#30f,#50f,#80f)"></i>
<i style="background:linear-gradient(#0ff,#0df,#0df,#0ef,#0f8,#0f4,#0fc,#0f7,#0f4,#0f1,#0f1,#2f0,#5f0,#6f0,#5f0,#7f0,#5f0,#5f0,#6f0,#8f0,#7f0,#7f0,#6f0,#7f0,#5f0,#7f0,#5f0,#7f0,#6f0,#2f0,#1f0,#0f2,#0f5,#0f8,#0fb,#0f9,#0af,#09f,#06f,#0bf,#03f,#0f8,#0f5,#0f6,#0f6,#0f7,#0fa,#0f9,#0fb,#0f9,#07f,#20f,#10f,#80f,#50f,#30f,#50f,#70f,#30f,#80f)"></i>
<i style="background:linear-gradient(#0ff,#0fe,#0fc,#08f,#0ff,#0cf,#0fd,#0f6,#0f3,#0f0,#1f0,#2f0,#3f0,#7f0,#6f0,#5f0,#5f0,#8f0,#8f0,#6f0,#9f0,#8f0,#6f0,#7f0,#7f0,#5f0,#7f0,#8f0,#7f0,#4f0,#0f2,#1f0,#0f2,#0f8,#0fc,#0fc,#04f,#0cf,#09f,#0bf,#02f,#0f8,#0f6,#0f5,#0f6,#0f8,#0f8,#0fb,#0fb,#0f9,#09f,#30f,#50f,#06f,#20f,#30f,#50f,#10f,#000,#80f)"></i>
<i style="background:linear-gradient(#0ef,#0cf,#09f,#0df,#0ff,#0fe,#0cf,#0f8,#0f4,#0f2,#0f1,#2f0,#4f0,#3f0,#4f0,#3f0,#5f0,#6f0,#6f0,#7f0,#5f0,#7f0,#4f0,#5f0,#5f0,#5f0,#6f0,#4f0,#4f0,#3f0,#1f0,#0f5,#0f7,#0fb,#0fc,#0fd,#0f9,#0fd,#0fd,#00f,#0bf,#0f9,#0f8,#0f6,#0f8,#0f8,#0f9,#0fb,#0f9,#0f8,#0bf,#40f,#30f,#30f,#60f,#40f,#70f,#80f,#60f,#000)"></i>
<i style="background:linear-gradient(#08f,#09f,#0ff,#0fc,#0fb,#0f9,#0f9,#0f8,#0f0,#0f0,#1f0,#5f0,#4f0,#6f0,#5f0,#6f0,#5f0,#8f0,#7f0,#8f0,#7f0,#7f0,#8f0,#5f0,#7f0,#9f0,#7f0,#8f0,#6f0,#5f0,#0f0,#0f6,#0f5,#0f7,#0f9,#0fa,#0ef,#07f,#07f,#06f,#0df,#0f9,#0f6,#0f6,#0f9,#0f8,#0fa,#0ff,#0fc,#0fc,#0af,#04f,#05f,#40f,#30f,#70f,#20f,#20f,#80f,#80f)"></i>
<i style="background:linear-gradient(#0df,#0fd,#0fb,#0ef,#0fb,#0f8,#0fd,#0f8,#0f1,#3f0,#2f0,#6f0,#7f0,#9f0,#8f0,#8f0,#9f0,#9f0,#af0,#9f0,#8f0,#af0,#af0,#8f0,#9f0,#9f0,#8f0,#9f0,#8f0,#5f0,#4f0,#0f3,#0f4,#0f6,#0f9,#0fe,#0bf,#08f,#0bf,#00f,#0bf,#0fa,#0f9,#0f6,#0f9,#0f8,#0fc,#0fc,#0fd,#0fb,#0fe,#01f,#01f,#80f,#00f,#20f,#000,#80f,#70f,#80f)"></i>
<i style="background:linear-gradient(#0fb,#0fa,#0ff,#0f9,#0ef,#0bf,#0f3,#0f7,#0f2,#0f0,#0f0,#4f0,#5f0,#7f0,#6f0,#7f0,#9f0,#9f0,#7f0,#9f0,#8f0,#7f0,#7f0,#7f0,#6f0,#9f0,#8f0,#6f0,#6f0,#4f0,#3f0,#0f3,#0f4,#0f9,#0fa,#0fa,#0df,#0af,#05f,#0ff,#02f,#0fb,#0f8,#0f9,#0f9,#0fc,#0fe,#0fc,#0fc,#0fc,#05f,#40f,#80f,#10f,#70f,#60f,#20f,#50f,#70f,#000)"></i>
<i style="background:linear-gradient(#0af,#0fd,#0fe,#0df,#0ef,#0df,#0cf,#0f8,#0f4,#0f1,#2f0,#2f0,#3f0,#6f0,#6f0,#5f0,#6f0,#5f0,#7f0,#7f0,#5f0,#5f0,#6f0,#4f0,#5f0,#7f0,#6f0,#3f0,#5f0,#1f0,#0f0,#0f5,#0f6,#0f8,#0ff,#0fa,#08f,#0bf,#07f,#20f,#07f,#0fb,#0f8,#0f9,#0fc,#0fa,#0fa,#0fb,#0ff,#0ef,#0df,#10f,#60f,#40f,#40f,#40f,#70f,#80f,#80f,#70f)"></i>
<i style="background:linear-gradient(#09f,#0df,#0bf,#0ef,#0f9,#0ff,#0fc,#0fb,#0f8,#0f4,#0f1,#0f0,#2f0,#4f0,#2f0,#1f0,#2f0,#3f0,#3f0,#3f0,#3f0,#2f0,#2f0,#1f0,#2f0,#4f0,#4f0,#2f0,#0f1,#0f3,#0f4,#0f8,#0fa,#0fe,#0fc,#0cf,#03f,#0df,#02f,#06f,#05f,#0f9,#0f7,#0f7,#0f8,#0fb,#0f8,#0fb,#0fb,#0fc,#04f,#20f,#60f,#30f,#60f,#20f,#80f,#80f,#80f,#000)"></i>
<i style="background:linear-gradient(#0f8,#0ff,#0cf,#09f,#0f9,#0df,#0f7,#0f9,#0f6,#0f0,#2f0,#4f0,#3f0,#5f0,#3f0,#6f0,#6f0,#5f0,#5f0,#6f0,#6f0,#6f0,#5f0,#5f0,#5f0,#7f0,#4f0,#4f0,#1f0,#0f0,#0f1,#0f6,#0f7,#0f8,#0fd,#0ef,#08f,#05f,#08f,#10f,#01f,#0f9,#0f8,#0f9,#0f9,#0fb,#0f9,#0fa,#0fe,#0fb,#0fd,#80f,#01f,#10f,#10f,#20f,#000,#50f,#70f,#80f)"></i>
<i style="background:linear-gradient(#0fd,#06f,#0bf,#0bf,#0fd,#0cf,#0ef,#0fd,#0f7,#0f3,#0f2,#0f1,#2f0,#1f0,#2f0,#1f0,#3f0,#3f0,#3f0,#1f0,#1f0,#0f0,#0f0,#1f0,#3f0,#2f0,#2f0,#0f0,#0f1,#0f3,#0f6,#0f8,#0f9,#0fb,#0fe,#0ff,#06f,#02f,#0ef,#40f,#03f,#0f8,#0f4,#0f7,#0f8,#0f8,#0f9,#0fa,#0fa,#0fc,#09f,#40f,#20f,#40f,#30f,#000,#000,#70f,#80f,#30f)"></i>
<i style="background:linear-gradient(#0fa,#0df,#0df,#0ff,#0f8,#0fe,#0f4,#0f7,#0f2,#0f0,#3f0,#4f0,#7f0,#6f0,#5f0,#4f0,#8f0,#9f0,#7f0,#5f0,#8f0,#4f0,#5f0,#6f0,#5f0,#6f0,#5f0,#4f0,#4f0,#1f0,#0f1,#0f4,#0f7,#0fa,#0f9,#0fc,#0cf,#08f,#0bf,#03f,#03f,#0f8,#0f6,#0f7,#0f6,#0f7,#0f8,#0fa,#0f9,#0fb,#01f,#02f,#40f,#40f,#60f,#50f,#40f,#50f,#80f,#50f)"></i>
<i style="background:linear-gradient(#0ff,#0fb,#0fc,#0fc,#0af,#0fd,#0f6,#0f5,#1f0,#3f0,#5f0,#7f0,#8f0,#9f0,#6f0,#8f0,#8f0,#9f0,#af0,#8f0,#8f0,#8f0,#7f0,#8f0,#9f0,#9f0,#8f0,#6f0,#4f0,#3f0,#0f0,#0f1,#0f4,#0f7,#0f9,#0fc,#09f,#0ff,#09f,#0fd,#0cf,#0f7,#0f6,#0f5,#0f7,#0f8,#0f8,#0fb,#0fc,#0f9,#0bf,#20f,#01f,#40f,#30f,#20f,#30f,#40f,#80f,#80f)"></i>
<i style="background:linear-gradient(#0fe,#0fd,#0fe,#0fd,#0fc,#0f8,#0f9,#0f6,#0f0,#4f0,#6f0,#7f0,#7f0,#6f0,#8f0,#8f0,#af0,#9f0,#8f0,#af0,#af0,#9f0,#6f0,#9f0,#af0,#9f0,#6f0,#7f0,#5f0,#3f0,#1f0,#0f2,#0f5,#0f8,#0fa,#0fc,#04f,#06f,#0cf,#08f,#0af,#0f9,#0f5,#0f6,#0f8,#0f9,#0f9,#0fb,#0fc,#0f8,#06f,#10f,#02f,#02f,#01f,#40f,#60f,#000,#30f,#60f)"></i>
<i style="background:linear-gradient(#0fc,#0cf,#0f6,#0f9,#0fd,#0cf,#0f9,#0f2,#3f0,#4f0,#8f0,#8f0,#9f0,#8f0,#af0,#8f0,#9f0,#af0,#9f0,#af0,#9f0,#bf0,#8f0,#af0,#bf0,#8f0,#7f0,#8f0,#5f0,#3f0,#0f0,#0f1,#0f5,#0f9,#0fb,#0fa,#0fe,#0bf,#0af,#0bf,#06f,#0fa,#0f7,#0f8,#0f9,#0f9,#0fa,#0fa,#0fc,#0fd,#08f,#30f,#60f,#30f,#80f,#00f,#40f,#70f,#000,#000)"></i>
<i style="background:linear-gradient(#0fd,#0fc,#0fc,#08f,#0af,#0f8,#0f8,#0f3,#1f0,#4f0,#5f0,#7f0,#7f0,#8f0,#8f0,#9f0,#af0,#9f0,#8f0,#af0,#8f0,#6f0,#8f0,#9f0,#af0,#7f0,#8f0,#4f0,#4f0,#2f0,#0f2,#0f2,#0f5,#0f7,#0fa,#0fa,#0cf,#0ff,#06f,#06f,#02f,#0f9,#0f9,#0f8,#0f9,#0f9,#0fc,#0fb,#0fe,#0fa,#0df,#00f,#70f,#20f,#50f,#70f,#20f,#40f,#80f,#70f)"></i>
<i style="background:linear-gradient(#0ff,#0ff,#0fd,#0fd,#0fb,#0fd,#0f7,#0f3,#3f0,#5f0,#5f0,#9f0,#9f0,#9f0,#9f0,#af0,#af0,#bf0,#9f0,#af0,#9f0,#8f0,#9f0,#af0,#9f0,#7f0,#5f0,#5f0,#4f0,#2f0,#1f0,#0f2,#0f4,#0f8,#0fa,#0fa,#0cf,#0ef,#0fc,#0ef,#0df,#0fa,#0f7,#0f7,#0fa,#0fb,#0f8,#0fb,#0f7,#0fa,#05f,#00f,#04f,#40f,#30f,#70f,#80f,#20f,#80f,#80f)"></i>
<i style="background:linear-gradient(#09f,#0fc,#0f6,#0fe,#0fa,#0fa,#0f7,#0f2,#2f0,#4f0,#7f0,#6f0,#9f0,#9f0,#bf0,#af0,#bf0,#cf0,#cf0,#bf0,#cf0,#cf0,#af0,#af0,#7f0,#7f0,#6f0,#5f0,#3f0,#3f0,#0f1,#0f3,#0f4,#0f9,#0f9,#0fa,#0df,#07f,#0af,#07f,#09f,#0f8,#0f8,#0f6,#0f8,#0fa,#0fb,#0fb,#0f9,#0f9,#0af,#02f,#30f,#70f,#40f,#60f,#70f,#80f,#80f,#80f)"></i>
<i style="background:linear-gradient(#0cf,#0af,#0fe,#0df,#0fb,#0fc,#0f5,#0f0,#3f0,#5f0,#6f0,#8f0,#cf0,#ef0,#ef0,#ef0,#ff0,#ff0,#ff0,#ff0,#ef0,#ef0,#cf0,#bf0,#af0,#8f0,#6f0,#5f0,#5f0,#2f0,#1f0,#0f2,#0f6,#0f7,#0f9,#0f9,#0af,#0bf,#0fd,#0df,#08f,#0f6,#0f5,#0f7,#0f5,#0fa,#0f9,#0fa,#0fa,#0fa,#07f,#03f,#00f,#20f,#40f,#000,#70f,#50f,#50f,#60f)"></i>
<i style="background:linear-gradient(#09f,#0df,#0df,#0fe,#0bf,#0f3,#0f6,#0f2,#2f0,#4f0,#7f0,#bf0,#ff0,#ef0,#fe0,#fd0,#fe0,#fe0,#ff0,#fe0,#ef0,#ff0,#ef0,#df0,#af0,#7f0,#5f0,#1f0,#3f0,#0f0,#0f0,#0f3,#0f5,#0f7,#0f9,#0fc,#0ff,#0fe,#06f,#08f,#0ef,#0f7,#0f3,#0f5,#0f7,#0f8,#0f8,#0f9,#0fc,#0fd,#0af,#40f,#70f,#20f,#60f,#40f,#40f,#000,#80f,#01f)"></i>
<i style="background:linear-gradient(#0f9,#0fe,#0fd,#0ef,#0fd,#0cf,#0f8,#0f2,#2f0,#7f0,#8f0,#bf0,#ff0,#fc0,#fc0,#fb0,#fb0,#fa0,#fb0,#fc0,#fd0,#fd0,#ff0,#ef0,#bf0,#9f0,#7f0,#5f0,#3f0,#1f0,#1f0,#0f3,#0f4,#0f8,#0fa,#0f8,#0ff,#0df,#0ef,#08f,#0cf,#0f7,#0f7,#0f5,#0f6,#0f8,#0f9,#0f9,#0fd,#0fc,#0fe,#30f,#20f,#30f,#20f,#80f,#60f,#40f,#30f,#70f)"></i>
<i style="background:linear-gradient(#0df,#0fe,#0cf,#0fc,#0fc,#0f7,#0f6,#0f2,#2f0,#4f0,#8f0,#af0,#ff0,#fd0,#fc0,#f90,#fb0,#fa0,#fc0,#fc0,#fd0,#fd0,#df0,#cf0,#af0,#9f0,#6f0,#6f0,#2f0,#0f0,#0f2,#0f2,#0f5,#0f7,#0fb,#0fc,#0df,#0fc,#0cf,#0af,#0bf,#0f9,#0f5,#0f6,#0f8,#0f6,#0fa,#0f9,#0fc,#0fb,#0bf,#04f,#05f,#30f,#50f,#40f,#80f,#40f,#70f,#80f)"></i>
<i style="background:linear-gradient(#0ef,#0fd,#0fc,#0ff,#0fd,#0fd,#0f5,#0f2,#3f0,#6f0,#9f0,#bf0,#ef0,#fd0,#f90,#f70,#f80,#f60,#f70,#f90,#fb0,#fd0,#ef0,#df0,#bf0,#7f0,#7f0,#6f0,#4f0,#2f0,#1f0,#0f2,#0f4,#0f6,#0f9,#0fd,#0cf,#0cf,#0df,#0fb,#0af,#0f9,#0f5,#0f5,#0f8,#0f8,#0f8,#0fa,#0fc,#0f7,#08f,#30f,#50f,#60f,#70f,#80f,#60f,#20f,#10f,#40f)"></i>
<i style="background:linear-gradient(#0fe,#0ff,#0f9,#0fc,#0fb,#0fc,#0f7,#0f1,#3f0,#4f0,#8f0,#af0,#fe0,#fe0,#f90,#f70,#f80,#f80,#f70,#f80,#fc0,#ff0,#fe0,#df0,#bf0,#8f0,#6f0,#6f0,#1f0,#1f0,#0f0,#0f2,#0f4,#0f7,#0fb,#0fb,#0fa,#0ef,#0ef,#0df,#0f5,#0f4,#0f5,#0f6,#0f6,#0f6,#0f6,#0f9,#0fd,#0fc,#0cf,#10f,#40f,#30f,#50f,#80f,#60f,#10f,#40f,#70f)"></i>
<i style="background:linear-gradient(#0ef,#0ef,#0fc,#0df,#0fb,#0f6,#0f6,#0f2,#1f0,#3f0,#6f0,#af0,#df0,#fd0,#fb0,#f90,#f90,#f90,#fa0,#fa0,#fc0,#ff0,#ef0,#cf0,#af0,#6f0,#5f0,#4f0,#2f0,#2f0,#1f0,#0f5,#0f8,#0f8,#0fb,#0fb,#0fd,#09f,#0ef,#0df,#0f6,#0f4,#0f3,#0f3,#0f4,#0f4,#0f6,#0f7,#0fe,#0fc,#09f,#20f,#40f,#30f,#60f,#60f,#30f,#70f,#70f,#80f)"></i>
<i style="background:linear-gradient(#0fe,#0fe,#0df,#0f9,#0f8,#0fd,#0f8,#0f3,#0f0,#2f0,#5f0,#8f0,#bf0,#ef0,#fc0,#fa0,#fb0,#f90,#fc0,#fc0,#fe0,#ef0,#df0,#af0,#8f0,#7f0,#4f0,#3f0,#1f0,#0f1,#0f2,#0f3,#0f5,#0f9,#0fa,#0fd,#0ff,#0fe,#0fd,#0f2,#0f1,#0f2,#0f1,#0f2,#0f0,#0f2,#0f4,#0f3,#0f9,#0fb,#06f,#20f,#10f,#01f,#000,#20f,#60f,#30f,#70f,#80f)"></i>
<i style="background:linear-gradient(#0cf,#0fc,#0ff,#0fc,#0fc,#0f8,#0f7,#0f2,#2f0,#4f0,#6f0,#9f0,#cf0,#ff0,#fb0,#fc0,#fa0,#fb0,#fa0,#fc0,#fd0,#fe0,#df0,#df0,#af0,#7f0,#5f0,#2f0,#1f0,#0f0,#0f1,#0f4,#0f5,#0f7,#0f9,#0fb,#0ff,#0df,#0ef,#0f1,#0f0,#2f0,#0f0,#0f0,#0f1,#0f2,#0f1,#0f4,#0fa,#0fb,#07f,#80f,#70f,#01f,#30f,#20f,#50f,#40f,#30f,#20f)"></i>
<i style="background:linear-gradient(#08f,#08f,#0fd,#0f8,#0f3,#0f7,#0fa,#0f3,#2f0,#2f0,#7f0,#8f0,#cf0,#ef0,#fd0,#fc0,#fb0,#fb0,#fc0,#fc0,#ff0,#ff0,#cf0,#9f0,#9f0,#7f0,#3f0,#1f0,#1f0,#0f0,#0f3,#0f5,#0f6,#0f8,#0fb,#0ff,#0fd,#0cf,#0ef,#0f2,#2f0,#1f0,#2f0,#2f0,#0f0,#0f0,#0f1,#0f4,#0fb,#0fb,#06f,#10f,#03f,#01f,#000,#50f,#30f,#50f,#60f,#000)"></i>
<i style="background:linear-gradient(#0f9,#0df,#0fa,#0ff,#0fc,#0fe,#0f9,#0f1,#1f0,#3f0,#5f0,#9f0,#df0,#ff0,#fc0,#fb0,#fb0,#fa0,#fb0,#fc0,#fc0,#ff0,#ef0,#bf0,#9f0,#5f0,#4f0,#3f0,#3f0,#0f0,#0f1,#0f2,#0f5,#0f8,#0fb,#0fd,#0ef,#0ef,#0ef,#2f0,#2f0,#3f0,#2f0,#2f0,#1f0,#0f1,#0f2,#0f1,#0fb,#0fd,#06f,#10f,#01f,#60f,#50f,#70f,#40f,#20f,#80f,#70f)"></i>
<i style="background:linear-gradient(#0af,#0df,#0df,#0df,#0fd,#0f5,#0f9,#0f4,#0f1,#0f0,#4f0,#7f0,#8f0,#bf0,#ff0,#ff0,#fd0,#fe0,#ff0,#fe0,#df0,#cf0,#af0,#9f0,#6f0,#3f0,#1f0,#0f1,#0f0,#0f1,#0f2,#0f5,#0f6,#0f9,#0ff,#0fc,#0fd,#0ff,#0df,#1f0,#1f0,#0f0,#2f0,#1f0,#1f0,#0f2,#0f0,#0f3,#0f8,#0fb,#01f,#20f,#70f,#60f,#20f,#70f,#70f,#80f,#30f,#50f)"></i>
<i style="background:linear-gradient(#0bf,#0ef,#0df,#0ff,#0fb,#0f8,#0f9,#0f5,#0f1,#0f0,#4f0,#7f0,#9f0,#cf0,#df0,#ef0,#cf0,#df0,#cf0,#df0,#cf0,#bf0,#af0,#6f0,#7f0,#3f0,#2f0,#1f0,#0f1,#0f2,#0f4,#0f5,#0f7,#0fa,#0df,#0fb,#0df,#0cf,#0bf,#0f1,#1f0,#1f0,#0f0,#0f0,#0f0,#0f1,#0f3,#0f4,#0fe,#0f9,#0bf,#40f,#01f,#04f,#20f,#70f,#10f,#10f,#80f,#30f)"></i>
<i style="background:linear-gradient(#0af,#0fd,#0fc,#0df,#0fe,#0fe,#0fb,#0f7,#0f0,#0f0,#3f0,#7f0,#af0,#df0,#ef0,#ef0,#ef0,#df0,#cf0,#bf0,#ef0,#cf0,#cf0,#af0,#7f0,#6f0,#5f0,#2f0,#1f0,#0f0,#0f3,#0f4,#0f7,#0f9,#0fb,#0fb,#0fb,#0fd,#0bf,#0f1,#0f0,#1f0,#2f0,#0f0,#0f2,#0f2,#0f4,#0f6,#0fb,#0ef,#0af,#40f,#80f,#20f,#30f,#50f,#50f,#50f,#80f,#80f)"></i>
<i style="background:linear-gradient(#0bf,#08f,#0ff,#0bf,#0ef,#0fd,#0f8,#0f8,#0f1,#0f0,#2f0,#4f0,#af0,#af0,#af0,#cf0,#cf0,#af0,#cf0,#af0,#bf0,#cf0,#bf0,#af0,#8f0,#7f0,#5f0,#3f0,#2f0,#0f0,#0f2,#0f4,#0f7,#0fa,#0fd,#0fd,#09f,#0ff,#0df,#0f4,#0f0,#0f1,#0f1,#0f2,#0f1,#0f3,#0f3,#0f4,#0fb,#0f9,#0af,#04f,#40f,#30f,#60f,#80f,#60f,#80f,#80f,#80f)"></i>
<i style="background:linear-gradient(#0ef,#0fe,#0fe,#0fe,#0f9,#0ff,#0f9,#0f7,#0f2,#0f1,#4f0,#7f0,#9f0,#bf0,#ff0,#df0,#df0,#ef0,#ef0,#df0,#fe0,#df0,#ef0,#df0,#df0,#bf0,#7f0,#6f0,#6f0,#4f0,#0f0,#0f2,#0f6,#0f7,#0fb,#0fb,#0fd,#0fb,#0fd,#0f2,#0f1,#0f0,#0f0,#0f1,#0f1,#0f3,#0f6,#0f5,#0fb,#0ff,#07f,#20f,#03f,#30f,#30f,#80f,#70f,#000,#20f,#80f)"></i>
<i style="background:linear-gradient(#0fd,#08f,#0fd,#0ff,#08f,#0fc,#0fe,#0f7,#0f2,#1f0,#4f0,#4f0,#7f0,#cf0,#df0,#ef0,#df0,#df0,#ff0,#df0,#ff0,#df0,#df0,#ff0,#df0,#bf0,#7f0,#7f0,#4f0,#3f0,#2f0,#0f3,#0f4,#0f7,#0fa,#0f8,#0fc,#0fd,#0ef,#0f4,#0f0,#0f0,#1f0,#0f1,#0f2,#0f1,#0f3,#0f4,#0fb,#0fd,#09f,#20f,#10f,#00f,#30f,#80f,#80f,#80f,#70f,#50f)"></i>
<i style="background:linear-gradient(#0bf,#0cf,#0df,#0ef,#0af,#0f9,#0cf,#0f6,#0f1,#1f0,#4f0,#5f0,#6f0,#cf0,#fe0,#ff0,#fe0,#fe0,#ff0,#ef0,#fe0,#ef0,#ef0,#ef0,#ef0,#cf0,#9f0,#9f0,#6f0,#3f0,#3f0,#0f3,#0f6,#0f7,#0fb,#0ff,#0fe,#0df,#0ef,#0f0,#2f0,#1f0,#1f0,#2f0,#0f0,#0f1,#0f2,#0f3,#0f9,#0fb,#07f,#06f,#00f,#30f,#50f,#70f,#50f,#80f,#50f,#000)"></i>
<i style="background:linear-gradient(#0ff,#0cf,#0ff,#0ef,#0f6,#0f9,#0f9,#0f7,#0f2,#0f1,#1f0,#4f0,#6f0,#9f0,#cf0,#ff0,#fd0,#ef0,#ff0,#fe0,#ff0,#ff0,#df0,#ef0,#ff0,#cf0,#af0,#8f0,#6f0,#3f0,#1f0,#1f0,#0f3,#0f7,#0fa,#0fe,#0fd,#0ff,#0fe,#0f1,#1f0,#3f0,#3f0,#3f0,#0f0,#0f0,#0f1,#0f2,#0fe,#0cf,#0cf,#10f,#10f,#70f,#50f,#80f,#50f,#70f,#50f,#60f)"></i>
<i style="background:linear-gradient(#0cf,#0ef,#0fb,#0cf,#0fa,#0fc,#0fd,#0f6,#0f3,#1f0,#2f0,#3f0,#7f0,#af0,#df0,#ff0,#fe0,#ef0,#ff0,#ff0,#ff0,#ff0,#df0,#fd0,#ff0,#cf0,#df0,#8f0,#7f0,#3f0,#1f0,#2f0,#0f3,#0f7,#0fb,#0fc,#0fd,#0fd,#0ef,#1f0,#4f0,#1f0,#3f0,#3f0,#2f0,#1f0,#0f1,#0f3,#0fd,#0bf,#06f,#05f,#05f,#40f,#00f,#50f,#30f,#40f,#80f,#60f)"></i>
<i style="background:linear-gradient(#0fb,#0cf,#0ff,#0fe,#0fb,#0ff,#0f8,#0f6,#0f4,#0f1,#2f0,#4f0,#6f0,#af0,#cf0,#ef0,#ff0,#fe0,#ef0,#ef0,#fe0,#ff0,#ef0,#ff0,#ff0,#ef0,#bf0,#8f0,#5f0,#4f0,#1f0,#1f0,#0f4,#0f6,#0f9,#0fe,#0fc,#0ef,#0fe,#1f0,#4f0,#1f0,#3f0,#2f0,#3f0,#1f0,#0f0,#0f0,#0fb,#09f,#04f,#05f,#20f,#07f,#60f,#70f,#50f,#50f,#80f,#80f)"></i>
<i style="background:linear-gradient(#09f,#0cf,#0ef,#0bf,#0fc,#0ff,#0f7,#0f8,#0f3,#0f1,#1f0,#4f0,#5f0,#9f0,#cf0,#df0,#ef0,#ff0,#ff0,#fe0,#ef0,#fe0,#ef0,#ff0,#ff0,#df0,#9f0,#9f0,#4f0,#3f0,#1f0,#3f0,#0f3,#0f8,#0fa,#0fa,#0fb,#0fd,#0ff,#0f1,#3f0,#3f0,#2f0,#2f0,#1f0,#0f0,#0f0,#0f2,#0fc,#0af,#0ef,#00f,#07f,#40f,#000,#40f,#50f,#70f,#20f,#80f)"></i>
<i style="background:linear-gradient(#0ef,#0df,#0fe,#0f8,#0fd,#0df,#0fd,#0f7,#0f2,#0f4,#0f0,#3f0,#4f0,#7f0,#9f0,#ef0,#df0,#cf0,#df0,#df0,#ef0,#ef0,#ff0,#cf0,#df0,#cf0,#af0,#7f0,#4f0,#2f0,#0f1,#0f1,#0f4,#0f9,#0fb,#0fb,#0ff,#0fe,#0ef,#0f0,#0f0,#3f0,#0f0,#1f0,#0f0,#0f1,#0f1,#0f3,#0fd,#0df,#09f,#30f,#04f,#10f,#20f,#10f,#80f,#80f,#80f,#80f)"></i>
<i style="background:linear-gradient(#0fe,#0cf,#0ff,#0ff,#0cf,#0ff,#0fd,#0f8,#0f4,#0f3,#0f3,#0f0,#3f0,#5f0,#8f0,#af0,#af0,#cf0,#bf0,#df0,#bf0,#bf0,#bf0,#bf0,#bf0,#9f0,#8f0,#5f0,#3f0,#0f0,#0f1,#0f1,#0f4,#0f9,#0fb,#0ff,#0fd,#0ff,#0ef,#0f2,#0f0,#0f0,#0f1,#0f2,#0f3,#0f4,#0f4,#0f4,#0fc,#04f,#02f,#30f,#20f,#10f,#30f,#10f,#50f,#60f,#40f,#80f)"></i>
<i style="background:linear-gradient(#08f,#07f,#0f6,#0fb,#0ff,#0fb,#0f8,#0f8,#0f2,#0f2,#0f0,#1f0,#4f0,#7f0,#af0,#df0,#df0,#df0,#ff0,#df0,#ef0,#ef0,#df0,#ef0,#ef0,#cf0,#cf0,#7f0,#5f0,#3f0,#0f1,#0f0,#0f2,#0f8,#0fc,#0f9,#0fe,#0fd,#0df,#0f2,#0f1,#0f0,#0f0,#0f1,#0f2,#0f3,#0f3,#0f4,#0fa,#05f,#06f,#40f,#20f,#30f,#10f,#30f,#70f,#80f,#80f,#60f)"></i>
<i style="background:linear-gradient(#0ef,#08f,#0bf,#0af,#0cf,#0ef,#0fd,#0f7,#0f4,#0f2,#0f2,#0f1,#5f0,#4f0,#8f0,#bf0,#df0,#af0,#df0,#cf0,#cf0,#cf0,#cf0,#bf0,#cf0,#af0,#af0,#7f0,#5f0,#2f0,#0f1,#0f0,#0f5,#0f9,#0fb,#0fc,#0fc,#0cf,#0ff,#0f3,#0f0,#0f2,#0f0,#0f1,#0f1,#0f5,#0f5,#0f4,#0fa,#0bf,#05f,#20f,#20f,#00f,#20f,#30f,#80f,#00f,#80f,#50f)"></i>
<i style="background:linear-gradient(#0ff,#0df,#0ff,#0fd,#0f9,#0ff,#0bf,#0f7,#0f3,#0f0,#0f0,#2f0,#5f0,#9f0,#bf0,#ef0,#ef0,#ff0,#df0,#ff0,#ff0,#df0,#ef0,#ef0,#ef0,#ff0,#cf0,#9f0,#5f0,#4f0,#2f0,#0f0,#0f4,#0f7,#0fa,#0fb,#0fa,#0ff,#0af,#0f2,#1f0,#1f0,#1f0,#2f0,#0f1,#0f0,#0f3,#0f3,#0fd,#09f,#0ef,#10f,#50f,#00f,#80f,#30f,#40f,#70f,#70f,#50f)"></i>
<i style="background:linear-gradient(#0bf,#0fe,#0f8,#0ff,#0fb,#0df,#0f9,#0f8,#0f4,#0f2,#1f0,#2f0,#3f0,#6f0,#af0,#cf0,#ef0,#ff0,#ef0,#ff0,#df0,#df0,#df0,#ff0,#ef0,#df0,#bf0,#8f0,#6f0,#2f0,#0f1,#0f0,#0f3,#0f8,#0fb,#0f9,#0cf,#0fe,#0bf,#0f1,#2f0,#1f0,#3f0,#2f0,#0f1,#0f1,#0f1,#0f3,#0fc,#0df,#0df,#20f,#10f,#10f,#000,#70f,#10f,#50f,#80f,#40f)"></i>
<i style="background:linear-gradient(#0df,#0fc,#0ff,#0fb,#0fc,#0fb,#0fa,#0f6,#0f2,#0f2,#2f0,#3f0,#5f0,#9f0,#df0,#df0,#fe0,#ef0,#ff0,#ff0,#ff0,#ff0,#fe0,#ef0,#ef0,#df0,#cf0,#9f0,#7f0,#4f0,#1f0,#0f0,#0f3,#0f7,#0f9,#0fd,#0fb,#0ef,#0fe,#1f0,#5f0,#2f0,#4f0,#0f0,#2f0,#0f0,#0f1,#0f0,#0fc,#09f,#0bf,#00f,#01f,#04f,#40f,#30f,#50f,#60f,#60f,#80f)"></i>
<i style="background:linear-gradient(#0fe,#0f7,#0ef,#0fd,#0fe,#0ef,#0ef,#0f5,#0f8,#0f7,#0f6,#0f3,#0f2,#2f0,#6f0,#8f0,#9f0,#af0,#af0,#cf0,#af0,#bf0,#af0,#af0,#8f0,#7f0,#5f0,#3f0,#0f1,#0f4,#0f5,#0f6,#0f8,#0fc,#0ff,#0ef,#0ff,#0df,#09f,#0f0,#3f0,#2f0,#4f0,#1f0,#1f0,#1f0,#1f0,#0f0,#0fb,#0cf,#09f,#20f,#20f,#20f,#60f,#40f,#000,#40f,#60f,#70f)"></i>
<i style="background:linear-gradient(#0df,#0df,#07f,#07f,#0df,#08f,#0fd,#0ef,#0fa,#0f7,#0f7,#0f6,#0f5,#0f0,#5f0,#6f0,#9f0,#cf0,#df0,#bf0,#cf0,#cf0,#cf0,#9f0,#7f0,#4f0,#4f0,#2f0,#1f0,#0f3,#0f6,#0f7,#0f9,#0fd,#0fb,#0f9,#0ef,#0cf,#0df,#2f0,#4f0,#2f0,#3f0,#2f0,#1f0,#1f0,#0f1,#0f2,#0fa,#0af,#05f,#01f,#10f,#10f,#30f,#50f,#80f,#20f,#80f,#50f)"></i>
<i style="background:linear-gradient(#0cf,#0bf,#0fb,#0fa,#0cf,#0f9,#0fd,#0f7,#0f3,#0f0,#0f0,#2f0,#4f0,#7f0,#af0,#ef0,#fd0,#fb0,#f90,#f70,#fa0,#f90,#fb0,#fe0,#fe0,#ef0,#df0,#9f0,#7f0,#3f0,#0f0,#0f1,#0f3,#0f7,#0fa,#0ff,#0fe,#0fe,#0ff,#0f1,#2f0,#0f0,#3f0,#1f0,#0f1,#1f0,#0f3,#0f2,#0fc,#0af,#06f,#02f,#40f,#30f,#10f,#01f,#60f,#60f,#80f,#80f)"></i>
<i style="background:linear-gradient(#0df,#0ff,#0fc,#0af,#0f7,#0f9,#0fd,#0f6,#0f2,#0f2,#0f1,#2f0,#4f0,#6f0,#af0,#cf0,#fe0,#fa0,#f90,#f90,#f90,#f90,#fc0,#fd0,#fe0,#cf0,#df0,#af0,#5f0,#3f0,#1f0,#1f0,#0f2,#0f6,#0fa,#0fb,#0fb,#0ef,#0af,#0f2,#1f0,#0f0,#1f0,#1f0,#0f1,#1f0,#0f3,#0f4,#0ef,#0fd,#0cf,#50f,#08f,#50f,#40f,#60f,#30f,#60f,#80f,#80f)"></i>
<i style="background:linear-gradient(#0ff,#0fe,#0fc,#0fa,#0fb,#0fd,#0f8,#0f7,#0f2,#0f3,#1f0,#0f0,#4f0,#6f0,#af0,#cf0,#fe0,#fc0,#fb0,#fa0,#fb0,#fa0,#fb0,#fd0,#df0,#df0,#bf0,#8f0,#7f0,#5f0,#1f0,#0f1,#0f3,#0f6,#0fa,#0fc,#0df,#0fc,#0df,#0f3,#1f0,#0f1,#0f1,#0f0,#0f2,#0f1,#0f3,#0f5,#0fd,#0bf,#0af,#10f,#50f,#50f,#80f,#10f,#80f,#000,#40f,#20f)"></i>
<i style="background:linear-gradient(#0fb,#0ff,#0ef,#0ff,#0fe,#0fe,#0ef,#0f6,#0f2,#0f2,#2f0,#2f0,#3f0,#8f0,#bf0,#cf0,#fd0,#fa0,#f90,#f90,#f90,#fa0,#fc0,#fe0,#fe0,#cf0,#cf0,#af0,#7f0,#5f0,#0f0,#0f0,#0f2,#0f6,#0f9,#0fd,#0fb,#0cf,#0fc,#0f1,#1f0,#0f0,#1f0,#1f0,#0f0,#0f1,#0f2,#0f4,#0fd,#0af,#09f,#10f,#03f,#50f,#70f,#50f,#50f,#000,#50f,#80f)"></i>
<i style="background:linear-gradient(#0fd,#0bf,#0fd,#0bf,#0fb,#0fd,#0df,#0f5,#0f0,#0f1,#1f0,#2f0,#5f0,#9f0,#af0,#fe0,#fc0,#fa0,#f70,#f80,#f70,#f80,#fb0,#fb0,#fc0,#ff0,#df0,#cf0,#9f0,#6f0,#1f0,#0f1,#0f0,#0f5,#0f9,#0fd,#0fa,#0fe,#0fe,#1f0,#1f0,#2f0,#2f0,#2f0,#0f0,#0f2,#0f0,#0f1,#0fd,#0af,#09f,#20f,#10f,#05f,#30f,#50f,#60f,#80f,#30f,#000)"></i>
<i style="background:linear-gradient(#0fd,#0ef,#0ff,#0fc,#0f9,#0ef,#0fc,#0f8,#0f2,#0f3,#2f0,#3f0,#5f0,#6f0,#bf0,#cf0,#ff0,#fc0,#fc0,#fa0,#f90,#fa0,#f90,#fd0,#fe0,#ff0,#bf0,#9f0,#8f0,#5f0,#2f0,#1f0,#0f1,#0f7,#0fb,#0fc,#0fd,#0ff,#0fe,#1f0,#2f0,#3f0,#2f0,#4f0,#1f0,#2f0,#0f0,#0f2,#0fd,#0fd,#0df,#30f,#40f,#00f,#50f,#30f,#80f,#50f,#80f,#60f)"></i>
<i style="background:linear-gradient(#0fa,#0ef,#0fc,#0fe,#0f9,#0f9,#0ef,#0f6,#0f3,#0f0,#2f0,#3f0,#5f0,#8f0,#bf0,#ef0,#fd0,#fc0,#fc0,#fb0,#fb0,#fc0,#fb0,#fd0,#ff0,#ff0,#df0,#bf0,#9f0,#5f0,#3f0,#2f0,#0f1,#0f5,#0f9,#0f8,#0fb,#0fc,#0ef,#2f0,#4f0,#5f0,#3f0,#4f0,#3f0,#2f0,#0f0,#0f0,#0fb,#07f,#02f,#10f,#40f,#10f,#10f,#00f,#60f,#80f,#80f,#40f)"></i>
<i style="background:linear-gradient(#08f,#09f,#0ff,#0cf,#0fb,#0f8,#0f8,#0f8,#0f2,#0f1,#0f1,#3f0,#4f0,#5f0,#af0,#df0,#ff0,#fe0,#ff0,#ff0,#ff0,#ff0,#fd0,#fe0,#ff0,#df0,#cf0,#af0,#9f0,#6f0,#1f0,#1f0,#0f1,#0f5,#0fa,#0fe,#0fc,#0ff,#0fe,#1f0,#3f0,#4f0,#3f0,#4f0,#1f0,#2f0,#0f1,#0f2,#0fa,#0cf,#05f,#10f,#40f,#60f,#60f,#000,#50f,#50f,#80f,#50f)"></i>
<i style="background:linear-gradient(#08f,#09f,#0fd,#0cf,#0fb,#0f9,#0fe,#0f8,#0f4,#0f1,#0f0,#1f0,#2f0,#6f0,#9f0,#bf0,#df0,#df0,#ef0,#ff0,#cf0,#df0,#df0,#ef0,#df0,#ef0,#bf0,#8f0,#6f0,#4f0,#0f0,#0f1,#0f3,#0f5,#0f9,#0fc,#0fe,#0fc,#0df,#0f1,#3f0,#1f0,#3f0,#4f0,#1f0,#0f0,#0f2,#0f1,#0fe,#0cf,#40f,#10f,#30f,#30f,#50f,#00f,#30f,#00f,#70f,#50f)"></i>
<i style="background:linear-gradient(#05f,#0fc,#0af,#0fd,#0ff,#0fc,#0cf,#0f8,#0f4,#0f3,#0f0,#1f0,#3f0,#6f0,#8f0,#af0,#cf0,#df0,#cf0,#df0,#cf0,#cf0,#df0,#ef0,#ef0,#df0,#bf0,#9f0,#7f0,#4f0,#0f1,#0f1,#0f2,#0f7,#0fb,#0fd,#0ef,#0fd,#0ef,#0f2,#1f0,#3f0,#2f0,#2f0,#0f3,#0f1,#0f3,#0f1,#0fc,#0cf,#40f,#30f,#01f,#30f,#20f,#40f,#60f,#20f,#30f,#80f)"></i>
<i style="background:linear-gradient(#0fc,#07f,#0ff,#0bf,#0f8,#0fb,#0fb,#0f5,#0f1,#0f0,#2f0,#4f0,#7f0,#7f0,#bf0,#ef0,#fd0,#fe0,#fd0,#fe0,#fe0,#fc0,#fe0,#fe0,#fd0,#fe0,#fe0,#df0,#af0,#8f0,#1f0,#2f0,#0f0,#0f5,#0f8,#0f7,#0fe,#0fa,#0fb,#0f1,#3f0,#2f0,#1f0,#2f0,#0f0,#1f0,#0f1,#0f1,#0fe,#0fa,#10f,#07f,#10f,#10f,#60f,#20f,#50f,#20f,#60f,#000)"></i>
<i style="background:linear-gradient(#06f,#0ff,#05f,#0df,#0f9,#0fa,#0bf,#0f7,#0f2,#0f1,#0f0,#4f0,#5f0,#9f0,#bf0,#ef0,#fe0,#ff0,#fe0,#ff0,#ff0,#fe0,#fe0,#fe0,#fe0,#ff0,#ff0,#df0,#9f0,#6f0,#1f0,#0f0,#0f1,#0f5,#0f8,#0f9,#0f9,#0fb,#0fc,#0f2,#2f0,#1f0,#1f0,#1f0,#0f1,#0f1,#0f2,#0f4,#0fb,#09f,#05f,#03f,#20f,#30f,#40f,#20f,#20f,#60f,#80f,#70f)"></i>
<i style="background:linear-gradient(#0ef,#0ef,#0ff,#0f7,#0f9,#0f6,#0f5,#0f6,#0f2,#0f2,#0f0,#1f0,#2f0,#6f0,#cf0,#ff0,#ff0,#ff0,#ff0,#fe0,#fe0,#fe0,#ff0,#fd0,#fe0,#ff0,#df0,#cf0,#af0,#7f0,#4f0,#2f0,#0f1,#0f5,#0fa,#0fb,#0fa,#0fe,#0fd,#0f0,#2f0,#2f0,#1f0,#0f0,#0f1,#0f0,#0f2,#0f5,#0fa,#09f,#08f,#10f,#40f,#40f,#01f,#01f,#50f,#60f,#70f,#000)"></i>
<i style="background:linear-gradient(#0fd,#0fa,#0fc,#0df,#0cf,#0ef,#0fb,#0f8,#0f3,#0f0,#0f2,#2f0,#5f0,#8f0,#9f0,#ef0,#ff0,#fe0,#ff0,#ff0,#fe0,#ef0,#ef0,#ff0,#fe0,#ff0,#cf0,#bf0,#af0,#7f0,#4f0,#0f0,#1f0,#0f5,#0fa,#0fc,#0fb,#0fc,#0ef,#0f1,#1f0,#1f0,#2f0,#2f0,#2f0,#0f0,#0f2,#0f2,#0fa,#0bf,#40f,#06f,#60f,#70f,#60f,#70f,#40f,#40f,#80f,#20f)"></i>
<i style="background:linear-gradient(#09f,#0fe,#0ef,#0fd,#0fb,#0fd,#0f9,#0f5,#0f3,#0f3,#0f0,#1f0,#4f0,#5f0,#af0,#ef0,#ef0,#ff0,#df0,#ef0,#ff0,#ef0,#fe0,#ef0,#ef0,#ef0,#cf0,#cf0,#8f0,#5f0,#0f0,#0f2,#0f1,#0f6,#0f9,#0f9,#0fc,#0fd,#0df,#1f0,#2f0,#3f0,#3f0,#2f0,#1f0,#0f2,#0f0,#0f3,#0fb,#06f,#20f,#03f,#00f,#40f,#10f,#50f,#50f,#80f,#40f,#40f)"></i>
<i style="background:linear-gradient(#0bf,#0bf,#0f7,#0fd,#0fb,#0ef,#0f9,#0f7,#0f4,#0f2,#0f1,#1f0,#3f0,#6f0,#9f0,#bf0,#cf0,#cf0,#df0,#ff0,#df0,#ef0,#df0,#ef0,#ef0,#ef0,#cf0,#bf0,#8f0,#7f0,#1f0,#0f1,#0f0,#0f7,#0f9,#0f9,#0fb,#0fe,#0df,#1f0,#3f0,#2f0,#4f0,#4f0,#0f0,#1f0,#1f0,#0f1,#0fb,#02f,#00f,#10f,#04f,#10f,#02f,#20f,#50f,#60f,#60f,#40f)"></i>
<i style="background:linear-gradient(#0df,#0fb,#0bf,#0fb,#0fb,#0df,#0fa,#0f7,#0f2,#1f0,#0f1,#2f0,#3f0,#4f0,#9f0,#cf0,#ff0,#ef0,#df0,#ff0,#ef0,#ff0,#ff0,#ff0,#ef0,#df0,#df0,#bf0,#8f0,#7f0,#2f0,#0f2,#1f0,#0f7,#0fa,#0f9,#0fb,#0fa,#0ef,#0f0,#3f0,#4f0,#5f0,#4f0,#1f0,#2f0,#0f0,#0f0,#0fe,#01f,#04f,#60f,#10f,#01f,#70f,#70f,#50f,#50f,#80f,#30f)"></i>
<i style="background:linear-gradient(#0fe,#0bf,#0cf,#0fd,#05f,#0fd,#0df,#0fa,#0f5,#0f4,#0f5,#0f2,#0f0,#2f0,#5f0,#9f0,#af0,#bf0,#bf0,#bf0,#bf0,#cf0,#af0,#bf0,#bf0,#af0,#bf0,#7f0,#5f0,#2f0,#0f2,#0f4,#0f3,#0f9,#0f9,#0fe,#0df,#0df,#0ff,#1f0,#3f0,#4f0,#3f0,#1f0,#4f0,#0f0,#0f1,#0f1,#0fc,#04f,#10f,#30f,#03f,#40f,#30f,#50f,#40f,#80f,#50f,#80f)"></i>
<i style="background:linear-gradient(#08f,#0f8,#0bf,#06f,#09f,#0f9,#0f8,#0f7,#0f3,#0f1,#1f0,#1f0,#4f0,#5f0,#9f0,#cf0,#ff0,#ef0,#fe0,#ef0,#ff0,#ff0,#ff0,#ff0,#cf0,#ef0,#cf0,#cf0,#9f0,#7f0,#1f0,#0f0,#0f2,#0f6,#0f9,#0fd,#0ef,#0fd,#0fd,#0f1,#2f0,#2f0,#2f0,#2f0,#1f0,#0f0,#0f3,#0f2,#0ef,#0df,#01f,#30f,#20f,#20f,#10f,#80f,#80f,#30f,#50f,#80f)"></i>
<i style="background:linear-gradient(#0ff,#0fa,#0df,#0df,#0fd,#0df,#0fc,#0f6,#0f2,#0f1,#0f2,#0f0,#3f0,#6f0,#9f0,#cf0,#cf0,#ff0,#ef0,#ef0,#df0,#ff0,#df0,#ef0,#ff0,#ef0,#bf0,#af0,#9f0,#6f0,#1f0,#0f2,#0f0,#0f5,#0f9,#0fd,#0fb,#0ef,#0fe,#0f1,#0f1,#0f0,#1f0,#0f0,#0f0,#0f1,#0f2,#0f4,#0f8,#05f,#07f,#30f,#20f,#40f,#30f,#40f,#70f,#70f,#40f,#80f)"></i>
<i style="background:linear-gradient(#0fe,#0df,#0cf,#0fb,#0cf,#0fa,#0ff,#0f7,#0f3,#0f3,#0f1,#0f0,#2f0,#3f0,#8f0,#af0,#cf0,#cf0,#cf0,#df0,#df0,#df0,#cf0,#cf0,#cf0,#cf0,#af0,#8f0,#8f0,#3f0,#0f1,#0f4,#0f1,#0f8,#0fb,#0fc,#0fc,#0cf,#0ef,#0f3,#1f0,#0f0,#1f0,#0f0,#0f1,#0f2,#0f2,#0f4,#0fd,#09f,#30f,#30f,#01f,#20f,#20f,#20f,#80f,#80f,#70f,#60f)"></i>
<i style="background:linear-gradient(#0df,#0fe,#08f,#0bf,#0fe,#0fc,#0af,#0fa,#0f4,#0f4,#0f3,#0f1,#0f0,#2f0,#5f0,#8f0,#af0,#af0,#9f0,#9f0,#af0,#cf0,#af0,#af0,#bf0,#9f0,#9f0,#6f0,#6f0,#4f0,#0f1,#0f2,#0f1,#0f6,#0fd,#0ff,#0ef,#0fe,#0fe,#0f4,#0f1,#0f0,#0f1,#0f2,#0f4,#0f4,#0f5,#0f5,#0f8,#01f,#10f,#10f,#30f,#30f,#80f,#40f,#40f,#80f,#000,#70f)"></i>
<i style="background:linear-gradient(#0ef,#0ef,#0bf,#0f8,#0ff,#0fc,#0f7,#0f8,#0f2,#0f1,#0f0,#0f1,#3f0,#4f0,#9f0,#9f0,#df0,#cf0,#bf0,#cf0,#ef0,#df0,#cf0,#bf0,#bf0,#cf0,#cf0,#af0,#9f0,#6f0,#0f1,#0f2,#0f0,#0f9,#0fb,#0fa,#0fe,#0fe,#0fb,#0f0,#1f0,#1f0,#0f0,#1f0,#0f1,#0f1,#0f4,#0f4,#0fc,#0bf,#02f,#10f,#70f,#30f,#80f,#20f,#50f,#10f,#70f,#80f)"></i>
<i style="background:linear-gradient(#0fd,#09f,#0f9,#0ff,#0fc,#0f9,#0fd,#0f9,#0f6,#0f4,#0f4,#0f1,#0f0,#1f0,#3f0,#8f0,#9f0,#af0,#af0,#bf0,#af0,#bf0,#af0,#bf0,#af0,#af0,#8f0,#6f0,#5f0,#4f0,#0f2,#0f4,#0f4,#0f9,#0df,#0f8,#0fc,#0fe,#0af,#0f1,#1f0,#0f0,#2f0,#0f1,#0f0,#0f1,#0f4,#0f3,#0fc,#09f,#05f,#00f,#30f,#80f,#40f,#80f,#60f,#30f,#60f,#60f)"></i>
<i style="background:linear-gradient(#0ef,#0fd,#0df,#0af,#0df,#0ef,#0fe,#0f7,#0f4,#0f4,#0f2,#0f1,#0f0,#3f0,#7f0,#8f0,#cf0,#bf0,#cf0,#bf0,#9f0,#bf0,#bf0,#cf0,#af0,#bf0,#bf0,#7f0,#5f0,#4f0,#0f1,#0f2,#0f2,#0f8,#0fb,#0fd,#0f9,#0ff,#0fe,#1f0,#3f0,#2f0,#2f0,#3f0,#1f0,#0f1,#0f1,#0f1,#0fb,#04f,#20f,#00f,#04f,#10f,#50f,#00f,#80f,#80f,#80f,#80f)"></i>
<i style="background:linear-gradient(#0cf,#0ef,#0fd,#0fe,#0bf,#0f8,#0af,#0f9,#0f5,#0f3,#0f2,#0f3,#0f0,#3f0,#5f0,#9f0,#af0,#cf0,#af0,#bf0,#bf0,#af0,#9f0,#af0,#af0,#8f0,#9f0,#6f0,#4f0,#3f0,#0f3,#0f3,#0f4,#0f8,#0fb,#0ef,#0fb,#0ef,#0df,#0f0,#1f0,#2f0,#1f0,#2f0,#0f0,#0f1,#0f1,#0f1,#0fc,#0af,#10f,#00f,#40f,#50f,#60f,#60f,#70f,#40f,#30f,#20f)"></i>
<i style="background:linear-gradient(#0cf,#0fd,#09f,#0f8,#0fc,#0ff,#0f8,#0f7,#0f3,#0f3,#0f2,#0f0,#2f0,#3f0,#6f0,#bf0,#df0,#ef0,#cf0,#bf0,#df0,#df0,#cf0,#cf0,#cf0,#cf0,#cf0,#af0,#7f0,#5f0,#0f1,#0f3,#0f0,#0f6,#0fc,#0fb,#0ff,#0ff,#0ff,#0f0,#2f0,#2f0,#3f0,#1f0,#1f0,#0f0,#0f2,#0f3,#0f8,#04f,#08f,#00f,#50f,#20f,#50f,#60f,#50f,#80f,#80f,#80f)"></i>
<i style="background:linear-gradient(#0fe,#0fd,#0ef,#0cf,#0ef,#0fc,#0fc,#0f7,#0f4,#0f1,#0f3,#0f0,#2f0,#5f0,#7f0,#af0,#cf0,#df0,#cf0,#cf0,#bf0,#bf0,#cf0,#df0,#bf0,#cf0,#bf0,#bf0,#7f0,#4f0,#0f0,#0f2,#0f0,#0f7,#0fa,#0fd,#0fc,#0df,#0ef,#0f2,#0f0,#2f0,#2f0,#2f0,#1f0,#0f2,#0f3,#0f2,#0fa,#0ef,#00f,#40f,#00f,#30f,#30f,#50f,#30f,#70f,#80f,#60f)"></i>
<i style="background:linear-gradient(#0bf,#0fc,#0ff,#0fe,#0af,#0af,#0f9,#0f6,#0f3,#0f4,#0f4,#0f1,#0f0,#1f0,#5f0,#7f0,#af0,#bf0,#bf0,#af0,#bf0,#cf0,#bf0,#9f0,#cf0,#bf0,#af0,#7f0,#8f0,#3f0,#0f1,#0f3,#0f3,#0f6,#0fc,#0fd,#0fe,#0fe,#0ef,#0f4,#1f0,#0f0,#1f0,#0f1,#0f3,#0f2,#0f2,#0f7,#0fc,#0df,#20f,#00f,#20f,#80f,#20f,#20f,#70f,#40f,#40f,#80f)"></i>
<i style="background:linear-gradient(#0ff,#0fd,#0df,#0bf,#07f,#0fa,#0fc,#0f8,#0f3,#0f4,#0f3,#0f1,#2f0,#5f0,#6f0,#9f0,#af0,#bf0,#cf0,#bf0,#cf0,#bf0,#bf0,#cf0,#bf0,#bf0,#af0,#8f0,#5f0,#4f0,#0f1,#0f4,#0f2,#0f9,#0fe,#0fc,#0fc,#0ef,#0cf,#0f2,#0f1,#0f0,#0f0,#0f0,#0f3,#0f5,#0f5,#0f7,#0fb,#07f,#10f,#08f,#40f,#10f,#00f,#80f,#80f,#80f,#50f,#60f)"></i>
<i style="background:linear-gradient(#0ef,#0df,#0df,#0df,#0f2,#0fd,#0ff,#0f8,#0f3,#0f2,#0f0,#1f0,#2f0,#6f0,#8f0,#df0,#df0,#ef0,#ef0,#df0,#ef0,#ef0,#cf0,#ef0,#df0,#cf0,#bf0,#bf0,#6f0,#6f0,#1f0,#0f1,#0f2,#0f5,#0fc,#0f9,#0fb,#0fc,#0ef,#0f3,#1f0,#0f0,#0f0,#0f1,#0f3,#0f1,#0f3,#0f5,#0fc,#0ff,#02f,#00f,#00f,#10f,#00f,#10f,#000,#40f,#30f,#30f)"></i>
<i style="background:linear-gradient(#0fc,#0ef,#0ef,#0ff,#0ef,#0ff,#0f9,#0f8,#0f3,#0f1,#1f0,#1f0,#4f0,#4f0,#af0,#bf0,#df0,#bf0,#df0,#ef0,#df0,#bf0,#df0,#df0,#ef0,#cf0,#9f0,#8f0,#7f0,#6f0,#0f0,#0f1,#0f3,#0f7,#0fb,#0fa,#0fd,#0fc,#0ef,#0f2,#1f0,#0f0,#1f0,#1f0,#0f1,#0f2,#0f2,#0f4,#0fe,#09f,#05f,#30f,#02f,#02f,#60f,#30f,#80f,#80f,#70f,#60f)"></i>
<i style="background:linear-gradient(#0af,#0ff,#0ff,#0fd,#0ff,#0df,#0df,#0f6,#0f3,#0f1,#0f0,#2f0,#5f0,#5f0,#9f0,#cf0,#ef0,#ef0,#ef0,#ff0,#ef0,#ef0,#ef0,#ef0,#cf0,#df0,#df0,#bf0,#7f0,#5f0,#1f0,#0f1,#1f0,#0f8,#0f9,#0fe,#0fc,#0ff,#0fd,#1f0,#2f0,#3f0,#3f0,#1f0,#2f0,#0f1,#0f0,#0f1,#0fe,#0bf,#02f,#01f,#60f,#50f,#30f,#70f,#60f,#000,#60f,#60f)"></i>
<i style="background:linear-gradient(#0df,#0df,#0fd,#0fe,#08f,#0fd,#0cf,#0f8,#0f4,#0f3,#0f1,#0f2,#3f0,#4f0,#7f0,#8f0,#bf0,#cf0,#bf0,#cf0,#cf0,#bf0,#cf0,#ef0,#bf0,#bf0,#9f0,#8f0,#6f0,#4f0,#0f1,#0f2,#0f3,#0f9,#0f9,#0fe,#0ef,#0cf,#0df,#1f0,#2f0,#2f0,#3f0,#3f0,#2f0,#1f0,#0f1,#0f2,#0fd,#0af,#0cf,#10f,#30f,#80f,#30f,#70f,#000,#60f,#80f,#20f)"></i>
<i style="background:linear-gradient(#0ff,#0df,#0fb,#0fe,#0cf,#0f8,#0fb,#0f8,#0f1,#0f1,#1f0,#1f0,#4f0,#7f0,#af0,#cf0,#ef0,#ff0,#ff0,#ff0,#ff0,#ff0,#fe0,#fe0,#fe0,#ef0,#cf0,#bf0,#8f0,#6f0,#1f0,#0f0,#1f0,#0f6,#0fa,#0f7,#0fc,#0f9,#0ff,#0f0,#4f0,#4f0,#5f0,#4f0,#1f0,#1f0,#0f0,#0f2,#0fb,#09f,#01f,#40f,#30f,#30f,#40f,#60f,#10f,#40f,#80f,#70f)"></i>
<i style="background:linear-gradient(#0ff,#0f9,#0af,#0f6,#0fe,#0fb,#0f8,#0f7,#0f3,#0f1,#1f0,#2f0,#5f0,#8f0,#bf0,#df0,#ff0,#ef0,#fe0,#ef0,#fe0,#ef0,#fe0,#fe0,#ef0,#ef0,#ef0,#bf0,#8f0,#4f0,#1f0,#0f1,#1f0,#0f7,#0f9,#0fd,#0ef,#0fd,#0ef,#0f0,#4f0,#2f0,#3f0,#4f0,#1f0,#1f0,#0f0,#0f0,#0fb,#04f,#07f,#02f,#40f,#10f,#80f,#10f,#70f,#60f,#60f,#80f)"></i>
<i style="background:linear-gradient(#0fc,#0fe,#07f,#0bf,#0fd,#0fe,#0f7,#0f7,#0f4,#0f2,#0f1,#2f0,#2f0,#8f0,#af0,#df0,#ff0,#df0,#ff0,#fe0,#ff0,#ef0,#ff0,#ff0,#ff0,#ef0,#ef0,#9f0,#9f0,#5f0,#1f0,#0f0,#0f2,#0f7,#0f8,#0fd,#0fe,#0fb,#0df,#0f1,#3f0,#2f0,#3f0,#2f0,#0f1,#0f0,#0f0,#0f3,#0fc,#09f,#30f,#20f,#30f,#01f,#01f,#30f,#000,#60f,#80f,#80f)"></i>
<i style="background:linear-gradient(#0ff,#0f9,#0ef,#08f,#0fb,#0ef,#0fb,#0f7,#0f1,#0f0,#1f0,#3f0,#6f0,#8f0,#cf0,#ef0,#fe0,#ef0,#ef0,#ff0,#ff0,#ef0,#fe0,#ff0,#fe0,#ef0,#ef0,#cf0,#af0,#6f0,#1f0,#0f1,#0f0,#0f7,#0fc,#0fd,#0f9,#0df,#0ff,#0f1,#2f0,#1f0,#1f0,#1f0,#0f0,#0f2,#0f0,#0f3,#0fa,#0af,#20f,#01f,#02f,#30f,#40f,#30f,#10f,#80f,#60f,#80f)"></i>
<i style="background:linear-gradient(#0fe,#0af,#0df,#0fe,#0cf,#0bf,#0fe,#0f9,#0f6,#0f6,#0f5,#0f1,#0f1,#2f0,#5f0,#8f0,#af0,#cf0,#cf0,#af0,#bf0,#cf0,#bf0,#af0,#af0,#9f0,#8f0,#7f0,#4f0,#2f0,#0f3,#0f4,#0f6,#0f9,#0f9,#0ff,#0fe,#0bf,#0df,#0f1,#0f0,#0f0,#1f0,#0f1,#0f1,#0f1,#0f3,#0f4,#0fb,#04f,#03f,#50f,#10f,#40f,#10f,#40f,#30f,#80f,#50f,#40f)"></i>
<i style="background:linear-gradient(#0f9,#0ef,#0fc,#0fe,#0fc,#0fe,#0fa,#0f6,#0f2,#0f0,#1f0,#3f0,#4f0,#8f0,#bf0,#ff0,#fd0,#fe0,#fc0,#fe0,#ff0,#ff0,#ff0,#fe0,#ff0,#ef0,#ef0,#bf0,#af0,#5f0,#2f0,#0f0,#0f0,#0f6,#0fb,#0fb,#0ff,#0fb,#0af,#0f1,#4f0,#2f0,#2f0,#0f0,#0f1,#0f1,#0f1,#0f3,#0fb,#0af,#01f,#20f,#05f,#60f,#30f,#50f,#10f,#000,#50f,#80f)"></i>
<i style="background:linear-gradient(#0fd,#0df,#0fb,#0af,#0f9,#0bf,#0fb,#0f5,#0f2,#0f0,#2f0,#3f0,#5f0,#8f0,#bf0,#cf0,#fe0,#fd0,#ff0,#ff0,#ef0,#ff0,#fe0,#fe0,#fe0,#ef0,#df0,#bf0,#9f0,#6f0,#1f0,#0f0,#0f0,#0f5,#0f9,#0f8,#0ef,#0fd,#0ff,#0f2,#4f0,#2f0,#4f0,#2f0,#2f0,#1f0,#0f2,#0f2,#0f9,#0cf,#20f,#40f,#08f,#80f,#10f,#40f,#40f,#80f,#80f,#30f)"></i>
<i style="background:linear-gradient(#09f,#0cf,#0bf,#0f9,#0df,#0ef,#0ff,#0fb,#0f7,#0f4,#0f2,#0f0,#0f0,#4f0,#7f0,#9f0,#cf0,#bf0,#bf0,#cf0,#cf0,#af0,#cf0,#bf0,#cf0,#bf0,#9f0,#6f0,#5f0,#1f0,#0f2,#0f4,#0f4,#0f8,#0fb,#0ef,#0fa,#0ef,#0ef,#1f0,#4f0,#3f0,#5f0,#1f0,#1f0,#3f0,#1f0,#0f1,#0fa,#06f,#0df,#50f,#08f,#40f,#50f,#70f,#70f,#40f,#70f,#70f)"></i>
<i style="background:linear-gradient(#09f,#0df,#0f7,#0df,#0fe,#0f9,#0f9,#0f6,#0f2,#0f1,#1f0,#2f0,#5f0,#8f0,#bf0,#ff0,#fe0,#ff0,#fe0,#ff0,#fd0,#ff0,#fe0,#df0,#fe0,#df0,#ef0,#cf0,#5f0,#6f0,#1f0,#0f1,#0f1,#0f7,#0fa,#0f8,#0fc,#0fe,#0ef,#1f0,#4f0,#4f0,#4f0,#4f0,#3f0,#1f0,#0f1,#0f1,#0fa,#03f,#10f,#30f,#01f,#10f,#40f,#30f,#50f,#000,#50f,#000)"></i>
<i style="background:linear-gradient(#0fe,#0ef,#0fe,#0af,#09f,#0fd,#0fd,#0f7,#0f4,#0f0,#1f0,#2f0,#4f0,#6f0,#af0,#ef0,#ff0,#df0,#fe0,#ff0,#ef0,#fe0,#df0,#ff0,#ef0,#df0,#bf0,#af0,#7f0,#7f0,#1f0,#0f0,#0f1,#0f7,#0f9,#0fb,#0fd,#0fc,#0ef,#2f0,#2f0,#3f0,#2f0,#4f0,#4f0,#3f0,#0f0,#0f0,#0fd,#0df,#20f,#20f,#02f,#40f,#03f,#10f,#60f,#20f,#60f,#000)"></i>
<i style="background:linear-gradient(#0df,#0df,#08f,#0fd,#0df,#0fd,#0fb,#0f7,#0f2,#0f0,#3f0,#5f0,#5f0,#8f0,#af0,#fe0,#fe0,#fe0,#ef0,#fe0,#fe0,#fe0,#fe0,#fd0,#fd0,#ef0,#cf0,#cf0,#8f0,#6f0,#2f0,#1f0,#1f0,#0f7,#0f9,#0f8,#0fa,#0ff,#0ef,#1f0,#3f0,#4f0,#5f0,#4f0,#1f0,#2f0,#0f0,#0f1,#0fa,#07f,#0bf,#20f,#70f,#10f,#20f,#00f,#00f,#20f,#40f,#70f)"></i>
<i style="background:linear-gradient(#0ff,#0f9,#0fb,#0fc,#0bf,#0ff,#0f6,#0f5,#0f2,#0f1,#2f0,#4f0,#6f0,#bf0,#af0,#ef0,#fe0,#ef0,#fd0,#ff0,#ef0,#ff0,#fe0,#fe0,#ff0,#ff0,#cf0,#bf0,#8f0,#6f0,#2f0,#2f0,#0f2,#0f7,#0f9,#0fc,#0fe,#0fb,#0fc,#1f0,#3f0,#3f0,#3f0,#2f0,#2f0,#0f0,#0f2,#0f2,#0fa,#07f,#05f,#50f,#30f,#10f,#30f,#000,#50f,#70f,#20f,#40f)"></i>
<i style="background:linear-gradient(#0df,#0fd,#0fe,#0f6,#0fb,#0fa,#0fa,#0f7,#0f2,#0f0,#1f0,#4f0,#6f0,#8f0,#bf0,#df0,#ff0,#ff0,#fd0,#fe0,#fe0,#ff0,#fe0,#fe0,#ff0,#df0,#ef0,#bf0,#8f0,#6f0,#2f0,#1f0,#0f2,#0f5,#0fa,#0fd,#0ff,#0df,#0ff,#0f1,#3f0,#0f0,#2f0,#1f0,#0f0,#0f1,#0f1,#0f5,#0fe,#08f,#03f,#30f,#10f,#40f,#40f,#40f,#20f,#70f,#50f,#000)"></i>
<i style="background:linear-gradient(#0fb,#0bf,#0fe,#09f,#0ff,#0fb,#0fd,#0f8,#0f1,#0f1,#1f0,#3f0,#4f0,#9f0,#9f0,#cf0,#fe0,#fe0,#ff0,#ff0,#ff0,#ef0,#fe0,#ff0,#ef0,#df0,#bf0,#bf0,#7f0,#5f0,#1f0,#0f0,#0f1,#0f5,#0fc,#0fb,#0fd,#0ff,#0ef,#0f1,#0f0,#1f0,#1f0,#0f0,#0f0,#0f1,#0f1,#0f1,#0f9,#0af,#03f,#00f,#00f,#40f,#10f,#70f,#10f,#70f,#80f,#70f)"></i>
<i style="background:linear-gradient(#0fd,#0bf,#08f,#0af,#0f9,#0f8,#0f9,#0f6,#0f3,#0f2,#0f1,#2f0,#3f0,#6f0,#8f0,#bf0,#cf0,#ef0,#cf0,#df0,#df0,#cf0,#ef0,#bf0,#df0,#bf0,#af0,#9f0,#5f0,#3f0,#0f1,#0f0,#0f4,#0f8,#0fa,#0fd,#0df,#0ef,#0df,#0f3,#0f1,#0f0,#1f0,#0f0,#0f2,#0f4,#0f3,#0f4,#0fc,#09f,#04f,#20f,#02f,#10f,#40f,#50f,#000,#10f,#60f,#80f)"></i>
<i style="background:linear-gradient(#08f,#0fe,#0cf,#0df,#0fe,#0df,#0fd,#0f8,#0f4,#0f2,#0f1,#3f0,#2f0,#5f0,#9f0,#bf0,#9f0,#bf0,#af0,#bf0,#cf0,#bf0,#bf0,#cf0,#cf0,#af0,#af0,#7f0,#6f0,#2f0,#0f3,#0f1,#0f3,#0f8,#0fb,#0fd,#0ff,#0cf,#0ef,#0f1,#1f0,#0f0,#1f0,#2f0,#0f0,#0f0,#0f3,#0f3,#0fd,#09f,#50f,#04f,#04f,#20f,#30f,#70f,#70f,#50f,#70f,#60f)"></i>
<i style="background:linear-gradient(#0df,#0ff,#0ef,#0cf,#0fc,#0cf,#0fa,#0f7,#0f5,#0f3,#0f1,#1f0,#3f0,#5f0,#8f0,#af0,#cf0,#cf0,#bf0,#cf0,#bf0,#cf0,#df0,#af0,#bf0,#9f0,#7f0,#6f0,#3f0,#1f0,#0f1,#0f1,#0f4,#0fa,#0fe,#0fd,#0fc,#0df,#07f,#0f2,#1f0,#2f0,#0f0,#3f0,#0f1,#0f0,#0f1,#0f2,#0fa,#0fe,#30f,#00f,#02f,#20f,#10f,#80f,#80f,#80f,#50f,#70f)"></i>
<i style="background:linear-gradient(#0bf,#0af,#0df,#0ef,#0fd,#0df,#0ef,#0f7,#0f5,#0f3,#0f1,#0f0,#1f0,#4f0,#6f0,#9f0,#af0,#bf0,#af0,#af0,#bf0,#df0,#af0,#bf0,#8f0,#af0,#af0,#5f0,#3f0,#0f0,#0f2,#0f4,#0f4,#0fa,#0fb,#0fc,#0ef,#0df,#0fb,#0f0,#1f0,#1f0,#2f0,#1f0,#0f0,#0f0,#0f1,#0f3,#0f9,#05f,#20f,#20f,#10f,#20f,#60f,#30f,#80f,#80f,#10f,#10f)"></i>
<i style="background:linear-gradient(#08f,#0fd,#0fd,#0cf,#0fe,#0cf,#0ff,#0f9,#0f4,#0f2,#0f0,#3f0,#4f0,#8f0,#8f0,#df0,#df0,#ef0,#ef0,#df0,#df0,#df0,#ef0,#df0,#df0,#ef0,#9f0,#9f0,#6f0,#3f0,#0f2,#1f0,#0f2,#0f8,#0fb,#0df,#0fc,#0fe,#0fd,#0f0,#3f0,#4f0,#4f0,#1f0,#2f0,#2f0,#0f0,#0f2,#0fc,#0df,#04f,#20f,#00f,#70f,#20f,#40f,#000,#80f,#30f,#50f)"></i>
<i style="background:linear-gradient(#0ff,#08f,#0fc,#08f,#0bf,#0fe,#0df,#0f7,#0f6,#0f2,#0f0,#3f0,#5f0,#6f0,#9f0,#cf0,#df0,#bf0,#cf0,#ef0,#cf0,#cf0,#df0,#cf0,#cf0,#af0,#af0,#7f0,#6f0,#1f0,#0f2,#0f1,#0f5,#0f8,#0f9,#0fd,#0fe,#0fe,#0df,#1f0,#2f0,#2f0,#1f0,#2f0,#1f0,#0f0,#0f2,#0f3,#0f8,#09f,#07f,#20f,#60f,#02f,#50f,#70f,#80f,#60f,#80f,#30f)"></i>
<i style="background:linear-gradient(#0cf,#0bf,#0fb,#0cf,#0f9,#0ef,#0f8,#0f8,#0f4,#0f0,#0f0,#2f0,#3f0,#5f0,#9f0,#cf0,#af0,#df0,#bf0,#cf0,#df0,#df0,#df0,#bf0,#af0,#bf0,#7f0,#8f0,#5f0,#3f0,#0f2,#0f1,#0f5,#0f9,#0f8,#0fa,#0fd,#0fe,#0ef,#0f3,#0f0,#1f0,#1f0,#0f0,#1f0,#0f2,#0f1,#0f4,#0fc,#02f,#10f,#30f,#40f,#40f,#30f,#40f,#70f,#000,#50f,#80f)"></i>
<i style="background:linear-gradient(#0cf,#0fd,#0fe,#0ff,#0cf,#0af,#0fa,#0fa,#0f8,#0f7,#0f6,#0f5,#0f2,#1f0,#4f0,#7f0,#5f0,#6f0,#8f0,#7f0,#7f0,#6f0,#6f0,#5f0,#5f0,#4f0,#2f0,#1f0,#0f3,#0f3,#0f4,#0f9,#0fb,#0ff,#0fc,#0ef,#0bf,#0ef,#0bf,#0f4,#0f0,#0f2,#0f0,#0f2,#0f1,#0f3,#0f4,#0f4,#0fa,#03f,#20f,#02f,#40f,#10f,#60f,#50f,#50f,#30f,#30f,#80f)"></i>
<i style="background:linear-gradient(#0f9,#03f,#0df,#0fd,#07f,#0ff,#0f8,#0f8,#0f6,#0f4,#0f2,#1f0,#3f0,#6f0,#9f0,#af0,#bf0,#cf0,#ef0,#bf0,#bf0,#cf0,#cf0,#cf0,#bf0,#9f0,#7f0,#4f0,#3f0,#1f0,#0f1,#0f6,#0f6,#0fa,#0fa,#0fe,#0fe,#0cf,#0ef,#0f3,#0f1,#0f0,#0f0,#0f0,#0f2,#0f1,#0f3,#0f5,#0f8,#0cf,#10f,#30f,#70f,#01f,#30f,#50f,#60f,#000,#000,#60f)"></i>
<i style="background:linear-gradient(#0fc,#0df,#0fa,#0cf,#0df,#0fa,#0fa,#0f7,#0f3,#0f1,#1f0,#2f0,#4f0,#8f0,#cf0,#ef0,#df0,#ff0,#df0,#ff0,#df0,#ef0,#ff0,#df0,#ef0,#bf0,#af0,#7f0,#5f0,#5f0,#2f0,#0f3,#0f6,#0f7,#0fa,#0fb,#0df,#0fe,#0df,#0f3,#0f1,#1f0,#2f0,#0f0,#0f1,#0f4,#0f3,#0f1,#0fa,#06f,#01f,#02f,#20f,#40f,#20f,#30f,#60f,#60f,#30f,#50f)"></i>
<i style="background:linear-gradient(#0fd,#0fd,#0ff,#0fd,#0bf,#0fb,#0fb,#0f7,#0f3,#0f1,#2f0,#5f0,#7f0,#af0,#df0,#ef0,#fe0,#fe0,#fe0,#fe0,#ff0,#ff0,#ef0,#ef0,#df0,#cf0,#bf0,#7f0,#7f0,#4f0,#1f0,#0f2,#0f6,#0f7,#0f8,#0fc,#0fd,#0fd,#0fc,#0f0,#1f0,#2f0,#1f0,#2f0,#0f0,#0f1,#0f1,#0f2,#0f9,#07f,#05f,#40f,#30f,#60f,#20f,#50f,#50f,#70f,#70f,#70f)"></i>
<i style="background:linear-gradient(#0bf,#0cf,#0fe,#0ff,#0fb,#0df,#0fd,#0f8,#0f4,#0f0,#0f0,#1f0,#5f0,#8f0,#bf0,#cf0,#df0,#df0,#bf0,#df0,#ef0,#cf0,#df0,#cf0,#8f0,#9f0,#7f0,#5f0,#1f0,#1f0,#0f2,#0f5,#0f8,#0f9,#0fb,#0fd,#0ef,#0df,#0df,#0f0,#0f0,#0f0,#2f0,#1f0,#1f0,#0f2,#0f2,#0f2,#0df,#0cf,#07f,#10f,#40f,#00f,#80f,#10f,#30f,#80f,#80f,#40f)"></i>
<i style="background:linear-gradient(#08f,#0af,#0df,#0df,#0fb,#0fe,#0f9,#0f7,#0f2,#0f1,#2f0,#4f0,#6f0,#af0,#df0,#df0,#ff0,#ff0,#fe0,#ff0,#fe0,#ff0,#ef0,#df0,#cf0,#bf0,#7f0,#5f0,#5f0,#3f0,#1f0,#0f4,#0f6,#0f7,#0fd,#0fb,#0fe,#0ff,#0fe,#1f0,#4f0,#2f0,#3f0,#4f0,#0f1,#2f0,#0f0,#0f0,#0fe,#0cf,#40f,#20f,#01f,#20f,#20f,#10f,#80f,#80f,#50f,#80f)"></i>
<i style="background:linear-gradient(#0fc,#0af,#09f,#0df,#0f9,#0fc,#0fc,#0f6,#0f2,#0f1,#3f0,#4f0,#8f0,#af0,#fe0,#ef0,#fd0,#fd0,#fe0,#fe0,#fd0,#fe0,#fe0,#ff0,#df0,#af0,#9f0,#7f0,#4f0,#3f0,#2f0,#0f4,#0f5,#0f8,#0fb,#0fa,#0fd,#0ff,#0fe,#1f0,#4f0,#4f0,#6f0,#4f0,#0f0,#0f1,#1f0,#0f2,#0fd,#0af,#04f,#04f,#03f,#03f,#60f,#50f,#40f,#40f,#30f,#80f)"></i>
<i style="background:linear-gradient(#0bf,#05f,#05f,#0ef,#0f7,#0fb,#0ef,#0fa,#0f4,#0f0,#2f0,#4f0,#5f0,#bf0,#df0,#ef0,#df0,#ef0,#ff0,#fe0,#ff0,#ff0,#df0,#cf0,#af0,#9f0,#7f0,#5f0,#1f0,#1f0,#0f1,#0f4,#0f6,#0f8,#0fa,#0fb,#0ef,#0fe,#0df,#0f0,#2f0,#1f0,#2f0,#2f0,#1f0,#0f2,#0f2,#0f3,#0fb,#05f,#02f,#02f,#50f,#70f,#40f,#50f,#40f,#50f,#80f,#80f)"></i>
<i style="background:linear-gradient(#0df,#09f,#0ff,#0f5,#0df,#0ff,#0f7,#0f6,#0f2,#1f0,#3f0,#4f0,#8f0,#ef0,#ff0,#ef0,#fd0,#fd0,#fd0,#fd0,#fc0,#fd0,#fe0,#ff0,#cf0,#cf0,#8f0,#6f0,#6f0,#3f0,#1f0,#0f3,#0f5,#0f7,#0f9,#0fd,#0df,#0ff,#0ef,#1f0,#3f0,#1f0,#2f0,#1f0,#1f0,#1f0,#0f0,#0f1,#0fd,#0af,#05f,#10f,#60f,#40f,#10f,#00f,#60f,#40f,#50f,#80f)"></i>
<i style="background:linear-gradient(#0bf,#0df,#0bf,#0ef,#07f,#0bf,#0f9,#0f9,#0f4,#0f1,#0f1,#3f0,#6f0,#9f0,#cf0,#ef0,#ff0,#ef0,#ff0,#ff0,#fe0,#bf0,#cf0,#bf0,#7f0,#9f0,#7f0,#2f0,#3f0,#1f0,#0f2,#0f4,#0f8,#0f9,#0fb,#0ef,#0fe,#0cf,#0cf,#0f3,#0f1,#0f0,#1f0,#0f2,#0f1,#0f2,#0f2,#0f6,#0fb,#08f,#10f,#01f,#30f,#50f,#80f,#40f,#60f,#80f,#50f,#80f)"></i>
<i style="background:linear-gradient(#0df,#0bf,#0df,#0af,#0bf,#0fd,#0fa,#0f6,#0f6,#0f1,#1f0,#4f0,#6f0,#9f0,#cf0,#ef0,#ff0,#ef0,#df0,#ef0,#ff0,#ef0,#af0,#af0,#af0,#7f0,#4f0,#4f0,#2f0,#0f0,#0f0,#0f4,#0f6,#0f9,#0f9,#0fa,#0fc,#0cf,#0df,#0f1,#0f1,#0f1,#0f0,#0f1,#0f3,#0f3,#0f4,#0f5,#0fa,#07f,#08f,#20f,#30f,#00f,#50f,#40f,#80f,#80f,#80f,#70f)"></i>
<i style="background:linear-gradient(#0f9,#0df,#0fd,#0df,#0fe,#0cf,#0fc,#0f8,#0f1,#0f1,#2f0,#5f0,#6f0,#bf0,#cf0,#ef0,#ff0,#ff0,#ff0,#ef0,#ff0,#ef0,#ef0,#af0,#9f0,#7f0,#8f0,#3f0,#1f0,#0f0,#0f2,#0f5,#0f5,#0f9,#0f9,#0fe,#0fe,#0df,#0df,#0f3,#1f0,#0f0,#0f1,#0f0,#0f0,#0f3,#0f3,#0f5,#0fc,#08f,#30f,#40f,#20f,#20f,#80f,#50f,#70f,#80f,#50f,#20f)"></i>
<i style="background:linear-gradient(#0bf,#0cf,#08f,#0cf,#04f,#0ff,#0fe,#0f6,#0f3,#0f0,#2f0,#3f0,#7f0,#cf0,#df0,#ef0,#fd0,#ff0,#fe0,#ff0,#ff0,#cf0,#ef0,#cf0,#8f0,#af0,#6f0,#2f0,#3f0,#1f0,#0f2,#0f4,#0f6,#0fa,#0ef,#0ff,#0ef,#0fe,#0df,#0f1,#0f0,#0f0,#0f0,#0f0,#0f1,#1f0,#0f1,#0f3,#0fe,#0af,#00f,#00f,#20f,#40f,#00f,#10f,#30f,#80f,#30f,#000)"></i>
<i style="background:linear-gradient(#0cf,#0ff,#08f,#0fb,#0df,#0fe,#0fb,#0f7,#0f2,#0f0,#5f0,#7f0,#af0,#cf0,#fe0,#fd0,#fc0,#fb0,#fc0,#fc0,#fc0,#fd0,#ff0,#ef0,#bf0,#af0,#8f0,#5f0,#4f0,#2f0,#2f0,#0f4,#0f6,#0f9,#0fa,#0fe,#0fc,#0fe,#0ff,#1f0,#1f0,#2f0,#2f0,#3f0,#1f0,#0f1,#0f1,#0f3,#0f8,#09f,#04f,#60f,#50f,#30f,#70f,#20f,#30f,#60f,#20f,#000)"></i>
<i style="background:linear-gradient(#0ef,#08f,#0fe,#07f,#0fb,#0f9,#0fa,#0f5,#0f0,#3f0,#5f0,#7f0,#af0,#df0,#fc0,#fb0,#fa0,#fb0,#fa0,#fa0,#fa0,#fc0,#fb0,#ff0,#ef0,#cf0,#af0,#7f0,#5f0,#3f0,#2f0,#0f2,#0f4,#0f7,#0fa,#0fe,#0fb,#0fe,#0fd,#2f0,#5f0,#4f0,#6f0,#4f0,#3f0,#3f0,#3f0,#1f0,#0f9,#08f,#05f,#10f,#03f,#00f,#20f,#30f,#80f,#60f,#70f,#000)"></i>
<i style="background:linear-gradient(#0ef,#0df,#0fe,#0bf,#0df,#0ff,#0ff,#0f6,#0f1,#3f0,#5f0,#7f0,#af0,#cf0,#fd0,#fd0,#fa0,#fa0,#f90,#fc0,#fb0,#fd0,#fc0,#fe0,#cf0,#cf0,#af0,#6f0,#4f0,#3f0,#0f0,#0f3,#0f7,#0f7,#0fb,#0fc,#0fb,#0fb,#0ef,#1f0,#3f0,#5f0,#5f0,#4f0,#3f0,#3f0,#0f0,#0f0,#0fc,#0bf,#04f,#03f,#10f,#30f,#50f,#40f,#30f,#80f,#80f,#80f)"></i>
<i style="background:linear-gradient(#09f,#0df,#0ef,#0fc,#0ff,#0fc,#0fd,#0f6,#0f2,#4f0,#4f0,#7f0,#cf0,#df0,#fd0,#fc0,#f80,#fa0,#f90,#fc0,#fd0,#fd0,#fc0,#ff0,#ff0,#bf0,#8f0,#6f0,#5f0,#3f0,#1f0,#0f2,#0f4,#0f7,#0fb,#0fe,#0fe,#0fe,#0fe,#2f0,#3f0,#4f0,#4f0,#3f0,#1f0,#1f0,#1f0,#0f1,#0fc,#0fe,#40f,#03f,#30f,#04f,#01f,#30f,#50f,#60f,#80f,#20f)"></i>
<i style="background:linear-gradient(#06f,#0cf,#0cf,#0fe,#0bf,#0ff,#0ef,#0f7,#0f3,#0f0,#1f0,#4f0,#8f0,#af0,#ef0,#ef0,#fc0,#fc0,#fe0,#fc0,#fe0,#ff0,#cf0,#cf0,#af0,#7f0,#7f0,#4f0,#3f0,#1f0,#0f1,#0f4,#0f5,#0f9,#0f9,#0fc,#0fd,#0af,#0af,#0f2,#2f0,#0f0,#1f0,#0f0,#0f0,#0f2,#0f3,#0f3,#0fb,#0cf,#20f,#00f,#02f,#30f,#50f,#80f,#00f,#40f,#80f,#60f)"></i>
<i style="background:linear-gradient(#0bf,#0af,#08f,#0ef,#0f8,#0ef,#0f8,#0fa,#0f2,#1f0,#3f0,#5f0,#8f0,#bf0,#ef0,#ff0,#fc0,#fc0,#fd0,#fd0,#fe0,#fe0,#fe0,#df0,#bf0,#9f0,#7f0,#5f0,#4f0,#2f0,#0f0,#0f4,#0f6,#0f9,#0fa,#0fa,#0ef,#0ef,#0ff,#0f2,#2f0,#0f1,#0f1,#0f0,#0f2,#0f1,#0f3,#0f4,#0fc,#06f,#40f,#00f,#60f,#04f,#10f,#20f,#50f,#000,#40f,#50f)"></i>
<i style="background:linear-gradient(#0cf,#05f,#0ef,#0fd,#0f7,#0fa,#0df,#0f8,#0f2,#1f0,#2f0,#5f0,#9f0,#cf0,#fe0,#fd0,#fb0,#fd0,#fc0,#fb0,#fc0,#fd0,#fe0,#df0,#df0,#af0,#7f0,#6f0,#3f0,#1f0,#0f1,#0f4,#0f6,#0f8,#0fa,#0fb,#0fd,#0ff,#0fd,#0f2,#0f0,#1f0,#1f0,#0f0,#0f1,#0f2,#0f3,#0f3,#0fb,#0bf,#03f,#01f,#60f,#40f,#000,#80f,#80f,#50f,#80f,#80f)"></i>
<i style="background:linear-gradient(#09f,#0ff,#0af,#08f,#0af,#0ef,#0df,#0fa,#0f6,#0f0,#0f1,#3f0,#5f0,#7f0,#cf0,#df0,#ff0,#ef0,#ef0,#ff0,#cf0,#df0,#df0,#9f0,#9f0,#7f0,#5f0,#3f0,#1f0,#1f0,#0f3,#0f5,#0f7,#0f9,#0fd,#0ff,#0fc,#0bf,#09f,#0f3,#0f1,#0f1,#2f0,#0f1,#0f1,#0f3,#0f3,#0f5,#0fa,#0cf,#01f,#10f,#20f,#80f,#10f,#70f,#50f,#60f,#80f,#80f)"></i>
<i style="background:linear-gradient(#08f,#0ff,#0ef,#0ff,#0bf,#0fd,#0ef,#0f9,#0f4,#1f0,#0f0,#4f0,#5f0,#9f0,#bf0,#df0,#df0,#ef0,#fe0,#ff0,#df0,#df0,#bf0,#9f0,#9f0,#7f0,#4f0,#3f0,#0f0,#1f0,#0f3,#0f6,#0f8,#0fa,#0fa,#0ff,#0fe,#0df,#0df,#0f2,#1f0,#0f0,#0f1,#0f2,#0f0,#0f2,#0f3,#0f4,#0fa,#0af,#00f,#30f,#20f,#40f,#10f,#80f,#30f,#80f,#30f,#000)"></i>
<i style="background:linear-gradient(#09f,#0f8,#0fd,#0af,#0ff,#0fd,#0fc,#0f8,#0f4,#0f0,#2f0,#3f0,#6f0,#bf0,#df0,#ff0,#fe0,#fd0,#ff0,#df0,#ff0,#ff0,#df0,#bf0,#af0,#8f0,#6f0,#5f0,#2f0,#0f0,#0f2,#0f4,#0f6,#0f9,#0fe,#0fe,#0fc,#0ff,#0df,#1f0,#3f0,#1f0,#2f0,#3f0,#1f0,#1f0,#0f1,#0f1,#0fd,#0ef,#10f,#00f,#30f,#10f,#40f,#10f,#20f,#50f,#80f,#80f)"></i>
<i style="background:linear-gradient(#0bf,#0fe,#0cf,#0af,#0fc,#0af,#0ff,#0f6,#0f3,#1f0,#4f0,#6f0,#8f0,#af0,#ff0,#fe0,#fc0,#fc0,#fb0,#fd0,#fc0,#fc0,#ef0,#ef0,#bf0,#bf0,#7f0,#6f0,#3f0,#3f0,#0f1,#0f4,#0f6,#0f8,#0fa,#0fc,#0ff,#0fb,#09f,#1f0,#3f0,#3f0,#3f0,#2f0,#0f0,#1f0,#0f0,#0f1,#0fb,#09f,#40f,#20f,#00f,#60f,#50f,#80f,#40f,#60f,#40f,#80f)"></i>
<i style="background:linear-gradient(#0df,#0fa,#0fe,#0fd,#0fd,#0af,#0f5,#0f6,#0f2,#2f0,#4f0,#5f0,#bf0,#df0,#ef0,#fd0,#fc0,#fa0,#fa0,#fc0,#fb0,#fd0,#ff0,#ff0,#df0,#bf0,#9f0,#6f0,#5f0,#2f0,#0f0,#0f3,#0f4,#0f7,#0fc,#0fe,#0fc,#0fe,#0fa,#1f0,#5f0,#5f0,#4f0,#3f0,#4f0,#2f0,#1f0,#0f1,#0fa,#0fd,#03f,#07f,#60f,#50f,#02f,#80f,#50f,#50f,#40f,#80f)"></i>
<i style="background:linear-gradient(#07f,#0fe,#0ff,#0cf,#0fc,#05f,#0f9,#0f6,#0f0,#3f0,#4f0,#7f0,#8f0,#cf0,#fe0,#fc0,#fc0,#fd0,#fb0,#fb0,#fc0,#fd0,#ff0,#df0,#af0,#9f0,#9f0,#6f0,#3f0,#2f0,#0f0,#0f2,#0f8,#0f9,#0fa,#0fb,#0fc,#0ef,#0df,#1f0,#4f0,#4f0,#1f0,#3f0,#2f0,#0f0,#1f0,#0f0,#0fa,#0fe,#08f,#40f,#10f,#20f,#02f,#60f,#60f,#80f,#50f,#60f)"></i>
<i style="background:linear-gradient(#0bf,#0cf,#0fd,#0df,#0fb,#0fc,#0af,#0f8,#0f3,#0f0,#3f0,#5f0,#9f0,#cf0,#ef0,#fc0,#fc0,#fd0,#fb0,#fc0,#fc0,#fe0,#ff0,#ff0,#cf0,#bf0,#9f0,#6f0,#5f0,#4f0,#1f0,#0f3,#0f5,#0f7,#0fa,#0fd,#0fb,#0df,#0fb,#0f0,#3f0,#1f0,#2f0,#0f0,#1f0,#0f0,#0f1,#0f2,#0fc,#0cf,#40f,#40f,#20f,#04f,#10f,#50f,#30f,#20f,#60f,#30f)"></i>
<i style="background:linear-gradient(#0ef,#0ff,#0fa,#0fd,#0fa,#0fd,#0fb,#0f7,#0f2,#2f0,#2f0,#5f0,#8f0,#cf0,#fd0,#fe0,#fc0,#fc0,#fd0,#fd0,#fd0,#fd0,#fe0,#fe0,#bf0,#9f0,#8f0,#5f0,#4f0,#3f0,#1f0,#0f4,#0f5,#0f8,#0fa,#0fc,#0ff,#0fb,#0ef,#0f2,#2f0,#0f0,#1f0,#0f0,#0f2,#0f2,#0f2,#0f3,#0ff,#08f,#10f,#10f,#50f,#03f,#60f,#60f,#000,#40f,#30f,#50f)"></i>
<i style="background:linear-gradient(#0df,#09f,#0fd,#0bf,#0f7,#0ff,#0fa,#0f7,#0f3,#1f0,#3f0,#7f0,#af0,#df0,#fe0,#fe0,#fa0,#fa0,#fb0,#fa0,#fc0,#fc0,#fe0,#ef0,#df0,#df0,#8f0,#6f0,#4f0,#3f0,#0f0,#0f2,#0f4,#0f8,#0fa,#0fc,#0ef,#0fe,#0fc,#0f2,#3f0,#1f0,#2f0,#1f0,#0f0,#0f2,#0f3,#0f2,#0fc,#0ff,#00f,#00f,#10f,#30f,#50f,#80f,#80f,#30f,#60f,#50f)"></i>
<i style="background:linear-gradient(#08f,#0ff,#0fd,#0fd,#0fd,#0ff,#0ef,#0f8,#0f3,#1f0,#2f0,#7f0,#9f0,#ef0,#fe0,#fc0,#fb0,#fa0,#fb0,#fa0,#fb0,#fb0,#fe0,#fe0,#df0,#9f0,#8f0,#6f0,#4f0,#5f0,#0f2,#0f1,#0f4,#0f9,#0fa,#0f8,#0fc,#0fd,#0ef,#0f1,#3f0,#2f0,#0f0,#1f0,#1f0,#0f0,#0f3,#0f3,#0fa,#0bf,#20f,#09f,#30f,#50f,#60f,#60f,#60f,#60f,#000,#80f)"></i>
<i style="background:linear-gradient(#0cf,#0df,#0fd,#0f7,#0ef,#0fe,#0fb,#0f8,#0f2,#2f0,#4f0,#6f0,#af0,#df0,#fd0,#fb0,#fa0,#fb0,#f90,#fb0,#fc0,#fc0,#ef0,#df0,#df0,#bf0,#7f0,#5f0,#6f0,#4f0,#1f0,#0f2,#0f5,#0f8,#0f9,#0fa,#0fe,#0df,#0fe,#1f0,#2f0,#2f0,#2f0,#2f0,#0f0,#1f0,#1f0,#0f4,#0fc,#08f,#07f,#00f,#00f,#40f,#20f,#30f,#80f,#80f,#80f,#80f)"></i>
<i style="background:linear-gradient(#0df,#0af,#0cf,#0ef,#0fe,#0ef,#0fb,#0f7,#0f1,#2f0,#2f0,#6f0,#af0,#cf0,#ef0,#fd0,#fb0,#fa0,#fb0,#fc0,#fb0,#fe0,#fe0,#ef0,#af0,#9f0,#9f0,#7f0,#3f0,#0f0,#0f1,#0f2,#0f6,#0f7,#0fa,#0f6,#0fb,#0fc,#0ff,#3f0,#5f0,#4f0,#3f0,#1f0,#3f0,#0f0,#0f0,#0f1,#0fa,#0fe,#06f,#20f,#40f,#40f,#30f,#60f,#40f,#70f,#60f,#000)"></i>
<i style="background:linear-gradient(#0fe,#0fc,#0ef,#0fc,#0f5,#0fd,#0fe,#0f8,#0f1,#3f0,#2f0,#7f0,#9f0,#df0,#fd0,#fc0,#fc0,#fb0,#fc0,#fb0,#fa0,#fd0,#ff0,#ef0,#df0,#bf0,#7f0,#6f0,#4f0,#3f0,#0f1,#0f1,#0f5,#0f9,#0f9,#0fd,#0ef,#0fc,#0cf,#1f0,#4f0,#5f0,#4f0,#3f0,#2f0,#1f0,#0f0,#0f0,#0fd,#0df,#20f,#50f,#20f,#40f,#20f,#60f,#10f,#30f,#30f,#80f)"></i>
<i style="background:linear-gradient(#07f,#0fc,#0ff,#0fc,#0fb,#0fd,#0fc,#0f7,#0f1,#3f0,#3f0,#6f0,#af0,#df0,#ff0,#fd0,#fb0,#fb0,#fb0,#fc0,#fd0,#fd0,#fd0,#cf0,#ef0,#bf0,#9f0,#5f0,#3f0,#5f0,#0f1,#0f3,#0f6,#0f8,#0fa,#0fa,#0ff,#0fc,#0cf,#2f0,#2f0,#3f0,#4f0,#2f0,#4f0,#2f0,#1f0,#0f0,#0fc,#03f,#20f,#10f,#00f,#40f,#04f,#10f,#40f,#50f,#70f,#80f)"></i>
<i style="background:linear-gradient(#0fe,#0ff,#0fb,#0af,#0fb,#0df,#0fa,#0f7,#0f0,#1f0,#5f0,#6f0,#af0,#ff0,#fd0,#fc0,#fc0,#f90,#fa0,#fb0,#fb0,#fb0,#fe0,#ef0,#ef0,#bf0,#9f0,#6f0,#4f0,#3f0,#0f1,#0f2,#0f5,#0f9,#0fa,#0ef,#0fd,#0ff,#0bf,#2f0,#4f0,#3f0,#4f0,#3f0,#3f0,#1f0,#0f0,#0f2,#0f9,#08f,#01f,#03f,#30f,#05f,#50f,#70f,#80f,#80f,#40f,#80f)"></i>
<i style="background:linear-gradient(#0af,#0fe,#0fc,#09f,#0fa,#0f9,#0fe,#0f9,#0f3,#0f0,#2f0,#5f0,#7f0,#bf0,#ff0,#ff0,#fe0,#fd0,#ff0,#fd0,#ff0,#ff0,#ef0,#cf0,#af0,#7f0,#6f0,#3f0,#1f0,#3f0,#0f1,#0f3,#0f8,#0f9,#0fd,#0fc,#0fc,#0fd,#0af,#0f0,#1f0,#1f0,#1f0,#2f0,#1f0,#0f0,#0f3,#0f4,#0fd,#0fc,#00f,#20f,#50f,#20f,#50f,#80f,#60f,#30f,#80f,#80f)"></i>
<i style="background:linear-gradient(#0cf,#0fc,#0f9,#0df,#0fb,#0fc,#0fe,#0f8,#0f7,#0f3,#0f2,#2f0,#4f0,#7f0,#bf0,#cf0,#df0,#df0,#ef0,#ef0,#cf0,#cf0,#af0,#af0,#8f0,#4f0,#2f0,#0f0,#0f0,#0f2,#0f4,#0f7,#0f9,#0fa,#0fb,#0fd,#0ef,#0df,#0df,#0f1,#1f0,#0f1,#0f1,#2f0,#0f0,#0f4,#0f3,#0f4,#0fa,#0bf,#02f,#01f,#30f,#000,#30f,#70f,#20f,#60f,#80f,#80f)"></i>
<i style="background:linear-gradient(#0fe,#0df,#0af,#07f,#0f5,#0ff,#0ef,#0f7,#0f3,#2f0,#4f0,#8f0,#bf0,#ef0,#df0,#fe0,#fe0,#fd0,#fd0,#fe0,#fd0,#fe0,#ff0,#ef0,#bf0,#9f0,#7f0,#4f0,#5f0,#3f0,#1f0,#0f2,#0f5,#0f8,#0fc,#0fe,#0fd,#0fe,#0cf,#0f1,#1f0,#0f0,#0f0,#2f0,#0f0,#0f1,#0f2,#0f4,#0fd,#08f,#10f,#00f,#30f,#30f,#70f,#20f,#50f,#20f,#000,#60f)"></i>
<i style="background:linear-gradient(#0bf,#0af,#0ff,#0fe,#0ef,#0f4,#0fa,#0f7,#0f0,#5f0,#6f0,#af0,#bf0,#fe0,#fd0,#fc0,#fc0,#fd0,#fc0,#fc0,#fc0,#fd0,#fd0,#fd0,#ff0,#cf0,#af0,#7f0,#6f0,#7f0,#2f0,#0f2,#0f4,#0f8,#0fa,#0fe,#0fe,#0cf,#0fe,#0af,#2f0,#1f0,#3f0,#2f0,#1f0,#0f0,#0f0,#0f2,#0ff,#0ff,#50f,#20f,#40f,#10f,#60f,#50f,#30f,#60f,#80f,#50f)"></i>
<i style="background:linear-gradient(#0bf,#0bf,#09f,#0fd,#0fc,#0f3,#0fa,#0f5,#2f0,#4f0,#8f0,#6f0,#9f0,#df0,#ef0,#ff0,#ef0,#fe0,#ff0,#fe0,#ff0,#ef0,#ef0,#af0,#bf0,#af0,#8f0,#6f0,#6f0,#4f0,#2f0,#0f1,#0f5,#0fa,#0fb,#0fd,#0fb,#0fd,#0af,#0ff,#08f,#2f0,#4f0,#3f0,#0f0,#2f0,#0f2,#0f0,#0fa,#07f,#40f,#20f,#30f,#30f,#40f,#70f,#40f,#80f,#40f,#80f)"></i>
<i style="background:linear-gradient(#0ef,#0fc,#0ef,#0fc,#0f9,#0f7,#0f7,#0f3,#3f0,#5f0,#6f0,#af0,#bf0,#df0,#bf0,#cf0,#ef0,#df0,#df0,#df0,#ef0,#cf0,#cf0,#bf0,#af0,#af0,#7f0,#7f0,#7f0,#4f0,#2f0,#0f3,#0f6,#0f7,#0fc,#0fe,#0ff,#0af,#0ef,#07f,#05f,#01f,#02f,#4f0,#3f0,#2f0,#0f1,#0f1,#0fb,#0df,#20f,#30f,#01f,#20f,#40f,#30f,#60f,#60f,#40f,#30f)"></i>
<i style="background:linear-gradient(#0fd,#0fe,#0af,#0fc,#0f9,#0f7,#0f4,#0f2,#3f0,#3f0,#5f0,#9f0,#af0,#bf0,#cf0,#ef0,#df0,#bf0,#cf0,#af0,#cf0,#cf0,#af0,#af0,#9f0,#af0,#9f0,#6f0,#3f0,#4f0,#1f0,#0f2,#0f6,#0f9,#0fb,#0f9,#0fd,#0ef,#09f,#08f,#0af,#01f,#0af,#06f,#3f0,#3f0,#0f1,#1f0,#0fe,#06f,#02f,#40f,#60f,#05f,#40f,#60f,#80f,#40f,#50f,#80f)"></i>
<i style="background:linear-gradient(#0cf,#09f,#0fa,#0f8,#0fd,#0fa,#0f4,#2f0,#2f0,#3f0,#4f0,#8f0,#9f0,#af0,#df0,#cf0,#cf0,#df0,#af0,#bf0,#af0,#bf0,#af0,#bf0,#7f0,#6f0,#6f0,#5f0,#4f0,#3f0,#0f2,#0f4,#0f6,#0f9,#0fb,#0fd,#0ff,#0df,#0bf,#03f,#07f,#0af,#03f,#0af,#09f,#07f,#1f0,#0f0,#0f9,#06f,#40f,#20f,#50f,#30f,#20f,#10f,#40f,#80f,#80f,#50f)"></i>
<i style="background:linear-gradient(#09f,#0fa,#0fb,#0fe,#0cf,#0f8,#0f3,#1f0,#3f0,#6f0,#6f0,#af0,#af0,#bf0,#df0,#df0,#cf0,#df0,#df0,#cf0,#df0,#af0,#bf0,#af0,#9f0,#7f0,#7f0,#3f0,#3f0,#3f0,#0f1,#0f3,#0f4,#0f7,#0f9,#0ff,#0ff,#0fb,#0cf,#07f,#0af,#0bf,#00f,#05f,#10f,#00f,#05f,#0f2,#0ff,#08f,#00f,#10f,#70f,#30f,#30f,#80f,#80f,#50f,#70f,#80f)"></i>
<i style="background:linear-gradient(#0cf,#0fe,#0df,#0f7,#0fb,#0f8,#0f0,#3f0,#3f0,#5f0,#7f0,#bf0,#bf0,#df0,#cf0,#cf0,#bf0,#cf0,#bf0,#df0,#cf0,#bf0,#af0,#8f0,#8f0,#6f0,#7f0,#4f0,#2f0,#1f0,#0f3,#0f3,#0f6,#0f8,#0f8,#0fc,#0df,#0fd,#0bf,#0cf,#08f,#0bf,#05f,#07f,#10f,#00f,#04f,#30f,#0fc,#50f,#20f,#50f,#60f,#30f,#30f,#60f,#80f,#60f,#50f,#70f)"></i>
<i style="background:linear-gradient(#0ff,#0f9,#0fd,#0fb,#0fb,#0f6,#0f1,#0f0,#2f0,#6f0,#9f0,#bf0,#df0,#bf0,#bf0,#af0,#df0,#cf0,#bf0,#bf0,#cf0,#df0,#bf0,#9f0,#9f0,#5f0,#3f0,#1f0,#0f0,#0f1,#0f3,#0f6,#0f9,#0f9,#0fe,#0fd,#0cf,#0df,#09f,#07f,#04f,#09f,#06f,#01f,#01f,#04f,#20f,#01f,#04f,#30f,#50f,#03f,#50f,#80f,#50f,#00f,#70f,#80f,#40f,#60f)"></i>
<i style="background:linear-gradient(#0fc,#0fa,#0fb,#0fa,#0f8,#0f3,#1f0,#1f0,#6f0,#8f0,#af0,#cf0,#ff0,#ef0,#fd0,#fe0,#fe0,#fe0,#ff0,#ef0,#ef0,#cf0,#af0,#8f0,#6f0,#4f0,#3f0,#1f0,#0f0,#0f4,#0f5,#0f5,#0f8,#0f9,#0ef,#0fd,#0fe,#0af,#0fe,#08f,#0af,#06f,#0af,#07f,#01f,#10f,#10f,#20f,#30f,#20f,#40f,#10f,#60f,#40f,#60f,#000,#80f,#50f,#50f,#80f)"></i>
<i style="background:linear-gradient(#0cf,#0ff,#0f7,#0fd,#0f6,#0f3,#0f0,#6f0,#7f0,#9f0,#cf0,#ff0,#fd0,#fc0,#f90,#fa0,#f80,#fa0,#fa0,#fc0,#fe0,#df0,#af0,#af0,#8f0,#5f0,#3f0,#2f0,#0f0,#0f1,#0f2,#0f4,#0f8,#0fb,#0fa,#0fc,#0fd,#0ff,#0bf,#07f,#0cf,#0ff,#02f,#00f,#30f,#10f,#03f,#30f,#01f,#20f,#40f,#10f,#30f,#20f,#30f,#30f,#40f,#40f,#70f,#50f)"></i>
<i style="background:linear-gradient(#0df,#0fe,#0fa,#0f9,#0f8,#0f6,#0f1,#1f0,#5f0,#8f0,#af0,#df0,#ff0,#fb0,#fc0,#fe0,#fb0,#fc0,#ff0,#ef0,#df0,#cf0,#9f0,#7f0,#8f0,#5f0,#2f0,#1f0,#0f1,#0f2,#0f3,#0f5,#0f9,#0fb,#0fb,#0ef,#0af,#0cf,#0fd,#09f,#07f,#03f,#00f,#08f,#04f,#20f,#01f,#10f,#01f,#60f,#00f,#40f,#20f,#50f,#00f,#70f,#70f,#000,#000,#40f)"></i>
<i style="background:linear-gradient(#0ef,#0ef,#0fc,#0ff,#0f8,#0f1,#1f0,#2f0,#6f0,#8f0,#cf0,#ff0,#fd0,#f90,#fa0,#f90,#f80,#f90,#fb0,#fc0,#fd0,#ff0,#cf0,#bf0,#8f0,#6f0,#5f0,#2f0,#1f0,#0f0,#0f2,#0f5,#0f5,#0fa,#0fa,#0fd,#0fd,#0df,#08f,#0af,#0af,#04f,#05f,#0cf,#0cf,#50f,#01f,#40f,#01f,#40f,#03f,#30f,#30f,#10f,#80f,#60f,#70f,#70f,#000,#60f)"></i>
<i style="background:linear-gradient(#0ff,#0ef,#0fd,#0f9,#0f8,#0f0,#1f0,#3f0,#7f0,#bf0,#df0,#fe0,#fc0,#fa0,#f70,#f70,#f90,#f90,#f90,#fc0,#fe0,#ff0,#df0,#cf0,#af0,#5f0,#5f0,#4f0,#1f0,#0f1,#0f0,#0f4,#0f6,#0f9,#0fe,#0fc,#0ff,#0df,#0ff,#08f,#0f9,#07f,#07f,#08f,#05f,#07f,#07f,#20f,#40f,#10f,#40f,#10f,#40f,#00f,#50f,#000,#02f,#80f,#80f,#30f)"></i>
<i style="background:linear-gradient(#0cf,#0fe,#0fa,#0f7,#0f7,#0f1,#3f0,#3f0,#8f0,#af0,#ef0,#ff0,#fd0,#fa0,#f70,#f90,#f80,#f80,#f90,#fb0,#fe0,#fe0,#ef0,#cf0,#8f0,#8f0,#4f0,#5f0,#2f0,#0f0,#0f3,#0f3,#0f5,#0f9,#0f9,#0fc,#0fe,#0fd,#0df,#03f,#0af,#07f,#02f,#04f,#04f,#30f,#03f,#30f,#0ef,#10f,#10f,#60f,#40f,#60f,#20f,#40f,#20f,#80f,#80f,#50f)"></i>
<i style="background:linear-gradient(#0ef,#0fb,#0fb,#0fe,#0f6,#0f3,#3f0,#5f0,#7f0,#9f0,#df0,#fd0,#fc0,#f70,#f70,#f80,#f90,#f70,#f90,#fb0,#fd0,#ef0,#ff0,#cf0,#af0,#7f0,#5f0,#4f0,#1f0,#0f2,#0f4,#0f4,#0f5,#0fa,#0fb,#0fe,#0fa,#0ef,#0ff,#0bf,#0bf,#07f,#09f,#0cf,#08f,#06f,#05f,#20f,#00f,#20f,#10f,#50f,#80f,#50f,#50f,#60f,#50f,#50f,#70f,#000)"></i>
<i style="background:linear-gradient(#0fd,#0f7,#0fe,#0ff,#0f7,#0f1,#3f0,#5f0,#9f0,#9f0,#ff0,#fe0,#fa0,#f90,#f70,#f60,#f90,#f80,#f70,#fa0,#fd0,#fd0,#ef0,#cf0,#9f0,#8f0,#4f0,#4f0,#3f0,#1f0,#0f1,#0f5,#0f6,#0f8,#0fd,#0fb,#0ff,#0df,#09f,#0df,#08f,#08f,#0af,#02f,#09f,#06f,#04f,#00f,#01f,#00f,#30f,#30f,#30f,#80f,#40f,#70f,#50f,#60f,#80f,#80f)"></i>
<i style="background:linear-gradient(#0fe,#0ff,#0ef,#0fe,#0f6,#0f2,#3f0,#4f0,#8f0,#bf0,#ff0,#fd0,#f90,#f80,#f70,#f70,#f70,#f80,#f80,#f90,#fb0,#fe0,#ef0,#cf0,#af0,#8f0,#5f0,#4f0,#4f0,#2f0,#0f0,#0f2,#0f5,#0f9,#0fb,#0fc,#0fd,#0fd,#0af,#0af,#0ef,#0cf,#03f,#0bf,#0af,#50f,#10f,#01f,#30f,#20f,#40f,#00f,#50f,#80f,#60f,#30f,#50f,#40f,#000,#000)"></i>
<i style="background:linear-gradient(#0fe,#0fa,#0f8,#0fb,#0f8,#0f2,#2f0,#6f0,#8f0,#cf0,#ff0,#fe0,#fb0,#f90,#f70,#fa0,#f80,#f80,#f90,#fb0,#fd0,#fe0,#ef0,#cf0,#8f0,#af0,#6f0,#4f0,#2f0,#0f0,#0f2,#0f2,#0f5,#0f8,#0f9,#0fd,#0ef,#0fe,#0ff,#03f,#0bf,#04f,#0fb,#07f,#08f,#04f,#02f,#30f,#00f,#10f,#20f,#30f,#00f,#20f,#30f,#000,#60f,#80f,#80f,#60f)"></i>
<i style="background:linear-gradient(#0cf,#0fc,#0ff,#0fa,#0f7,#0f1,#3f0,#4f0,#7f0,#cf0,#ff0,#fc0,#fc0,#f60,#f80,#f60,#f80,#f70,#f80,#fb0,#fc0,#fd0,#ef0,#cf0,#bf0,#8f0,#6f0,#3f0,#1f0,#0f0,#0f1,#0f3,#0f6,#0f9,#0ff,#0fe,#0fe,#0fd,#0df,#0fc,#0df,#04f,#0af,#09f,#00f,#20f,#10f,#10f,#40f,#00f,#01f,#60f,#10f,#80f,#50f,#50f,#20f,#60f,#80f,#80f)"></i>
<i style="background:linear-gradient(#0cf,#0fe,#0fe,#0f9,#0f9,#0f2,#0f0,#1f0,#6f0,#8f0,#af0,#ef0,#ef0,#fd0,#fa0,#fd0,#fb0,#fc0,#fc0,#fe0,#ef0,#bf0,#af0,#9f0,#7f0,#4f0,#2f0,#0f0,#0f1,#0f3,#0f3,#0f5,#0f8,#0f9,#0f7,#0ef,#0ff,#0ff,#07f,#0ef,#06f,#08f,#06f,#03f,#20f,#09f,#10f,#00f,#10f,#50f,#01f,#30f,#30f,#50f,#80f,#70f,#50f,#70f,#50f,#80f)"></i>
<i style="background:linear-gradient(#0bf,#0fb,#0fb,#0f7,#0fa,#0f7,#0f3,#0f0,#2f0,#6f0,#9f0,#df0,#ef0,#ff0,#fe0,#fe0,#fc0,#fd0,#fe0,#fe0,#bf0,#bf0,#8f0,#7f0,#2f0,#1f0,#0f0,#0f2,#0f4,#0f4,#0f5,#0f8,#0f9,#0f7,#0fb,#0df,#0ff,#0fd,#0cf,#09f,#0bf,#06f,#0bf,#00f,#10f,#30f,#10f,#01f,#06f,#20f,#01f,#60f,#50f,#10f,#70f,#30f,#30f,#70f,#40f,#30f)"></i>
<i style="background:linear-gradient(#0fb,#0fe,#0fd,#0f6,#0f8,#0f3,#3f0,#4f0,#7f0,#af0,#bf0,#ff0,#fd0,#fa0,#fa0,#f80,#f90,#fa0,#fa0,#fb0,#fe0,#ef0,#ef0,#af0,#7f0,#5f0,#5f0,#2f0,#2f0,#0f2,#0f4,#0f5,#0f6,#0f9,#0f7,#0cf,#0fe,#0cf,#0fd,#0af,#07f,#02f,#02f,#07f,#03f,#00f,#20f,#00f,#06f,#01f,#01f,#60f,#50f,#40f,#50f,#80f,#70f,#80f,#70f,#70f)"></i>
<i style="background:linear-gradient(#0fa,#0f8,#0f9,#0fb,#0f9,#0f5,#0f0,#1f0,#4f0,#8f0,#9f0,#df0,#fe0,#fb0,#fb0,#fc0,#f90,#f90,#fb0,#fe0,#ff0,#cf0,#bf0,#af0,#7f0,#6f0,#3f0,#1f0,#1f0,#0f1,#0f3,#0f6,#0f7,#0fb,#0fa,#0fe,#0fc,#0df,#0ef,#09f,#07f,#09f,#03f,#00f,#04f,#10f,#00f,#20f,#00f,#70f,#50f,#10f,#30f,#80f,#40f,#50f,#70f,#70f,#80f,#80f)"></i>
<i style="background:linear-gradient(#0fe,#0fe,#0df,#0fd,#0f8,#0f3,#1f0,#2f0,#5f0,#af0,#cf0,#fe0,#fd0,#fa0,#f90,#fb0,#fa0,#f80,#f90,#fd0,#fe0,#ff0,#bf0,#af0,#7f0,#8f0,#5f0,#4f0,#2f0,#0f0,#0f1,#0f4,#0f8,#0fa,#0fd,#0df,#0fe,#0fe,#0cf,#0af,#08f,#07f,#03f,#03f,#01f,#05f,#10f,#07f,#20f,#30f,#60f,#40f,#50f,#30f,#50f,#80f,#80f,#80f,#80f,#80f)"></i>
<i style="background:linear-gradient(#0f9,#0ef,#0fa,#0df,#0f7,#0f4,#1f0,#3f0,#6f0,#9f0,#cf0,#ef0,#fe0,#fb0,#f90,#fa0,#f90,#fa0,#fc0,#fd0,#ef0,#ef0,#df0,#af0,#8f0,#6f0,#3f0,#4f0,#0f0,#0f2,#0f3,#0f4,#0f6,#0f9,#0fa,#0fe,#0ef,#0ff,#0bf,#09f,#08f,#04f,#04f,#04f,#04f,#00f,#10f,#50f,#01f,#03f,#40f,#70f,#80f,#000,#10f,#70f,#50f,#50f,#000,#80f)"></i>
<i style="background:linear-gradient(#0ef,#0fa,#0cf,#0f9,#0f8,#0f3,#2f0,#3f0,#5f0,#9f0,#df0,#ff0,#fe0,#fc0,#f90,#fa0,#fa0,#f90,#fb0,#fe0,#fd0,#fe0,#cf0,#9f0,#8f0,#6f0,#5f0,#3f0,#0f0,#0f0,#0f0,#0f4,#0f6,#0fa,#0fe,#0fd,#0ff,#0ef,#0fd,#0df,#0af,#08f,#00f,#06f,#20f,#06f,#04f,#10f,#10f,#40f,#40f,#40f,#02f,#20f,#80f,#80f,#60f,#50f,#50f,#80f)"></i>
<i style="background:linear-gradient(#0ef,#0bf,#0bf,#0fa,#0f7,#0f3,#0f0,#3f0,#6f0,#bf0,#bf0,#ef0,#fe0,#fd0,#fc0,#fd0,#fb0,#fc0,#fa0,#ff0,#ef0,#cf0,#cf0,#9f0,#6f0,#6f0,#2f0,#0f0,#0f1,#0f0,#0f2,#0f6,#0f8,#0f9,#0f7,#0fa,#0df,#0ff,#06f,#08f,#02f,#07f,#00f,#00f,#20f,#10f,#30f,#20f,#50f,#60f,#50f,#80f,#00f,#000,#30f,#60f,#20f,#70f,#70f,#80f)"></i>
<i style="background:linear-gradient(#0af,#0cf,#0df,#0fd,#0f8,#0f3,#0f0,#3f0,#5f0,#9f0,#cf0,#ef0,#fd0,#fa0,#fa0,#f90,#f90,#fb0,#fb0,#fc0,#ff0,#cf0,#bf0,#9f0,#7f0,#5f0,#4f0,#2f0,#0f0,#0f1,#0f3,#0f4,#0f7,#0fa,#0fc,#0fe,#0ff,#0ff,#0df,#0bf,#0af,#01f,#03f,#10f,#0af,#05f,#01f,#20f,#30f,#10f,#08f,#10f,#50f,#80f,#80f,#000,#80f,#50f,#70f,#80f)"></i>
<i style="background:linear-gradient(#0fe,#0fe,#0fc,#0fd,#0f8,#0f3,#2f0,#1f0,#6f0,#8f0,#af0,#ff0,#fd0,#fd0,#fa0,#fb0,#fa0,#fa0,#fd0,#fc0,#ff0,#df0,#9f0,#bf0,#8f0,#5f0,#3f0,#2f0,#1f0,#0f0,#0f2,#0f5,#0f5,#0fa,#0fb,#0ff,#0bf,#0bf,#0df,#05f,#0af,#05f,#06f,#02f,#40f,#00f,#01f,#20f,#40f,#10f,#50f,#80f,#30f,#60f,#60f,#60f,#60f,#50f,#30f,#80f)"></i>
<i style="background:linear-gradient(#0ef,#0fd,#0ff,#0fc,#0f6,#0f2,#3f0,#3f0,#6f0,#af0,#cf0,#ff0,#fb0,#f90,#f80,#f90,#f90,#f80,#fa0,#fb0,#ff0,#df0,#cf0,#af0,#9f0,#7f0,#5f0,#2f0,#1f0,#0f1,#0f2,#0f2,#0f5,#0fa,#0ff,#0ff,#0df,#0ff,#0fe,#0af,#05f,#10f,#05f,#03f,#01f,#01f,#08f,#00f,#01f,#10f,#40f,#40f,#40f,#40f,#30f,#70f,#50f,#60f,#60f,#80f)"></i>
<i style="background:linear-gradient(#0ff,#0fe,#0cf,#08f,#0f9,#0f2,#3f0,#3f0,#6f0,#8f0,#cf0,#ff0,#fd0,#f80,#fb0,#f90,#f90,#fb0,#fa0,#fb0,#df0,#ff0,#bf0,#af0,#7f0,#6f0,#4f0,#3f0,#0f0,#0f1,#0f2,#0f5,#0f9,#0f8,#0fa,#0ff,#0cf,#0df,#0df,#0bf,#0cf,#01f,#09f,#06f,#00f,#02f,#01f,#20f,#30f,#10f,#30f,#10f,#40f,#20f,#30f,#20f,#000,#70f,#80f,#80f)"></i>
<i style="background:linear-gradient(#0ff,#08f,#0fa,#0fe,#0f7,#0f6,#0f4,#0f0,#2f0,#4f0,#7f0,#bf0,#ef0,#fd0,#fe0,#fd0,#fd0,#fd0,#fd0,#cf0,#bf0,#9f0,#8f0,#4f0,#4f0,#2f0,#0f2,#0f2,#0f3,#0f4,#0f7,#0f9,#0f9,#0cf,#0fc,#0fc,#0ef,#0cf,#0df,#06f,#06f,#0ef,#07f,#04f,#10f,#03f,#01f,#01f,#10f,#03f,#20f,#60f,#20f,#60f,#40f,#30f,#50f,#80f,#40f,#30f)"></i>
<i style="background:linear-gradient(#0ff,#0df,#0ff,#0fa,#0f7,#0f3,#3f0,#4f0,#8f0,#df0,#ff0,#fc0,#fb0,#f80,#f80,#f60,#f60,#f80,#f80,#fa0,#fd0,#ef0,#ef0,#df0,#9f0,#6f0,#5f0,#3f0,#4f0,#1f0,#0f1,#0f2,#0f4,#0f9,#0fd,#0ff,#0cf,#0fc,#0ff,#0bf,#07f,#00f,#0bf,#00f,#06f,#08f,#00f,#40f,#01f,#40f,#01f,#50f,#01f,#20f,#60f,#000,#80f,#80f,#50f,#80f)"></i>
<i style="background:linear-gradient(#0bf,#0fb,#0fd,#0fc,#0f6,#0f4,#1f0,#4f0,#6f0,#af0,#ef0,#fd0,#fb0,#f80,#f80,#f90,#f80,#f90,#f90,#fc0,#fd0,#ef0,#cf0,#af0,#9f0,#5f0,#5f0,#2f0,#1f0,#0f0,#0f3,#0f5,#0f6,#0f9,#0fd,#0fc,#0fe,#0df,#0df,#08f,#08f,#04f,#04f,#20f,#04f,#06f,#04f,#10f,#40f,#70f,#30f,#00f,#30f,#30f,#30f,#40f,#40f,#20f,#40f,#80f)"></i>
<i style="background:linear-gradient(#0ff,#0fb,#0fb,#0ef,#0f8,#0f2,#2f0,#3f0,#7f0,#9f0,#df0,#fd0,#fc0,#f80,#f80,#f90,#f90,#f80,#f90,#fa0,#fd0,#ef0,#ef0,#cf0,#8f0,#7f0,#6f0,#4f0,#1f0,#0f1,#0f3,#0f4,#0f6,#0f8,#0ff,#0fb,#0df,#0fe,#0ff,#0af,#06f,#0ef,#08f,#0df,#08f,#05f,#30f,#09f,#10f,#40f,#00f,#40f,#70f,#50f,#80f,#40f,#00f,#80f,#000,#60f)"></i>
<i style="background:linear-gradient(#0ff,#0cf,#0ff,#0fc,#0ef,#0f8,#0f6,#1f0,#3f0,#4f0,#8f0,#bf0,#ef0,#ff0,#fd0,#fc0,#fb0,#fd0,#fb0,#fe0,#fe0,#df0,#cf0,#af0,#af0,#7f0,#6f0,#3f0,#3f0,#0f1,#0f2,#0f4,#0f7,#0f9,#0fd,#0fa,#0ff,#0ef,#0fe,#0bf,#0af,#0fe,#0cf,#05f,#01f,#02f,#04f,#10f,#00f,#80f,#01f,#30f,#20f,#70f,#50f,#50f,#30f,#80f,#40f,#80f)"></i>
<i style="background:linear-gradient(#0fe,#0fd,#0fc,#0fb,#0bf,#0f7,#0fa,#0f5,#2f0,#3f0,#8f0,#8f0,#bf0,#fe0,#fb0,#fd0,#fd0,#fb0,#fe0,#fc0,#fe0,#fe0,#ff0,#ef0,#cf0,#cf0,#8f0,#6f0,#5f0,#2f0,#0f1,#0f2,#0f6,#0fa,#0fd,#0fa,#0fc,#0ef,#0cf,#09f,#07f,#08f,#04f,#07f,#06f,#20f,#30f,#06f,#70f,#10f,#50f,#60f,#40f,#60f,#40f,#30f,#80f,#000,#40f,#40f)"></i>
<i style="background:linear-gradient(#0fc,#0fd,#0fb,#0f6,#0fc,#0f9,#0f9,#0f5,#0f3,#0f1,#2f0,#4f0,#8f0,#9f0,#cf0,#ff0,#ef0,#df0,#ef0,#ff0,#ff0,#df0,#ef0,#cf0,#bf0,#cf0,#bf0,#6f0,#4f0,#5f0,#0f0,#0f2,#0f7,#0f9,#0fc,#0fb,#0df,#0df,#0af,#0bf,#06f,#04f,#08f,#06f,#30f,#08f,#07f,#10f,#10f,#10f,#40f,#10f,#00f,#000,#60f,#70f,#70f,#40f,#40f,#60f)"></i>
<i style="background:linear-gradient(#0ef,#0fa,#0fe,#0f9,#0fa,#0f6,#0fa,#0f6,#0f2,#0f0,#0f0,#2f0,#4f0,#4f0,#9f0,#bf0,#ef0,#ef0,#ef0,#ff0,#ef0,#ef0,#ff0,#ef0,#ef0,#bf0,#9f0,#7f0,#5f0,#4f0,#3f0,#0f4,#0f5,#0f9,#0fc,#0fe,#0fb,#0bf,#0df,#03f,#0ef,#05f,#09f,#07f,#06f,#00f,#05f,#00f,#20f,#30f,#30f,#10f,#40f,#80f,#20f,#70f,#20f,#50f,#50f,#80f)"></i>
<i style="background:linear-gradient(#0ef,#0ef,#0f9,#0fa,#0df,#0fa,#0fc,#0f6,#0f2,#0f3,#1f0,#0f1,#3f0,#4f0,#5f0,#af0,#df0,#ef0,#ff0,#fe0,#ff0,#ef0,#ff0,#ff0,#fe0,#ef0,#cf0,#af0,#9f0,#6f0,#3f0,#1f0,#0f0,#0f6,#0f9,#0fb,#0fe,#0ef,#0af,#09f,#0bf,#0af,#0bf,#01f,#09f,#60f,#40f,#00f,#50f,#40f,#50f,#30f,#60f,#00f,#70f,#50f,#40f,#80f,#80f,#30f)"></i>
<i style="background:linear-gradient(#0f8,#0f9,#0ef,#0fd,#0f5,#0ff,#0f9,#0f4,#0f3,#0f1,#0f0,#0f2,#0f1,#0f1,#1f0,#5f0,#7f0,#9f0,#ef0,#ff0,#cf0,#ff0,#df0,#ff0,#df0,#df0,#bf0,#cf0,#9f0,#7f0,#1f0,#0f1,#2f0,#0f6,#0f9,#0fd,#0ff,#0df,#09f,#07f,#09f,#02f,#05f,#05f,#06f,#07f,#00f,#10f,#10f,#40f,#10f,#20f,#60f,#50f,#80f,#50f,#80f,#20f,#000,#80f)"></i>
<i style="background:linear-gradient(#0fb,#0ff,#0cf,#0cf,#0fc,#0f9,#0fa,#0f5,#0f2,#0f3,#0f2,#0f2,#0f0,#1f0,#3f0,#5f0,#8f0,#af0,#cf0,#ef0,#df0,#ff0,#ef0,#ef0,#ef0,#af0,#bf0,#cf0,#8f0,#4f0,#1f0,#0f2,#0f0,#0f6,#0fc,#0fc,#0fb,#0ef,#0ff,#03f,#09f,#00f,#04f,#09f,#01f,#00f,#03f,#50f,#01f,#20f,#01f,#80f,#20f,#70f,#30f,#80f,#20f,#80f,#70f,#60f)"></i>
<i style="background:linear-gradient(#0df,#0fa,#0fe,#0ef,#0cf,#0df,#0fd,#0f9,#0f5,#0f6,#0f5,#0f4,#0f4,#0f3,#1f0,#4f0,#5f0,#af0,#bf0,#8f0,#af0,#af0,#8f0,#af0,#bf0,#bf0,#7f0,#5f0,#4f0,#0f0,#0f4,#0f4,#0f5,#0fa,#0ef,#0ef,#0fe,#0bf,#05f,#08f,#05f,#30f,#02f,#01f,#05f,#09f,#00f,#10f,#40f,#10f,#50f,#70f,#80f,#01f,#30f,#000,#80f,#60f,#80f,#10f)"></i>
<i style="background:linear-gradient(#0cf,#0fa,#0df,#0cf,#0f4,#0ff,#0fa,#0f4,#0f3,#0f1,#1f0,#0f0,#2f0,#5f0,#6f0,#9f0,#bf0,#fd0,#ff0,#ff0,#ef0,#ef0,#df0,#ef0,#ff0,#ef0,#bf0,#af0,#7f0,#4f0,#1f0,#2f0,#0f3,#0f7,#0f9,#0f9,#0fe,#0ef,#0cf,#09f,#08f,#05f,#0ef,#10f,#00f,#01f,#01f,#04f,#40f,#10f,#20f,#05f,#10f,#30f,#80f,#50f,#50f,#40f,#70f,#70f)"></i>
<i style="background:linear-gradient(#0ef,#0cf,#0fc,#0fd,#0fe,#0fb,#0fa,#0f5,#0f2,#0f2,#1f0,#0f0,#4f0,#5f0,#7f0,#cf0,#df0,#ef0,#df0,#fe0,#df0,#ef0,#ef0,#ef0,#ef0,#cf0,#cf0,#9f0,#7f0,#3f0,#0f2,#1f0,#0f3,#0f6,#0f8,#0ff,#0ff,#0cf,#0ff,#0af,#06f,#00f,#0af,#0af,#10f,#01f,#00f,#08f,#20f,#60f,#00f,#01f,#70f,#40f,#60f,#50f,#80f,#70f,#60f,#60f)"></i>
<i style="background:linear-gradient(#0fd,#0ff,#0fe,#0f9,#0f7,#0fd,#0f9,#0f4,#0f2,#0f2,#1f0,#2f0,#3f0,#6f0,#9f0,#ef0,#ef0,#ff0,#ef0,#fe0,#ef0,#ff0,#df0,#fe0,#df0,#cf0,#af0,#8f0,#7f0,#5f0,#1f0,#0f3,#0f6,#0fa,#0fb,#0fd,#0ff,#0ef,#0bf,#0fe,#09f,#0df,#07f,#0bf,#03f,#07f,#04f,#01f,#05f,#50f,#30f,#20f,#30f,#60f,#40f,#10f,#60f,#10f,#80f,#50f)"></i>
<i style="background:linear-gradient(#0fc,#0fd,#0ef,#0f9,#07f,#0f9,#0fa,#0f7,#0f3,#0f2,#0f0,#2f0,#5f0,#6f0,#9f0,#df0,#ff0,#fe0,#ef0,#cf0,#ef0,#df0,#ef0,#fe0,#cf0,#df0,#af0,#7f0,#5f0,#3f0,#1f0,#0f3,#0f6,#0fa,#0fa,#0ff,#0fe,#0ef,#0af,#09f,#03f,#04f,#05f,#08f,#06f,#02f,#00f,#02f,#03f,#60f,#40f,#40f,#20f,#50f,#40f,#70f,#50f,#50f,#000,#50f)"></i>
<i style="background:linear-gradient(#0f6,#0fb,#0fc,#0fa,#0f4,#0fe,#0fc,#0f6,#0f3,#0f3,#1f0,#2f0,#4f0,#7f0,#cf0,#cf0,#ef0,#df0,#cf0,#df0,#ef0,#df0,#df0,#ef0,#bf0,#bf0,#8f0,#6f0,#2f0,#4f0,#2f0,#0f5,#0f6,#0fa,#0fe,#0fe,#0fe,#0fd,#0ff,#06f,#06f,#0af,#0af,#02f,#0bf,#30f,#20f,#00f,#00f,#40f,#60f,#10f,#30f,#70f,#20f,#80f,#30f,#60f,#60f,#000)"></i>
<i style="background:linear-gradient(#0df,#0af,#0fc,#0fe,#0fc,#0f6,#0fe,#0f7,#0f4,#0f2,#0f0,#3f0,#7f0,#9f0,#cf0,#df0,#df0,#df0,#df0,#ef0,#df0,#ef0,#df0,#bf0,#cf0,#bf0,#7f0,#4f0,#3f0,#1f0,#0f1,#0f6,#0f8,#0f8,#0f9,#0fc,#0ef,#0ef,#09f,#04f,#0cf,#05f,#04f,#09f,#00f,#04f,#02f,#07f,#20f,#03f,#50f,#40f,#80f,#70f,#40f,#70f,#10f,#40f,#80f,#80f)"></i>
<i style="background:linear-gradient(#0fe,#0ef,#05f,#0f9,#0fc,#0ef,#0f8,#0f6,#0f1,#1f0,#2f0,#6f0,#9f0,#bf0,#ff0,#ef0,#ff0,#ff0,#ff0,#fe0,#ff0,#ef0,#ff0,#ef0,#bf0,#af0,#8f0,#4f0,#4f0,#3f0,#0f0,#0f2,#0f6,#0f9,#0f9,#0ff,#0fd,#0ff,#0cf,#09f,#03f,#05f,#20f,#20f,#02f,#30f,#04f,#10f,#05f,#20f,#10f,#30f,#70f,#40f,#60f,#40f,#70f,#50f,#80f,#60f)"></i>
<i style="background:linear-gradient(#0df,#0fc,#0ff,#0ff,#0fc,#0fa,#0f9,#0f7,#0f2,#0f1,#4f0,#5f0,#9f0,#bf0,#ef0,#df0,#fe0,#ff0,#df0,#ef0,#ef0,#ef0,#df0,#cf0,#9f0,#6f0,#5f0,#5f0,#2f0,#2f0,#0f2,#0f4,#0f8,#0f9,#0fe,#0fe,#0ff,#0cf,#0af,#07f,#01f,#06f,#10f,#07f,#03f,#30f,#20f,#03f,#30f,#30f,#10f,#20f,#50f,#50f,#01f,#60f,#20f,#20f,#80f,#50f)"></i>
<i style="background:linear-gradient(#0ef,#0fd,#0fe,#09f,#0cf,#0ff,#0f8,#0f5,#0f1,#0f1,#1f0,#4f0,#7f0,#bf0,#af0,#df0,#df0,#df0,#bf0,#df0,#df0,#cf0,#cf0,#9f0,#9f0,#6f0,#4f0,#3f0,#0f0,#0f2,#0f3,#0f5,#0f8,#0f9,#0fd,#0fe,#0fe,#0fd,#05f,#09f,#06f,#00f,#0ef,#06f,#20f,#05f,#10f,#10f,#40f,#01f,#02f,#60f,#30f,#60f,#70f,#50f,#70f,#80f,#30f,#80f)"></i>
<i style="background:linear-gradient(#0df,#0cf,#0fc,#0fd,#0f9,#0f7,#0fb,#0f6,#0f2,#1f0,#4f0,#5f0,#bf0,#df0,#ef0,#ff0,#ff0,#fe0,#ff0,#ef0,#cf0,#ef0,#ef0,#df0,#af0,#af0,#7f0,#4f0,#2f0,#2f0,#0f2,#0f3,#0f6,#0f8,#0fe,#0df,#0ff,#0df,#0fc,#0cf,#07f,#20f,#06f,#04f,#10f,#30f,#04f,#00f,#01f,#00f,#40f,#60f,#50f,#40f,#70f,#000,#30f,#80f,#40f,#70f)"></i>
<i style="background:linear-gradient(#0bf,#0df,#0ef,#0fd,#0fa,#0fe,#0f9,#0f5,#1f0,#3f0,#5f0,#8f0,#bf0,#ff0,#fd0,#fe0,#fd0,#fd0,#fc0,#fd0,#ff0,#fe0,#ef0,#ef0,#df0,#af0,#8f0,#6f0,#5f0,#1f0,#0f0,#0f3,#0f5,#0f9,#0fb,#0cf,#0fc,#0cf,#0cf,#08f,#07f,#08f,#06f,#20f,#0bf,#01f,#30f,#00f,#00f,#30f,#10f,#40f,#30f,#70f,#50f,#40f,#30f,#60f,#80f,#50f)"></i>
<i style="background:linear-gradient(#0fa,#0fc,#0df,#0bf,#0fa,#0f9,#0f8,#0f5,#2f0,#5f0,#6f0,#9f0,#cf0,#fd0,#fd0,#fd0,#fe0,#fd0,#fb0,#fa0,#fc0,#fb0,#fd0,#fe0,#df0,#bf0,#9f0,#7f0,#5f0,#4f0,#0f2,#0f2,#0f5,#0f9,#0fa,#0fc,#0fa,#0fd,#0ef,#0fe,#0df,#09f,#0bf,#02f,#0af,#06f,#05f,#08f,#20f,#30f,#30f,#00f,#60f,#60f,#80f,#80f,#30f,#40f,#50f,#40f)"></i>
<i style="background:linear-gradient(#0ff,#0cf,#0fe,#0ff,#0ff,#05f,#0fa,#0f5,#0f2,#2f0,#2f0,#7f0,#bf0,#cf0,#fe0,#ff0,#ff0,#ff0,#fd0,#fe0,#fe0,#ff0,#ef0,#cf0,#cf0,#8f0,#9f0,#4f0,#3f0,#1f0,#0f3,#0f6,#0f7,#0fa,#0fa,#0fe,#0fd,#0fd,#0cf,#09f,#09f,#0cf,#01f,#0af,#09f,#20f,#00f,#10f,#00f,#10f,#30f,#30f,#40f,#40f,#60f,#80f,#40f,#30f,#70f,#70f)"></i>
<i style="background:linear-gradient(#0f9,#0fd,#0fa,#08f,#0ef,#0fe,#0f8,#0f3,#0f0,#3f0,#5f0,#8f0,#cf0,#fe0,#fc0,#fb0,#fb0,#fc0,#fc0,#fd0,#fe0,#fd0,#fe0,#fe0,#cf0,#cf0,#7f0,#5f0,#6f0,#4f0,#1f0,#0f2,#0f5,#0f9,#0fb,#0fd,#0fd,#0ef,#0ef,#0cf,#08f,#08f,#06f,#05f,#01f,#10f,#20f,#50f,#10f,#10f,#05f,#40f,#02f,#70f,#70f,#60f,#30f,#80f,#80f,#70f)"></i>
<i style="background:linear-gradient(#0df,#0fb,#09f,#0ff,#0fb,#0f6,#0f8,#0f5,#0f0,#3f0,#5f0,#6f0,#af0,#df0,#fe0,#fe0,#fd0,#fd0,#fd0,#ff0,#ff0,#ff0,#df0,#df0,#ef0,#af0,#7f0,#7f0,#3f0,#3f0,#0f2,#0f5,#0f6,#0f9,#0fb,#0fd,#0fe,#0fc,#0cf,#0cf,#10f,#03f,#06f,#01f,#05f,#04f,#07f,#20f,#30f,#40f,#40f,#40f,#80f,#20f,#50f,#70f,#80f,#80f,#80f,#30f)"></i>
<i style="background:linear-gradient(#0fe,#0fe,#0bf,#0f8,#0f9,#0fb,#0f8,#0f6,#0f1,#3f0,#4f0,#9f0,#af0,#df0,#ff0,#fe0,#fe0,#fe0,#ff0,#fd0,#fd0,#ff0,#ef0,#ef0,#df0,#bf0,#8f0,#5f0,#4f0,#2f0,#1f0,#0f4,#0f7,#0f9,#0fb,#0fd,#0fe,#0bf,#0cf,#0df,#0cf,#0fe,#01f,#01f,#08f,#00f,#06f,#00f,#20f,#50f,#02f,#80f,#40f,#40f,#20f,#80f,#50f,#80f,#70f,#70f)"></i>
<i style="background:linear-gradient(#0fd,#05f,#0df,#0ef,#0fd,#0fd,#0f9,#0f6,#0f1,#0f1,#3f0,#6f0,#7f0,#bf0,#bf0,#df0,#bf0,#df0,#cf0,#df0,#cf0,#cf0,#bf0,#bf0,#af0,#5f0,#4f0,#4f0,#1f0,#0f0,#0f1,#0f3,#0f7,#0fb,#0fe,#0fe,#0bf,#0df,#0af,#0fe,#05f,#10f,#04f,#03f,#10f,#03f,#20f,#00f,#01f,#30f,#60f,#20f,#70f,#70f,#00f,#40f,#70f,#80f,#000,#80f)"></i>
<i style="background:linear-gradient(#08f,#0fa,#06f,#0f8,#0fd,#0f9,#0f9,#0f5,#0f0,#2f0,#4f0,#5f0,#bf0,#df0,#df0,#fe0,#ef0,#fe0,#ff0,#ff0,#ff0,#ff0,#ff0,#cf0,#bf0,#8f0,#7f0,#5f0,#2f0,#2f0,#0f1,#0f5,#0f9,#0fb,#0fc,#0fe,#0fe,#0ef,#0af,#09f,#0bf,#02f,#01f,#08f,#05f,#04f,#03f,#01f,#30f,#50f,#50f,#00f,#20f,#60f,#40f,#20f,#70f,#50f,#80f,#80f)"></i>
<i style="background:linear-gradient(#0bf,#0f9,#0ff,#0fb,#0fe,#0f2,#0fa,#0f5,#1f0,#4f0,#7f0,#af0,#ef0,#fe0,#fe0,#fc0,#fc0,#fc0,#fc0,#fd0,#fc0,#fc0,#fe0,#fe0,#df0,#bf0,#9f0,#6f0,#6f0,#4f0,#0f0,#0f2,#0f6,#0f9,#0fc,#0fb,#0df,#0fd,#07f,#0ff,#0cf,#0cf,#07f,#0af,#01f,#00f,#04f,#20f,#10f,#03f,#20f,#20f,#40f,#60f,#20f,#10f,#60f,#000,#50f,#50f)"></i>
<i style="background:linear-gradient(#0fc,#0f8,#0fa,#0ff,#0f9,#0ef,#0f9,#0f2,#1f0,#3f0,#5f0,#8f0,#bf0,#ff0,#fd0,#fd0,#fd0,#fd0,#fd0,#fc0,#fc0,#fc0,#ff0,#fe0,#cf0,#bf0,#9f0,#7f0,#4f0,#4f0,#1f0,#0f3,#0f5,#0fa,#0fa,#0fb,#0fd,#0cf,#0ff,#08f,#0df,#02f,#07f,#0bf,#07f,#02f,#20f,#07f,#10f,#01f,#30f,#30f,#01f,#50f,#80f,#80f,#60f,#50f,#80f,#000)"></i>
<i style="background:linear-gradient(#0fe,#0fb,#0df,#0bf,#0f7,#0fc,#0f8,#0f4,#1f0,#2f0,#6f0,#9f0,#df0,#ff0,#fe0,#ff0,#fc0,#fd0,#fd0,#fd0,#fe0,#fd0,#fe0,#ff0,#cf0,#af0,#8f0,#7f0,#4f0,#3f0,#1f0,#0f4,#0f5,#0f9,#0fb,#0fc,#0fb,#0ff,#0ef,#0ef,#09f,#10f,#04f,#09f,#04f,#00f,#02f,#01f,#01f,#00f,#00f,#10f,#80f,#00f,#80f,#80f,#20f,#70f,#40f,#40f)"></i>
<i style="background:linear-gradient(#08f,#09f,#0fe,#0fb,#0fe,#0fe,#0f8,#0f7,#0f1,#0f0,#3f0,#6f0,#af0,#cf0,#ef0,#ff0,#ef0,#df0,#ff0,#ff0,#ef0,#cf0,#ff0,#cf0,#8f0,#9f0,#6f0,#5f0,#4f0,#2f0,#0f1,#0f4,#0f8,#0fa,#0ef,#0fc,#0fe,#0fe,#08f,#0ef,#07f,#02f,#04f,#08f,#01f,#05f,#01f,#00f,#40f,#50f,#50f,#30f,#70f,#60f,#60f,#80f,#20f,#70f,#60f,#000)"></i>
<i style="background:linear-gradient(#0df,#0f9,#0df,#0fa,#0ff,#0f9,#0f9,#0f5,#1f0,#3f0,#5f0,#8f0,#bf0,#ff0,#ff0,#fd0,#fd0,#fc0,#fe0,#fd0,#fe0,#fd0,#fd0,#ff0,#df0,#af0,#9f0,#7f0,#5f0,#2f0,#1f0,#0f2,#0f6,#0f9,#0fc,#0fd,#0df,#0ef,#0ef,#0cf,#09f,#05f,#10f,#0df,#01f,#08f,#07f,#00f,#00f,#20f,#10f,#60f,#10f,#20f,#50f,#40f,#70f,#60f,#70f,#70f)"></i>
<i style="background:linear-gradient(#0bf,#0fd,#0fc,#0bf,#0f3,#0ff,#0f9,#0f4,#0f0,#2f0,#3f0,#7f0,#af0,#ef0,#ff0,#ff0,#fe0,#fd0,#fe0,#ff0,#fe0,#ef0,#ef0,#df0,#bf0,#7f0,#6f0,#5f0,#3f0,#2f0,#0f0,#0f5,#0f8,#0f9,#0fb,#0ef,#0cf,#0fe,#0cf,#08f,#0df,#10f,#05f,#07f,#40f,#30f,#30f,#00f,#01f,#01f,#40f,#20f,#50f,#000,#50f,#60f,#60f,#40f,#60f,#80f)"></i>
<i style="background:linear-gradient(#0df,#0fb,#0fc,#0ff,#0bf,#0bf,#0fa,#0f4,#0f1,#1f0,#4f0,#6f0,#bf0,#ef0,#ff0,#ff0,#ff0,#ff0,#ff0,#ef0,#ff0,#ef0,#ef0,#cf0,#bf0,#af0,#7f0,#5f0,#4f0,#2f0,#0f0,#0f4,#0f5,#0f9,#0fc,#0fd,#0ef,#0df,#0ef,#07f,#07f,#07f,#0bf,#0af,#00f,#02f,#05f,#20f,#00f,#03f,#40f,#20f,#20f,#30f,#80f,#40f,#80f,#80f,#70f,#40f)"></i>
<i style="background:linear-gradient(#0fa,#0ff,#0f9,#0f9,#0fc,#0cf,#0fb,#0f5,#0f0,#1f0,#3f0,#3f0,#8f0,#cf0,#df0,#df0,#ef0,#fe0,#ff0,#df0,#ff0,#df0,#df0,#cf0,#bf0,#8f0,#5f0,#5f0,#3f0,#0f0,#0f1,#0f5,#0f8,#0f9,#0fe,#0fc,#0ff,#0fe,#0af,#0fe,#02f,#0af,#03f,#0af,#10f,#02f,#30f,#03f,#01f,#30f,#60f,#40f,#50f,#30f,#70f,#20f,#60f,#70f,#60f,#80f)"></i>
<i style="background:linear-gradient(#0cf,#0ef,#0fe,#0ef,#0fe,#0fa,#0fa,#0f5,#0f0,#0f0,#3f0,#6f0,#8f0,#af0,#df0,#ef0,#df0,#ff0,#ef0,#df0,#ef0,#ef0,#df0,#bf0,#9f0,#7f0,#7f0,#4f0,#4f0,#1f0,#0f3,#0f5,#0f8,#0fb,#0ff,#0fd,#0df,#0bf,#0cf,#0cf,#0af,#0af,#06f,#05f,#04f,#05f,#00f,#10f,#09f,#10f,#20f,#50f,#70f,#50f,#000,#80f,#80f,#80f,#000,#40f)"></i>
<i style="background:linear-gradient(#0f8,#0ef,#0fb,#0fc,#0f8,#0fc,#0fa,#0f6,#0f1,#1f0,#2f0,#5f0,#7f0,#af0,#cf0,#df0,#df0,#df0,#ef0,#df0,#bf0,#df0,#cf0,#af0,#af0,#8f0,#7f0,#2f0,#1f0,#0f0,#0f2,#0f5,#0f8,#0fb,#0fe,#0fc,#0ff,#0ef,#05f,#07f,#03f,#04f,#0bf,#10f,#01f,#06f,#04f,#00f,#20f,#60f,#80f,#50f,#50f,#80f,#60f,#80f,#000,#50f,#80f,#60f)"></i>
<i style="background:linear-gradient(#0df,#0f9,#0fd,#09f,#0fe,#0fa,#0fb,#0f4,#0f2,#0f0,#1f0,#6f0,#af0,#cf0,#ef0,#cf0,#df0,#df0,#df0,#ef0,#df0,#cf0,#ef0,#af0,#8f0,#8f0,#5f0,#4f0,#2f0,#0f2,#0f3,#0f4,#0f7,#0fa,#0fd,#0fd,#0ff,#07f,#09f,#0af,#02f,#0ef,#03f,#07f,#40f,#20f,#00f,#40f,#00f,#60f,#30f,#10f,#40f,#60f,#70f,#80f,#80f,#70f,#50f,#80f)"></i>
<i style="background:linear-gradient(#0cf,#0fe,#0ef,#0df,#0af,#0bf,#0fb,#0f6,#0f1,#0f1,#1f0,#3f0,#9f0,#cf0,#df0,#df0,#ef0,#df0,#ef0,#cf0,#cf0,#df0,#bf0,#af0,#9f0,#7f0,#4f0,#3f0,#3f0,#0f1,#0f3,#0f5,#0f9,#0fa,#0fc,#0fc,#0df,#0df,#0df,#09f,#04f,#06f,#10f,#08f,#05f,#02f,#07f,#10f,#60f,#10f,#06f,#30f,#40f,#40f,#70f,#30f,#80f,#80f,#000,#50f)"></i>
<i style="background:linear-gradient(#0fa,#0ef,#0f9,#0fb,#0df,#0ef,#0fa,#0f5,#0f2,#1f0,#3f0,#6f0,#8f0,#df0,#ff0,#ef0,#ef0,#ff0,#ff0,#fe0,#ff0,#cf0,#ef0,#cf0,#9f0,#9f0,#5f0,#5f0,#3f0,#2f0,#0f1,#0f4,#0f6,#0fb,#0fd,#0fe,#0fb,#0df,#0df,#0af,#08f,#03f,#04f,#0ff,#00f,#02f,#10f,#05f,#04f,#50f,#50f,#50f,#30f,#40f,#60f,#70f,#80f,#80f,#80f,#80f)"></i>
<i style="background:linear-gradient(#0fc,#0bf,#0ef,#0cf,#0fc,#0ff,#0fa,#0f5,#0f1,#2f0,#4f0,#6f0,#9f0,#ef0,#fe0,#ff0,#ef0,#fe0,#fe0,#ff0,#fe0,#df0,#ef0,#cf0,#bf0,#9f0,#6f0,#4f0,#3f0,#2f0,#0f0,#0f4,#0f6,#0fa,#0ff,#0fd,#0ff,#0ff,#0ff,#0bf,#07f,#02f,#0df,#10f,#02f,#02f,#10f,#30f,#40f,#40f,#60f,#20f,#01f,#30f,#80f,#50f,#60f,#50f,#80f,#40f)"></i>
<i style="background:linear-gradient(#0fa,#0fd,#0fd,#0cf,#0fd,#0f9,#0f9,#0f5,#0f1,#1f0,#4f0,#6f0,#bf0,#df0,#ff0,#fe0,#ff0,#fe0,#ff0,#ff0,#fe0,#fe0,#ff0,#ff0,#bf0,#af0,#7f0,#4f0,#5f0,#3f0,#0f0,#0f3,#0f7,#0f8,#0fc,#0fb,#0ff,#0af,#0df,#07f,#05f,#04f,#08f,#0cf,#04f,#05f,#03f,#04f,#03f,#40f,#50f,#10f,#80f,#40f,#70f,#80f,#50f,#10f,#60f,#40f)"></i>
<i style="background:linear-gradient(#0f7,#0fe,#0f4,#0cf,#0ff,#0fa,#0fa,#0f3,#0f0,#2f0,#4f0,#af0,#bf0,#ef0,#fe0,#fd0,#fd0,#fe0,#fd0,#fc0,#fd0,#fc0,#fe0,#ff0,#df0,#bf0,#9f0,#6f0,#5f0,#3f0,#2f0,#0f2,#0f5,#0fa,#0fa,#0fc,#0ff,#0ff,#0ff,#0fe,#0ff,#05f,#01f,#09f,#10f,#09f,#06f,#10f,#00f,#10f,#20f,#50f,#01f,#40f,#50f,#80f,#20f,#70f,#80f,#40f)"></i>
<i style="background:linear-gradient(#0fb,#0fe,#0fa,#0fe,#0ff,#0fd,#0f8,#0f3,#1f0,#2f0,#4f0,#8f0,#cf0,#ff0,#df0,#fd0,#fd0,#fd0,#fd0,#fc0,#fd0,#ff0,#fd0,#ef0,#cf0,#bf0,#9f0,#7f0,#5f0,#3f0,#0f0,#0f4,#0f7,#0fb,#0fc,#0ef,#0fd,#0ff,#0ff,#0bf,#0af,#00f,#0af,#06f,#02f,#00f,#10f,#10f,#05f,#40f,#02f,#00f,#40f,#000,#80f,#60f,#20f,#80f,#80f,#80f)"></i>
<i style="background:linear-gradient(#0fa,#0fa,#0ef,#0cf,#0cf,#0ef,#0f9,#0f6,#0f0,#4f0,#4f0,#8f0,#cf0,#fe0,#fd0,#ff0,#fc0,#fb0,#fb0,#fb0,#fc0,#fc0,#ff0,#ff0,#df0,#cf0,#9f0,#8f0,#7f0,#2f0,#2f0,#0f4,#0f7,#0fa,#0f8,#0fb,#0fe,#0fb,#0ff,#0bf,#05f,#01f,#05f,#03f,#10f,#02f,#40f,#0af,#07f,#30f,#70f,#70f,#50f,#30f,#40f,#50f,#60f,#50f,#20f,#70f)"></i>
<i style="background:linear-gradient(#08f,#0fc,#0fd,#0fe,#0bf,#0fc,#0f9,#0f6,#0f2,#0f0,#1f0,#5f0,#9f0,#cf0,#cf0,#cf0,#ef0,#df0,#df0,#df0,#ef0,#cf0,#df0,#df0,#af0,#8f0,#5f0,#5f0,#5f0,#0f0,#0f3,#0f5,#0f8,#0fa,#0f9,#0fd,#0fe,#0df,#0ff,#05f,#02f,#06f,#06f,#04f,#08f,#01f,#00f,#30f,#50f,#00f,#40f,#50f,#10f,#80f,#80f,#50f,#50f,#80f,#70f,#70f)"></i>
<i style="background:#000"></i>
<i style="background:linear-gradient(#0fd,#0fd,#0fe,#0f7,#0ff,#0f9,#0f8,#0f3,#0f0,#2f0,#4f0,#7f0,#8f0,#af0,#bf0,#cf0,#cf0,#bf0,#df0,#cf0,#cf0,#af0,#af0,#af0,#af0,#af0,#7f0,#5f0,#5f0,#3f0,#0f1,#0f2,#0f6,#0f9,#0fb,#0fe,#0ef,#0fe,#0ef,#08f,#06f,#09f,#03f,#03f,#20f,#07f,#30f,#00f,#01f,#30f,#07f,#10f,#60f,#40f,#70f,#60f,#30f,#40f,#60f,#80f)"></i>
<i style="background:linear-gradient(#0fe,#0fd,#0bf,#0fe,#0fd,#0f5,#0f8,#0f4,#0f1,#4f0,#4f0,#6f0,#7f0,#9f0,#af0,#ef0,#ef0,#df0,#cf0,#df0,#df0,#cf0,#af0,#bf0,#af0,#8f0,#8f0,#6f0,#5f0,#2f0,#2f0,#0f3,#0f6,#0fa,#0fc,#0fc,#0ff,#0fe,#0cf,#0af,#04f,#06f,#00f,#05f,#0cf,#06f,#30f,#05f,#10f,#20f,#50f,#80f,#80f,#30f,#80f,#80f,#50f,#000,#80f,#80f)"></i>
<i style="background:linear-gradient(#0fc,#0fb,#0fd,#0f7,#0df,#0fc,#0f7,#0f4,#1f0,#1f0,#5f0,#5f0,#7f0,#bf0,#bf0,#cf0,#df0,#cf0,#df0,#cf0,#cf0,#cf0,#9f0,#9f0,#8f0,#6f0,#6f0,#5f0,#3f0,#3f0,#1f0,#0f4,#0ff,#0bf,#0df,#0df,#0ef,#0fb,#0ef,#0ef,#0df,#0ff,#07f,#02f,#03f,#00f,#40f,#60f,#30f,#20f,#30f,#40f,#40f,#50f,#00f,#00f,#40f,#80f,#40f,#80f)"></i>
<i style="background:linear-gradient(#0ef,#0fb,#0bf,#0fa,#0f6,#0ef,#0fa,#0f4,#0f0,#5f0,#5f0,#7f0,#8f0,#bf0,#bf0,#df0,#ef0,#df0,#af0,#cf0,#ef0,#bf0,#df0,#af0,#9f0,#8f0,#8f0,#6f0,#3f0,#4f0,#3f0,#0f2,#0f7,#0f9,#0fc,#0fd,#0cf,#0cf,#0af,#0bf,#07f,#0cf,#0cf,#09f,#03f,#00f,#20f,#01f,#00f,#04f,#04f,#80f,#10f,#60f,#50f,#60f,#60f,#80f,#60f,#80f)"></i>
<i style="background:linear-gradient(#0fa,#0fd,#0fc,#0fd,#0bf,#0f3,#0fa,#0f4,#1f0,#1f0,#6f0,#5f0,#6f0,#af0,#bf0,#df0,#cf0,#df0,#df0,#ef0,#cf0,#cf0,#cf0,#bf0,#bf0,#8f0,#7f0,#6f0,#6f0,#3f0,#1f0,#0f4,#0f5,#0f8,#0fc,#0ff,#0ef,#0fc,#0fc,#0af,#0ef,#0f1,#0f2,#0f1,#0f0,#0f1,#0f2,#0f1,#0f1,#0f2,#0f1,#1f0,#0f1,#0f3,#0f2,#0f2,#0f2,#0f1,#0f1,#0f2)"></i>
<i style="background:linear-gradient(#0f6,#0df,#0fb,#0fa,#0f8,#0f9,#0f8,#0f4,#2f0,#3f0,#5f0,#8f0,#9f0,#bf0,#cf0,#ff0,#ef0,#df0,#ef0,#cf0,#cf0,#cf0,#cf0,#ef0,#9f0,#9f0,#8f0,#6f0,#6f0,#6f0,#2f0,#0f3,#0f6,#0f8,#0ff,#0fc,#0ff,#0cf,#0bf,#09f,#09f,#07f,#04f,#05f,#30f,#60f,#00f,#10f,#30f,#20f,#40f,#50f,#0f5,#0f4,#0f4,#0f3,#0f5,#0f4,#0f5,#0f3)"></i>
<i style="background:linear-gradient(#0fc,#0fb,#0fa,#0f7,#0fa,#0fa,#0f8,#0f3,#1f0,#1f0,#4f0,#6f0,#8f0,#bf0,#df0,#bf0,#df0,#cf0,#cf0,#cf0,#ef0,#cf0,#bf0,#cf0,#9f0,#9f0,#7f0,#7f0,#5f0,#3f0,#0f1,#0f5,#0f7,#0f9,#0fa,#0fd,#0fd,#0ff,#0bf,#0cf,#0df,#06f,#06f,#08f,#01f,#05f,#30f,#00f,#00f,#50f,#20f,#20f,#10f,#40f,#50f,#60f,#70f,#80f,#80f,#70f)"></i>
<i style="background:linear-gradient(#0fc,#0fb,#0f6,#0f8,#0f7,#0fd,#0fb,#0f4,#0f1,#0f0,#1f0,#3f0,#6f0,#7f0,#8f0,#af0,#af0,#af0,#8f0,#af0,#bf0,#af0,#9f0,#9f0,#7f0,#8f0,#3f0,#4f0,#2f0,#1f0,#0f2,#0f5,#0f7,#0fb,#0fc,#0ff,#0fd,#0af,#0af,#0bf,#0df,#07f,#06f,#00f,#01f,#10f,#20f,#00f,#20f,#40f,#10f,#30f,#40f,#80f,#70f,#80f,#70f,#70f,#70f,#80f)"></i>
<i style="background:linear-gradient(#0fd,#0cf,#0af,#0fa,#0f7,#0fc,#0f9,#0f4,#0f1,#1f0,#0f0,#3f0,#6f0,#7f0,#bf0,#9f0,#8f0,#bf0,#9f0,#bf0,#bf0,#af0,#af0,#bf0,#7f0,#7f0,#3f0,#5f0,#3f0,#1f0,#0f2,#0f6,#0f7,#0f9,#0fd,#0ef,#0ff,#0ef,#0bf,#0fb,#0af,#0ff,#09f,#06f,#20f,#06f,#10f,#10f,#20f,#20f,#80f,#40f,#10f,#80f,#50f,#80f,#80f,#80f,#70f,#80f)"></i>
<i style="background:#000"></i>
<i style="background:linear-gradient(#0fe,#0ef,#0df,#0fa,#0fb,#0fc,#0f8,#0f5,#0f3,#2f0,#3f0,#6f0,#8f0,#df0,#df0,#ff0,#ff0,#ff0,#ff0,#ff0,#ff0,#ef0,#ef0,#df0,#9f0,#8f0,#7f0,#3f0,#3f0,#2f0,#0f2,#0f6,#0f7,#0fb,#0fb,#0ef,#0ef,#0df,#0af,#0cf,#0cf,#07f,#09f,#03f,#05f,#02f,#07f,#10f,#10f,#50f,#02f,#30f,#60f,#20f,#80f,#50f,#80f,#80f,#80f,#50f)"></i>
<i style="background:linear-gradient(#0ef,#08f,#0ff,#0fc,#0f9,#0cf,#0f9,#0f3,#0f0,#1f0,#5f0,#8f0,#9f0,#ef0,#ff0,#fb0,#fa0,#fc0,#fb0,#fb0,#fc0,#fe0,#ff0,#df0,#af0,#8f0,#7f0,#5f0,#2f0,#1f0,#0f1,#0f5,#0f7,#0fb,#0fc,#0fe,#0fd,#0cf,#07f,#0bf,#0cf,#05f,#01f,#20f,#10f,#30f,#10f,#10f,#30f,#10f,#20f,#70f,#20f,#60f,#60f,#70f,#80f,#70f,#80f,#80f)"></i>
<i style="background:linear-gradient(#0fd,#0fe,#0fa,#0fb,#0f8,#0ff,#0fa,#0f1,#0f0,#3f0,#7f0,#8f0,#bf0,#ff0,#fe0,#fb0,#fa0,#f80,#fa0,#fb0,#fb0,#fd0,#fd0,#cf0,#af0,#af0,#8f0,#5f0,#3f0,#1f0,#0f0,#0f3,#0f7,#0f9,#0fd,#0ef,#0ff,#0df,#0df,#0cf,#08f,#03f,#0ef,#06f,#02f,#04f,#02f,#20f,#20f,#10f,#50f,#01f,#60f,#40f,#30f,#000,#000,#01f,#70f,#000)"></i>
<i style="background:linear-gradient(#0fd,#0fa,#0fe,#0fb,#0fa,#0fc,#0fa,#0f4,#0f0,#3f0,#5f0,#8f0,#bf0,#ff0,#fc0,#fa0,#fa0,#f90,#f90,#f80,#fa0,#fd0,#fe0,#cf0,#af0,#bf0,#9f0,#4f0,#4f0,#3f0,#0f2,#0f6,#0f7,#0fb,#0fb,#0fe,#0ff,#0ff,#0fd,#02f,#10f,#07f,#08f,#10f,#00f,#05f,#00f,#03f,#60f,#40f,#02f,#50f,#40f,#40f,#20f,#30f,#80f,#70f,#40f,#70f)"></i>
<i style="background:linear-gradient(#0bf,#0ef,#0ff,#0f5,#0fe,#0fb,#0f6,#0f3,#1f0,#2f0,#4f0,#af0,#cf0,#ff0,#fd0,#fa0,#fa0,#fa0,#f90,#fa0,#fc0,#fd0,#fe0,#df0,#af0,#af0,#7f0,#8f0,#3f0,#4f0,#1f0,#0f6,#0f7,#0f9,#0ff,#0fa,#0fe,#0df,#0bf,#02f,#02f,#05f,#0fd,#0f5,#0f5,#0f7,#0f7,#0f7,#0f5,#0f5,#0f5,#0f5,#0f5,#0f7,#0f7,#0f6,#0f6,#0f6,#20f,#000)"></i>
<i style="background:linear-gradient(#0fd,#0ef,#0df,#0df,#0f7,#0fb,#0f8,#0f2,#1f0,#3f0,#5f0,#9f0,#bf0,#df0,#fd0,#fb0,#fc0,#fb0,#fb0,#fa0,#fc0,#ff0,#ef0,#cf0,#bf0,#8f0,#8f0,#5f0,#4f0,#1f0,#0f0,#0f4,#0f7,#0fa,#0fa,#0fe,#0fe,#0ef,#0cf,#09f,#0cf,#08f,#08f,#03f,#01f,#02f,#40f,#30f,#20f,#20f,#07f,#20f,#70f,#60f,#40f,#50f,#40f,#60f,#70f,#40f)"></i>
<i style="background:linear-gradient(#0fe,#0f9,#0ff,#0fc,#0fc,#0fa,#0f6,#0f3,#2f0,#4f0,#7f0,#9f0,#cf0,#ff0,#fc0,#fa0,#f90,#fa0,#fa0,#f90,#fb0,#fe0,#fe0,#ef0,#bf0,#bf0,#9f0,#5f0,#2f0,#1f0,#0f0,#0f4,#0f5,#0fa,#0fc,#0f8,#0ef,#0ef,#0df,#0fd,#10f,#02f,#20f,#02f,#05f,#10f,#10f,#20f,#30f,#01f,#30f,#03f,#30f,#50f,#60f,#40f,#50f,#80f,#80f,#70f)"></i>
<i style="background:linear-gradient(#0fd,#0df,#0fe,#0ef,#0fd,#0cf,#0f7,#0f4,#1f0,#4f0,#6f0,#bf0,#ff0,#fe0,#fb0,#f90,#f70,#f80,#f70,#f90,#fa0,#fd0,#fe0,#df0,#af0,#af0,#9f0,#7f0,#5f0,#2f0,#0f1,#0f5,#0f7,#0f8,#0fa,#0fb,#0cf,#0fd,#06f,#0df,#0af,#08f,#0bf,#10f,#07f,#02f,#30f,#00f,#30f,#30f,#40f,#80f,#30f,#30f,#20f,#80f,#60f,#60f,#50f,#80f)"></i>
<i style="background:linear-gradient(#0ff,#0ef,#0fc,#0f8,#0fa,#0fe,#0f6,#1f0,#2f0,#4f0,#8f0,#cf0,#ff0,#fb0,#fa0,#f70,#f90,#f80,#f80,#f80,#f80,#fd0,#fe0,#ff0,#df0,#af0,#8f0,#6f0,#4f0,#3f0,#0f0,#0f2,#0f5,#0fa,#0fc,#0fc,#0ff,#0ef,#0bf,#09f,#04f,#06f,#07f,#01f,#05f,#01f,#10f,#10f,#80f,#01f,#00f,#40f,#30f,#70f,#70f,#50f,#70f,#40f,#70f,#40f)"></i>
<i style="background:#000"></i>
<i style="background:#000"></i>
<i style="background:#000"></i>
<i style="background:#000"></i>
<i style="background:#000"></i>
<i style="background:linear-gradient(#0fd,#0fe,#0fb,#0fd,#0fe,#0fd,#0f7,#0f3,#0f1,#0f2,#4f0,#5f0,#7f0,#af0,#9f0,#af0,#9f0,#af0,#bf0,#9f0,#8f0,#8f0,#6f0,#6f0,#5f0,#2f0,#0f0,#0f2,#0f0,#0f4,#0f6,#0f6,#0f8,#0fa,#0fe,#0ff,#0fd,#0fd,#0ef,#0df,#09f,#09f,#09f,#06f,#08f,#06f,#03f,#02f,#20f,#00f,#10f,#00f,#40f,#20f,#01f,#60f,#80f,#40f,#70f,#40f)"></i>
<i style="background:linear-gradient(#0cf,#0ef,#0fa,#0fc,#0ff,#0ef,#0f7,#0f3,#0f0,#2f0,#5f0,#6f0,#9f0,#cf0,#df0,#df0,#cf0,#df0,#df0,#cf0,#cf0,#af0,#9f0,#8f0,#5f0,#5f0,#2f0,#1f0,#0f1,#0f1,#0f3,#0f4,#0f7,#0f8,#0f9,#0ff,#0fc,#0fc,#0df,#0ef,#0cf,#09f,#01f,#06f,#03f,#0cf,#04f,#06f,#02f,#03f,#50f,#60f,#50f,#01f,#30f,#40f,#20f,#60f,#30f,#60f)"></i>
<i style="background:linear-gradient(#0cf,#0df,#0fb,#0fc,#0fb,#0f8,#0f6,#0f2,#0f0,#3f0,#6f0,#9f0,#df0,#cf0,#df0,#ef0,#ef0,#ef0,#fe0,#ef0,#df0,#cf0,#bf0,#8f0,#7f0,#6f0,#2f0,#2f0,#0f1,#0f0,#0f3,#0f3,#0f5,#0f9,#0fa,#0fb,#0fe,#0fc,#0fd,#0ef,#0fe,#0df,#0fe,#0af,#04f,#0bf,#07f,#06f,#40f,#00f,#20f,#50f,#10f,#20f,#20f,#30f,#000,#60f,#60f,#40f)"></i>
<i style="background:linear-gradient(#0fd,#0df,#0ef,#0fb,#0df,#0f8,#0f2,#0f0,#3f0,#4f0,#9f0,#af0,#fe0,#fe0,#fe0,#fd0,#fd0,#fd0,#fd0,#fd0,#fd0,#ef0,#df0,#bf0,#bf0,#8f0,#3f0,#4f0,#2f0,#1f0,#0f1,#0f2,#0f4,#0f6,#0f8,#0f9,#0fb,#0fe,#0df,#0fa,#0df,#0bf,#0df,#06f,#09f,#09f,#09f,#03f,#01f,#02f,#07f,#20f,#09f,#30f,#04f,#60f,#60f,#30f,#20f,#50f)"></i>
<i style="background:linear-gradient(#0ef,#0f9,#0ef,#0fc,#0f9,#0f7,#0f0,#1f0,#5f0,#6f0,#af0,#df0,#ff0,#fb0,#fb0,#fb0,#fa0,#fc0,#fb0,#fa0,#fc0,#fd0,#fe0,#cf0,#df0,#7f0,#6f0,#6f0,#3f0,#1f0,#0f0,#0f2,#0f3,#0f5,#0f7,#0f7,#0fc,#0fa,#0ff,#0fd,#0fe,#0ef,#0bf,#05f,#09f,#0df,#0df,#0bf,#08f,#02f,#01f,#10f,#20f,#20f,#40f,#01f,#50f,#000,#20f,#50f)"></i>
<i style="background:linear-gradient(#0f3,#0fc,#0fb,#0f9,#0fa,#0f7,#0f0,#1f0,#7f0,#9f0,#af0,#ff0,#fe0,#fd0,#fc0,#fb0,#f90,#fa0,#fa0,#fa0,#fb0,#fe0,#ff0,#df0,#df0,#cf0,#8f0,#4f0,#3f0,#2f0,#0f0,#0f0,#0f3,#0f7,#0f8,#0fa,#0f9,#0fa,#0ff,#0ff,#0cf,#0df,#0df,#07f,#05f,#06f,#0cf,#0df,#01f,#08f,#40f,#02f,#02f,#40f,#20f,#40f,#60f,#03f,#50f,#70f)"></i>
<i style="background:linear-gradient(#0ef,#0f1,#0ff,#0df,#0fa,#0f7,#0f2,#1f0,#5f0,#7f0,#af0,#df0,#ff0,#fd0,#fb0,#fb0,#fb0,#fc0,#fa0,#fc0,#fc0,#fd0,#cf0,#cf0,#cf0,#8f0,#6f0,#3f0,#2f0,#1f0,#1f0,#0f2,#0f3,#0f6,#0f9,#0f8,#0f9,#0fc,#0fb,#0fd,#0ef,#0ff,#0af,#07f,#0df,#06f,#06f,#07f,#10f,#07f,#20f,#10f,#01f,#60f,#40f,#40f,#60f,#20f,#70f,#80f)"></i>
<i style="background:linear-gradient(#0ff,#0f9,#0ef,#0fd,#0f8,#0f6,#1f0,#2f0,#5f0,#af0,#bf0,#ef0,#fc0,#fb0,#f90,#fa0,#fa0,#fa0,#fa0,#fc0,#fc0,#fe0,#ff0,#ef0,#df0,#9f0,#7f0,#4f0,#3f0,#2f0,#0f0,#0f1,#0f4,#0f6,#0f9,#0fb,#0f8,#0f8,#0fc,#0fc,#0fc,#0ef,#0cf,#09f,#0cf,#0cf,#0bf,#08f,#02f,#03f,#20f,#20f,#02f,#04f,#30f,#50f,#60f,#80f,#20f,#40f)"></i>
<i style="background:linear-gradient(#0fa,#0fe,#0f7,#0ef,#0fb,#0f5,#1f0,#3f0,#4f0,#8f0,#df0,#ef0,#fc0,#fc0,#f90,#fa0,#fa0,#f90,#fb0,#fa0,#fd0,#ff0,#ef0,#ef0,#cf0,#af0,#5f0,#4f0,#3f0,#2f0,#0f0,#0f3,#0f3,#0f6,#0f8,#0fa,#0fb,#0bf,#0fe,#0ef,#0ff,#0ef,#0ef,#0ef,#05f,#0bf,#0af,#05f,#05f,#07f,#00f,#10f,#50f,#30f,#10f,#10f,#50f,#20f,#30f,#70f)"></i>
<i style="background:linear-gradient(#0ff,#0fc,#0f8,#0fc,#0f8,#0f7,#0f2,#0f0,#3f0,#4f0,#9f0,#cf0,#ff0,#fe0,#fc0,#fc0,#fc0,#fd0,#fd0,#fd0,#fe0,#df0,#cf0,#af0,#8f0,#6f0,#3f0,#3f0,#2f0,#1f0,#0f1,#0f3,#0f4,#0f7,#0fa,#0fa,#0fd,#0fd,#0ff,#0fd,#0af,#0bf,#0cf,#10f,#0fe,#01f,#02f,#0df,#01f,#02f,#10f,#50f,#30f,#00f,#10f,#00f,#30f,#80f,#20f,#80f)"></i>
<i style="background:linear-gradient(#08f,#0fb,#0f9,#0ff,#0f9,#0f7,#0f0,#0f0,#3f0,#6f0,#9f0,#cf0,#ff0,#df0,#fd0,#fd0,#fe0,#fc0,#fc0,#fe0,#ef0,#cf0,#bf0,#9f0,#7f0,#3f0,#3f0,#2f0,#1f0,#0f1,#0f3,#0f3,#0f4,#0f7,#0f8,#0fd,#0fc,#0fe,#0ff,#0ff,#0cf,#0ef,#0df,#0cf,#09f,#03f,#05f,#07f,#20f,#30f,#20f,#02f,#00f,#10f,#50f,#40f,#20f,#20f,#60f,#10f)"></i>
<i style="background:linear-gradient(#0fe,#0fb,#0f7,#0fa,#0f8,#0f7,#0f2,#1f0,#2f0,#7f0,#bf0,#bf0,#ef0,#ff0,#fd0,#fc0,#fc0,#fc0,#fd0,#fe0,#ff0,#bf0,#af0,#6f0,#7f0,#6f0,#4f0,#2f0,#1f0,#0f0,#0f4,#0f3,#0f4,#0f7,#0f9,#0fb,#0f9,#0ff,#0fe,#0cf,#0af,#09f,#0cf,#0bf,#08f,#07f,#08f,#04f,#40f,#03f,#03f,#00f,#30f,#40f,#40f,#60f,#80f,#50f,#70f,#80f)"></i>
<i style="background:linear-gradient(#0ef,#0fa,#0f8,#0f7,#0fa,#0f5,#0f0,#2f0,#5f0,#6f0,#af0,#ff0,#ff0,#fd0,#fb0,#fb0,#fc0,#fa0,#fc0,#fd0,#ff0,#ff0,#bf0,#af0,#8f0,#5f0,#5f0,#3f0,#2f0,#0f1,#0f2,#0f3,#0f3,#0f6,#0f8,#0fb,#0fc,#0fe,#0ff,#0ff,#0fe,#0ef,#0ef,#0ff,#0bf,#09f,#0df,#00f,#02f,#03f,#09f,#02f,#20f,#10f,#50f,#70f,#60f,#30f,#80f,#50f)"></i>
<i style="background:linear-gradient(#0fe,#0f9,#0ff,#0ef,#0f8,#0f4,#1f0,#4f0,#6f0,#8f0,#cf0,#ff0,#fc0,#fa0,#f90,#f90,#fa0,#fa0,#f90,#fc0,#fc0,#fc0,#ef0,#cf0,#9f0,#7f0,#7f0,#5f0,#1f0,#1f0,#1f0,#0f1,#0f4,#0f5,#0f8,#0fa,#0fa,#0fb,#0f9,#0fc,#0df,#0df,#0fe,#0df,#0bf,#02f,#0bf,#03f,#01f,#00f,#07f,#03f,#40f,#20f,#50f,#60f,#50f,#30f,#60f,#30f)"></i>
<i style="background:linear-gradient(#0cf,#0fb,#0f6,#0fe,#0f8,#0f2,#2f0,#5f0,#6f0,#af0,#ef0,#fe0,#fc0,#f80,#f80,#f90,#f80,#f80,#f80,#f80,#fc0,#fd0,#ff0,#cf0,#af0,#8f0,#7f0,#3f0,#3f0,#1f0,#0f0,#0f0,#0f4,#0f6,#0f8,#0fa,#0f7,#0fa,#0f8,#0ef,#0cf,#0fd,#08f,#09f,#0af,#09f,#09f,#08f,#04f,#03f,#60f,#08f,#06f,#00f,#00f,#40f,#70f,#50f,#50f,#40f)"></i>
<i style="background:linear-gradient(#0ff,#0fa,#0fa,#0fa,#0f6,#0f2,#2f0,#4f0,#6f0,#af0,#ef0,#fc0,#fa0,#f60,#f70,#f60,#f80,#f80,#f80,#fc0,#fc0,#ef0,#df0,#df0,#cf0,#9f0,#7f0,#3f0,#4f0,#0f0,#1f0,#0f0,#0f3,#0f6,#0f8,#0fa,#0fb,#0fa,#0fc,#0fd,#0fc,#0cf,#0bf,#0fd,#0fe,#0af,#0af,#09f,#07f,#10f,#08f,#70f,#30f,#10f,#60f,#01f,#60f,#30f,#20f,#80f)"></i>
<i style="background:linear-gradient(#0fd,#0f2,#0fa,#0f6,#0f8,#0f3,#2f0,#3f0,#6f0,#af0,#cf0,#ff0,#fd0,#f90,#f80,#f80,#f80,#f90,#fa0,#fc0,#fd0,#ef0,#cf0,#bf0,#bf0,#8f0,#3f0,#4f0,#1f0,#0f0,#0f1,#0f2,#0f5,#0f7,#0fb,#0fa,#0fe,#0fe,#0fa,#0fd,#0ef,#0ff,#0ff,#0ff,#0ef,#06f,#0fc,#04f,#04f,#0ef,#03f,#01f,#40f,#10f,#10f,#30f,#00f,#50f,#60f,#000)"></i>
<i style="background:linear-gradient(#0fc,#0fb,#0f5,#0f9,#0f6,#0f2,#1f0,#4f0,#6f0,#9f0,#cf0,#fd0,#fa0,#f90,#f70,#f70,#f80,#f80,#f90,#fa0,#fe0,#ff0,#bf0,#bf0,#af0,#8f0,#5f0,#2f0,#3f0,#1f0,#1f0,#0f3,#0f2,#0f6,#0f9,#0fb,#0fc,#0fc,#0ef,#0fd,#0bf,#0fc,#0af,#0cf,#04f,#0df,#0cf,#03f,#0bf,#02f,#10f,#20f,#00f,#50f,#80f,#20f,#60f,#60f,#03f,#60f)"></i>
<i style="background:linear-gradient(#0ef,#0fa,#0f9,#0fa,#0f6,#0f1,#3f0,#5f0,#8f0,#cf0,#ef0,#fd0,#fa0,#f80,#f60,#f70,#f60,#f60,#f90,#f90,#fd0,#fd0,#cf0,#cf0,#9f0,#7f0,#5f0,#4f0,#2f0,#2f0,#0f1,#0f1,#0f4,#0f4,#0f8,#0fa,#0f9,#0fb,#0fc,#0bf,#0ef,#0fa,#0ff,#0fd,#0bf,#0fe,#04f,#06f,#06f,#07f,#05f,#10f,#30f,#02f,#30f,#40f,#30f,#80f,#70f,#20f)"></i>
<i style="background:linear-gradient(#0ff,#0fa,#0f6,#0fc,#0f7,#0f2,#1f0,#3f0,#5f0,#8f0,#bf0,#fe0,#fc0,#f90,#f80,#f90,#f80,#f70,#fa0,#fc0,#ef0,#df0,#df0,#af0,#7f0,#5f0,#3f0,#2f0,#2f0,#0f0,#0f0,#0f2,#0f3,#0f5,#0f8,#0fa,#0fd,#0f9,#0ff,#0fc,#0fd,#0ff,#0df,#0df,#09f,#04f,#0df,#07f,#08f,#10f,#00f,#10f,#00f,#10f,#10f,#40f,#20f,#50f,#80f,#50f)"></i>
<i style="background:linear-gradient(#0ff,#0f9,#0fb,#0fd,#0f8,#0f2,#2f0,#3f0,#7f0,#9f0,#ef0,#fc0,#fa0,#f80,#f80,#f70,#f90,#f90,#f80,#fb0,#fb0,#ef0,#cf0,#bf0,#8f0,#7f0,#4f0,#4f0,#0f0,#0f0,#0f0,#0f3,#0f5,#0f4,#0fa,#0fb,#0fb,#0fd,#0f8,#0ff,#0fc,#0fe,#0cf,#09f,#06f,#06f,#0cf,#09f,#01f,#10f,#10f,#20f,#40f,#20f,#50f,#10f,#40f,#20f,#80f,#50f)"></i>
<i style="background:linear-gradient(#0fc,#0f8,#0fe,#0fb,#0f8,#0f5,#0f1,#2f0,#4f0,#7f0,#bf0,#cf0,#fe0,#fb0,#f90,#f90,#f90,#f90,#fb0,#fd0,#df0,#af0,#bf0,#7f0,#6f0,#4f0,#2f0,#2f0,#0f2,#0f2,#0f2,#0f3,#0f7,#0f6,#0f9,#0fc,#0f8,#0fb,#0fe,#0fd,#0af,#0ff,#0cf,#09f,#0bf,#09f,#04f,#07f,#10f,#00f,#10f,#20f,#40f,#30f,#40f,#60f,#80f,#00f,#60f,#80f)"></i>
<i style="background:linear-gradient(#0fd,#0f6,#0fe,#0fa,#0f7,#0f3,#0f0,#3f0,#7f0,#8f0,#bf0,#ff0,#fb0,#f90,#f80,#f90,#f80,#fb0,#fa0,#fe0,#fe0,#cf0,#9f0,#9f0,#7f0,#4f0,#3f0,#1f0,#1f0,#0f0,#0f3,#0f4,#0f5,#0f8,#0f9,#0fd,#0fc,#0ef,#0fc,#0ff,#0ef,#0bf,#0cf,#08f,#0df,#07f,#02f,#30f,#02f,#10f,#09f,#01f,#02f,#10f,#50f,#20f,#50f,#30f,#40f,#80f)"></i>
<i style="background:linear-gradient(#0cf,#0fc,#0fd,#0fc,#0f9,#0f5,#0f0,#0f1,#2f0,#5f0,#9f0,#af0,#ef0,#fb0,#fc0,#fb0,#fc0,#fd0,#fe0,#df0,#bf0,#9f0,#8f0,#4f0,#4f0,#2f0,#1f0,#0f2,#0f3,#0f2,#0f3,#0f3,#0f6,#0f9,#0fa,#0f9,#0fd,#0fe,#0fc,#0cf,#0fe,#0df,#0fd,#09f,#00f,#0ef,#07f,#04f,#20f,#07f,#05f,#40f,#10f,#20f,#40f,#80f,#70f,#40f,#80f,#80f)"></i>
<i style="background:linear-gradient(#0fa,#0fc,#0cf,#0fe,#0f8,#0f4,#0f0,#3f0,#6f0,#9f0,#9f0,#df0,#fe0,#fb0,#f90,#fa0,#f90,#f80,#fb0,#fd0,#df0,#bf0,#af0,#8f0,#7f0,#3f0,#1f0,#1f0,#0f2,#0f2,#0f3,#0f7,#0f5,#0f9,#0fb,#0f8,#0fc,#0cf,#0df,#0ef,#0fe,#0ef,#0af,#0ef,#0cf,#0bf,#06f,#0bf,#00f,#06f,#40f,#01f,#10f,#20f,#20f,#80f,#70f,#50f,#40f,#60f)"></i>
<i style="background:linear-gradient(#0ef,#0f9,#0fd,#0bf,#0f9,#0f2,#0f3,#0f1,#5f0,#7f0,#7f0,#af0,#ff0,#fd0,#fc0,#fb0,#fd0,#fb0,#fc0,#df0,#af0,#9f0,#8f0,#7f0,#4f0,#1f0,#1f0,#0f1,#0f2,#0f3,#0f4,#0f5,#0f6,#0fa,#0fc,#0fc,#0ff,#0ff,#0fd,#0bf,#0df,#0cf,#08f,#01f,#06f,#05f,#09f,#02f,#02f,#30f,#40f,#00f,#10f,#20f,#50f,#30f,#40f,#80f,#60f,#80f)"></i>
<i style="background:linear-gradient(#0ff,#0fc,#0ef,#0bf,#0ef,#0f7,#0f7,#0f4,#0f3,#2f0,#3f0,#5f0,#9f0,#df0,#cf0,#af0,#bf0,#cf0,#bf0,#9f0,#7f0,#3f0,#4f0,#1f0,#0f0,#0f5,#0f5,#0f7,#0fa,#0f7,#0f8,#0f8,#0fe,#0ff,#0ef,#0ef,#0ff,#0fd,#0ef,#0af,#0bf,#09f,#07f,#07f,#07f,#0cf,#04f,#02f,#01f,#20f,#05f,#40f,#40f,#60f,#50f,#50f,#50f,#70f,#30f,#80f)"></i>
<i style="background:linear-gradient(#0ef,#0f5,#0fe,#0fd,#0f9,#0f1,#0f1,#3f0,#6f0,#7f0,#bf0,#cf0,#fe0,#fa0,#fa0,#fa0,#fb0,#f90,#fb0,#fd0,#df0,#bf0,#af0,#8f0,#6f0,#4f0,#2f0,#1f0,#0f0,#0f2,#0f4,#0f3,#0f5,#0f8,#0fa,#0ff,#0f9,#0fe,#0fd,#0fc,#0fe,#0bf,#0df,#0af,#0df,#0df,#04f,#00f,#00f,#08f,#03f,#06f,#40f,#10f,#70f,#20f,#80f,#70f,#60f,#80f)"></i>
<i style="background:linear-gradient(#0fb,#0f9,#0af,#0ff,#0f6,#0f0,#1f0,#4f0,#8f0,#bf0,#cf0,#ff0,#fb0,#f60,#f70,#f70,#f50,#f60,#f90,#fa0,#fe0,#df0,#cf0,#bf0,#9f0,#6f0,#4f0,#1f0,#2f0,#1f0,#0f1,#0f2,#0f4,#0f6,#0f8,#0f9,#0fa,#0fe,#0fb,#0ff,#0fc,#0ef,#0cf,#0fc,#09f,#07f,#04f,#02f,#07f,#10f,#03f,#20f,#50f,#10f,#50f,#00f,#50f,#60f,#80f,#80f)"></i>
<i style="background:linear-gradient(#0fd,#0cf,#0af,#0fa,#0f7,#0f1,#0f1,#1f0,#3f0,#7f0,#9f0,#ef0,#fe0,#fa0,#f90,#f90,#fa0,#fb0,#fa0,#fd0,#df0,#bf0,#9f0,#8f0,#5f0,#5f0,#4f0,#0f0,#0f1,#0f1,#0f4,#0f3,#0f6,#0f9,#0fa,#0fc,#0fa,#0fc,#0fd,#0fd,#0cf,#0df,#07f,#0af,#0af,#07f,#50f,#08f,#20f,#00f,#06f,#10f,#03f,#00f,#70f,#40f,#50f,#60f,#80f,#40f)"></i>
<i style="background:linear-gradient(#0fc,#0f8,#0fa,#0df,#0f6,#0f3,#0f1,#2f0,#4f0,#9f0,#af0,#ef0,#fd0,#fb0,#f90,#fa0,#f90,#f90,#fa0,#fe0,#ef0,#af0,#af0,#8f0,#6f0,#4f0,#1f0,#1f0,#0f3,#0f2,#0f2,#0f5,#0f5,#0f8,#0fa,#0fe,#0fc,#0fa,#0ef,#0df,#0ff,#0fe,#0bf,#08f,#08f,#07f,#01f,#04f,#05f,#04f,#30f,#20f,#02f,#20f,#20f,#50f,#60f,#70f,#40f,#70f)"></i>
<i style="background:linear-gradient(#0fa,#0fd,#0ef,#0fc,#0f5,#0f0,#1f0,#2f0,#6f0,#6f0,#bf0,#fe0,#fc0,#f80,#f80,#f80,#fa0,#f90,#f80,#fd0,#ff0,#af0,#bf0,#bf0,#8f0,#5f0,#4f0,#0f0,#0f3,#0f1,#0f1,#0f4,#0f5,#0f6,#0f9,#0fc,#0fc,#0ef,#0fe,#0ff,#0ff,#0cf,#0af,#07f,#0bf,#0df,#08f,#09f,#09f,#06f,#00f,#02f,#10f,#20f,#10f,#70f,#60f,#50f,#80f,#40f)"></i>
<i style="background:linear-gradient(#0fb,#0bf,#0f7,#0fa,#0f6,#0f3,#1f0,#2f0,#6f0,#8f0,#cf0,#ff0,#fd0,#f90,#f90,#f80,#f80,#fa0,#f90,#fd0,#df0,#bf0,#af0,#9f0,#5f0,#5f0,#3f0,#3f0,#0f0,#0f2,#0f1,#0f4,#0f6,#0f9,#0f9,#0fc,#0fb,#0fe,#0df,#0fd,#0ef,#0ff,#0df,#07f,#0ef,#05f,#0cf,#0af,#01f,#10f,#20f,#10f,#00f,#40f,#50f,#10f,#80f,#70f,#30f,#40f)"></i>
<i style="background:linear-gradient(#0fb,#0fa,#0fe,#0f7,#0f5,#0f0,#2f0,#5f0,#8f0,#af0,#df0,#fe0,#fb0,#f70,#f90,#f70,#f80,#f60,#f70,#fa0,#fe0,#ef0,#bf0,#af0,#7f0,#6f0,#3f0,#3f0,#2f0,#0f0,#0f2,#0f3,#0f4,#0f6,#0f8,#0f9,#0fe,#0fb,#0ef,#0fe,#0fe,#0ef,#0bf,#07f,#06f,#09f,#0af,#02f,#08f,#10f,#01f,#10f,#10f,#30f,#60f,#40f,#20f,#30f,#30f,#80f)"></i>
<i style="background:linear-gradient(#0fb,#0fa,#0fa,#0fa,#0f5,#1f0,#2f0,#3f0,#8f0,#bf0,#ff0,#fd0,#f80,#f50,#f50,#f50,#f60,#f50,#f70,#fa0,#fc0,#ef0,#df0,#bf0,#af0,#7f0,#4f0,#1f0,#2f0,#0f0,#0f0,#0f2,#0f3,#0f7,#0f8,#0fa,#0fb,#0fb,#0bf,#0fb,#0fc,#0fd,#0bf,#0af,#0bf,#0cf,#0af,#20f,#0af,#01f,#04f,#10f,#40f,#01f,#03f,#60f,#60f,#30f,#30f,#40f)"></i>
<i style="background:linear-gradient(#0cf,#0fe,#0bf,#0f8,#0f9,#0f4,#0f2,#1f0,#4f0,#7f0,#9f0,#bf0,#fd0,#fb0,#fb0,#fc0,#fd0,#fa0,#fd0,#fe0,#bf0,#8f0,#7f0,#6f0,#4f0,#0f0,#0f1,#0f2,#0f3,#0f4,#0f4,#0f6,#0f8,#0fa,#0fa,#0fc,#0ef,#0fd,#0ef,#0cf,#0cf,#0bf,#0ef,#0fe,#05f,#09f,#0bf,#09f,#0ff,#03f,#02f,#20f,#60f,#10f,#00f,#60f,#70f,#50f,#60f,#80f)"></i>
<i style="background:linear-gradient(#0fb,#0fb,#0fe,#0fa,#0f6,#1f0,#2f0,#4f0,#8f0,#af0,#ff0,#fc0,#f70,#f70,#f50,#f40,#f60,#f40,#f60,#fa0,#fb0,#ff0,#cf0,#bf0,#8f0,#6f0,#6f0,#4f0,#2f0,#1f0,#0f1,#0f3,#0f3,#0f5,#0f8,#0f9,#0fa,#0f9,#0ff,#0fa,#0ff,#0ef,#0cf,#0df,#0af,#04f,#0fd,#04f,#09f,#20f,#03f,#50f,#00f,#10f,#50f,#40f,#60f,#50f,#80f,#60f)"></i>
<i style="background:linear-gradient(#0bf,#0fb,#0fc,#0fa,#0f7,#2f0,#4f0,#6f0,#8f0,#bf0,#ff0,#fd0,#f90,#f50,#f30,#f60,#f40,#f50,#f70,#f80,#fd0,#ef0,#ef0,#cf0,#8f0,#7f0,#6f0,#4f0,#1f0,#1f0,#1f0,#0f2,#0f1,#0f5,#0f7,#0fb,#0fa,#0fe,#0bf,#0ef,#0fe,#0fd,#0df,#0fe,#06f,#04f,#0df,#00f,#30f,#01f,#30f,#50f,#40f,#40f,#00f,#70f,#80f,#50f,#20f,#60f)"></i>
<i style="background:linear-gradient(#0bf,#0fa,#0f9,#0f9,#0f4,#0f0,#4f0,#4f0,#7f0,#af0,#ef0,#fc0,#fa0,#f70,#f50,#f70,#f70,#f50,#f70,#fa0,#fd0,#df0,#cf0,#bf0,#af0,#7f0,#5f0,#3f0,#2f0,#1f0,#0f1,#0f1,#0f5,#0f6,#0f8,#0fb,#0fc,#0fa,#0ef,#0ff,#0fc,#0ef,#09f,#09f,#0af,#0cf,#06f,#01f,#10f,#30f,#0af,#10f,#50f,#50f,#60f,#50f,#00f,#50f,#60f,#70f)"></i>
<i style="background:linear-gradient(#0fb,#0fb,#0f5,#0fa,#0f4,#1f0,#1f0,#7f0,#9f0,#cf0,#fe0,#fa0,#f70,#f50,#f70,#f40,#f30,#f50,#f60,#f90,#fc0,#ff0,#df0,#af0,#9f0,#8f0,#6f0,#2f0,#0f0,#0f0,#0f0,#1f0,#0f5,#0f5,#0f7,#0fa,#0fb,#0f4,#0fe,#0ff,#0ef,#0fd,#0bf,#09f,#06f,#0bf,#03f,#04f,#04f,#01f,#01f,#00f,#10f,#30f,#70f,#02f,#60f,#40f,#50f,#30f)"></i>
<i style="background:linear-gradient(#0fa,#0f9,#0f7,#0f9,#0f4,#1f0,#4f0,#6f0,#9f0,#cf0,#fd0,#fa0,#f70,#f40,#f40,#f20,#f20,#f30,#f40,#f90,#fb0,#fe0,#ff0,#df0,#cf0,#9f0,#5f0,#6f0,#2f0,#1f0,#0f1,#1f0,#0f3,#0f7,#0f7,#0f9,#0fb,#0fc,#0fb,#0fe,#0bf,#0fe,#0af,#0cf,#0af,#0bf,#0af,#06f,#07f,#60f,#00f,#00f,#10f,#10f,#20f,#20f,#00f,#60f,#80f,#60f)"></i>
<i style="background:linear-gradient(#0f5,#0fa,#0df,#0fb,#0f5,#1f0,#3f0,#3f0,#8f0,#cf0,#ff0,#fb0,#f80,#f40,#f60,#f70,#f60,#f40,#f70,#fa0,#fc0,#ef0,#cf0,#cf0,#9f0,#7f0,#3f0,#2f0,#1f0,#0f0,#0f0,#0f2,#0f3,#0f5,#0f7,#0f9,#0fd,#0fd,#0fb,#0ef,#0fe,#0fe,#0cf,#03f,#0ef,#0fc,#0af,#05f,#01f,#06f,#30f,#30f,#30f,#00f,#50f,#10f,#30f,#40f,#80f,#30f)"></i>
<i style="background:linear-gradient(#0fa,#0fa,#0fb,#0f8,#0f3,#1f0,#3f0,#8f0,#9f0,#df0,#ff0,#fb0,#f70,#f50,#f40,#f40,#f60,#f50,#f60,#f80,#fe0,#fe0,#cf0,#cf0,#9f0,#7f0,#5f0,#3f0,#1f0,#1f0,#1f0,#0f1,#0f4,#0f8,#0f8,#0fb,#0fb,#0fc,#0fd,#0fe,#0fc,#0fe,#0ef,#09f,#0fd,#09f,#03f,#01f,#06f,#03f,#05f,#05f,#10f,#10f,#05f,#70f,#30f,#70f,#80f,#30f)"></i>
<i style="background:linear-gradient(#0f7,#0f9,#0fd,#0f9,#0f4,#0f1,#2f0,#4f0,#7f0,#8f0,#ef0,#fd0,#fa0,#f70,#f70,#f60,#f70,#f90,#f70,#fa0,#fe0,#df0,#cf0,#af0,#8f0,#5f0,#3f0,#2f0,#0f2,#0f1,#0f2,#0f3,#0f4,#0f7,#0fa,#0fe,#0fe,#0f9,#0fe,#0fd,#0df,#0fe,#0ef,#09f,#04f,#0af,#04f,#03f,#06f,#10f,#01f,#01f,#04f,#30f,#50f,#30f,#00f,#40f,#60f,#80f)"></i>
<i style="background:linear-gradient(#0fe,#0fd,#0ef,#0ff,#0f8,#0f3,#0f3,#0f0,#4f0,#5f0,#bf0,#fe0,#fd0,#fa0,#fa0,#f90,#f90,#fa0,#fa0,#ef0,#bf0,#8f0,#9f0,#5f0,#3f0,#3f0,#0f1,#0f1,#0f4,#0f4,#0f5,#0f8,#0f7,#0f9,#0fc,#0fa,#0ff,#0ff,#0fc,#0af,#0ff,#0fa,#0ef,#0bf,#0fe,#08f,#0bf,#0af,#02f,#02f,#10f,#20f,#02f,#03f,#10f,#80f,#10f,#20f,#80f,#60f)"></i>
<i style="background:linear-gradient(#0fa,#0fb,#0f9,#0fa,#0f4,#0f0,#3f0,#6f0,#9f0,#df0,#fe0,#fb0,#f90,#f60,#f40,#f60,#f60,#f60,#f70,#f70,#fc0,#ef0,#cf0,#bf0,#9f0,#6f0,#6f0,#3f0,#3f0,#1f0,#0f1,#0f1,#0f2,#0f6,#0f8,#0fb,#0fb,#0ef,#0fc,#0cf,#0fc,#0bf,#0ff,#06f,#0bf,#0ef,#0cf,#06f,#08f,#10f,#20f,#40f,#08f,#50f,#00f,#10f,#70f,#80f,#40f,#40f)"></i>
<i style="background:linear-gradient(#0f9,#0fe,#0f6,#0f9,#0f4,#0f0,#2f0,#4f0,#9f0,#bf0,#ef0,#fc0,#fa0,#f70,#f80,#f70,#f70,#f70,#f80,#fa0,#ef0,#df0,#bf0,#cf0,#7f0,#5f0,#6f0,#2f0,#0f0,#0f0,#0f2,#0f3,#0f4,#0f6,#0f9,#0f8,#0fa,#0fb,#0fd,#0fc,#0fc,#09f,#0cf,#0af,#02f,#06f,#08f,#02f,#09f,#00f,#04f,#00f,#01f,#20f,#20f,#30f,#40f,#000,#80f,#50f)"></i>
<i style="background:linear-gradient(#0fa,#0fa,#0fe,#0f9,#0f4,#0f0,#2f0,#5f0,#8f0,#af0,#fe0,#fd0,#f80,#f60,#f60,#f50,#f60,#f40,#f70,#fb0,#fd0,#ef0,#df0,#bf0,#af0,#6f0,#5f0,#1f0,#2f0,#0f1,#0f3,#0f2,#0f5,#0f7,#0f8,#0fc,#0fb,#0f8,#0fd,#0fe,#0bf,#0ef,#0af,#0af,#0bf,#08f,#05f,#0ef,#0fe,#30f,#10f,#03f,#02f,#02f,#00f,#30f,#70f,#20f,#40f,#50f)"></i>
<i style="background:linear-gradient(#0fa,#0f8,#0f8,#0f9,#0f4,#0f2,#1f0,#3f0,#8f0,#af0,#ef0,#fc0,#f70,#f70,#f80,#f80,#f60,#f60,#f80,#fb0,#ff0,#cf0,#cf0,#af0,#8f0,#4f0,#2f0,#0f0,#0f1,#0f2,#0f3,#0f4,#0f5,#0f7,#0fa,#0f8,#0fa,#0fb,#0fe,#0ef,#0df,#0ff,#0bf,#05f,#0df,#0ff,#06f,#0af,#06f,#07f,#03f,#01f,#60f,#20f,#30f,#60f,#10f,#50f,#60f,#70f)"></i>
<i style="background:linear-gradient(#0fa,#0fa,#0f7,#0f8,#0f6,#0f0,#1f0,#7f0,#7f0,#af0,#fe0,#fb0,#f90,#f50,#f60,#f40,#f70,#f60,#f70,#f90,#fc0,#ef0,#df0,#8f0,#9f0,#5f0,#5f0,#2f0,#0f0,#0f1,#0f3,#0f5,#0f7,#0f7,#0fa,#0fa,#0fc,#0fe,#0ff,#0fb,#0fd,#0ff,#0fe,#0df,#06f,#0bf,#05f,#08f,#04f,#06f,#03f,#02f,#10f,#02f,#10f,#40f,#10f,#70f,#70f,#80f)"></i>
<i style="background:linear-gradient(#0f9,#0fa,#0ff,#0f7,#0f2,#2f0,#7f0,#7f0,#bf0,#ff0,#fd0,#fa0,#f60,#f20,#f20,#f10,#f30,#f30,#f40,#fa0,#fb0,#fd0,#ff0,#df0,#af0,#9f0,#8f0,#4f0,#1f0,#2f0,#2f0,#0f0,#0f3,#0f5,#0f9,#0fa,#0fa,#0fc,#0fb,#0fb,#0ff,#0ef,#0fd,#0ff,#07f,#07f,#0bf,#0af,#07f,#05f,#03f,#50f,#10f,#02f,#30f,#60f,#40f,#80f,#60f,#30f)"></i>
<i style="background:linear-gradient(#0f9,#0f9,#0f5,#0f8,#0f3,#1f0,#3f0,#8f0,#af0,#df0,#fd0,#fa0,#f60,#f30,#f30,#f40,#f30,#f20,#f50,#f80,#fa0,#ff0,#ef0,#df0,#af0,#9f0,#5f0,#3f0,#3f0,#2f0,#1f0,#0f0,#0f2,#0f7,#0f7,#0f9,#0f5,#0f9,#0ef,#0fa,#0fc,#0ff,#0cf,#0cf,#09f,#0ef,#0bf,#0df,#02f,#00f,#0bf,#00f,#00f,#00f,#20f,#40f,#40f,#50f,#70f,#00f)"></i>
</div>
<svg width="1024" height="708" viewBox="0 0 1024 708" shape-rendering="crispEdges">
<defs><linearGradient id="r0" gradientUnits="userSpaceOnUse" x1="221" y1="0" x2="820" y2="0"><stop offset="0.0000" stop-color="#0096ff"/><stop offset="0.0184" stop-color="#00ffff"/><stop offset="0.0417" stop-color="#00f92d"/><stop offset="0.0467" stop-color="#1af900"/><stop offset="0.7462" stop-color="#1af900"/><stop offset="0.7713" stop-color="#00fa3c"/><stop offset="0.8881" stop-color="#00fa3c"/><stop offset="0.8882" stop-color="#00fdbf"/><stop offset="0.8948" stop-color="#ffe800"/><stop offset="0.8998" stop-color="#00fa3c"/><stop offset="0.9048" stop-color="#00fdbf"/><stop offset="0.9115" stop-color="#ffe800"/><stop offset="0.9182" stop-color="#00fa3c"/><stop offset="0.9533" stop-color="#00fa3c"/><stop offset="0.9666" stop-color="#1af900"/><stop offset="0.9800" stop-color="#b2fd00"/><stop offset="1.0000" stop-color="#b2fd00"/></linearGradient><linearGradient id="r1" gradientUnits="userSpaceOnUse" x1="221" y1="0" x2="820" y2="0"><stop offset="0.0000" stop-color="#00e5ff"/><stop offset="0.0184" stop-color="#00fff2"/><stop offset="0.0417" stop-color="#00f916"/><stop offset="0.0467" stop-color="#33f900"/><stop offset="0.7462" stop-color="#33f900"/><stop offset="0.7713" stop-color="#00fc80"/><stop offset="0.8881" stop-color="#00fc80"/><stop offset="0.8882" stop-color="#00fdbf"/><stop offset="0.8948" stop-color="#4dfa00"/><stop offset="0.8998" stop-color="#00fc80"/><stop offset="0.9048" stop-color="#00fdbf"/><stop offset="0.9115" stop-color="#4dfa00"/><stop offset="0.9182" stop-color="#00fc80"/><stop offset="0.9533" stop-color="#00fc80"/><stop offset="0.9666" stop-color="#00f800"/><stop offset="0.9800" stop-color="#33f900"/><stop offset="1.0000" stop-color="#33f900"/></linearGradient><linearGradient id="r2" gradientUnits="userSpaceOnUse" x1="221" y1="0" x2="820" y2="0"><stop offset="0.0000" stop-color="#00fff2"/><stop offset="0.0184" stop-color="#00fdb2"/><stop offset="0.0417" stop-color="#08f800"/><stop offset="0.0467" stop-color="#46fa00"/><stop offset="0.7462" stop-color="#46fa00"/><stop offset="0.7713" stop-color="#00fdbf"/><stop offset="0.8881" stop-color="#00fdbf"/><stop offset="0.8882" stop-color="#00fee6"/><stop offset="0.8948" stop-color="#00f800"/><stop offset="0.8998" stop-color="#00fdbf"/><stop offset="0.9048" stop-color="#00fee6"/><stop offset="0.9115" stop-color="#00f800"/><stop offset="0.9182" stop-color="#00fdbf"/><stop offset="0.9533" stop-color="#00fdbf"/><stop offset="0.9666" stop-color="#00fa40"/><stop offset="0.9800" stop-color="#00f800"/><stop offset="1.0000" stop-color="#00f800"/></linearGradient><linearGradient id="r3" gradientUnits="userSpaceOnUse" x1="221" y1="0" x2="820" y2="0"><stop offset="0.0000" stop-color="#00fc99"/><stop offset="0.0184" stop-color="#00fa59"/><stop offset="0.0417" stop-color="#28f900"/><stop offset="0.0467" stop-color="#53fa00"/><stop offset="0.7462" stop-color="#53fa00"/><stop offset="0.7713" stop-color="#00f2ff"/><stop offset="0.8881" stop-color="#00f2ff"/><stop offset="0.8882" stop-color="#00ffff"/><stop offset="0.8948" stop-color="#00fc80"/><stop offset="0.8998" stop-color="#00f2ff"/><stop offset="0.9048" stop-color="#00ffff"/><stop offset="0.9115" stop-color="#00fc80"/><stop offset="0.9182" stop-color="#00f2ff"/><stop offset="0.9533" stop-color="#00f2ff"/><stop offset="0.9666" stop-color="#00fee6"/><stop offset="0.9800" stop-color="#00fda6"/><stop offset="1.0000" stop-color="#00fda6"/></linearGradient><linearGradient id="r4" gradientUnits="userSpaceOnUse" x1="221" y1="0" x2="820" y2="0"><stop offset="0.0000" stop-color="#00fa4c"/><stop offset="0.0184" stop-color="#00f91a"/><stop offset="0.0417" stop-color="#25f900"/><stop offset="0.0467" stop-color="#39fa00"/><stop offset="0.7462" stop-color="#39fa00"/><stop offset="0.7713" stop-color="#00e5ff"/><stop offset="0.8881" stop-color="#00e5ff"/><stop offset="0.8882" stop-color="#00f2ff"/><stop offset="0.8948" stop-color="#00a6ff"/><stop offset="0.8998" stop-color="#00e5ff"/><stop offset="0.9048" stop-color="#00f2ff"/><stop offset="0.9115" stop-color="#00a6ff"/><stop offset="0.9182" stop-color="#00e5ff"/><stop offset="0.9533" stop-color="#00e5ff"/><stop offset="0.9666" stop-color="#00f2ff"/><stop offset="0.9800" stop-color="#00f2ff"/><stop offset="1.0000" stop-color="#00f2ff"/></linearGradient><linearGradient id="r5" gradientUnits="userSpaceOnUse" x1="221" y1="0" x2="820" y2="0"><stop offset="0.0000" stop-color="#00f800"/><stop offset="0.0184" stop-color="#00f800"/><stop offset="0.0417" stop-color="#0ef800"/><stop offset="0.0467" stop-color="#13f900"/><stop offset="0.7462" stop-color="#13f900"/><stop offset="0.7713" stop-color="#00ecff"/><stop offset="0.8881" stop-color="#00ecff"/><stop offset="0.8882" stop-color="#00f2ff"/><stop offset="0.8948" stop-color="#0040ff"/><stop offset="0.8998" stop-color="#00ecff"/><stop offset="0.9048" stop-color="#00f2ff"/><stop offset="0.9115" stop-color="#0040ff"/><stop offset="0.9182" stop-color="#00ecff"/><stop offset="0.9533" stop-color="#00ecff"/><stop offset="0.9666" stop-color="#00ccff"/><stop offset="0.9800" stop-color="#008cff"/><stop offset="1.0000" stop-color="#008cff"/></linearGradient><linearGradient id="r6" gradientUnits="userSpaceOnUse" x1="221" y1="0" x2="820" y2="0"><stop offset="0.0000" stop-color="#1af900"/><stop offset="0.0184" stop-color="#1af900"/><stop offset="0.0417" stop-color="#00f916"/><stop offset="0.0467" stop-color="#00f926"/><stop offset="0.7462" stop-color="#00f926"/><stop offset="0.7713" stop-color="#00ffff"/><stop offset="0.8881" stop-color="#00ffff"/><stop offset="0.8882" stop-color="#00ffff"/><stop offset="0.8948" stop-color="#0019ff"/><stop offset="0.8998" stop-color="#00ffff"/><stop offset="0.9048" stop-color="#00ffff"/><stop offset="0.9115" stop-color="#0019ff"/><stop offset="0.9182" stop-color="#00ffff"/><stop offset="0.9533" stop-color="#00ffff"/><stop offset="0.9666" stop-color="#007fff"/><stop offset="0.9800" stop-color="#0020ff"/><stop offset="1.0000" stop-color="#0020ff"/></linearGradient><linearGradient id="r7" gradientUnits="userSpaceOnUse" x1="221" y1="0" x2="820" y2="0"><stop offset="0.0000" stop-color="#26f900"/><stop offset="0.0184" stop-color="#26f900"/><stop offset="0.0417" stop-color="#00fa56"/><stop offset="0.0467" stop-color="#00fc80"/><stop offset="0.7462" stop-color="#00fc80"/><stop offset="0.7713" stop-color="#00fdc8"/><stop offset="0.8881" stop-color="#00fdc8"/><stop offset="0.8882" stop-color="#00fee6"/><stop offset="0.8948" stop-color="#0019ff"/><stop offset="0.8998" stop-color="#00fdc8"/><stop offset="0.9048" stop-color="#00fee6"/><stop offset="0.9115" stop-color="#0019ff"/><stop offset="0.9182" stop-color="#00fdc8"/><stop offset="0.9533" stop-color="#00fdc8"/><stop offset="0.9666" stop-color="#0066ff"/><stop offset="0.9800" stop-color="#0019ff"/><stop offset="1.0000" stop-color="#0019ff"/></linearGradient><linearGradient id="r8" gradientUnits="userSpaceOnUse" x1="221" y1="0" x2="820" y2="0"><stop offset="0.0000" stop-color="#33f900"/><stop offset="0.0184" stop-color="#33f900"/><stop offset="0.0417" stop-color="#00fc87"/><stop offset="0.0467" stop-color="#00fdc6"/><stop offset="0.7462" stop-color="#00fdc6"/><stop offset="0.7713" stop-color="#00fc8c"/><stop offset="0.8881" stop-color="#00fc8c"/><stop offset="0.8882" stop-color="#00fdbf"/><stop offset="0.8948" stop-color="#0033ff"/><stop offset="0.8998" stop-color="#00fc8c"/><stop offset="0.9048" stop-color="#00fdbf"/><stop offset="0.9115" stop-color="#0033ff"/><stop offset="0.9182" stop-color="#00fc8c"/><stop offset="0.9533" stop-color="#00fc8c"/><stop offset="0.9666" stop-color="#007fff"/><stop offset="0.9800" stop-color="#002dff"/><stop offset="1.0000" stop-color="#002dff"/></linearGradient><linearGradient id="r9" gradientUnits="userSpaceOnUse" x1="221" y1="0" x2="820" y2="0"><stop offset="0.0000" stop-color="#33f900"/><stop offset="0.0184" stop-color="#33f900"/><stop offset="0.0417" stop-color="#00fec9"/><stop offset="0.0467" stop-color="#00e0ff"/><stop offset="0.7462" stop-color="#00e0ff"/><stop offset="0.7713" stop-color="#00fa59"/><stop offset="0.8881" stop-color="#00fa59"/><stop offset="0.8882" stop-color="#00fda6"/><stop offset="0.8948" stop-color="#007fff"/><stop offset="0.8998" stop-color="#00fa59"/><stop offset="0.9048" stop-color="#00fda6"/><stop offset="0.9115" stop-color="#007fff"/><stop offset="0.9182" stop-color="#00fa59"/><stop offset="0.9533" stop-color="#00fa59"/><stop offset="0.9666" stop-color="#00e5ff"/><stop offset="0.9800" stop-color="#0099ff"/><stop offset="1.0000" stop-color="#0099ff"/></linearGradient><linearGradient id="r10" gradientUnits="userSpaceOnUse" x1="221" y1="0" x2="820" y2="0"><stop offset="0.0000" stop-color="#26f900"/><stop offset="0.0184" stop-color="#26f900"/><stop offset="0.0417" stop-color="#00fff6"/><stop offset="0.0467" stop-color="#00aaff"/><stop offset="0.7462" stop-color="#00aaff"/><stop offset="0.7713" stop-color="#00fa3c"/><stop offset="0.8881" stop-color="#00fa3c"/><stop offset="0.8882" stop-color="#00fda6"/><stop offset="0.8948" stop-color="#00fee6"/><stop offset="0.8998" stop-color="#00fa3c"/><stop offset="0.9048" stop-color="#00fda6"/><stop offset="0.9115" stop-color="#00fee6"/><stop offset="0.9182" stop-color="#00fa3c"/><stop offset="0.9533" stop-color="#00fa3c"/><stop offset="0.9666" stop-color="#00fee6"/><stop offset="0.9800" stop-color="#00f2ff"/><stop offset="1.0000" stop-color="#00f2ff"/></linearGradient></defs><rect x="221" y="256" width="599" height="17" fill="url(#r0)"/><rect x="221" y="273" width="599" height="17" fill="url(#r1)"/><rect x="221" y="290" width="599" height="18" fill="url(#r2)"/><rect x="221" y="308" width="599" height="18" fill="url(#r3)"/><rect x="221" y="326" width="599" height="17" fill="url(#r4)"/><rect x="221" y="343" width="599" height="18" fill="url(#r5)"/><rect x="221" y="361" width="599" height="17" fill="url(#r6)"/><rect x="221" y="378" width="599" height="18" fill="url(#r7)"/><rect x="221" y="396" width="599" height="18" fill="url(#r8)"/><rect x="221" y="414" width="599" height="17" fill="url(#r9)"/><rect x="221" y="431" width="599" height="18" fill="url(#r10)"/><path d="M221 273.5H820M221 290.5H820M221 308.5H820M221 326.5H820M221 343.5H820M221 361.5H820M221 378.5H820M221 396.5H820M221 414.5H820M221 431.5H820M232.5 256V449M248.5 256V449M263.5 256V449M279.5 256V449M294.5 256V449M310.5 256V449M325.5 256V449M341.5 256V449M356.5 256V449M372.5 256V449M387.5 256V449M403.5 256V449M418.5 256V449M434.5 256V449M449.5 256V449M465.5 256V449M481.5 256V449M496.5 256V449M512.5 256V449M527.5 256V449M543.5 256V449M558.5 256V449M574.5 256V449M589.5 256V449M605.5 256V449M620.5 256V449M636.5 256V449M651.5 256V449M667.5 256V449M682.5 256V449M698.5 256V449M714.5 256V449M729.5 256V449M745.5 256V449M760.5 256V449M776.5 256V449M791.5 256V449M807.5 256V449" stroke="#000" fill="none"/><rect x="751" y="256" width="2" height="193" fill="#000"/><rect x="760" y="256" width="3" height="193" fill="#000"/><rect x="771" y="256" width="6" height="193" fill="#000"/>
<defs><linearGradient id="rb" x1="0" y1="0" x2="0" y2="1"><stop offset="0" stop-color="#ff1400"/><stop offset=".2" stop-color="#ffff00"/><stop offset=".4" stop-color="#00f800"/><stop offset=".6" stop-color="#00ffff"/><stop offset=".8" stop-color="#0000ff"/><stop offset="1" stop-color="#9000ff"/></linearGradient></defs><rect x="850.5" y="77.5" width="32" height="127" fill="url(#rb)" stroke="#fff"/><rect x="850.5" y="275.5" width="32" height="155" fill="url(#rb)" stroke="#fff"/><path d="M878 81.5H882M878 86.5H882M878 94.5H882M878 107.5H882M875 119.5H882M878 123.5H882M878 129.5H882M878 136.5H882M878 149.5H882M875 162.5H882M878 166.5H882M878 171.5H882M878 179.5H882M878 191.5H882M878 283.5H882M878 290.5H882M878 298.5H882M878 306.5H882M875 314.5H882M878 322.5H882M878 329.5H882M878 337.5H882M878 345.5H882M875 352.5H882M878 360.5H882M878 368.5H882M878 376.5H882M878 384.5H882M875 391.5H882M878 399.5H882M878 407.5H882M878 414.5H882M878 422.5H882" stroke="#fff" fill="none"/>
<path d="M204 61.5H836M201 220.5H839M210.5 61.5V220.5M829.5 61.5V220.5" stroke="#fff" fill="none"/><path d="M214.5 62v5M214.5 220v-6M221.5 62v5M221.5 220v-6M226.5 62v5M226.5 220v-6M233.5 62v5M233.5 220v-6M238.5 62v5M238.5 220v-6M244.5 62v8M244.5 220v-10M250.5 62v5M250.5 220v-6M256.5 62v5M256.5 220v-6M262.5 62v5M262.5 220v-6M267.5 62v5M267.5 220v-6M273.5 62v5M273.5 220v-6M279.5 62v5M279.5 220v-6M285.5 62v5M285.5 220v-6M291.5 62v5M291.5 220v-6M297.5 62v8M297.5 220v-10M303.5 62v5M303.5 220v-6M309.5 62v5M309.5 220v-6M314.5 62v5M314.5 220v-6M320.5 62v5M320.5 220v-6M326.5 62v5M326.5 220v-6M332.5 62v5M332.5 220v-6M338.5 62v5M338.5 220v-6M344.5 62v5M344.5 220v-6M350.5 62v8M350.5 220v-10M355.5 62v5M355.5 220v-6M361.5 62v5M361.5 220v-6M367.5 62v5M367.5 220v-6M373.5 62v5M373.5 220v-6M379.5 62v5M379.5 220v-6M385.5 62v5M385.5 220v-6M391.5 62v5M391.5 220v-6M397.5 62v5M397.5 220v-6M402.5 62v8M402.5 220v-10M408.5 62v5M408.5 220v-6M414.5 62v5M414.5 220v-6M420.5 62v5M420.5 220v-6M426.5 62v5M426.5 220v-6M432.5 62v5M432.5 220v-6M438.5 62v5M438.5 220v-6M443.5 62v5M443.5 220v-6M449.5 62v5M449.5 220v-6M455.5 62v8M455.5 220v-10M461.5 62v5M461.5 220v-6M467.5 62v5M467.5 220v-6M473.5 62v5M473.5 220v-6M479.5 62v5M479.5 220v-6M485.5 62v5M485.5 220v-6M490.5 62v5M490.5 220v-6M496.5 62v5M496.5 220v-6M502.5 62v5M502.5 220v-6M508.5 62v8M508.5 220v-10M514.5 62v5M514.5 220v-6M520.5 62v5M520.5 220v-6M526.5 62v5M526.5 220v-6M531.5 62v5M531.5 220v-6M537.5 62v5M537.5 220v-6M543.5 62v5M543.5 220v-6M549.5 62v5M549.5 220v-6M555.5 62v5M555.5 220v-6M561.5 62v8M561.5 220v-10M567.5 62v5M567.5 220v-6M573.5 62v5M573.5 220v-6M578.5 62v5M578.5 220v-6M584.5 62v5M584.5 220v-6M590.5 62v5M590.5 220v-6M596.5 62v5M596.5 220v-6M602.5 62v5M602.5 220v-6M608.5 62v5M608.5 220v-6M614.5 62v8M614.5 220v-10M619.5 62v5M619.5 220v-6M625.5 62v5M625.5 220v-6M631.5 62v5M631.5 220v-6M637.5 62v5M637.5 220v-6M643.5 62v5M643.5 220v-6M649.5 62v5M649.5 220v-6M655.5 62v5M655.5 220v-6M661.5 62v5M661.5 220v-6M666.5 62v8M666.5 220v-10M672.5 62v5M672.5 220v-6M678.5 62v5M678.5 220v-6M684.5 62v5M684.5 220v-6M690.5 62v5M690.5 220v-6M696.5 62v5M696.5 220v-6M702.5 62v5M702.5 220v-6M707.5 62v5M707.5 220v-6M713.5 62v5M713.5 220v-6M719.5 62v8M719.5 220v-10M725.5 62v5M725.5 220v-6M731.5 62v5M731.5 220v-6M737.5 62v5M737.5 220v-6M743.5 62v5M743.5 220v-6M749.5 62v5M749.5 220v-6M754.5 62v5M754.5 220v-6M760.5 62v5M760.5 220v-6M766.5 62v5M766.5 220v-6M772.5 62v8M772.5 220v-10M778.5 62v5M778.5 220v-6M784.5 62v5M784.5 220v-6M790.5 62v5M790.5 220v-6M795.5 62v5M795.5 220v-6M801.5 62v5M801.5 220v-6M807.5 62v5M807.5 220v-6M813.5 62v5M813.5 220v-6M819.5 62v5M819.5 220v-6M825.5 62v8M825.5 220v-10" stroke="#fff" stroke-width="1" fill="none"/><path d="M201 81.5H210M830 81.5H839M201 150.5H210M830 150.5H839M204 130.5H210M830 130.5H836M204 109.5H210M830 109.5H836M204 96.5H210M830 96.5H836M204 88.5H210M830 88.5H836M204 199.5H210M830 199.5H836M204 178.5H210M830 178.5H836M204 166.5H210M830 166.5H836M204 157.5H210M830 157.5H836" stroke="#fff" fill="none"/><path d="M210.5 255.5H829.5V449.5H210.5Z" stroke="#fff" fill="none"/><path d="M214.5 256v6M214.5 449v-6M221.5 256v6M221.5 449v-6M226.5 256v6M226.5 449v-6M233.5 256v6M233.5 449v-6M238.5 256v6M238.5 449v-6M244.5 256v9M244.5 449v-9M250.5 256v6M250.5 449v-6M256.5 256v6M256.5 449v-6M262.5 256v6M262.5 449v-6M267.5 256v6M267.5 449v-6M273.5 256v6M273.5 449v-6M279.5 256v6M279.5 449v-6M285.5 256v6M285.5 449v-6M291.5 256v6M291.5 449v-6M297.5 256v9M297.5 449v-9M303.5 256v6M303.5 449v-6M309.5 256v6M309.5 449v-6M314.5 256v6M314.5 449v-6M320.5 256v6M320.5 449v-6M326.5 256v6M326.5 449v-6M332.5 256v6M332.5 449v-6M338.5 256v6M338.5 449v-6M344.5 256v6M344.5 449v-6M350.5 256v9M350.5 449v-9M355.5 256v6M355.5 449v-6M361.5 256v6M361.5 449v-6M367.5 256v6M367.5 449v-6M373.5 256v6M373.5 449v-6M379.5 256v6M379.5 449v-6M385.5 256v6M385.5 449v-6M391.5 256v6M391.5 449v-6M397.5 256v6M397.5 449v-6M402.5 256v9M402.5 449v-9M408.5 256v6M408.5 449v-6M414.5 256v6M414.5 449v-6M420.5 256v6M420.5 449v-6M426.5 256v6M426.5 449v-6M432.5 256v6M432.5 449v-6M438.5 256v6M438.5 449v-6M443.5 256v6M443.5 449v-6M449.5 256v6M449.5 449v-6M455.5 256v9M455.5 449v-9M461.5 256v6M461.5 449v-6M467.5 256v6M467.5 449v-6M473.5 256v6M473.5 449v-6M479.5 256v6M479.5 449v-6M485.5 256v6M485.5 449v-6M490.5 256v6M490.5 449v-6M496.5 256v6M496.5 449v-6M502.5 256v6M502.5 449v-6M508.5 256v9M508.5 449v-9M514.5 256v6M514.5 449v-6M520.5 256v6M520.5 449v-6M526.5 256v6M526.5 449v-6M531.5 256v6M531.5 449v-6M537.5 256v6M537.5 449v-6M543.5 256v6M543.5 449v-6M549.5 256v6M549.5 449v-6M555.5 256v6M555.5 449v-6M561.5 256v9M561.5 449v-9M567.5 256v6M567.5 449v-6M573.5 256v6M573.5 449v-6M578.5 256v6M578.5 449v-6M584.5 256v6M584.5 449v-6M590.5 256v6M590.5 449v-6M596.5 256v6M596.5 449v-6M602.5 256v6M602.5 449v-6M608.5 256v6M608.5 449v-6M614.5 256v9M614.5 449v-9M619.5 256v6M619.5 449v-6M625.5 256v6M625.5 449v-6M631.5 256v6M631.5 449v-6M637.5 256v6M637.5 449v-6M643.5 256v6M643.5 449v-6M649.5 256v6M649.5 449v-6M655.5 256v6M655.5 449v-6M661.5 256v6M661.5 449v-6M666.5 256v9M666.5 449v-9M672.5 256v6M672.5 449v-6M678.5 256v6M678.5 449v-6M684.5 256v6M684.5 449v-6M690.5 256v6M690.5 449v-6M696.5 256v6M696.5 449v-6M702.5 256v6M702.5 449v-6M707.5 256v6M707.5 449v-6M713.5 256v6M713.5 449v-6M719.5 256v9M719.5 449v-9M725.5 256v6M725.5 449v-6M731.5 256v6M731.5 449v-6M737.5 256v6M737.5 449v-6M743.5 256v6M743.5 449v-6M749.5 256v6M749.5 449v-6M754.5 256v6M754.5 449v-6M760.5 256v6M760.5 449v-6M766.5 256v6M766.5 449v-6M772.5 256v9M772.5 449v-9M778.5 256v6M778.5 449v-6M784.5 256v6M784.5 449v-6M790.5 256v6M790.5 449v-6M795.5 256v6M795.5 449v-6M801.5 256v6M801.5 449v-6M807.5 256v6M807.5 449v-6M813.5 256v6M813.5 449v-6M819.5 256v6M819.5 449v-6M825.5 256v9M825.5 449v-9" stroke="#fff" stroke-width="1" fill="none"/><path d="M201 501.5H839M201 678.5H839M210.5 501.5V678.5M829.5 501.5V678.5" stroke="#fff" fill="none"/><path d="M214.5 502v5M214.5 678v-6M221.5 502v5M221.5 678v-6M226.5 502v5M226.5 678v-6M233.5 502v5M233.5 678v-6M238.5 502v5M238.5 678v-6M244.5 502v9M244.5 678v-9M250.5 502v5M250.5 678v-6M256.5 502v5M256.5 678v-6M262.5 502v5M262.5 678v-6M267.5 502v5M267.5 678v-6M273.5 502v5M273.5 678v-6M279.5 502v5M279.5 678v-6M285.5 502v5M285.5 678v-6M291.5 502v5M291.5 678v-6M297.5 502v9M297.5 678v-9M303.5 502v5M303.5 678v-6M309.5 502v5M309.5 678v-6M314.5 502v5M314.5 678v-6M320.5 502v5M320.5 678v-6M326.5 502v5M326.5 678v-6M332.5 502v5M332.5 678v-6M338.5 502v5M338.5 678v-6M344.5 502v5M344.5 678v-6M350.5 502v9M350.5 678v-9M355.5 502v5M355.5 678v-6M361.5 502v5M361.5 678v-6M367.5 502v5M367.5 678v-6M373.5 502v5M373.5 678v-6M379.5 502v5M379.5 678v-6M385.5 502v5M385.5 678v-6M391.5 502v5M391.5 678v-6M397.5 502v5M397.5 678v-6M402.5 502v9M402.5 678v-9M408.5 502v5M408.5 678v-6M414.5 502v5M414.5 678v-6M420.5 502v5M420.5 678v-6M426.5 502v5M426.5 678v-6M432.5 502v5M432.5 678v-6M438.5 502v5M438.5 678v-6M443.5 502v5M443.5 678v-6M449.5 502v5M449.5 678v-6M455.5 502v9M455.5 678v-9M461.5 502v5M461.5 678v-6M467.5 502v5M467.5 678v-6M473.5 502v5M473.5 678v-6M479.5 502v5M479.5 678v-6M485.5 502v5M485.5 678v-6M490.5 502v5M490.5 678v-6M496.5 502v5M496.5 678v-6M502.5 502v5M502.5 678v-6M508.5 502v9M508.5 678v-9M514.5 502v5M514.5 678v-6M520.5 502v5M520.5 678v-6M526.5 502v5M526.5 678v-6M531.5 502v5M531.5 678v-6M537.5 502v5M537.5 678v-6M543.5 502v5M543.5 678v-6M549.5 502v5M549.5 678v-6M555.5 502v5M555.5 678v-6M561.5 502v9M561.5 678v-9M567.5 502v5M567.5 678v-6M573.5 502v5M573.5 678v-6M578.5 502v5M578.5 678v-6M584.5 502v5M584.5 678v-6M590.5 502v5M590.5 678v-6M596.5 502v5M596.5 678v-6M602.5 502v5M602.5 678v-6M608.5 502v5M608.5 678v-6M614.5 502v9M614.5 678v-9M619.5 502v5M619.5 678v-6M625.5 502v5M625.5 678v-6M631.5 502v5M631.5 678v-6M637.5 502v5M637.5 678v-6M643.5 502v5M643.5 678v-6M649.5 502v5M649.5 678v-6M655.5 502v5M655.5 678v-6M661.5 502v5M661.5 678v-6M666.5 502v9M666.5 678v-9M672.5 502v5M672.5 678v-6M678.5 502v5M678.5 678v-6M684.5 502v5M684.5 678v-6M690.5 502v5M690.5 678v-6M696.5 502v5M696.5 678v-6M702.5 502v5M702.5 678v-6M707.5 502v5M707.5 678v-6M713.5 502v5M713.5 678v-6M719.5 502v9M719.5 678v-9M725.5 502v5M725.5 678v-6M731.5 502v5M731.5 678v-6M737.5 502v5M737.5 678v-6M743.5 502v5M743.5 678v-6M749.5 502v5M749.5 678v-6M754.5 502v5M754.5 678v-6M760.5 502v5M760.5 678v-6M766.5 502v5M766.5 678v-6M772.5 502v9M772.5 678v-9M778.5 502v5M778.5 678v-6M784.5 502v5M784.5 678v-6M790.5 502v5M790.5 678v-6M795.5 502v5M795.5 678v-6M801.5 502v5M801.5 678v-6M807.5 502v5M807.5 678v-6M813.5 502v5M813.5 678v-6M819.5 502v5M819.5 678v-6M825.5 502v9M825.5 678v-9" stroke="#fff" stroke-width="1" fill="none"/><path d="M201 501.5H210M204 508.5H210M204 515.5H210M204 522.5H210M204 529.5H210M201 536.5H210M204 543.5H210M204 551.5H210M204 558.5H210M204 565.5H210M201 572.5H210M204 579.5H210M204 586.5H210M204 593.5H210M204 600.5H210M201 607.5H210M204 614.5H210M204 621.5H210M204 628.5H210M204 636.5H210M201 643.5H210M204 650.5H210M204 657.5H210M204 664.5H210M204 671.5H210M201 678.5H210M830 501.5H839M830 508.5H836M830 515.5H836M830 522.5H836M830 529.5H836M830 536.5H839M830 543.5H836M830 551.5H836M830 558.5H836M830 565.5H836M830 572.5H839M830 579.5H836M830 586.5H836M830 593.5H836M830 600.5H836M830 607.5H839M830 614.5H836M830 621.5H836M830 628.5H836M830 636.5H836M830 643.5H839M830 650.5H836M830 657.5H836M830 664.5H836M830 671.5H836M830 678.5H839" stroke="#fff" fill="none"/>
<g shape-rendering="auto"><path d="M220.5 607.5H232.1M233.3 607.5H248.1M249.3 607.5H263.1M264.3 607.5H279.1M280.3 607.5H294.1M295.3 607.5H310.1M311.3 607.5H325.1M326.3 607.5H341.1M342.3 607.5H356.1M357.3 607.5H372.1M373.3 607.5H387.1M388.3 607.5H403.1M404.3 607.5H418.1M419.3 607.5H434.1M435.3 607.5H449.1M450.3 607.5H465.1M466.3 607.5H481.1M482.3 607.5H496.1M497.3 607.5H512.1M513.3 607.5H527.1M528.3 607.5H543.1M544.3 607.5H558.1M559.3 607.5H574.1M575.3 607.5H589.1M590.3 607.5H598.1M599.0 643.5H605.1M606.3 643.5H620.1M621.3 643.5H636.1M637.3 643.5H651.1M652.3 643.5H667.1M668.3 643.5H682.1M683.3 643.5H698.1M699.3 643.5H714.1M715.3 643.5H729.1M730.3 643.5H741.1M742.0 607.5H745.1M746.3 607.5H760.1M761.3 607.5H776.1M777.3 607.5H791.1M792.3 607.5H807.1M808.3 607.5H819.6M598 633.5h1" stroke="#fff" fill="none"/><polyline points="211,583.3 214,585.0 217,586.8 220,588.5 223,590.2 226,591.9 229,593.5 232,595.2 235,596.8 238,598.4 241,600.0 244,601.6 247,603.2 250,604.7 253,606.3 256,607.8 259,609.3 262,610.8 265,612.2 268,613.7 271,615.1 274,616.5 277,617.9 280,619.3 283,620.6 286,622.0 289,623.3 292,624.6 295,625.9 298,627.2 301,628.4 304,629.7 307,630.9 310,632.1 313,633.3 316,634.5 319,635.6 322,636.8 325,637.9 328,639.0 331,640.1 334,641.2 337,642.2 340,643.3 343,644.3 346,645.3 349,646.3 352,647.2 355,648.2 358,649.1 361,650.1 364,651.0 367,651.8 370,652.7 373,653.6 376,654.4 379,655.2 382,656.0 385,656.8 388,657.6 391,658.3 394,659.0 397,659.8 400,660.5 403,661.1 406,661.8 409,662.5 412,663.1 415,663.7 418,664.3 421,664.9 424,665.4 427,666.0 430,666.5 433,667.0 436,667.5 439,668.0 442,668.5 445,668.9 448,669.3 451,669.7 454,670.1 457,670.5 460,670.9 463,671.2 466,671.5 469,671.9 472,672.1 475,672.4 478,672.7 481,672.9 484,673.1 487,673.3 490,673.5 493,673.7 496,673.9 499,674.0 502,674.1 505,674.2 508,674.3 511,674.4 514,674.4 517,674.5 520,674.5 523,674.5 526,674.5 529,674.5 532,674.4 535,674.3 538,674.3 541,674.2 544,674.0 547,673.9 550,673.8 553,673.6 556,673.4 559,673.2 562,673.0 565,672.8 568,672.5 571,672.2 574,672.0 577,671.6 580,671.3 583,671.0 586,670.6 589,670.3 592,669.9 595,669.5 598,669.1 601,668.6 604,668.2 607,667.7 610,667.2 613,666.7 616,666.2 619,665.6 622,665.1 625,664.5 628,663.9 631,663.3 634,662.7 637,662.0 640,661.4 643,660.7 646,660.0 649,659.3 652,658.6 655,657.8 658,657.1 661,656.3 664,655.5 667,654.7 670,653.8 673,653.0 676,652.1 679,651.3 682,650.4 685,649.4 688,648.5 691,647.6 694,646.6 697,645.6 700,644.6 703,643.6 706,642.6 709,641.5 712,640.5 715,639.4 718,638.3 721,637.2 724,636.0 727,634.9 730,633.7 733,632.5 736,631.3 739,630.1 742,628.9 745,627.6 748,626.3 751,625.0 754,623.7 757,622.4 760,621.1 763,619.7 766,618.4 769,617.0 772,615.6 775,614.1 778,612.7 781,611.2 784,609.8 787,608.3 790,606.8 793,605.2 796,603.7 799,602.1 802,600.6 805,599.0 808,597.4 811,595.7 814,594.1 817,592.4 820,590.8 823,589.1 826,587.4 829,585.6" stroke="#00e000" fill="none" stroke-width="1" shape-rendering="crispEdges"/></g>
<g shape-rendering="auto" text-rendering="geometricPrecision"><text x="425" y="30.7" font-size="17" textLength="76" lengthAdjust="spacing">2007/119</text><text x="513" y="30.7" font-size="17" textLength="102.5" lengthAdjust="spacing">17:11:00.000</text><text x="264.5" y="51.5" font-size="16.5" textLength="110.5" lengthAdjust="spacing">ELSSCIL/MEx</text><text x="386.25" y="51.5" font-size="16.5" textLength="63.75" lengthAdjust="spacing">ELS-07</text><text x="461.25" y="51.5" font-size="16.5" textLength="51.25" lengthAdjust="spacing">LR-Bk</text><text x="533.75" y="51.5" font-size="16.5" textLength="242.25" lengthAdjust="spacing">(ergs/(cm**2-sr-sec-eV))</text><text x="851.5" y="59.8" font-size="16.5" textLength="31" lengthAdjust="spacing">DEF</text><text x="851.8" y="257.8" font-size="16.5" textLength="30.5" lengthAdjust="spacing">Deg</text><text x="226.5" y="238.5" font-size="14" textLength="36" lengthAdjust="spacing">17:30</text><text x="332.25" y="238.5" font-size="14" textLength="36" lengthAdjust="spacing">18:30</text><text x="437" y="238.5" font-size="14" textLength="36" lengthAdjust="spacing">19:30</text><text x="489.75" y="238.5" font-size="14" textLength="38" lengthAdjust="spacing">20:00</text><text x="596.75" y="238.5" font-size="14" textLength="36" lengthAdjust="spacing">21:00</text><text x="700" y="238.5" font-size="14" textLength="38" lengthAdjust="spacing">22:00</text><text x="753.75" y="238.5" font-size="14" textLength="38" lengthAdjust="spacing">22:30</text><text x="118" y="238.5" font-size="14" textLength="63" lengthAdjust="spacing">GMT(min)</text><text x="226.5" y="467.5" font-size="14" textLength="36" lengthAdjust="spacing">17:30</text><text x="332.25" y="467.5" font-size="14" textLength="36" lengthAdjust="spacing">18:30</text><text x="437" y="467.5" font-size="14" textLength="36" lengthAdjust="spacing">19:30</text><text x="489.75" y="467.5" font-size="14" textLength="38" lengthAdjust="spacing">20:00</text><text x="596.75" y="467.5" font-size="14" textLength="36" lengthAdjust="spacing">21:00</text><text x="700" y="467.5" font-size="14" textLength="38" lengthAdjust="spacing">22:00</text><text x="753.75" y="467.5" font-size="14" textLength="38" lengthAdjust="spacing">22:30</text><text x="118" y="467.5" font-size="14" textLength="63" lengthAdjust="spacing">GMT(min)</text><text x="226.5" y="696.5" font-size="14" textLength="36" lengthAdjust="spacing">17:30</text><text x="332.25" y="696.5" font-size="14" textLength="36" lengthAdjust="spacing">18:30</text><text x="437" y="696.5" font-size="14" textLength="36" lengthAdjust="spacing">19:30</text><text x="489.75" y="696.5" font-size="14" textLength="38" lengthAdjust="spacing">20:00</text><text x="596.75" y="696.5" font-size="14" textLength="36" lengthAdjust="spacing">21:00</text><text x="700" y="696.5" font-size="14" textLength="38" lengthAdjust="spacing">22:00</text><text x="753.75" y="696.5" font-size="14" textLength="38" lengthAdjust="spacing">22:30</text><text x="118" y="696.5" font-size="14" textLength="63" lengthAdjust="spacing">GMT(min)</text><text x="175.8" y="86" font-size="13.5" textLength="13" lengthAdjust="spacingAndGlyphs">10</text><text x="189.8" y="79.5" font-size="8.5">2</text><text x="175.8" y="155" font-size="13.5" textLength="13" lengthAdjust="spacingAndGlyphs">10</text><text x="189.8" y="148.5" font-size="8.5">1</text><text x="175.8" y="224" font-size="13.5" textLength="13" lengthAdjust="spacingAndGlyphs">10</text><text x="189.8" y="217.5" font-size="8.5">0</text><text x="894" y="82.5" font-size="15.5" textLength="17" lengthAdjust="spacing">10</text><text x="913.5" y="74" font-size="10" textLength="13.5" lengthAdjust="spacing">−3</text><text x="894" y="124.5" font-size="15.5" textLength="17" lengthAdjust="spacing">10</text><text x="913.5" y="116" font-size="10" textLength="13.5" lengthAdjust="spacing">−4</text><text x="894" y="166.5" font-size="15.5" textLength="17" lengthAdjust="spacing">10</text><text x="913.5" y="158" font-size="10" textLength="13.5" lengthAdjust="spacing">−5</text><text x="894" y="209" font-size="15.5" textLength="17" lengthAdjust="spacing">10</text><text x="913.5" y="200.5" font-size="10" textLength="13.5" lengthAdjust="spacing">−6</text><text x="895.5" y="280.5" font-size="17" textLength="27.5" lengthAdjust="spacing">180</text><text x="895.5" y="319" font-size="17" textLength="27.5" lengthAdjust="spacing">135</text><text x="895.5" y="357.5" font-size="17" textLength="19.5" lengthAdjust="spacing">90</text><text x="895.5" y="396" font-size="17" textLength="19.5" lengthAdjust="spacing">45</text><text x="895.5" y="434.5" font-size="17">0</text><text x="74.5" y="268.6" font-size="14" textLength="43.5" lengthAdjust="spacing">ELS-11</text><text x="127" y="268.6" font-size="14" textLength="31" lengthAdjust="spacing">Pitch</text><text x="167.5" y="268.6" font-size="14" textLength="35.5" lengthAdjust="spacing">Angle</text><text x="70.5" y="286.2" font-size="14" textLength="47.5" lengthAdjust="spacing">ELS-10</text><text x="127" y="286.2" font-size="14" textLength="31" lengthAdjust="spacing">Pitch</text><text x="167.5" y="286.2" font-size="14" textLength="35.5" lengthAdjust="spacing">Angle</text><text x="67.5" y="303.8" font-size="14" textLength="50.5" lengthAdjust="spacing">ELS-09</text><text x="127" y="303.8" font-size="14" textLength="31" lengthAdjust="spacing">Pitch</text><text x="167.5" y="303.8" font-size="14" textLength="35.5" lengthAdjust="spacing">Angle</text><text x="67.5" y="321.4" font-size="14" textLength="50.5" lengthAdjust="spacing">ELS-08</text><text x="127" y="321.4" font-size="14" textLength="31" lengthAdjust="spacing">Pitch</text><text x="167.5" y="321.4" font-size="14" textLength="35.5" lengthAdjust="spacing">Angle</text><text x="67.5" y="339" font-size="14" textLength="50.5" lengthAdjust="spacing">ELS-07</text><text x="127" y="339" font-size="14" textLength="31" lengthAdjust="spacing">Pitch</text><text x="167.5" y="339" font-size="14" textLength="35.5" lengthAdjust="spacing">Angle</text><text x="67.5" y="356.6" font-size="14" textLength="50.5" lengthAdjust="spacing">ELS-06</text><text x="127" y="356.6" font-size="14" textLength="31" lengthAdjust="spacing">Pitch</text><text x="167.5" y="356.6" font-size="14" textLength="35.5" lengthAdjust="spacing">Angle</text><text x="67.5" y="374.2" font-size="14" textLength="50.5" lengthAdjust="spacing">ELS-05</text><text x="127" y="374.2" font-size="14" textLength="31" lengthAdjust="spacing">Pitch</text><text x="167.5" y="374.2" font-size="14" textLength="35.5" lengthAdjust="spacing">Angle</text><text x="67.5" y="391.8" font-size="14" textLength="50.5" lengthAdjust="spacing">ELS-04</text><text x="127" y="391.8" font-size="14" textLength="31" lengthAdjust="spacing">Pitch</text><text x="167.5" y="391.8" font-size="14" textLength="35.5" lengthAdjust="spacing">Angle</text><text x="67.5" y="409.4" font-size="14" textLength="50.5" lengthAdjust="spacing">ELS-03</text><text x="127" y="409.4" font-size="14" textLength="31" lengthAdjust="spacing">Pitch</text><text x="167.5" y="409.4" font-size="14" textLength="35.5" lengthAdjust="spacing">Angle</text><text x="67.5" y="427" font-size="14" textLength="50.5" lengthAdjust="spacing">ELS-02</text><text x="127" y="427" font-size="14" textLength="31" lengthAdjust="spacing">Pitch</text><text x="167.5" y="427" font-size="14" textLength="35.5" lengthAdjust="spacing">Angle</text><text x="70.5" y="444.6" font-size="14" textLength="47.5" lengthAdjust="spacing">ELS-01</text><text x="127" y="444.6" font-size="14" textLength="31" lengthAdjust="spacing">Pitch</text><text x="167.5" y="444.6" font-size="14" textLength="35.5" lengthAdjust="spacing">Angle</text><text x="194.5" y="506.3" font-size="14" text-anchor="end">4</text><text x="194.5" y="541.7" font-size="14" text-anchor="end">3</text><text x="194.5" y="577.1" font-size="14" text-anchor="end">2</text><text x="194.5" y="612.5" font-size="14" text-anchor="end">1</text><text x="194.5" y="647.9" font-size="14" text-anchor="end">0</text><text x="194.5" y="683.3" font-size="14" text-anchor="end">−1</text><text x="846.3" y="506.4" font-size="14.5" textLength="53" lengthAdjust="spacing">1.0e+04</text><text x="846.3" y="541.8" font-size="14.5" textLength="53" lengthAdjust="spacing">6.0e+03</text><text x="846.3" y="577.2" font-size="14.5" textLength="53" lengthAdjust="spacing">2.0e+03</text><text x="846.3" y="612.6" font-size="14.5" textLength="65" lengthAdjust="spacing">−2.0e+03</text><text x="846.3" y="648" font-size="14.5" textLength="65" lengthAdjust="spacing">−6.0e+03</text><text x="846.3" y="683.4" font-size="14.5" textLength="65" lengthAdjust="spacing">−1.0e+04</text><text x="211.5" y="491.9" font-size="16.5" textLength="29.5" lengthAdjust="spacing">SAF</text><text x="244.5" y="491.9" font-size="16.5">_</text><text x="256" y="491.9" font-size="16.5" textLength="92" lengthAdjust="spacing">BXuT/Data</text><text x="358.75" y="491.9" font-size="16.5" textLength="56.25" lengthAdjust="spacing">Quality</text><text x="426.25" y="491.9" font-size="16.5" textLength="22.5" lengthAdjust="spacing">(L)</text><text x="531" y="492.3" font-size="16.5" textLength="138.4" lengthAdjust="spacing" style="fill:#00ec00">MEXORBMC/SPF</text><text x="676.25" y="492.3" font-size="16.5" textLength="15.75" lengthAdjust="spacing" style="fill:#00ec00">X,</text><text x="702.2" y="492.3" font-size="16.5" textLength="92.8" lengthAdjust="spacing" style="fill:#00ec00">Spacecraft</text><text x="804.4" y="492.3" font-size="16.5" textLength="25" lengthAdjust="spacing" style="fill:#00ec00">(R)</text><text x="69.7" y="204.8" font-size="16.5" textLength="64.2" lengthAdjust="spacing" transform="rotate(-90 69.7 204.8)">Electron</text><text x="69.7" y="129" font-size="16.5" textLength="54.5" lengthAdjust="spacing" transform="rotate(-90 69.7 129)">Energy</text><text x="89.3" y="156.7" font-size="16.5" textLength="31" lengthAdjust="spacing" transform="rotate(-90 89.3 156.7)">(eV)</text><text x="69.9" y="661" font-size="16.5" textLength="31.2" lengthAdjust="spacing" transform="rotate(-90 69.9 661)">Raw</text><text x="69.9" y="618" font-size="16.5" textLength="34" lengthAdjust="spacing" transform="rotate(-90 69.9 618)">Data</text><text x="69.9" y="574" font-size="16.5" textLength="56" lengthAdjust="spacing" transform="rotate(-90 69.9 574)">Quality</text><text x="90.7" y="612" font-size="16.5" textLength="45.5" lengthAdjust="spacing" transform="rotate(-90 90.7 612)">(Raw)</text><text x="969.2" y="504.6" font-size="16.5" textLength="94.7" lengthAdjust="spacing" transform="rotate(90 969.2 504.6)">Component</text><text x="969.2" y="607.4" font-size="16.5" textLength="69" lengthAdjust="spacing" transform="rotate(90 969.2 607.4)">Distance</text><text x="949.6" y="569" font-size="16.5" textLength="41" lengthAdjust="spacing" transform="rotate(90 949.6 569)">(km)</text></g>
</svg>
</div></body></html>
